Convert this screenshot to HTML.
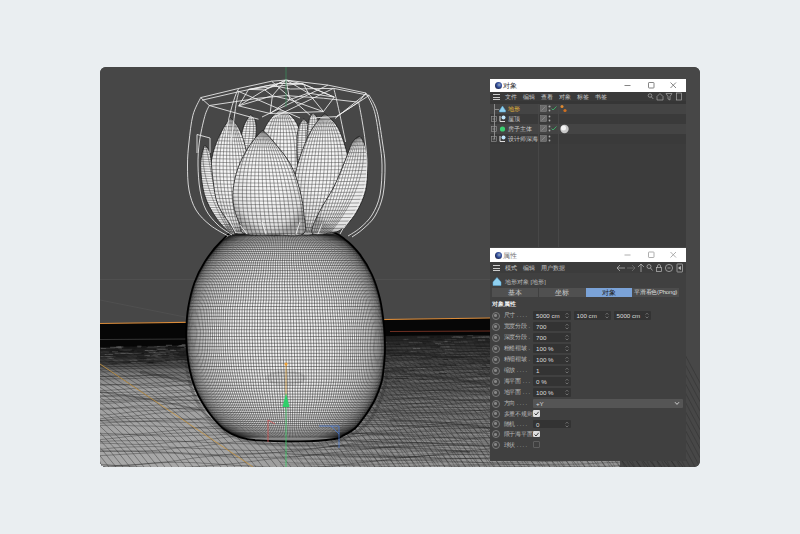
<!DOCTYPE html>
<html><head><meta charset="utf-8">
<style>
*{margin:0;padding:0;box-sizing:border-box}
html,body{width:800px;height:534px;overflow:hidden;background:#eaeef1;font-family:"Liberation Sans",sans-serif}
#frame{position:absolute;left:100px;top:67px;width:600px;height:400px;border-radius:6px;background:#474747;overflow:hidden}
#vp{position:absolute;left:0;top:0}
.abs{position:absolute}
.win{position:absolute;left:490px;width:196px;background:#3c3c3c;overflow:hidden}
.tb{position:absolute;left:0;top:0;width:196px;height:13px;background:#fff}
.tb .t{position:absolute;left:13px;top:2px;font-size:7px;color:#333;line-height:9px}
.c4d{position:absolute;left:5px;top:3px;width:7px;height:7px;border-radius:50%;background:radial-gradient(circle at 60% 40%,#9ab 0,#3350a0 40%,#112 90%)}
.txt{position:absolute;font-size:5.8px;line-height:8px;color:#c8c8c8;white-space:nowrap}
.mb{position:absolute;left:0;width:196px;background:#3a3a3a}
.ham{position:absolute;left:3px;width:7px;height:6px;border-top:1px solid #ccc;border-bottom:1px solid #ccc}
.ham:after{content:"";position:absolute;left:0;top:1.5px;width:7px;height:1px;background:#ccc}
.row{position:absolute;left:0;width:196px;height:10px}
.fld{position:absolute;height:8.6px;background:#333;border-radius:1px}
.fld .v{position:absolute;left:3px;top:0;font-size:6.2px;line-height:9px;color:#ddd}
.spin{position:absolute;right:2px;top:1px;width:4px;height:6px;font-size:4px;line-height:3px;color:#999;text-align:center}
.eye{position:absolute;left:3px;width:8px;height:8px;border-radius:50%;border:1px solid #7a7a7a;background:#444}
.eye:after{content:"";position:absolute;left:1.5px;top:1.7px;width:3px;height:2.6px;border-radius:50%;background:#888}
.lbl{position:absolute;left:15px;font-size:5.6px;line-height:9px;color:#b8b8b8;white-space:nowrap;letter-spacing:-0.1px}
.chk{position:absolute;width:7px;height:6.5px;background:#ddd;border-radius:1px;font-size:6px;line-height:7px;color:#222;text-align:center;font-weight:bold}
.tab{position:absolute;top:288px;height:9px;background:#505050;font-size:6.5px;line-height:9px;color:#ccc;text-align:center;white-space:nowrap;overflow:hidden}
</style></head><body>
<div id="frame">
<svg id="vp" width="600" height="400" viewBox="100 67 600 400">
<defs>
<pattern id="mesh" width="2.1" height="2.3" patternUnits="userSpaceOnUse">
<rect width="2.1" height="2.3" fill="#ebebeb"/>
<path d="M0 0 H2.1 M0 0 V2.3" stroke="#262626" stroke-width="0.66"/>
</pattern>
<pattern id="lmesh" width="3.2" height="3" patternUnits="userSpaceOnUse">
<rect width="3.2" height="3" fill="#f4f4f4"/>
<path d="M0 0 H3.2 M0 0 V3" stroke="#2a2a2a" stroke-width="0.45"/>
</pattern>
<radialGradient id="bshade" cx="0.49" cy="0.5" r="0.54">
<stop offset="0.45" stop-color="#000" stop-opacity="0"/>
<stop offset="0.8" stop-color="#000" stop-opacity="0.15"/>
<stop offset="0.93" stop-color="#000" stop-opacity="0.38"/>
<stop offset="1" stop-color="#000" stop-opacity="0.7"/>
</radialGradient>
<linearGradient id="terrL" gradientUnits="userSpaceOnUse" x1="0" y1="346" x2="0" y2="467">
<stop offset="0" stop-color="#141414"/>
<stop offset="0.12" stop-color="#383838"/>
<stop offset="0.22" stop-color="#787878"/>
<stop offset="0.35" stop-color="#9e9e9e"/>
<stop offset="1" stop-color="#a8a8a8"/>
</linearGradient>
<linearGradient id="terrR" gradientUnits="userSpaceOnUse" x1="0" y1="335" x2="0" y2="467">
<stop offset="0" stop-color="#1a1a1a"/>
<stop offset="0.12" stop-color="#404040"/>
<stop offset="0.4" stop-color="#6a6a6a"/>
<stop offset="0.7" stop-color="#858585"/>
<stop offset="1" stop-color="#959595"/>
</linearGradient>
<radialGradient id="lshade" cx="0.5" cy="0.4" r="0.6">
<stop offset="0.4" stop-color="#000" stop-opacity="0"/>
<stop offset="0.85" stop-color="#000" stop-opacity="0.08"/>
<stop offset="1" stop-color="#000" stop-opacity="0.3"/>
</radialGradient>
<linearGradient id="btop" x1="0" y1="0" x2="0" y2="1">
<stop offset="0" stop-color="#000" stop-opacity="0.22"/>
<stop offset="0.15" stop-color="#000" stop-opacity="0.08"/>
<stop offset="0.3" stop-color="#000" stop-opacity="0"/>
<stop offset="0.8" stop-color="#000" stop-opacity="0"/>
<stop offset="1" stop-color="#000" stop-opacity="0.15"/>
</linearGradient>
<linearGradient id="rgrad" gradientUnits="userSpaceOnUse" x1="200" y1="0" x2="390" y2="0">
<stop offset="0" stop-color="#000"/>
<stop offset="1" stop-color="#fff"/>
</linearGradient>
<mask id="rmask" maskUnits="userSpaceOnUse" x="100" y="300" width="600" height="200"><rect x="100" y="300" width="600" height="200" fill="url(#rgrad)"/></mask>
</defs>
<rect x="100" y="67" width="600" height="400" fill="#474747"/>
<!-- faint grid -->
<g stroke="#555" stroke-width="0.6" fill="none">
<path d="M100 279.5 L490 279.5"/>
<path d="M100 300 L190 318"/>
</g>
<!-- terrain -->
<polygon points="100,323.5 490,318 620,317 620,467 100,467" fill="#060606"/>
<polygon points="100,347 190,345 285,341 390,336 490,335 620,334 620,467 100,467" fill="url(#terrL)"/>
<polygon points="100,347 190,345 285,341 390,336 490,335 620,334 620,467 100,467" fill="url(#terrR)" mask="url(#rmask)"/>
<path d="M 367.4 343.5 h 12.0" stroke="#111" stroke-width="0.8" stroke-opacity="0.6"/>
<path d="M 234.9 360.7 h 8.3" stroke="#888" stroke-width="0.8" stroke-opacity="0.6"/>
<path d="M 144.8 350.5 h 12.5" stroke="#888" stroke-width="0.8" stroke-opacity="0.6"/>
<path d="M 327.5 341.6 h 8.8" stroke="#5a5a5a" stroke-width="0.8" stroke-opacity="0.6"/>
<path d="M 286.3 359.1 h 12.5" stroke="#111" stroke-width="0.8" stroke-opacity="0.6"/>
<path d="M 246.2 342.7 h 6.8" stroke="#888" stroke-width="0.8" stroke-opacity="0.6"/>
<path d="M 343.1 366.0 h 13.7" stroke="#0a0a0a" stroke-width="0.8" stroke-opacity="0.6"/>
<path d="M 218.1 358.5 h 12.7" stroke="#0a0a0a" stroke-width="0.8" stroke-opacity="0.6"/>
<path d="M 226.1 347.8 h 13.2" stroke="#5a5a5a" stroke-width="0.8" stroke-opacity="0.6"/>
<path d="M 460.3 348.3 h 9.1" stroke="#5a5a5a" stroke-width="0.8" stroke-opacity="0.6"/>
<path d="M 264.9 346.0 h 5.0" stroke="#5a5a5a" stroke-width="0.8" stroke-opacity="0.6"/>
<path d="M 372.1 357.6 h 7.2" stroke="#777" stroke-width="0.8" stroke-opacity="0.6"/>
<path d="M 226.4 344.3 h 13.1" stroke="#111" stroke-width="0.8" stroke-opacity="0.6"/>
<path d="M 167.3 349.4 h 5.2" stroke="#111" stroke-width="0.8" stroke-opacity="0.6"/>
<path d="M 315.6 350.3 h 11.0" stroke="#0a0a0a" stroke-width="0.8" stroke-opacity="0.6"/>
<path d="M 288.1 345.3 h 8.6" stroke="#888" stroke-width="0.8" stroke-opacity="0.6"/>
<path d="M 146.5 353.0 h 4.3" stroke="#111" stroke-width="0.8" stroke-opacity="0.6"/>
<path d="M 438.7 353.2 h 7.4" stroke="#777" stroke-width="0.8" stroke-opacity="0.6"/>
<path d="M 287.0 366.7 h 5.5" stroke="#5a5a5a" stroke-width="0.8" stroke-opacity="0.6"/>
<path d="M 145.7 362.2 h 8.2" stroke="#111" stroke-width="0.8" stroke-opacity="0.6"/>
<path d="M 157.5 349.3 h 10.5" stroke="#5a5a5a" stroke-width="0.8" stroke-opacity="0.6"/>
<path d="M 322.8 356.6 h 5.2" stroke="#888" stroke-width="0.8" stroke-opacity="0.6"/>
<path d="M 196.3 346.4 h 6.8" stroke="#5a5a5a" stroke-width="0.8" stroke-opacity="0.6"/>
<path d="M 452.1 337.6 h 10.7" stroke="#777" stroke-width="0.8" stroke-opacity="0.6"/>
<path d="M 187.9 349.9 h 13.7" stroke="#5a5a5a" stroke-width="0.8" stroke-opacity="0.6"/>
<path d="M 423.1 339.5 h 3.5" stroke="#111" stroke-width="0.8" stroke-opacity="0.6"/>
<path d="M 205.1 350.3 h 7.1" stroke="#111" stroke-width="0.8" stroke-opacity="0.6"/>
<path d="M 390.5 354.2 h 10.6" stroke="#111" stroke-width="0.8" stroke-opacity="0.6"/>
<path d="M 481.4 348.0 h 6.2" stroke="#5a5a5a" stroke-width="0.8" stroke-opacity="0.6"/>
<path d="M 328.4 350.9 h 3.5" stroke="#888" stroke-width="0.8" stroke-opacity="0.6"/>
<path d="M 268.2 341.8 h 11.7" stroke="#888" stroke-width="0.8" stroke-opacity="0.6"/>
<path d="M 296.9 382.8 h 12.3" stroke="#5a5a5a" stroke-width="0.8" stroke-opacity="0.6"/>
<path d="M 200.2 352.9 h 9.2" stroke="#5a5a5a" stroke-width="0.8" stroke-opacity="0.6"/>
<path d="M 179.0 345.7 h 13.8" stroke="#777" stroke-width="0.8" stroke-opacity="0.6"/>
<path d="M 289.0 369.7 h 4.6" stroke="#0a0a0a" stroke-width="0.8" stroke-opacity="0.6"/>
<path d="M 231.4 356.2 h 11.0" stroke="#5a5a5a" stroke-width="0.8" stroke-opacity="0.6"/>
<path d="M 153.3 354.2 h 12.7" stroke="#888" stroke-width="0.8" stroke-opacity="0.6"/>
<path d="M 137.2 356.3 h 9.9" stroke="#0a0a0a" stroke-width="0.8" stroke-opacity="0.6"/>
<path d="M 252.4 347.8 h 13.9" stroke="#0a0a0a" stroke-width="0.8" stroke-opacity="0.6"/>
<path d="M 272.7 343.0 h 12.1" stroke="#777" stroke-width="0.8" stroke-opacity="0.6"/>
<path d="M 209.8 354.1 h 4.9" stroke="#777" stroke-width="0.8" stroke-opacity="0.6"/>
<path d="M 231.3 354.1 h 12.2" stroke="#5a5a5a" stroke-width="0.8" stroke-opacity="0.6"/>
<path d="M 139.6 358.7 h 7.3" stroke="#0a0a0a" stroke-width="0.8" stroke-opacity="0.6"/>
<path d="M 273.6 351.5 h 6.6" stroke="#888" stroke-width="0.8" stroke-opacity="0.6"/>
<path d="M 272.0 343.8 h 3.1" stroke="#888" stroke-width="0.8" stroke-opacity="0.6"/>
<path d="M 189.7 349.1 h 4.1" stroke="#5a5a5a" stroke-width="0.8" stroke-opacity="0.6"/>
<path d="M 482.7 337.0 h 10.3" stroke="#888" stroke-width="0.8" stroke-opacity="0.6"/>
<path d="M 213.1 343.6 h 3.3" stroke="#5a5a5a" stroke-width="0.8" stroke-opacity="0.6"/>
<path d="M 187.1 349.8 h 8.6" stroke="#0a0a0a" stroke-width="0.8" stroke-opacity="0.6"/>
<path d="M 248.7 357.7 h 5.3" stroke="#0a0a0a" stroke-width="0.8" stroke-opacity="0.6"/>
<path d="M 266.4 345.0 h 3.7" stroke="#111" stroke-width="0.8" stroke-opacity="0.6"/>
<path d="M 295.0 342.4 h 13.2" stroke="#0a0a0a" stroke-width="0.8" stroke-opacity="0.6"/>
<path d="M 466.1 338.3 h 8.7" stroke="#5a5a5a" stroke-width="0.8" stroke-opacity="0.6"/>
<path d="M 489.8 338.1 h 7.0" stroke="#5a5a5a" stroke-width="0.8" stroke-opacity="0.6"/>
<path d="M 147.6 351.9 h 8.3" stroke="#888" stroke-width="0.8" stroke-opacity="0.6"/>
<path d="M 388.8 368.5 h 3.2" stroke="#777" stroke-width="0.8" stroke-opacity="0.6"/>
<path d="M 284.7 341.3 h 10.8" stroke="#111" stroke-width="0.8" stroke-opacity="0.6"/>
<path d="M 453.2 336.6 h 10.4" stroke="#5a5a5a" stroke-width="0.8" stroke-opacity="0.6"/>
<path d="M 418.5 352.7 h 11.6" stroke="#888" stroke-width="0.8" stroke-opacity="0.6"/>
<path d="M 220.5 350.9 h 7.5" stroke="#777" stroke-width="0.8" stroke-opacity="0.6"/>
<path d="M 144.3 355.7 h 5.6" stroke="#888" stroke-width="0.8" stroke-opacity="0.6"/>
<path d="M 390.5 355.5 h 11.5" stroke="#0a0a0a" stroke-width="0.8" stroke-opacity="0.6"/>
<path d="M 154.2 346.5 h 13.6" stroke="#5a5a5a" stroke-width="0.8" stroke-opacity="0.6"/>
<path d="M 299.9 383.3 h 3.1" stroke="#777" stroke-width="0.8" stroke-opacity="0.6"/>
<path d="M 241.3 349.0 h 3.9" stroke="#5a5a5a" stroke-width="0.8" stroke-opacity="0.6"/>
<path d="M 318.6 351.3 h 8.1" stroke="#0a0a0a" stroke-width="0.8" stroke-opacity="0.6"/>
<path d="M 465.8 344.0 h 8.3" stroke="#5a5a5a" stroke-width="0.8" stroke-opacity="0.6"/>
<path d="M 406.8 366.7 h 5.3" stroke="#777" stroke-width="0.8" stroke-opacity="0.6"/>
<path d="M 353.7 368.1 h 13.5" stroke="#111" stroke-width="0.8" stroke-opacity="0.6"/>
<path d="M 393.7 365.4 h 9.6" stroke="#888" stroke-width="0.8" stroke-opacity="0.6"/>
<path d="M 489.2 335.5 h 7.4" stroke="#111" stroke-width="0.8" stroke-opacity="0.6"/>
<path d="M 170.8 345.4 h 5.0" stroke="#0a0a0a" stroke-width="0.8" stroke-opacity="0.6"/>
<path d="M 276.4 346.7 h 7.6" stroke="#0a0a0a" stroke-width="0.8" stroke-opacity="0.6"/>
<path d="M 232.7 348.0 h 3.4" stroke="#111" stroke-width="0.8" stroke-opacity="0.6"/>
<path d="M 241.8 353.8 h 6.0" stroke="#888" stroke-width="0.8" stroke-opacity="0.6"/>
<path d="M 153.8 360.2 h 11.4" stroke="#777" stroke-width="0.8" stroke-opacity="0.6"/>
<path d="M 350.4 367.2 h 4.1" stroke="#111" stroke-width="0.8" stroke-opacity="0.6"/>
<path d="M 286.5 351.7 h 8.5" stroke="#111" stroke-width="0.8" stroke-opacity="0.6"/>
<path d="M 339.0 354.3 h 3.6" stroke="#0a0a0a" stroke-width="0.8" stroke-opacity="0.6"/>
<path d="M 378.9 377.8 h 5.1" stroke="#777" stroke-width="0.8" stroke-opacity="0.6"/>
<path d="M 482.0 337.5 h 11.5" stroke="#777" stroke-width="0.8" stroke-opacity="0.6"/>
<path d="M 147.6 353.8 h 13.4" stroke="#5a5a5a" stroke-width="0.8" stroke-opacity="0.6"/>
<path d="M 314.2 342.5 h 7.6" stroke="#888" stroke-width="0.8" stroke-opacity="0.6"/>
<path d="M 161.5 355.4 h 9.9" stroke="#111" stroke-width="0.8" stroke-opacity="0.6"/>
<path d="M 223.1 348.5 h 13.2" stroke="#5a5a5a" stroke-width="0.8" stroke-opacity="0.6"/>
<path d="M 314.5 360.8 h 6.8" stroke="#0a0a0a" stroke-width="0.8" stroke-opacity="0.6"/>
<path d="M 250.3 359.7 h 6.1" stroke="#777" stroke-width="0.8" stroke-opacity="0.6"/>
<path d="M 180.6 348.9 h 12.4" stroke="#5a5a5a" stroke-width="0.8" stroke-opacity="0.6"/>
<path d="M 189.4 359.6 h 6.7" stroke="#5a5a5a" stroke-width="0.8" stroke-opacity="0.6"/>
<path d="M 401.8 371.9 h 5.3" stroke="#111" stroke-width="0.8" stroke-opacity="0.6"/>
<path d="M 100.6 356.3 h 12.0" stroke="#888" stroke-width="0.8" stroke-opacity="0.6"/>
<path d="M 464.2 365.2 h 12.0" stroke="#777" stroke-width="0.8" stroke-opacity="0.6"/>
<path d="M 408.6 346.6 h 6.2" stroke="#5a5a5a" stroke-width="0.8" stroke-opacity="0.6"/>
<path d="M 477.7 374.1 h 13.1" stroke="#0a0a0a" stroke-width="0.8" stroke-opacity="0.6"/>
<path d="M 404.7 351.4 h 5.8" stroke="#0a0a0a" stroke-width="0.8" stroke-opacity="0.6"/>
<path d="M 452.8 342.3 h 6.2" stroke="#0a0a0a" stroke-width="0.8" stroke-opacity="0.6"/>
<path d="M 178.2 360.5 h 6.4" stroke="#777" stroke-width="0.8" stroke-opacity="0.6"/>
<path d="M 141.6 361.0 h 7.4" stroke="#5a5a5a" stroke-width="0.8" stroke-opacity="0.6"/>
<path d="M 410.0 368.4 h 5.6" stroke="#777" stroke-width="0.8" stroke-opacity="0.6"/>
<path d="M 337.1 341.6 h 4.9" stroke="#5a5a5a" stroke-width="0.8" stroke-opacity="0.6"/>
<path d="M 234.1 344.1 h 6.6" stroke="#777" stroke-width="0.8" stroke-opacity="0.6"/>
<path d="M 403.9 359.0 h 3.7" stroke="#5a5a5a" stroke-width="0.8" stroke-opacity="0.6"/>
<path d="M 316.8 340.5 h 7.9" stroke="#111" stroke-width="0.8" stroke-opacity="0.6"/>
<path d="M 489.3 338.1 h 3.0" stroke="#888" stroke-width="0.8" stroke-opacity="0.6"/>
<path d="M 244.1 356.8 h 6.1" stroke="#0a0a0a" stroke-width="0.8" stroke-opacity="0.6"/>
<path d="M 177.2 350.3 h 8.2" stroke="#5a5a5a" stroke-width="0.8" stroke-opacity="0.6"/>
<path d="M 385.4 378.8 h 6.6" stroke="#0a0a0a" stroke-width="0.8" stroke-opacity="0.6"/>
<path d="M 293.4 354.7 h 8.2" stroke="#5a5a5a" stroke-width="0.8" stroke-opacity="0.6"/>
<path d="M 172.6 362.3 h 4.3" stroke="#888" stroke-width="0.8" stroke-opacity="0.6"/>
<path d="M 168.3 357.7 h 5.9" stroke="#777" stroke-width="0.8" stroke-opacity="0.6"/>
<path d="M 241.5 342.7 h 5.4" stroke="#5a5a5a" stroke-width="0.8" stroke-opacity="0.6"/>
<path d="M 442.0 380.1 h 3.6" stroke="#111" stroke-width="0.8" stroke-opacity="0.6"/>
<path d="M 164.4 354.3 h 8.5" stroke="#5a5a5a" stroke-width="0.8" stroke-opacity="0.6"/>
<path d="M 390.2 370.0 h 14.0" stroke="#111" stroke-width="0.8" stroke-opacity="0.6"/>
<path d="M 441.3 354.8 h 3.9" stroke="#777" stroke-width="0.8" stroke-opacity="0.6"/>
<path d="M 359.6 343.1 h 4.1" stroke="#777" stroke-width="0.8" stroke-opacity="0.6"/>
<path d="M 358.3 339.3 h 5.3" stroke="#111" stroke-width="0.8" stroke-opacity="0.6"/>
<path d="M 114.7 353.1 h 13.3" stroke="#888" stroke-width="0.8" stroke-opacity="0.6"/>
<path d="M 227.2 348.4 h 13.8" stroke="#5a5a5a" stroke-width="0.8" stroke-opacity="0.6"/>
<path d="M 398.9 364.1 h 3.2" stroke="#888" stroke-width="0.8" stroke-opacity="0.6"/>
<path d="M 373.8 361.9 h 3.2" stroke="#0a0a0a" stroke-width="0.8" stroke-opacity="0.6"/>
<path d="M 269.7 352.4 h 6.8" stroke="#0a0a0a" stroke-width="0.8" stroke-opacity="0.6"/>
<path d="M 303.6 365.4 h 4.5" stroke="#5a5a5a" stroke-width="0.8" stroke-opacity="0.6"/>
<path d="M 435.2 343.4 h 5.6" stroke="#888" stroke-width="0.8" stroke-opacity="0.6"/>
<path d="M 312.5 349.1 h 11.9" stroke="#888" stroke-width="0.8" stroke-opacity="0.6"/>
<path d="M 303.0 367.0 h 6.5" stroke="#5a5a5a" stroke-width="0.8" stroke-opacity="0.6"/>
<path d="M 234.5 354.6 h 4.9" stroke="#5a5a5a" stroke-width="0.8" stroke-opacity="0.6"/>
<path d="M 128.7 362.2 h 11.0" stroke="#0a0a0a" stroke-width="0.8" stroke-opacity="0.6"/>
<path d="M 277.7 358.6 h 8.6" stroke="#888" stroke-width="0.8" stroke-opacity="0.6"/>
<path d="M 459.4 358.2 h 3.1" stroke="#5a5a5a" stroke-width="0.8" stroke-opacity="0.6"/>
<path d="M 271.9 341.9 h 10.0" stroke="#0a0a0a" stroke-width="0.8" stroke-opacity="0.6"/>
<path d="M 357.5 360.1 h 9.8" stroke="#111" stroke-width="0.8" stroke-opacity="0.6"/>
<path d="M 308.6 369.5 h 11.5" stroke="#888" stroke-width="0.8" stroke-opacity="0.6"/>
<path d="M 430.5 381.7 h 4.0" stroke="#777" stroke-width="0.8" stroke-opacity="0.6"/>
<path d="M 417.1 368.4 h 7.4" stroke="#888" stroke-width="0.8" stroke-opacity="0.6"/>
<path d="M 178.9 347.0 h 4.5" stroke="#0a0a0a" stroke-width="0.8" stroke-opacity="0.6"/>
<path d="M 453.8 342.1 h 13.9" stroke="#888" stroke-width="0.8" stroke-opacity="0.6"/>
<path d="M 343.8 344.7 h 10.4" stroke="#777" stroke-width="0.8" stroke-opacity="0.6"/>
<path d="M 213.0 353.2 h 11.9" stroke="#777" stroke-width="0.8" stroke-opacity="0.6"/>
<path d="M 100.6 352.2 h 8.4" stroke="#777" stroke-width="0.8" stroke-opacity="0.6"/>
<path d="M 455.8 358.9 h 11.6" stroke="#888" stroke-width="0.8" stroke-opacity="0.6"/>
<path d="M 343.8 359.6 h 8.5" stroke="#0a0a0a" stroke-width="0.8" stroke-opacity="0.6"/>
<path d="M 285.7 346.6 h 5.2" stroke="#777" stroke-width="0.8" stroke-opacity="0.6"/>
<path d="M 241.8 349.7 h 6.8" stroke="#777" stroke-width="0.8" stroke-opacity="0.6"/>
<path d="M 169.8 350.7 h 6.6" stroke="#888" stroke-width="0.8" stroke-opacity="0.6"/>
<path d="M 432.0 356.7 h 5.6" stroke="#0a0a0a" stroke-width="0.8" stroke-opacity="0.6"/>
<path d="M 347.4 340.1 h 11.3" stroke="#888" stroke-width="0.8" stroke-opacity="0.6"/>
<path d="M 364.8 347.0 h 9.3" stroke="#0a0a0a" stroke-width="0.8" stroke-opacity="0.6"/>
<path d="M 197.2 358.4 h 12.0" stroke="#0a0a0a" stroke-width="0.8" stroke-opacity="0.6"/>
<path d="M 246.9 348.0 h 10.4" stroke="#111" stroke-width="0.8" stroke-opacity="0.6"/>
<path d="M 122.6 362.2 h 12.3" stroke="#0a0a0a" stroke-width="0.8" stroke-opacity="0.6"/>
<path d="M 131.4 361.9 h 7.6" stroke="#5a5a5a" stroke-width="0.8" stroke-opacity="0.6"/>
<path d="M 148.0 346.9 h 11.8" stroke="#777" stroke-width="0.8" stroke-opacity="0.6"/>
<path d="M 258.8 342.3 h 10.6" stroke="#111" stroke-width="0.8" stroke-opacity="0.6"/>
<path d="M 396.3 363.5 h 12.3" stroke="#777" stroke-width="0.8" stroke-opacity="0.6"/>
<path d="M 469.7 376.8 h 5.0" stroke="#5a5a5a" stroke-width="0.8" stroke-opacity="0.6"/>
<path d="M 442.9 365.1 h 13.2" stroke="#0a0a0a" stroke-width="0.8" stroke-opacity="0.6"/>
<path d="M 239.0 349.2 h 11.2" stroke="#111" stroke-width="0.8" stroke-opacity="0.6"/>
<path d="M 244.3 346.4 h 9.8" stroke="#888" stroke-width="0.8" stroke-opacity="0.6"/>
<path d="M 241.7 354.0 h 5.7" stroke="#888" stroke-width="0.8" stroke-opacity="0.6"/>
<path d="M 289.4 345.0 h 9.3" stroke="#111" stroke-width="0.8" stroke-opacity="0.6"/>
<path d="M 482.1 365.0 h 8.8" stroke="#111" stroke-width="0.8" stroke-opacity="0.6"/>
<path d="M 444.6 339.4 h 12.1" stroke="#5a5a5a" stroke-width="0.8" stroke-opacity="0.6"/>
<path d="M 486.4 364.9 h 7.3" stroke="#888" stroke-width="0.8" stroke-opacity="0.6"/>
<path d="M 247.3 343.1 h 12.6" stroke="#0a0a0a" stroke-width="0.8" stroke-opacity="0.6"/>
<path d="M 241.2 355.4 h 5.9" stroke="#111" stroke-width="0.8" stroke-opacity="0.6"/>
<path d="M 351.7 369.9 h 4.7" stroke="#5a5a5a" stroke-width="0.8" stroke-opacity="0.6"/>
<path d="M 301.5 347.7 h 13.8" stroke="#0a0a0a" stroke-width="0.8" stroke-opacity="0.6"/>
<path d="M 395.9 344.5 h 5.1" stroke="#111" stroke-width="0.8" stroke-opacity="0.6"/>
<path d="M 354.6 343.6 h 10.9" stroke="#0a0a0a" stroke-width="0.8" stroke-opacity="0.6"/>
<path d="M 191.0 358.8 h 5.9" stroke="#888" stroke-width="0.8" stroke-opacity="0.6"/>
<path d="M 353.0 368.5 h 13.8" stroke="#777" stroke-width="0.8" stroke-opacity="0.6"/>
<path d="M 300.2 383.0 h 3.2" stroke="#0a0a0a" stroke-width="0.8" stroke-opacity="0.6"/>
<path d="M 261.1 356.1 h 13.5" stroke="#0a0a0a" stroke-width="0.8" stroke-opacity="0.6"/>
<path d="M 313.2 381.3 h 6.4" stroke="#5a5a5a" stroke-width="0.8" stroke-opacity="0.6"/>
<path d="M 148.9 352.4 h 5.8" stroke="#888" stroke-width="0.8" stroke-opacity="0.6"/>
<path d="M 413.8 352.0 h 11.3" stroke="#111" stroke-width="0.8" stroke-opacity="0.6"/>
<path d="M 201.8 346.0 h 10.4" stroke="#0a0a0a" stroke-width="0.8" stroke-opacity="0.6"/>
<path d="M 398.0 367.6 h 3.9" stroke="#5a5a5a" stroke-width="0.8" stroke-opacity="0.6"/>
<path d="M 104.7 354.5 h 8.4" stroke="#777" stroke-width="0.8" stroke-opacity="0.6"/>
<path d="M 317.8 353.1 h 4.3" stroke="#111" stroke-width="0.8" stroke-opacity="0.6"/>
<path d="M 222.6 356.5 h 6.9" stroke="#0a0a0a" stroke-width="0.8" stroke-opacity="0.6"/>
<path d="M 256.3 342.6 h 13.7" stroke="#777" stroke-width="0.8" stroke-opacity="0.6"/>
<path d="M 365.9 351.9 h 11.0" stroke="#5a5a5a" stroke-width="0.8" stroke-opacity="0.6"/>
<path d="M 312.2 376.3 h 9.5" stroke="#5a5a5a" stroke-width="0.8" stroke-opacity="0.6"/>
<path d="M 208.4 352.9 h 5.7" stroke="#5a5a5a" stroke-width="0.8" stroke-opacity="0.6"/>
<path d="M 437.2 337.1 h 3.8" stroke="#0a0a0a" stroke-width="0.8" stroke-opacity="0.6"/>
<path d="M 100.7 348.5 h 5.5" stroke="#777" stroke-width="0.8" stroke-opacity="0.6"/>
<path d="M 178.2 345.8 h 11.4" stroke="#888" stroke-width="0.8" stroke-opacity="0.6"/>
<path d="M 254.0 348.7 h 3.3" stroke="#777" stroke-width="0.8" stroke-opacity="0.6"/>
<path d="M 419.7 341.4 h 11.6" stroke="#111" stroke-width="0.8" stroke-opacity="0.6"/>
<path d="M 404.4 339.3 h 4.0" stroke="#777" stroke-width="0.8" stroke-opacity="0.6"/>
<path d="M 318.8 347.8 h 12.2" stroke="#888" stroke-width="0.8" stroke-opacity="0.6"/>
<path d="M 171.4 346.2 h 10.6" stroke="#777" stroke-width="0.8" stroke-opacity="0.6"/>
<path d="M 445.0 352.3 h 4.7" stroke="#888" stroke-width="0.8" stroke-opacity="0.6"/>
<path d="M 187.9 350.4 h 7.4" stroke="#777" stroke-width="0.8" stroke-opacity="0.6"/>
<path d="M 444.8 341.4 h 6.3" stroke="#5a5a5a" stroke-width="0.8" stroke-opacity="0.6"/>
<path d="M 443.2 359.5 h 4.8" stroke="#0a0a0a" stroke-width="0.8" stroke-opacity="0.6"/>
<path d="M 110.1 347.3 h 11.6" stroke="#777" stroke-width="0.8" stroke-opacity="0.6"/>
<path d="M 433.9 371.2 h 9.1" stroke="#5a5a5a" stroke-width="0.8" stroke-opacity="0.6"/>
<path d="M 372.1 357.4 h 7.7" stroke="#777" stroke-width="0.8" stroke-opacity="0.6"/>
<path d="M 214.9 348.7 h 8.5" stroke="#888" stroke-width="0.8" stroke-opacity="0.6"/>
<path d="M 147.2 362.8 h 9.3" stroke="#0a0a0a" stroke-width="0.8" stroke-opacity="0.6"/>
<path d="M 448.2 341.1 h 12.7" stroke="#0a0a0a" stroke-width="0.8" stroke-opacity="0.6"/>
<path d="M 204.3 344.6 h 11.8" stroke="#111" stroke-width="0.8" stroke-opacity="0.6"/>
<path d="M 110.4 351.0 h 12.2" stroke="#0a0a0a" stroke-width="0.8" stroke-opacity="0.6"/>
<path d="M 263.4 353.5 h 4.0" stroke="#111" stroke-width="0.8" stroke-opacity="0.6"/>
<path d="M 111.6 363.8 h 5.6" stroke="#0a0a0a" stroke-width="0.8" stroke-opacity="0.6"/>
<path d="M 419.0 379.1 h 8.2" stroke="#111" stroke-width="0.8" stroke-opacity="0.6"/>
<path d="M 213.9 357.2 h 4.2" stroke="#5a5a5a" stroke-width="0.8" stroke-opacity="0.6"/>
<path d="M 331.0 340.6 h 13.4" stroke="#5a5a5a" stroke-width="0.8" stroke-opacity="0.6"/>
<path d="M 113.7 347.9 h 4.3" stroke="#5a5a5a" stroke-width="0.8" stroke-opacity="0.6"/>
<path d="M 367.9 360.8 h 8.2" stroke="#777" stroke-width="0.8" stroke-opacity="0.6"/>
<path d="M 433.1 370.3 h 10.9" stroke="#111" stroke-width="0.8" stroke-opacity="0.6"/>
<path d="M 119.6 350.0 h 12.3" stroke="#5a5a5a" stroke-width="0.8" stroke-opacity="0.6"/>
<path d="M 179.6 356.0 h 6.5" stroke="#0a0a0a" stroke-width="0.8" stroke-opacity="0.6"/>
<path d="M 216.8 355.0 h 7.2" stroke="#111" stroke-width="0.8" stroke-opacity="0.6"/>
<path d="M 199.9 354.2 h 5.3" stroke="#0a0a0a" stroke-width="0.8" stroke-opacity="0.6"/>
<path d="M 476.4 346.3 h 13.6" stroke="#0a0a0a" stroke-width="0.8" stroke-opacity="0.6"/>
<path d="M 440.8 364.5 h 9.0" stroke="#5a5a5a" stroke-width="0.8" stroke-opacity="0.6"/>
<path d="M 366.2 342.7 h 8.7" stroke="#0a0a0a" stroke-width="0.8" stroke-opacity="0.6"/>
<path d="M 253.5 359.1 h 10.0" stroke="#5a5a5a" stroke-width="0.8" stroke-opacity="0.6"/>
<path d="M 410.0 370.4 h 4.6" stroke="#0a0a0a" stroke-width="0.8" stroke-opacity="0.6"/>
<path d="M 101.0 348.3 h 13.7" stroke="#5a5a5a" stroke-width="0.8" stroke-opacity="0.6"/>
<path d="M 387.8 350.1 h 11.9" stroke="#111" stroke-width="0.8" stroke-opacity="0.6"/>
<path d="M 300.2 348.3 h 7.5" stroke="#111" stroke-width="0.8" stroke-opacity="0.6"/>
<path d="M 408.2 345.0 h 10.8" stroke="#0a0a0a" stroke-width="0.8" stroke-opacity="0.6"/>
<path d="M 340.6 347.6 h 4.2" stroke="#111" stroke-width="0.8" stroke-opacity="0.6"/>
<path d="M 338.0 345.6 h 8.1" stroke="#777" stroke-width="0.8" stroke-opacity="0.6"/>
<path d="M 489.5 348.8 h 9.3" stroke="#0a0a0a" stroke-width="0.8" stroke-opacity="0.6"/>
<path d="M 437.9 339.5 h 4.2" stroke="#111" stroke-width="0.8" stroke-opacity="0.6"/>
<path d="M 379.1 342.8 h 7.8" stroke="#777" stroke-width="0.8" stroke-opacity="0.6"/>
<path d="M 387.5 358.2 h 6.2" stroke="#5a5a5a" stroke-width="0.8" stroke-opacity="0.6"/>
<path d="M 128.7 354.3 h 5.1" stroke="#777" stroke-width="0.8" stroke-opacity="0.6"/>
<path d="M 116.4 351.2 h 7.3" stroke="#111" stroke-width="0.8" stroke-opacity="0.6"/>
<path d="M 436.0 349.4 h 3.2" stroke="#777" stroke-width="0.8" stroke-opacity="0.6"/>
<path d="M 247.0 357.0 h 8.0" stroke="#888" stroke-width="0.8" stroke-opacity="0.6"/>
<path d="M 169.3 355.4 h 4.9" stroke="#5a5a5a" stroke-width="0.8" stroke-opacity="0.6"/>
<path d="M 144.0 353.4 h 13.0" stroke="#5a5a5a" stroke-width="0.8" stroke-opacity="0.6"/>
<path d="M 344.0 347.2 h 10.0" stroke="#0a0a0a" stroke-width="0.8" stroke-opacity="0.6"/>
<path d="M 208.9 347.1 h 3.0" stroke="#111" stroke-width="0.8" stroke-opacity="0.6"/>
<path d="M 378.2 382.0 h 3.4" stroke="#5a5a5a" stroke-width="0.8" stroke-opacity="0.6"/>
<path d="M 467.4 335.7 h 5.7" stroke="#5a5a5a" stroke-width="0.8" stroke-opacity="0.6"/>
<path d="M 326.6 340.9 h 9.9" stroke="#777" stroke-width="0.8" stroke-opacity="0.6"/>
<path d="M 246.9 342.5 h 8.0" stroke="#0a0a0a" stroke-width="0.8" stroke-opacity="0.6"/>
<path d="M 153.3 350.0 h 4.7" stroke="#0a0a0a" stroke-width="0.8" stroke-opacity="0.6"/>
<path d="M 137.2 346.2 h 4.3" stroke="#777" stroke-width="0.8" stroke-opacity="0.6"/>
<path d="M 196.4 347.3 h 7.9" stroke="#0a0a0a" stroke-width="0.8" stroke-opacity="0.6"/>
<path d="M 118.1 348.4 h 3.8" stroke="#777" stroke-width="0.8" stroke-opacity="0.6"/>
<path d="M 285.6 377.3 h 5.7" stroke="#888" stroke-width="0.8" stroke-opacity="0.6"/>
<path d="M 426.5 370.9 h 4.9" stroke="#5a5a5a" stroke-width="0.8" stroke-opacity="0.6"/>
<path d="M 245.4 346.0 h 4.1" stroke="#888" stroke-width="0.8" stroke-opacity="0.6"/>
<path d="M 272.6 345.3 h 4.9" stroke="#888" stroke-width="0.8" stroke-opacity="0.6"/>
<path d="M 136.5 362.8 h 8.2" stroke="#5a5a5a" stroke-width="0.8" stroke-opacity="0.6"/>
<path d="M 343.6 356.4 h 8.5" stroke="#111" stroke-width="0.8" stroke-opacity="0.6"/>
<path d="M 125.8 346.8 h 3.8" stroke="#0a0a0a" stroke-width="0.8" stroke-opacity="0.6"/>
<path d="M 194.0 347.3 h 10.1" stroke="#888" stroke-width="0.8" stroke-opacity="0.6"/>
<path d="M 166.7 353.9 h 12.1" stroke="#0a0a0a" stroke-width="0.8" stroke-opacity="0.6"/>
<path d="M 304.9 367.2 h 12.5" stroke="#888" stroke-width="0.8" stroke-opacity="0.6"/>
<path d="M 234.0 360.6 h 11.7" stroke="#888" stroke-width="0.8" stroke-opacity="0.6"/>
<path d="M 129.5 360.2 h 7.4" stroke="#777" stroke-width="0.8" stroke-opacity="0.6"/>
<path d="M 195.9 346.7 h 6.4" stroke="#5a5a5a" stroke-width="0.8" stroke-opacity="0.6"/>
<path d="M 277.1 357.0 h 6.7" stroke="#5a5a5a" stroke-width="0.8" stroke-opacity="0.6"/>
<path d="M 231.3 350.8 h 9.2" stroke="#777" stroke-width="0.8" stroke-opacity="0.6"/>
<path d="M 434.8 363.4 h 5.1" stroke="#5a5a5a" stroke-width="0.8" stroke-opacity="0.6"/>
<path d="M 325.6 355.2 h 9.2" stroke="#5a5a5a" stroke-width="0.8" stroke-opacity="0.6"/>
<path d="M 377.3 364.4 h 13.7" stroke="#777" stroke-width="0.8" stroke-opacity="0.6"/>
<path d="M 285.8 343.1 h 8.5" stroke="#888" stroke-width="0.8" stroke-opacity="0.6"/>
<path d="M 232.3 344.0 h 6.7" stroke="#0a0a0a" stroke-width="0.8" stroke-opacity="0.6"/>
<path d="M 206.8 359.4 h 6.3" stroke="#5a5a5a" stroke-width="0.8" stroke-opacity="0.6"/>
<path d="M 169.8 350.2 h 4.4" stroke="#888" stroke-width="0.8" stroke-opacity="0.6"/>
<path d="M 222.9 360.8 h 9.5" stroke="#0a0a0a" stroke-width="0.8" stroke-opacity="0.6"/>
<path d="M 184.4 347.5 h 6.5" stroke="#777" stroke-width="0.8" stroke-opacity="0.6"/>
<path d="M 408.4 342.6 h 13.8" stroke="#777" stroke-width="0.8" stroke-opacity="0.6"/>
<path d="M 199.7 361.9 h 4.2" stroke="#888" stroke-width="0.8" stroke-opacity="0.6"/>
<path d="M 300.9 356.2 h 5.8" stroke="#5a5a5a" stroke-width="0.8" stroke-opacity="0.6"/>
<path d="M 210.1 346.4 h 11.8" stroke="#777" stroke-width="0.8" stroke-opacity="0.6"/>
<path d="M 451.0 338.0 h 7.7" stroke="#0a0a0a" stroke-width="0.8" stroke-opacity="0.6"/>
<path d="M 469.6 363.2 h 4.8" stroke="#0a0a0a" stroke-width="0.8" stroke-opacity="0.6"/>
<path d="M 276.7 344.1 h 9.9" stroke="#777" stroke-width="0.8" stroke-opacity="0.6"/>
<path d="M 253.6 342.3 h 12.1" stroke="#0a0a0a" stroke-width="0.8" stroke-opacity="0.6"/>
<path d="M 206.7 353.3 h 5.8" stroke="#5a5a5a" stroke-width="0.8" stroke-opacity="0.6"/>
<path d="M 106.9 358.2 h 4.9" stroke="#888" stroke-width="0.8" stroke-opacity="0.6"/>
<path d="M 337.0 340.6 h 3.1" stroke="#111" stroke-width="0.8" stroke-opacity="0.6"/>
<path d="M 474.3 378.2 h 11.4" stroke="#888" stroke-width="0.8" stroke-opacity="0.6"/>
<path d="M 135.9 358.0 h 10.0" stroke="#0a0a0a" stroke-width="0.8" stroke-opacity="0.6"/>
<path d="M 235.4 344.6 h 5.7" stroke="#0a0a0a" stroke-width="0.8" stroke-opacity="0.6"/>
<path d="M 331.5 360.9 h 10.1" stroke="#777" stroke-width="0.8" stroke-opacity="0.6"/>
<path d="M 390.7 353.9 h 10.5" stroke="#888" stroke-width="0.8" stroke-opacity="0.6"/>
<path d="M 473.8 365.1 h 6.9" stroke="#777" stroke-width="0.8" stroke-opacity="0.6"/>
<path d="M 198.0 351.0 h 6.4" stroke="#0a0a0a" stroke-width="0.8" stroke-opacity="0.6"/>
<path d="M 138.1 353.7 h 5.8" stroke="#0a0a0a" stroke-width="0.8" stroke-opacity="0.6"/>
<path d="M 137.1 351.2 h 6.2" stroke="#111" stroke-width="0.8" stroke-opacity="0.6"/>
<path d="M 132.9 348.7 h 3.6" stroke="#111" stroke-width="0.8" stroke-opacity="0.6"/>
<path d="M 208.0 345.6 h 13.9" stroke="#5a5a5a" stroke-width="0.8" stroke-opacity="0.6"/>
<path d="M 160.2 347.3 h 5.2" stroke="#5a5a5a" stroke-width="0.8" stroke-opacity="0.6"/>
<path d="M 124.5 346.3 h 9.1" stroke="#0a0a0a" stroke-width="0.8" stroke-opacity="0.6"/>
<path d="M 266.0 351.6 h 12.1" stroke="#111" stroke-width="0.8" stroke-opacity="0.6"/>
<path d="M 372.4 349.0 h 7.1" stroke="#0a0a0a" stroke-width="0.8" stroke-opacity="0.6"/>
<path d="M 120.4 353.0 h 8.5" stroke="#888" stroke-width="0.8" stroke-opacity="0.6"/>
<path d="M 328.3 342.6 h 6.4" stroke="#777" stroke-width="0.8" stroke-opacity="0.6"/>
<path d="M 175.1 347.4 h 8.7" stroke="#111" stroke-width="0.8" stroke-opacity="0.6"/>
<path d="M 200.9 360.6 h 10.7" stroke="#777" stroke-width="0.8" stroke-opacity="0.6"/>
<path d="M 296.8 361.9 h 4.0" stroke="#0a0a0a" stroke-width="0.8" stroke-opacity="0.6"/>
<path d="M 353.3 373.2 h 7.8" stroke="#777" stroke-width="0.8" stroke-opacity="0.6"/>
<path d="M 151.2 355.9 h 6.8" stroke="#777" stroke-width="0.8" stroke-opacity="0.6"/>
<path d="M 168.5 345.7 h 9.8" stroke="#0a0a0a" stroke-width="0.8" stroke-opacity="0.6"/>
<path d="M 481.4 353.9 h 10.4" stroke="#111" stroke-width="0.8" stroke-opacity="0.6"/>
<path d="M 218.7 345.1 h 9.0" stroke="#0a0a0a" stroke-width="0.8" stroke-opacity="0.6"/>
<path d="M 219.4 352.5 h 11.6" stroke="#5a5a5a" stroke-width="0.8" stroke-opacity="0.6"/>
<path d="M 367.9 356.4 h 10.6" stroke="#888" stroke-width="0.8" stroke-opacity="0.6"/>
<path d="M 246.0 346.4 h 6.2" stroke="#5a5a5a" stroke-width="0.8" stroke-opacity="0.6"/>
<path d="M 385.9 350.4 h 7.0" stroke="#111" stroke-width="0.8" stroke-opacity="0.6"/>
<path d="M 138.2 360.6 h 7.7" stroke="#111" stroke-width="0.8" stroke-opacity="0.6"/>
<path d="M 276.3 355.7 h 8.8" stroke="#5a5a5a" stroke-width="0.8" stroke-opacity="0.6"/>
<path d="M 214.2 349.2 h 3.3" stroke="#5a5a5a" stroke-width="0.8" stroke-opacity="0.6"/>
<path d="M 162.0 360.7 h 3.5" stroke="#777" stroke-width="0.8" stroke-opacity="0.6"/>
<path d="M 430.8 347.1 h 8.8" stroke="#0a0a0a" stroke-width="0.8" stroke-opacity="0.6"/>
<path d="M 457.9 364.1 h 3.0" stroke="#777" stroke-width="0.8" stroke-opacity="0.6"/>
<path d="M 435.3 340.8 h 9.4" stroke="#111" stroke-width="0.8" stroke-opacity="0.6"/>
<path d="M 218.4 355.0 h 7.1" stroke="#0a0a0a" stroke-width="0.8" stroke-opacity="0.6"/>
<path d="M 413.1 348.7 h 6.9" stroke="#888" stroke-width="0.8" stroke-opacity="0.6"/>
<path d="M 349.0 355.0 h 10.5" stroke="#888" stroke-width="0.8" stroke-opacity="0.6"/>
<path d="M 296.1 372.5 h 5.3" stroke="#777" stroke-width="0.8" stroke-opacity="0.6"/>
<path d="M 462.7 341.9 h 11.6" stroke="#5a5a5a" stroke-width="0.8" stroke-opacity="0.6"/>
<path d="M 356.4 341.3 h 12.1" stroke="#777" stroke-width="0.8" stroke-opacity="0.6"/>
<path d="M 264.0 346.1 h 8.1" stroke="#888" stroke-width="0.8" stroke-opacity="0.6"/>
<path d="M 117.5 347.0 h 5.9" stroke="#888" stroke-width="0.8" stroke-opacity="0.6"/>
<path d="M 390.1 376.2 h 11.2" stroke="#888" stroke-width="0.8" stroke-opacity="0.6"/>
<path d="M 423.4 378.4 h 10.4" stroke="#777" stroke-width="0.8" stroke-opacity="0.6"/>
<path d="M 419.8 364.1 h 11.4" stroke="#111" stroke-width="0.8" stroke-opacity="0.6"/>
<path d="M 229.6 351.3 h 4.3" stroke="#0a0a0a" stroke-width="0.8" stroke-opacity="0.6"/>
<path d="M 206.3 351.9 h 6.0" stroke="#888" stroke-width="0.8" stroke-opacity="0.6"/>
<path d="M 365.4 357.7 h 12.5" stroke="#0a0a0a" stroke-width="0.8" stroke-opacity="0.6"/>
<path d="M 438.7 373.5 h 8.2" stroke="#0a0a0a" stroke-width="0.8" stroke-opacity="0.6"/>
<path d="M 130.0 362.2 h 10.0" stroke="#777" stroke-width="0.8" stroke-opacity="0.6"/>
<path d="M 417.3 337.2 h 12.9" stroke="#5a5a5a" stroke-width="0.8" stroke-opacity="0.6"/>
<path d="M 437.9 344.5 h 9.6" stroke="#888" stroke-width="0.8" stroke-opacity="0.6"/>
<path d="M 217.7 346.0 h 5.7" stroke="#0a0a0a" stroke-width="0.8" stroke-opacity="0.6"/>
<path d="M 277.8 342.6 h 6.9" stroke="#0a0a0a" stroke-width="0.8" stroke-opacity="0.6"/>
<path d="M 196.3 357.5 h 3.9" stroke="#0a0a0a" stroke-width="0.8" stroke-opacity="0.6"/>
<path d="M 349.7 371.6 h 6.3" stroke="#888" stroke-width="0.8" stroke-opacity="0.6"/>
<path d="M 306.6 340.8 h 3.9" stroke="#0a0a0a" stroke-width="0.8" stroke-opacity="0.6"/>
<path d="M 438.3 364.3 h 8.6" stroke="#0a0a0a" stroke-width="0.8" stroke-opacity="0.6"/>
<path d="M 337.1 381.8 h 3.6" stroke="#888" stroke-width="0.8" stroke-opacity="0.6"/>
<path d="M 316.8 355.9 h 7.6" stroke="#0a0a0a" stroke-width="0.8" stroke-opacity="0.6"/>
<path d="M 236.7 344.9 h 11.1" stroke="#0a0a0a" stroke-width="0.8" stroke-opacity="0.6"/>
<path d="M 256.3 353.8 h 11.9" stroke="#111" stroke-width="0.8" stroke-opacity="0.6"/>
<path d="M 177.0 346.5 h 8.2" stroke="#777" stroke-width="0.8" stroke-opacity="0.6"/>
<path d="M 245.0 346.6 h 12.2" stroke="#777" stroke-width="0.8" stroke-opacity="0.6"/>
<path d="M 233.3 343.5 h 8.8" stroke="#111" stroke-width="0.8" stroke-opacity="0.6"/>
<path d="M 174.1 352.8 h 9.1" stroke="#5a5a5a" stroke-width="0.8" stroke-opacity="0.6"/>
<path d="M 265.4 359.2 h 10.3" stroke="#0a0a0a" stroke-width="0.8" stroke-opacity="0.6"/>
<path d="M 257.7 343.6 h 13.5" stroke="#0a0a0a" stroke-width="0.8" stroke-opacity="0.6"/>
<path d="M 254.0 352.8 h 13.0" stroke="#777" stroke-width="0.8" stroke-opacity="0.6"/>
<path d="M 128.4 353.4 h 12.9" stroke="#777" stroke-width="0.8" stroke-opacity="0.6"/>
<path d="M 144.1 359.6 h 8.4" stroke="#5a5a5a" stroke-width="0.8" stroke-opacity="0.6"/>
<path d="M 400.1 344.2 h 5.3" stroke="#777" stroke-width="0.8" stroke-opacity="0.6"/>
<path d="M 482.0 367.8 h 9.4" stroke="#0a0a0a" stroke-width="0.8" stroke-opacity="0.6"/>
<path d="M 391.7 381.0 h 8.5" stroke="#0a0a0a" stroke-width="0.8" stroke-opacity="0.6"/>
<path d="M 212.5 357.1 h 13.5" stroke="#0a0a0a" stroke-width="0.8" stroke-opacity="0.6"/>
<path d="M 108.5 361.7 h 5.6" stroke="#111" stroke-width="0.8" stroke-opacity="0.6"/>
<path d="M 242.6 351.5 h 7.9" stroke="#0a0a0a" stroke-width="0.8" stroke-opacity="0.6"/>
<path d="M 159.1 352.0 h 10.8" stroke="#888" stroke-width="0.8" stroke-opacity="0.6"/>
<path d="M 451.7 342.3 h 8.5" stroke="#777" stroke-width="0.8" stroke-opacity="0.6"/>
<path d="M 425.6 358.3 h 7.3" stroke="#5a5a5a" stroke-width="0.8" stroke-opacity="0.6"/>
<path d="M 187.8 357.2 h 7.3" stroke="#777" stroke-width="0.8" stroke-opacity="0.6"/>
<path d="M 115.6 356.8 h 11.8" stroke="#0a0a0a" stroke-width="0.8" stroke-opacity="0.6"/>
<path d="M 418.9 358.8 h 12.5" stroke="#0a0a0a" stroke-width="0.8" stroke-opacity="0.6"/>
<path d="M 450.9 337.1 h 9.7" stroke="#5a5a5a" stroke-width="0.8" stroke-opacity="0.6"/>
<path d="M 183.0 361.5 h 12.7" stroke="#777" stroke-width="0.8" stroke-opacity="0.6"/>
<path d="M 408.4 352.0 h 8.6" stroke="#777" stroke-width="0.8" stroke-opacity="0.6"/>
<path d="M 428.6 337.2 h 5.4" stroke="#0a0a0a" stroke-width="0.8" stroke-opacity="0.6"/>
<path d="M 305.2 341.6 h 10.0" stroke="#777" stroke-width="0.8" stroke-opacity="0.6"/>
<path d="M 112.0 351.9 h 6.0" stroke="#888" stroke-width="0.8" stroke-opacity="0.6"/>
<path d="M 156.5 361.7 h 7.0" stroke="#111" stroke-width="0.8" stroke-opacity="0.6"/>
<path d="M 362.5 352.8 h 11.0" stroke="#0a0a0a" stroke-width="0.8" stroke-opacity="0.6"/>
<path d="M 436.8 346.7 h 7.5" stroke="#111" stroke-width="0.8" stroke-opacity="0.6"/>
<path d="M 120.0 351.9 h 13.5" stroke="#0a0a0a" stroke-width="0.8" stroke-opacity="0.6"/>
<path d="M 243.9 343.4 h 6.0" stroke="#888" stroke-width="0.8" stroke-opacity="0.6"/>
<path d="M 170.4 360.0 h 5.9" stroke="#888" stroke-width="0.8" stroke-opacity="0.6"/>
<path d="M 370.6 344.0 h 8.7" stroke="#0a0a0a" stroke-width="0.8" stroke-opacity="0.6"/>
<path d="M 205.0 350.8 h 9.9" stroke="#5a5a5a" stroke-width="0.8" stroke-opacity="0.6"/>
<path d="M 339.9 373.8 h 3.2" stroke="#5a5a5a" stroke-width="0.8" stroke-opacity="0.6"/>
<path d="M 290.0 380.4 h 5.2" stroke="#0a0a0a" stroke-width="0.8" stroke-opacity="0.6"/>
<path d="M 108.1 358.4 h 5.9" stroke="#777" stroke-width="0.8" stroke-opacity="0.6"/>
<path d="M 276.5 345.7 h 11.5" stroke="#111" stroke-width="0.8" stroke-opacity="0.6"/>
<path d="M 478.0 340.0 h 7.1" stroke="#888" stroke-width="0.8" stroke-opacity="0.6"/>
<path d="M 132.4 346.5 h 3.7" stroke="#0a0a0a" stroke-width="0.8" stroke-opacity="0.6"/>
<path d="M 335.3 379.7 h 5.4" stroke="#888" stroke-width="0.8" stroke-opacity="0.6"/>
<path d="M 487.3 360.8 h 13.0" stroke="#0a0a0a" stroke-width="0.8" stroke-opacity="0.6"/>
<path d="M 165.9 345.3 h 6.1" stroke="#888" stroke-width="0.8" stroke-opacity="0.6"/>
<path d="M 276.3 358.0 h 13.8" stroke="#888" stroke-width="0.8" stroke-opacity="0.6"/>
<path d="M 450.0 371.4 h 12.0" stroke="#5a5a5a" stroke-width="0.8" stroke-opacity="0.6"/>
<path d="M 321.3 349.0 h 12.4" stroke="#0a0a0a" stroke-width="0.8" stroke-opacity="0.6"/>
<path d="M 218.4 350.0 h 9.0" stroke="#777" stroke-width="0.8" stroke-opacity="0.6"/>
<path d="M 236.2 342.8 h 7.4" stroke="#777" stroke-width="0.8" stroke-opacity="0.6"/>
<path d="M 168.2 353.8 h 4.5" stroke="#5a5a5a" stroke-width="0.8" stroke-opacity="0.6"/>
<path d="M 131.3 362.4 h 4.9" stroke="#888" stroke-width="0.8" stroke-opacity="0.6"/>
<path d="M 328.8 350.8 h 11.3" stroke="#777" stroke-width="0.8" stroke-opacity="0.6"/>
<path d="M 208.9 355.6 h 11.3" stroke="#0a0a0a" stroke-width="0.8" stroke-opacity="0.6"/>
<path d="M 376.8 345.8 h 9.6" stroke="#777" stroke-width="0.8" stroke-opacity="0.6"/>
<path d="M 369.4 345.1 h 10.2" stroke="#111" stroke-width="0.8" stroke-opacity="0.6"/>
<path d="M 280.3 356.7 h 6.5" stroke="#0a0a0a" stroke-width="0.8" stroke-opacity="0.6"/>
<path d="M 169.5 346.4 h 7.4" stroke="#111" stroke-width="0.8" stroke-opacity="0.6"/>
<path d="M 360.6 340.8 h 8.9" stroke="#111" stroke-width="0.8" stroke-opacity="0.6"/>
<path d="M 219.4 344.5 h 11.3" stroke="#888" stroke-width="0.8" stroke-opacity="0.6"/>
<path d="M 189.6 359.9 h 8.2" stroke="#0a0a0a" stroke-width="0.8" stroke-opacity="0.6"/>
<path d="M 178.9 352.6 h 5.0" stroke="#111" stroke-width="0.8" stroke-opacity="0.6"/>
<path d="M 208.2 346.7 h 5.6" stroke="#5a5a5a" stroke-width="0.8" stroke-opacity="0.6"/>
<path d="M 177.2 355.0 h 12.0" stroke="#0a0a0a" stroke-width="0.8" stroke-opacity="0.6"/>
<path d="M 395.0 378.5 h 13.3" stroke="#111" stroke-width="0.8" stroke-opacity="0.6"/>
<path d="M 313.0 348.5 h 5.5" stroke="#111" stroke-width="0.8" stroke-opacity="0.6"/>
<path d="M 255.7 343.7 h 11.3" stroke="#888" stroke-width="0.8" stroke-opacity="0.6"/>
<path d="M 237.0 352.6 h 3.7" stroke="#111" stroke-width="0.8" stroke-opacity="0.6"/>
<path d="M 478.5 337.1 h 10.6" stroke="#888" stroke-width="0.8" stroke-opacity="0.6"/>
<path d="M 155.1 353.9 h 5.1" stroke="#888" stroke-width="0.8" stroke-opacity="0.6"/>
<path d="M 382.0 361.4 h 6.4" stroke="#0a0a0a" stroke-width="0.8" stroke-opacity="0.6"/>
<path d="M 181.7 344.5 h 7.3" stroke="#777" stroke-width="0.8" stroke-opacity="0.6"/>
<path d="M 430.4 375.0 h 10.1" stroke="#5a5a5a" stroke-width="0.8" stroke-opacity="0.6"/>
<path d="M 233.6 354.5 h 13.4" stroke="#0a0a0a" stroke-width="0.8" stroke-opacity="0.6"/>
<path d="M 201.6 353.8 h 10.0" stroke="#5a5a5a" stroke-width="0.8" stroke-opacity="0.6"/>
<path d="M 148.7 362.3 h 6.9" stroke="#0a0a0a" stroke-width="0.8" stroke-opacity="0.6"/>
<path d="M 359.5 362.1 h 12.9" stroke="#111" stroke-width="0.8" stroke-opacity="0.6"/>
<path d="M 272.5 353.3 h 10.3" stroke="#5a5a5a" stroke-width="0.8" stroke-opacity="0.6"/>
<path d="M 453.6 336.5 h 8.2" stroke="#5a5a5a" stroke-width="0.8" stroke-opacity="0.6"/>
<path d="M 250.9 352.5 h 4.9" stroke="#111" stroke-width="0.8" stroke-opacity="0.6"/>
<path d="M 387.1 364.7 h 9.0" stroke="#777" stroke-width="0.8" stroke-opacity="0.6"/>
<path d="M 166.9 362.0 h 13.8" stroke="#888" stroke-width="0.8" stroke-opacity="0.6"/>
<path d="M 155.4 357.2 h 6.4" stroke="#888" stroke-width="0.8" stroke-opacity="0.6"/>
<path d="M 395.1 380.7 h 11.9" stroke="#5a5a5a" stroke-width="0.8" stroke-opacity="0.6"/>
<path d="M 412.4 380.5 h 3.7" stroke="#888" stroke-width="0.8" stroke-opacity="0.6"/>
<path d="M 266.1 352.4 h 6.5" stroke="#0a0a0a" stroke-width="0.8" stroke-opacity="0.6"/>
<path d="M 422.7 343.7 h 3.4" stroke="#111" stroke-width="0.8" stroke-opacity="0.6"/>
<path d="M 418.1 357.6 h 6.3" stroke="#777" stroke-width="0.8" stroke-opacity="0.6"/>
<path d="M 441.1 378.7 h 11.2" stroke="#888" stroke-width="0.8" stroke-opacity="0.6"/>
<path d="M 333.9 362.6 h 13.3" stroke="#5a5a5a" stroke-width="0.8" stroke-opacity="0.6"/>
<path d="M 146.1 346.3 h 10.8" stroke="#0a0a0a" stroke-width="0.8" stroke-opacity="0.6"/>
<path d="M 231.9 352.3 h 7.6" stroke="#5a5a5a" stroke-width="0.8" stroke-opacity="0.6"/>
<path d="M 444.3 366.5 h 8.8" stroke="#777" stroke-width="0.8" stroke-opacity="0.6"/>
<path d="M 451.5 357.8 h 12.8" stroke="#0a0a0a" stroke-width="0.8" stroke-opacity="0.6"/>
<path d="M 142.3 353.0 h 11.7" stroke="#0a0a0a" stroke-width="0.8" stroke-opacity="0.6"/>
<path d="M 185.4 344.8 h 13.3" stroke="#0a0a0a" stroke-width="0.8" stroke-opacity="0.6"/>
<path d="M 112.6 360.3 h 10.6" stroke="#5a5a5a" stroke-width="0.8" stroke-opacity="0.6"/>
<path d="M 201.1 346.6 h 10.2" stroke="#777" stroke-width="0.8" stroke-opacity="0.6"/>
<path d="M 187.8 346.5 h 8.6" stroke="#777" stroke-width="0.8" stroke-opacity="0.6"/>
<path d="M 312.6 378.9 h 14.0" stroke="#5a5a5a" stroke-width="0.8" stroke-opacity="0.6"/>
<path d="M 326.1 360.6 h 4.0" stroke="#111" stroke-width="0.8" stroke-opacity="0.6"/>
<path d="M 369.2 340.0 h 10.0" stroke="#888" stroke-width="0.8" stroke-opacity="0.6"/>
<path d="M 191.1 362.2 h 10.4" stroke="#0a0a0a" stroke-width="0.8" stroke-opacity="0.6"/>
<path d="M 137.3 347.1 h 3.8" stroke="#5a5a5a" stroke-width="0.8" stroke-opacity="0.6"/>
<path d="M 271.2 343.1 h 5.7" stroke="#5a5a5a" stroke-width="0.8" stroke-opacity="0.6"/>
<path d="M 440.2 346.9 h 9.2" stroke="#888" stroke-width="0.8" stroke-opacity="0.6"/>
<path d="M 152.4 352.9 h 13.4" stroke="#777" stroke-width="0.8" stroke-opacity="0.6"/>
<path d="M 472.1 337.2 h 10.3" stroke="#888" stroke-width="0.8" stroke-opacity="0.6"/>
<path d="M 312.6 341.2 h 4.7" stroke="#888" stroke-width="0.8" stroke-opacity="0.6"/>
<path d="M 402.7 339.9 h 4.1" stroke="#5a5a5a" stroke-width="0.8" stroke-opacity="0.6"/>
<path d="M 269.3 341.9 h 3.3" stroke="#888" stroke-width="0.8" stroke-opacity="0.6"/>
<path d="M 245.7 352.6 h 11.9" stroke="#777" stroke-width="0.8" stroke-opacity="0.6"/>
<path d="M 340.7 341.4 h 13.7" stroke="#111" stroke-width="0.8" stroke-opacity="0.6"/>
<path d="M 444.8 349.5 h 9.7" stroke="#777" stroke-width="0.8" stroke-opacity="0.6"/>
<path d="M 432.8 342.2 h 10.5" stroke="#777" stroke-width="0.8" stroke-opacity="0.6"/>
<path d="M 407.2 363.4 h 10.1" stroke="#777" stroke-width="0.8" stroke-opacity="0.6"/>
<path d="M 283.9 355.8 h 5.1" stroke="#5a5a5a" stroke-width="0.8" stroke-opacity="0.6"/>
<path d="M 203.9 353.8 h 13.9" stroke="#111" stroke-width="0.8" stroke-opacity="0.6"/>
<path d="M 243.8 345.8 h 10.5" stroke="#111" stroke-width="0.8" stroke-opacity="0.6"/>
<path d="M 320.7 369.4 h 9.0" stroke="#777" stroke-width="0.8" stroke-opacity="0.6"/>
<path d="M 266.7 346.3 h 8.0" stroke="#0a0a0a" stroke-width="0.8" stroke-opacity="0.6"/>
<path d="M 468.2 354.9 h 8.4" stroke="#777" stroke-width="0.8" stroke-opacity="0.6"/>
<path d="M 363.5 349.0 h 4.5" stroke="#888" stroke-width="0.8" stroke-opacity="0.6"/>
<path d="M 165.4 350.8 h 10.8" stroke="#5a5a5a" stroke-width="0.8" stroke-opacity="0.6"/>
<path d="M 320.1 353.3 h 7.0" stroke="#111" stroke-width="0.8" stroke-opacity="0.6"/>
<path d="M 102.7 347.2 h 7.1" stroke="#0a0a0a" stroke-width="0.8" stroke-opacity="0.6"/>
<path d="M 248.9 342.5 h 5.7" stroke="#888" stroke-width="0.8" stroke-opacity="0.6"/>
<path d="M 349.6 341.2 h 11.7" stroke="#5a5a5a" stroke-width="0.8" stroke-opacity="0.6"/>
<path d="M 328.8 375.4 h 12.4" stroke="#0a0a0a" stroke-width="0.8" stroke-opacity="0.6"/>
<path d="M 443.4 341.9 h 4.2" stroke="#777" stroke-width="0.8" stroke-opacity="0.6"/>
<path d="M 444.9 352.5 h 9.6" stroke="#888" stroke-width="0.8" stroke-opacity="0.6"/>
<path d="M 167.7 353.0 h 10.2" stroke="#5a5a5a" stroke-width="0.8" stroke-opacity="0.6"/>
<path d="M 298.7 373.8 h 13.4" stroke="#777" stroke-width="0.8" stroke-opacity="0.6"/>
<path d="M 146.7 347.7 h 11.3" stroke="#5a5a5a" stroke-width="0.8" stroke-opacity="0.6"/>
<path d="M 153.3 363.0 h 10.9" stroke="#5a5a5a" stroke-width="0.8" stroke-opacity="0.6"/>
<path d="M 254.3 351.5 h 4.3" stroke="#888" stroke-width="0.8" stroke-opacity="0.6"/>
<path d="M 483.2 369.5 h 4.9" stroke="#888" stroke-width="0.8" stroke-opacity="0.6"/>
<path d="M 287.8 366.4 h 8.6" stroke="#777" stroke-width="0.8" stroke-opacity="0.6"/>
<path d="M 311.7 355.3 h 7.1" stroke="#111" stroke-width="0.8" stroke-opacity="0.6"/>
<path d="M 116.0 346.9 h 5.0" stroke="#777" stroke-width="0.8" stroke-opacity="0.6"/>
<path d="M 438.1 371.6 h 12.5" stroke="#888" stroke-width="0.8" stroke-opacity="0.6"/>
<path d="M 130.6 350.6 h 3.9" stroke="#0a0a0a" stroke-width="0.8" stroke-opacity="0.6"/>
<path d="M 323.2 344.5 h 12.1" stroke="#5a5a5a" stroke-width="0.8" stroke-opacity="0.6"/>
<path d="M 294.9 353.6 h 12.1" stroke="#777" stroke-width="0.8" stroke-opacity="0.6"/>
<path d="M 172.5 345.9 h 7.9" stroke="#111" stroke-width="0.8" stroke-opacity="0.6"/>
<path d="M 156.5 349.1 h 9.1" stroke="#777" stroke-width="0.8" stroke-opacity="0.6"/>
<path d="M 279.3 357.4 h 6.3" stroke="#5a5a5a" stroke-width="0.8" stroke-opacity="0.6"/>
<path d="M 404.4 344.2 h 11.6" stroke="#5a5a5a" stroke-width="0.8" stroke-opacity="0.6"/>
<path d="M 204.1 347.4 h 7.9" stroke="#888" stroke-width="0.8" stroke-opacity="0.6"/>
<path d="M 274.7 342.1 h 6.8" stroke="#0a0a0a" stroke-width="0.8" stroke-opacity="0.6"/>
<path d="M 199.3 356.5 h 11.2" stroke="#111" stroke-width="0.8" stroke-opacity="0.6"/>
<path d="M 446.9 344.4 h 8.0" stroke="#777" stroke-width="0.8" stroke-opacity="0.6"/>
<path d="M 349.7 358.6 h 5.4" stroke="#0a0a0a" stroke-width="0.8" stroke-opacity="0.6"/>
<g fill="none" stroke="#1e1e1e" stroke-width="0.5" stroke-opacity="0.55" mask="url(#rmask)"><path d="M 280.0 336.4 C 283.3 336.5 293.3 336.5 300.0 336.8 C 306.7 337.1 313.3 337.7 320.0 337.9 C 326.7 338.2 333.3 338.3 340.0 338.5 C 346.7 338.6 353.3 338.8 360.0 338.9 C 366.7 339.1 373.3 339.4 380.0 339.3 C 386.7 339.2 393.3 338.6 400.0 338.5 C 406.7 338.3 413.3 338.5 420.0 338.4 C 426.7 338.2 433.3 338.0 440.0 337.6 C 446.7 337.3 453.3 336.6 460.0 336.5 C 466.7 336.3 473.3 336.8 480.0 337.0 C 486.7 337.2 493.3 337.5 500.0 337.6 C 506.7 337.8 513.3 337.6 520.0 337.9 C 526.7 338.1 533.3 338.9 540.0 339.1 C 546.7 339.2 553.3 339.1 560.0 339.1 C 566.7 339.1 573.3 339.3 580.0 339.1 C 586.7 338.9 593.3 338.2 600.0 338.0 C 606.7 337.8 616.7 337.8 620.0 337.8 "/>
<path d="M 280.0 338.9 C 283.3 339.0 293.3 339.1 300.0 339.3 C 306.7 339.5 313.3 339.7 320.0 339.9 C 326.7 340.1 333.3 340.2 340.0 340.3 C 346.7 340.5 353.3 340.7 360.0 340.8 C 366.7 341.0 373.3 341.2 380.0 341.1 C 386.7 341.0 393.3 340.7 400.0 340.4 C 406.7 340.1 413.3 339.7 420.0 339.4 C 426.7 339.1 433.3 338.9 440.0 338.8 C 446.7 338.7 453.3 338.8 460.0 338.8 C 466.7 338.9 473.3 339.2 480.0 339.3 C 486.7 339.4 493.3 339.2 500.0 339.4 C 506.7 339.5 513.3 340.0 520.0 340.3 C 526.7 340.6 533.3 341.0 540.0 341.1 C 546.7 341.2 553.3 340.8 560.0 340.8 C 566.7 340.7 573.3 341.1 580.0 341.0 C 586.7 340.9 593.3 340.5 600.0 340.3 C 606.7 340.0 616.7 339.6 620.0 339.5 "/>
<path d="M 280.0 342.8 C 283.3 342.7 293.3 342.2 300.0 342.0 C 306.7 341.8 313.3 342.0 320.0 341.8 C 326.7 341.7 333.3 341.3 340.0 341.1 C 346.7 340.9 353.3 340.7 360.0 340.6 C 366.7 340.6 373.3 340.6 380.0 340.8 C 386.7 341.0 393.3 341.6 400.0 341.9 C 406.7 342.1 413.3 342.2 420.0 342.4 C 426.7 342.5 433.3 342.6 440.0 342.8 C 446.7 342.9 453.3 343.1 460.0 343.1 C 466.7 343.0 473.3 342.6 480.0 342.4 C 486.7 342.1 493.3 341.9 500.0 341.6 C 506.7 341.4 513.3 341.0 520.0 340.9 C 526.7 340.7 533.3 340.6 540.0 340.6 C 546.7 340.6 553.3 340.7 560.0 340.8 C 566.7 341.0 573.3 341.4 580.0 341.6 C 586.7 341.8 593.3 341.8 600.0 342.0 C 606.7 342.1 616.7 342.3 620.0 342.4 "/>
<path d="M 280.0 344.1 C 283.3 343.9 293.3 343.4 300.0 343.1 C 306.7 342.8 313.3 342.6 320.0 342.5 C 326.7 342.4 333.3 342.3 340.0 342.4 C 346.7 342.5 353.3 342.8 360.0 342.9 C 366.7 343.1 373.3 343.3 380.0 343.5 C 386.7 343.7 393.3 344.0 400.0 344.2 C 406.7 344.4 413.3 344.5 420.0 344.6 C 426.7 344.7 433.3 344.8 440.0 344.8 C 446.7 344.9 453.3 344.9 460.0 344.7 C 466.7 344.6 473.3 344.4 480.0 344.1 C 486.7 343.8 493.3 343.0 500.0 342.8 C 506.7 342.6 513.3 342.8 520.0 342.8 C 526.7 342.8 533.3 342.6 540.0 342.6 C 546.7 342.7 553.3 343.2 560.0 343.3 C 566.7 343.4 573.3 343.2 580.0 343.4 C 586.7 343.6 593.3 344.4 600.0 344.6 C 606.7 344.9 616.7 344.8 620.0 344.8 "/>
<path d="M 280.0 345.8 C 283.3 346.0 293.3 346.7 300.0 346.8 C 306.7 347.0 313.3 346.8 320.0 346.7 C 326.7 346.6 333.3 346.4 340.0 346.2 C 346.7 345.9 353.3 345.4 360.0 345.2 C 366.7 345.0 373.3 345.0 380.0 344.9 C 386.7 344.8 393.3 344.5 400.0 344.5 C 406.7 344.4 413.3 344.6 420.0 344.7 C 426.7 344.7 433.3 344.6 440.0 344.8 C 446.7 345.0 453.3 345.5 460.0 345.8 C 466.7 346.1 473.3 346.4 480.0 346.5 C 486.7 346.7 493.3 346.8 500.0 346.8 C 506.7 346.8 513.3 346.9 520.0 346.7 C 526.7 346.5 533.3 345.9 540.0 345.7 C 546.7 345.4 553.3 345.4 560.0 345.2 C 566.7 344.9 573.3 344.3 580.0 344.2 C 586.7 344.2 593.3 344.5 600.0 344.6 C 606.7 344.8 616.7 345.0 620.0 345.0 "/>
<path d="M 280.0 349.0 C 283.3 348.9 293.3 348.6 300.0 348.4 C 306.7 348.2 313.3 347.9 320.0 347.8 C 326.7 347.6 333.3 347.7 340.0 347.4 C 346.7 347.2 353.3 346.6 360.0 346.4 C 366.7 346.2 373.3 346.1 380.0 346.1 C 386.7 346.1 393.3 346.3 400.0 346.4 C 406.7 346.5 413.3 346.6 420.0 346.8 C 426.7 347.0 433.3 347.3 440.0 347.6 C 446.7 348.0 453.3 348.5 460.0 348.7 C 466.7 348.8 473.3 348.6 480.0 348.6 C 486.7 348.6 493.3 348.8 500.0 348.6 C 506.7 348.5 513.3 347.7 520.0 347.4 C 526.7 347.2 533.3 347.3 540.0 347.1 C 546.7 347.0 553.3 346.6 560.0 346.4 C 566.7 346.2 573.3 346.0 580.0 346.1 C 586.7 346.2 593.3 346.9 600.0 347.1 C 606.7 347.3 616.7 347.2 620.0 347.3 "/>
<path d="M 280.0 348.5 C 283.3 348.5 293.3 348.2 300.0 348.4 C 306.7 348.5 313.3 349.1 320.0 349.2 C 326.7 349.4 333.3 349.1 340.0 349.2 C 346.7 349.4 353.3 349.8 360.0 350.1 C 366.7 350.3 373.3 350.8 380.0 350.8 C 386.7 350.8 393.3 350.3 400.0 350.2 C 406.7 350.0 413.3 350.2 420.0 350.0 C 426.7 349.8 433.3 349.3 440.0 349.0 C 446.7 348.6 453.3 348.1 460.0 348.0 C 466.7 347.9 473.3 348.2 480.0 348.2 C 486.7 348.3 493.3 348.2 500.0 348.3 C 506.7 348.5 513.3 348.9 520.0 349.2 C 526.7 349.4 533.3 349.5 540.0 349.7 C 546.7 349.9 553.3 350.1 560.0 350.1 C 566.7 350.2 573.3 350.2 580.0 350.2 C 586.7 350.1 593.3 350.0 600.0 349.8 C 606.7 349.6 616.7 349.1 620.0 348.9 "/>
<path d="M 280.0 351.1 C 283.3 351.3 293.3 351.9 300.0 352.0 C 306.7 352.2 313.3 352.1 320.0 352.2 C 326.7 352.2 333.3 352.4 340.0 352.4 C 346.7 352.4 353.3 352.3 360.0 352.1 C 366.7 351.9 373.3 351.5 380.0 351.2 C 386.7 351.0 393.3 350.9 400.0 350.6 C 406.7 350.4 413.3 349.9 420.0 349.8 C 426.7 349.7 433.3 350.0 440.0 350.2 C 446.7 350.4 453.3 350.7 460.0 351.0 C 466.7 351.2 473.3 351.6 480.0 351.7 C 486.7 351.9 493.3 352.0 500.0 352.0 C 506.7 352.1 513.3 352.0 520.0 352.1 C 526.7 352.2 533.3 352.6 540.0 352.6 C 546.7 352.5 553.3 352.2 560.0 351.8 C 566.7 351.5 573.3 350.9 580.0 350.6 C 586.7 350.3 593.3 350.3 600.0 350.2 C 606.7 350.0 616.7 349.9 620.0 349.9 "/>
<path d="M 280.0 354.2 C 283.3 354.2 293.3 354.4 300.0 354.2 C 306.7 354.1 313.3 353.5 320.0 353.2 C 326.7 352.9 333.3 352.7 340.0 352.5 C 346.7 352.3 353.3 352.1 360.0 352.1 C 366.7 352.1 373.3 352.2 380.0 352.3 C 386.7 352.4 393.3 352.4 400.0 352.7 C 406.7 352.9 413.3 353.4 420.0 353.6 C 426.7 353.8 433.3 353.6 440.0 353.7 C 446.7 353.9 453.3 354.5 460.0 354.5 C 466.7 354.6 473.3 354.0 480.0 353.9 C 486.7 353.8 493.3 354.2 500.0 354.0 C 506.7 353.9 513.3 353.1 520.0 352.8 C 526.7 352.5 533.3 352.6 540.0 352.4 C 546.7 352.2 553.3 351.6 560.0 351.6 C 566.7 351.6 573.3 352.3 580.0 352.5 C 586.7 352.7 593.3 352.5 600.0 352.7 C 606.7 352.9 616.7 353.4 620.0 353.5 "/>
<path d="M 280.0 356.4 C 283.3 356.3 293.3 356.2 300.0 355.9 C 306.7 355.6 313.3 355.0 320.0 354.6 C 326.7 354.3 333.3 354.1 340.0 353.9 C 346.7 353.8 353.3 353.6 360.0 353.6 C 366.7 353.7 373.3 353.9 380.0 354.0 C 386.7 354.1 393.3 354.2 400.0 354.4 C 406.7 354.6 413.3 355.1 420.0 355.4 C 426.7 355.8 433.3 356.3 440.0 356.4 C 446.7 356.6 453.3 356.4 460.0 356.4 C 466.7 356.4 473.3 356.5 480.0 356.3 C 486.7 356.2 493.3 355.9 500.0 355.6 C 506.7 355.4 513.3 355.2 520.0 354.9 C 526.7 354.6 533.3 354.1 540.0 354.0 C 546.7 353.9 553.3 354.2 560.0 354.3 C 566.7 354.4 573.3 354.3 580.0 354.5 C 586.7 354.7 593.3 355.2 600.0 355.4 C 606.7 355.7 616.7 356.0 620.0 356.1 "/>
<path d="M 280.0 356.4 C 283.3 356.3 293.3 356.2 300.0 356.2 C 306.7 356.1 313.3 356.1 320.0 356.1 C 326.7 356.1 333.3 356.0 340.0 356.3 C 346.7 356.5 353.3 357.2 360.0 357.5 C 366.7 357.8 373.3 358.1 380.0 358.1 C 386.7 358.2 393.3 358.0 400.0 357.9 C 406.7 357.8 413.3 357.8 420.0 357.7 C 426.7 357.5 433.3 357.2 440.0 357.0 C 446.7 356.9 453.3 356.9 460.0 356.7 C 466.7 356.6 473.3 356.4 480.0 356.3 C 486.7 356.2 493.3 356.1 500.0 356.2 C 506.7 356.2 513.3 356.4 520.0 356.6 C 526.7 356.8 533.3 357.2 540.0 357.3 C 546.7 357.5 553.3 357.3 560.0 357.4 C 566.7 357.5 573.3 357.8 580.0 357.8 C 586.7 357.8 593.3 357.7 600.0 357.7 C 606.7 357.7 616.7 357.6 620.0 357.6 "/>
<path d="M 280.0 357.4 C 283.3 357.5 293.3 357.5 300.0 357.7 C 306.7 357.9 313.3 358.5 320.0 358.8 C 326.7 359.1 333.3 359.5 340.0 359.8 C 346.7 360.0 353.3 360.3 360.0 360.3 C 366.7 360.4 373.3 360.1 380.0 360.1 C 386.7 360.0 393.3 359.9 400.0 359.7 C 406.7 359.6 413.3 359.2 420.0 358.9 C 426.7 358.6 433.3 358.3 440.0 358.1 C 446.7 357.9 453.3 357.7 460.0 357.6 C 466.7 357.5 473.3 357.3 480.0 357.5 C 486.7 357.6 493.3 358.1 500.0 358.4 C 506.7 358.6 513.3 358.9 520.0 359.0 C 526.7 359.2 533.3 359.4 540.0 359.5 C 546.7 359.6 553.3 359.7 560.0 359.7 C 566.7 359.8 573.3 359.8 580.0 359.7 C 586.7 359.6 593.3 359.4 600.0 359.1 C 606.7 358.8 616.7 358.3 620.0 358.1 "/>
<path d="M 280.0 362.2 C 283.3 362.0 293.3 361.5 300.0 361.3 C 306.7 361.1 313.3 361.2 320.0 360.9 C 326.7 360.7 333.3 360.0 340.0 359.7 C 346.7 359.5 353.3 359.7 360.0 359.7 C 366.7 359.6 373.3 359.6 380.0 359.6 C 386.7 359.7 393.3 359.8 400.0 360.0 C 406.7 360.2 413.3 360.8 420.0 361.1 C 426.7 361.3 433.3 361.3 440.0 361.5 C 446.7 361.6 453.3 362.0 460.0 362.1 C 466.7 362.2 473.3 362.2 480.0 362.1 C 486.7 362.0 493.3 361.8 500.0 361.5 C 506.7 361.1 513.3 360.2 520.0 359.9 C 526.7 359.6 533.3 359.7 540.0 359.7 C 546.7 359.7 553.3 359.9 560.0 360.0 C 566.7 360.1 573.3 360.1 580.0 360.2 C 586.7 360.3 593.3 360.5 600.0 360.7 C 606.7 360.9 616.7 361.3 620.0 361.5 "/>
<path d="M 280.0 362.0 C 283.3 361.9 293.3 361.6 300.0 361.5 C 306.7 361.4 313.3 361.3 320.0 361.5 C 326.7 361.7 333.3 362.3 340.0 362.6 C 346.7 363.0 353.3 363.3 360.0 363.6 C 366.7 363.8 373.3 363.9 380.0 364.0 C 386.7 364.1 393.3 364.4 400.0 364.3 C 406.7 364.1 413.3 363.4 420.0 363.1 C 426.7 362.8 433.3 362.9 440.0 362.7 C 446.7 362.5 453.3 362.2 460.0 362.0 C 466.7 361.7 473.3 361.2 480.0 361.2 C 486.7 361.2 493.3 361.8 500.0 361.9 C 506.7 362.0 513.3 361.9 520.0 362.0 C 526.7 362.1 533.3 362.3 540.0 362.5 C 546.7 362.8 553.3 363.2 560.0 363.4 C 566.7 363.6 573.3 363.8 580.0 363.8 C 586.7 363.8 593.3 363.8 600.0 363.6 C 606.7 363.5 616.7 362.9 620.0 362.7 "/>
<path d="M 280.0 364.2 C 283.3 364.2 293.3 364.0 300.0 363.9 C 306.7 363.8 313.3 363.7 320.0 363.6 C 326.7 363.6 333.3 363.6 340.0 363.8 C 346.7 364.0 353.3 364.6 360.0 364.9 C 366.7 365.1 373.3 365.2 380.0 365.3 C 386.7 365.4 393.3 365.5 400.0 365.5 C 406.7 365.5 413.3 365.6 420.0 365.4 C 426.7 365.3 433.3 365.0 440.0 364.8 C 446.7 364.5 453.3 364.1 460.0 363.9 C 466.7 363.6 473.3 363.4 480.0 363.4 C 486.7 363.3 493.3 363.7 500.0 363.7 C 506.7 363.7 513.3 363.4 520.0 363.5 C 526.7 363.6 533.3 364.0 540.0 364.3 C 546.7 364.5 553.3 364.7 560.0 365.0 C 566.7 365.3 573.3 365.8 580.0 365.9 C 586.7 366.1 593.3 366.1 600.0 366.0 C 606.7 366.0 616.7 365.7 620.0 365.7 "/>
<path d="M 280.0 365.6 C 283.3 365.5 293.3 365.0 300.0 365.0 C 306.7 364.9 313.3 365.1 320.0 365.3 C 326.7 365.5 333.3 366.0 340.0 366.2 C 346.7 366.4 353.3 366.4 360.0 366.6 C 366.7 366.8 373.3 367.3 380.0 367.4 C 386.7 367.5 393.3 367.4 400.0 367.3 C 406.7 367.3 413.3 367.4 420.0 367.3 C 426.7 367.2 433.3 367.0 440.0 366.7 C 446.7 366.5 453.3 365.9 460.0 365.7 C 466.7 365.6 473.3 365.9 480.0 365.8 C 486.7 365.7 493.3 365.0 500.0 365.0 C 506.7 365.0 513.3 365.7 520.0 365.9 C 526.7 366.2 533.3 366.4 540.0 366.5 C 546.7 366.6 553.3 366.6 560.0 366.8 C 566.7 366.9 573.3 367.0 580.0 367.2 C 586.7 367.4 593.3 368.0 600.0 368.0 C 606.7 367.9 616.7 367.2 620.0 367.0 "/>
<path d="M 280.0 368.3 C 283.3 368.5 293.3 369.0 300.0 369.2 C 306.7 369.4 313.3 369.5 320.0 369.6 C 326.7 369.6 333.3 369.7 340.0 369.6 C 346.7 369.4 353.3 368.9 360.0 368.7 C 366.7 368.5 373.3 368.5 380.0 368.3 C 386.7 368.2 393.3 367.8 400.0 367.6 C 406.7 367.5 413.3 367.4 420.0 367.4 C 426.7 367.4 433.3 367.6 440.0 367.7 C 446.7 367.9 453.3 368.0 460.0 368.2 C 466.7 368.5 473.3 368.9 480.0 369.1 C 486.7 369.3 493.3 369.5 500.0 369.5 C 506.7 369.6 513.3 369.4 520.0 369.3 C 526.7 369.2 533.3 369.0 540.0 368.9 C 546.7 368.8 553.3 368.7 560.0 368.5 C 566.7 368.3 573.3 367.8 580.0 367.6 C 586.7 367.3 593.3 367.3 600.0 367.3 C 606.7 367.2 616.7 367.4 620.0 367.4 "/>
<path d="M 280.0 369.4 C 283.3 369.4 293.3 369.3 300.0 369.5 C 306.7 369.6 313.3 370.0 320.0 370.2 C 326.7 370.4 333.3 370.7 340.0 370.9 C 346.7 371.0 353.3 371.1 360.0 371.2 C 366.7 371.3 373.3 371.7 380.0 371.7 C 386.7 371.6 393.3 371.3 400.0 371.1 C 406.7 370.9 413.3 370.8 420.0 370.6 C 426.7 370.4 433.3 370.2 440.0 370.0 C 446.7 369.8 453.3 369.3 460.0 369.2 C 466.7 369.0 473.3 369.1 480.0 369.1 C 486.7 369.1 493.3 369.0 500.0 369.3 C 506.7 369.5 513.3 370.3 520.0 370.6 C 526.7 370.9 533.3 370.8 540.0 371.0 C 546.7 371.1 553.3 371.4 560.0 371.5 C 566.7 371.6 573.3 371.4 580.0 371.3 C 586.7 371.2 593.3 371.0 600.0 370.8 C 606.7 370.7 616.7 370.4 620.0 370.3 "/>
<path d="M 280.0 371.9 C 283.3 372.1 293.3 372.6 300.0 372.9 C 306.7 373.2 313.3 373.6 320.0 373.6 C 326.7 373.7 333.3 373.4 340.0 373.3 C 346.7 373.2 353.3 373.2 360.0 373.0 C 366.7 372.8 373.3 372.4 380.0 372.1 C 386.7 371.8 393.3 371.5 400.0 371.3 C 406.7 371.2 413.3 371.2 420.0 371.1 C 426.7 371.1 433.3 370.8 440.0 371.0 C 446.7 371.1 453.3 371.6 460.0 372.0 C 466.7 372.3 473.3 372.7 480.0 373.0 C 486.7 373.3 493.3 373.5 500.0 373.6 C 506.7 373.6 513.3 373.4 520.0 373.3 C 526.7 373.3 533.3 373.6 540.0 373.4 C 546.7 373.2 553.3 372.4 560.0 372.1 C 566.7 371.7 573.3 371.4 580.0 371.3 C 586.7 371.2 593.3 371.3 600.0 371.3 C 606.7 371.3 616.7 371.4 620.0 371.4 "/>
<path d="M 280.0 372.6 C 283.3 372.6 293.3 372.6 300.0 372.9 C 306.7 373.1 313.3 373.7 320.0 374.0 C 326.7 374.3 333.3 374.6 340.0 374.8 C 346.7 375.1 353.3 375.3 360.0 375.3 C 366.7 375.4 373.3 375.2 380.0 375.1 C 386.7 375.0 393.3 374.9 400.0 374.7 C 406.7 374.5 413.3 374.2 420.0 374.1 C 426.7 373.9 433.3 374.1 440.0 373.9 C 446.7 373.6 453.3 372.8 460.0 372.7 C 466.7 372.6 473.3 372.9 480.0 373.0 C 486.7 373.1 493.3 373.2 500.0 373.4 C 506.7 373.6 513.3 374.1 520.0 374.4 C 526.7 374.8 533.3 375.1 540.0 375.3 C 546.7 375.5 553.3 375.6 560.0 375.5 C 566.7 375.5 573.3 375.2 580.0 375.1 C 586.7 374.9 593.3 374.8 600.0 374.6 C 606.7 374.4 616.7 374.0 620.0 373.9 "/>
<path d="M 280.0 374.9 C 283.3 374.9 293.3 374.9 300.0 374.8 C 306.7 374.8 313.3 374.6 320.0 374.8 C 326.7 374.9 333.3 375.2 340.0 375.5 C 346.7 375.8 353.3 376.4 360.0 376.7 C 366.7 376.9 373.3 377.1 380.0 377.1 C 386.7 377.2 393.3 377.1 400.0 377.0 C 406.7 377.0 413.3 377.3 420.0 377.1 C 426.7 376.9 433.3 376.2 440.0 375.9 C 446.7 375.7 453.3 376.0 460.0 375.7 C 466.7 375.5 473.3 374.6 480.0 374.5 C 486.7 374.4 493.3 374.9 500.0 375.1 C 506.7 375.3 513.3 375.4 520.0 375.6 C 526.7 375.7 533.3 375.7 540.0 375.9 C 546.7 376.1 553.3 376.4 560.0 376.6 C 566.7 376.9 573.3 377.4 580.0 377.4 C 586.7 377.4 593.3 377.0 600.0 376.8 C 606.7 376.7 616.7 376.8 620.0 376.7 "/>
<path d="M 280.0 377.8 C 283.3 377.7 293.3 377.2 300.0 377.0 C 306.7 376.8 313.3 376.6 320.0 376.6 C 326.7 376.6 333.3 376.7 340.0 377.0 C 346.7 377.2 353.3 377.8 360.0 378.1 C 366.7 378.3 373.3 378.1 380.0 378.2 C 386.7 378.4 393.3 378.7 400.0 378.9 C 406.7 379.1 413.3 379.5 420.0 379.3 C 426.7 379.2 433.3 378.4 440.0 378.2 C 446.7 378.0 453.3 378.3 460.0 378.1 C 466.7 377.9 473.3 377.2 480.0 376.9 C 486.7 376.7 493.3 376.7 500.0 376.7 C 506.7 376.6 513.3 376.6 520.0 376.7 C 526.7 376.8 533.3 377.1 540.0 377.3 C 546.7 377.6 553.3 378.0 560.0 378.3 C 566.7 378.5 573.3 378.5 580.0 378.6 C 586.7 378.8 593.3 379.3 600.0 379.3 C 606.7 379.3 616.7 378.8 620.0 378.7 "/>
<path d="M 280.0 380.4 C 283.3 380.5 293.3 381.1 300.0 381.2 C 306.7 381.2 313.3 380.8 320.0 380.7 C 326.7 380.5 333.3 380.6 340.0 380.4 C 346.7 380.2 353.3 379.8 360.0 379.6 C 366.7 379.3 373.3 379.2 380.0 379.0 C 386.7 378.9 393.3 378.8 400.0 378.7 C 406.7 378.6 413.3 378.5 420.0 378.7 C 426.7 378.9 433.3 379.5 440.0 379.7 C 446.7 379.9 453.3 379.9 460.0 380.1 C 466.7 380.3 473.3 380.8 480.0 380.9 C 486.7 381.0 493.3 380.6 500.0 380.6 C 506.7 380.6 513.3 381.0 520.0 380.9 C 526.7 380.8 533.3 380.3 540.0 380.0 C 546.7 379.6 553.3 379.2 560.0 379.0 C 566.7 378.7 573.3 378.5 580.0 378.4 C 586.7 378.4 593.3 378.4 600.0 378.5 C 606.7 378.6 616.7 378.9 620.0 379.0 "/>
<path d="M 280.0 381.1 C 283.3 381.1 293.3 381.2 300.0 381.1 C 306.7 381.0 313.3 380.3 320.0 380.3 C 326.7 380.2 333.3 380.5 340.0 380.6 C 346.7 380.8 353.3 380.8 360.0 381.1 C 366.7 381.4 373.3 382.0 380.0 382.3 C 386.7 382.5 393.3 382.7 400.0 382.7 C 406.7 382.8 413.3 382.8 420.0 382.7 C 426.7 382.7 433.3 382.5 440.0 382.4 C 446.7 382.3 453.3 382.3 460.0 382.1 C 466.7 381.9 473.3 381.4 480.0 381.2 C 486.7 380.9 493.3 380.8 500.0 380.7 C 506.7 380.6 513.3 380.6 520.0 380.6 C 526.7 380.6 533.3 380.5 540.0 380.7 C 546.7 380.9 553.3 381.6 560.0 381.9 C 566.7 382.3 573.3 382.5 580.0 382.6 C 586.7 382.7 593.3 382.6 600.0 382.6 C 606.7 382.5 616.7 382.6 620.0 382.6 "/>
<path d="M 280.0 382.5 C 283.3 382.4 293.3 382.1 300.0 382.1 C 306.7 382.2 313.3 382.5 320.0 382.8 C 326.7 383.2 333.3 383.7 340.0 384.1 C 346.7 384.4 353.3 384.6 360.0 384.8 C 366.7 384.9 373.3 384.9 380.0 384.9 C 386.7 384.8 393.3 384.6 400.0 384.4 C 406.7 384.2 413.3 383.9 420.0 383.7 C 426.7 383.5 433.3 383.5 440.0 383.3 C 446.7 383.2 453.3 383.0 460.0 382.8 C 466.7 382.6 473.3 382.1 480.0 382.0 C 486.7 382.0 493.3 382.2 500.0 382.5 C 506.7 382.8 513.3 383.5 520.0 383.7 C 526.7 384.0 533.3 384.0 540.0 384.1 C 546.7 384.2 553.3 384.3 560.0 384.5 C 566.7 384.6 573.3 385.0 580.0 385.0 C 586.7 384.9 593.3 384.4 600.0 384.1 C 606.7 383.9 616.7 383.5 620.0 383.3 "/>
<path d="M 280.0 384.5 C 283.3 384.6 293.3 384.8 300.0 384.9 C 306.7 385.1 313.3 385.1 320.0 385.2 C 326.7 385.4 333.3 385.7 340.0 386.0 C 346.7 386.2 353.3 386.6 360.0 386.7 C 366.7 386.8 373.3 386.9 380.0 386.8 C 386.7 386.8 393.3 386.5 400.0 386.2 C 406.7 386.0 413.3 385.4 420.0 385.2 C 426.7 385.0 433.3 385.1 440.0 384.9 C 446.7 384.7 453.3 384.0 460.0 384.0 C 466.7 383.9 473.3 384.4 480.0 384.7 C 486.7 384.9 493.3 385.2 500.0 385.4 C 506.7 385.5 513.3 385.4 520.0 385.5 C 526.7 385.7 533.3 386.1 540.0 386.2 C 546.7 386.4 553.3 386.6 560.0 386.6 C 566.7 386.5 573.3 386.2 580.0 386.0 C 586.7 385.9 593.3 386.0 600.0 385.7 C 606.7 385.5 616.7 384.8 620.0 384.6 "/>
<path d="M 280.0 385.9 C 283.3 386.0 293.3 386.5 300.0 386.8 C 306.7 387.0 313.3 387.0 320.0 387.3 C 326.7 387.5 333.3 388.1 340.0 388.3 C 346.7 388.5 353.3 388.3 360.0 388.4 C 366.7 388.4 373.3 388.8 380.0 388.7 C 386.7 388.6 393.3 388.0 400.0 387.7 C 406.7 387.5 413.3 387.4 420.0 387.2 C 426.7 387.0 433.3 386.9 440.0 386.7 C 446.7 386.6 453.3 386.5 460.0 386.5 C 466.7 386.5 473.3 386.6 480.0 386.7 C 486.7 386.9 493.3 387.0 500.0 387.2 C 506.7 387.4 513.3 387.6 520.0 387.8 C 526.7 388.1 533.3 388.3 540.0 388.5 C 546.7 388.6 553.3 389.0 560.0 388.9 C 566.7 388.9 573.3 388.3 580.0 388.1 C 586.7 387.9 593.3 388.0 600.0 387.8 C 606.7 387.5 616.7 386.7 620.0 386.5 "/>
<path d="M 280.0 390.1 C 283.3 390.1 293.3 390.1 300.0 389.9 C 306.7 389.8 313.3 389.5 320.0 389.2 C 326.7 389.0 333.3 388.6 340.0 388.4 C 346.7 388.2 353.3 387.9 360.0 387.9 C 366.7 388.0 373.3 388.4 380.0 388.6 C 386.7 388.8 393.3 389.0 400.0 389.1 C 406.7 389.3 413.3 389.4 420.0 389.6 C 426.7 389.7 433.3 390.0 440.0 390.1 C 446.7 390.3 453.3 390.3 460.0 390.2 C 466.7 390.2 473.3 390.1 480.0 390.0 C 486.7 389.8 493.3 389.7 500.0 389.4 C 506.7 389.2 513.3 388.7 520.0 388.5 C 526.7 388.3 533.3 388.2 540.0 388.2 C 546.7 388.2 553.3 388.3 560.0 388.3 C 566.7 388.3 573.3 388.2 580.0 388.4 C 586.7 388.5 593.3 389.1 600.0 389.3 C 606.7 389.5 616.7 389.7 620.0 389.8 "/>
<path d="M 280.0 390.0 C 283.3 390.1 293.3 390.6 300.0 390.9 C 306.7 391.2 313.3 391.4 320.0 391.7 C 326.7 391.9 333.3 392.4 340.0 392.5 C 346.7 392.7 353.3 392.7 360.0 392.7 C 366.7 392.7 373.3 392.7 380.0 392.5 C 386.7 392.2 393.3 391.3 400.0 391.0 C 406.7 390.7 413.3 391.1 420.0 390.9 C 426.7 390.7 433.3 390.1 440.0 389.9 C 446.7 389.8 453.3 390.0 460.0 390.1 C 466.7 390.2 473.3 390.6 480.0 390.7 C 486.7 390.9 493.3 390.8 500.0 391.0 C 506.7 391.2 513.3 391.7 520.0 391.9 C 526.7 392.1 533.3 392.3 540.0 392.4 C 546.7 392.4 553.3 392.5 560.0 392.4 C 566.7 392.3 573.3 392.1 580.0 391.8 C 586.7 391.5 593.3 391.0 600.0 390.8 C 606.7 390.6 616.7 390.7 620.0 390.7 "/>
<path d="M 280.0 392.2 C 283.3 392.2 293.3 392.1 300.0 392.1 C 306.7 392.1 313.3 392.0 320.0 392.2 C 326.7 392.4 333.3 392.9 340.0 393.2 C 346.7 393.4 353.3 393.6 360.0 393.8 C 366.7 394.0 373.3 394.4 380.0 394.5 C 386.7 394.6 393.3 394.6 400.0 394.4 C 406.7 394.2 413.3 393.7 420.0 393.5 C 426.7 393.3 433.3 393.2 440.0 393.0 C 446.7 392.7 453.3 392.1 460.0 391.9 C 466.7 391.7 473.3 391.5 480.0 391.6 C 486.7 391.7 493.3 392.3 500.0 392.5 C 506.7 392.7 513.3 392.7 520.0 392.9 C 526.7 393.1 533.3 393.5 540.0 393.7 C 546.7 394.0 553.3 394.4 560.0 394.5 C 566.7 394.6 573.3 394.4 580.0 394.4 C 586.7 394.3 593.3 394.2 600.0 394.0 C 606.7 393.9 616.7 393.5 620.0 393.3 "/>
<path d="M 280.0 393.5 C 283.3 393.7 293.3 394.3 300.0 394.5 C 306.7 394.8 313.3 395.0 320.0 395.1 C 326.7 395.2 333.3 395.1 340.0 395.3 C 346.7 395.4 353.3 395.8 360.0 396.0 C 366.7 396.2 373.3 396.5 380.0 396.4 C 386.7 396.4 393.3 395.8 400.0 395.6 C 406.7 395.3 413.3 395.1 420.0 394.9 C 426.7 394.6 433.3 394.4 440.0 394.1 C 446.7 393.9 453.3 393.6 460.0 393.6 C 466.7 393.6 473.3 394.1 480.0 394.3 C 486.7 394.5 493.3 394.7 500.0 394.9 C 506.7 395.1 513.3 395.1 520.0 395.3 C 526.7 395.5 533.3 396.0 540.0 396.2 C 546.7 396.3 553.3 395.9 560.0 395.9 C 566.7 395.9 573.3 396.1 580.0 396.0 C 586.7 396.0 593.3 395.9 600.0 395.7 C 606.7 395.4 616.7 394.9 620.0 394.8 "/>
<path d="M 280.0 395.6 C 283.3 395.6 293.3 395.6 300.0 395.7 C 306.7 395.7 313.3 395.6 320.0 395.8 C 326.7 396.0 333.3 396.4 340.0 396.7 C 346.7 397.0 353.3 397.4 360.0 397.7 C 366.7 397.9 373.3 398.2 380.0 398.2 C 386.7 398.3 393.3 398.2 400.0 398.1 C 406.7 398.1 413.3 398.0 420.0 397.8 C 426.7 397.6 433.3 397.1 440.0 396.9 C 446.7 396.6 453.3 396.7 460.0 396.5 C 466.7 396.3 473.3 395.9 480.0 395.7 C 486.7 395.6 493.3 395.3 500.0 395.4 C 506.7 395.6 513.3 396.4 520.0 396.6 C 526.7 396.8 533.3 396.5 540.0 396.6 C 546.7 396.8 553.3 397.1 560.0 397.3 C 566.7 397.5 573.3 397.7 580.0 397.8 C 586.7 397.9 593.3 397.9 600.0 397.8 C 606.7 397.7 616.7 397.3 620.0 397.2 "/>
<path d="M 280.0 399.4 C 283.3 399.6 293.3 400.3 300.0 400.3 C 306.7 400.4 313.3 399.9 320.0 399.8 C 326.7 399.7 333.3 399.8 340.0 399.7 C 346.7 399.5 353.3 399.2 360.0 398.9 C 366.7 398.6 373.3 398.2 380.0 398.0 C 386.7 397.8 393.3 397.7 400.0 397.8 C 406.7 397.8 413.3 398.0 420.0 398.2 C 426.7 398.3 433.3 398.6 440.0 398.8 C 446.7 399.0 453.3 399.1 460.0 399.4 C 466.7 399.6 473.3 400.1 480.0 400.2 C 486.7 400.3 493.3 400.3 500.0 400.2 C 506.7 400.1 513.3 399.9 520.0 399.6 C 526.7 399.3 533.3 398.8 540.0 398.6 C 546.7 398.4 553.3 398.5 560.0 398.3 C 566.7 398.1 573.3 397.7 580.0 397.5 C 586.7 397.4 593.3 397.3 600.0 397.4 C 606.7 397.6 616.7 398.1 620.0 398.2 "/>
<path d="M 280.0 399.6 C 283.3 399.7 293.3 399.7 300.0 399.9 C 306.7 400.1 313.3 400.5 320.0 400.8 C 326.7 401.2 333.3 401.6 340.0 401.8 C 346.7 402.1 353.3 402.2 360.0 402.2 C 366.7 402.2 373.3 402.2 380.0 402.0 C 386.7 401.8 393.3 401.3 400.0 401.0 C 406.7 400.7 413.3 400.4 420.0 400.1 C 426.7 399.8 433.3 399.4 440.0 399.3 C 446.7 399.3 453.3 399.6 460.0 399.7 C 466.7 399.8 473.3 399.9 480.0 400.0 C 486.7 400.1 493.3 400.2 500.0 400.5 C 506.7 400.7 513.3 401.2 520.0 401.4 C 526.7 401.7 533.3 401.9 540.0 402.0 C 546.7 402.1 553.3 402.1 560.0 402.0 C 566.7 401.8 573.3 401.3 580.0 401.0 C 586.7 400.8 593.3 400.5 600.0 400.3 C 606.7 400.0 616.7 399.8 620.0 399.7 "/>
<path d="M 280.0 402.9 C 283.3 402.7 293.3 402.4 300.0 402.2 C 306.7 401.9 313.3 401.3 320.0 401.2 C 326.7 401.1 333.3 401.5 340.0 401.6 C 346.7 401.8 353.3 401.7 360.0 401.9 C 366.7 402.2 373.3 402.8 380.0 403.1 C 386.7 403.4 393.3 403.8 400.0 403.8 C 406.7 403.9 413.3 403.7 420.0 403.6 C 426.7 403.5 433.3 403.4 440.0 403.2 C 446.7 403.1 453.3 402.9 460.0 402.7 C 466.7 402.5 473.3 402.2 480.0 402.1 C 486.7 401.9 493.3 402.0 500.0 401.8 C 506.7 401.7 513.3 401.2 520.0 401.2 C 526.7 401.3 533.3 401.8 540.0 402.1 C 546.7 402.3 553.3 402.6 560.0 402.7 C 566.7 402.9 573.3 402.8 580.0 403.0 C 586.7 403.2 593.3 403.6 600.0 403.7 C 606.7 403.9 616.7 403.8 620.0 403.8 "/>
<path d="M 280.0 405.0 C 283.3 405.1 293.3 405.7 300.0 405.7 C 306.7 405.8 313.3 405.5 320.0 405.3 C 326.7 405.2 333.3 405.1 340.0 405.0 C 346.7 404.9 353.3 405.0 360.0 404.8 C 366.7 404.6 373.3 403.9 380.0 403.7 C 386.7 403.4 393.3 403.5 400.0 403.5 C 406.7 403.5 413.3 403.6 420.0 403.6 C 426.7 403.7 433.3 403.5 440.0 403.7 C 446.7 403.9 453.3 404.6 460.0 404.9 C 466.7 405.2 473.3 405.6 480.0 405.7 C 486.7 405.7 493.3 405.4 500.0 405.3 C 506.7 405.3 513.3 405.4 520.0 405.3 C 526.7 405.2 533.3 404.8 540.0 404.6 C 546.7 404.4 553.3 404.1 560.0 404.0 C 566.7 403.8 573.3 403.8 580.0 403.7 C 586.7 403.5 593.3 403.2 600.0 403.1 C 606.7 403.1 616.7 403.4 620.0 403.4 "/>
<path d="M 280.0 407.3 C 283.3 407.4 293.3 407.5 300.0 407.4 C 306.7 407.3 313.3 407.0 320.0 406.7 C 326.7 406.5 333.3 406.1 340.0 405.8 C 346.7 405.5 353.3 404.9 360.0 404.9 C 366.7 404.8 373.3 405.2 380.0 405.4 C 386.7 405.6 393.3 405.9 400.0 406.1 C 406.7 406.3 413.3 406.3 420.0 406.6 C 426.7 406.8 433.3 407.3 440.0 407.4 C 446.7 407.6 453.3 407.6 460.0 407.5 C 466.7 407.4 473.3 407.1 480.0 407.1 C 486.7 407.1 493.3 407.4 500.0 407.2 C 506.7 407.0 513.3 406.2 520.0 405.8 C 526.7 405.5 533.3 405.2 540.0 405.1 C 546.7 404.9 553.3 404.8 560.0 404.8 C 566.7 404.9 573.3 405.1 580.0 405.3 C 586.7 405.6 593.3 406.1 600.0 406.4 C 606.7 406.6 616.7 406.7 620.0 406.7 "/>
<path d="M 280.0 407.2 C 283.3 407.4 293.3 408.3 300.0 408.6 C 306.7 409.0 313.3 409.1 320.0 409.3 C 326.7 409.4 333.3 409.7 340.0 409.7 C 346.7 409.7 353.3 409.4 360.0 409.2 C 366.7 409.1 373.3 409.1 380.0 408.8 C 386.7 408.6 393.3 407.9 400.0 407.7 C 406.7 407.5 413.3 407.8 420.0 407.7 C 426.7 407.5 433.3 407.0 440.0 407.0 C 446.7 407.0 453.3 407.4 460.0 407.5 C 466.7 407.6 473.3 407.5 480.0 407.6 C 486.7 407.8 493.3 408.2 500.0 408.6 C 506.7 408.9 513.3 409.5 520.0 409.6 C 526.7 409.7 533.3 409.3 540.0 409.2 C 546.7 409.1 553.3 409.2 560.0 409.1 C 566.7 408.9 573.3 408.6 580.0 408.3 C 586.7 408.1 593.3 407.8 600.0 407.6 C 606.7 407.4 616.7 407.4 620.0 407.4 "/>
<path d="M 280.0 410.9 C 283.3 410.7 293.3 410.1 300.0 409.9 C 306.7 409.7 313.3 409.7 320.0 409.6 C 326.7 409.5 333.3 409.5 340.0 409.4 C 346.7 409.3 353.3 409.0 360.0 409.0 C 366.7 409.1 373.3 409.7 380.0 409.9 C 386.7 410.2 393.3 410.6 400.0 410.8 C 406.7 410.9 413.3 410.8 420.0 410.9 C 426.7 410.9 433.3 411.0 440.0 411.0 C 446.7 411.0 453.3 410.9 460.0 410.8 C 466.7 410.7 473.3 410.5 480.0 410.3 C 486.7 410.1 493.3 409.9 500.0 409.7 C 506.7 409.6 513.3 409.4 520.0 409.3 C 526.7 409.2 533.3 408.9 540.0 408.9 C 546.7 408.9 553.3 409.0 560.0 409.2 C 566.7 409.4 573.3 409.6 580.0 409.9 C 586.7 410.2 593.3 410.7 600.0 411.0 C 606.7 411.2 616.7 411.5 620.0 411.6 "/>
<path d="M 280.0 413.1 C 283.3 413.1 293.3 413.0 300.0 412.8 C 306.7 412.5 313.3 411.8 320.0 411.6 C 326.7 411.3 333.3 411.6 340.0 411.5 C 346.7 411.4 353.3 411.0 360.0 410.9 C 366.7 410.8 373.3 410.8 380.0 411.0 C 386.7 411.2 393.3 411.7 400.0 412.0 C 406.7 412.3 413.3 412.6 420.0 412.8 C 426.7 413.0 433.3 413.3 440.0 413.4 C 446.7 413.5 453.3 413.3 460.0 413.2 C 466.7 413.1 473.3 412.9 480.0 412.7 C 486.7 412.5 493.3 412.3 500.0 412.1 C 506.7 412.0 513.3 411.9 520.0 411.7 C 526.7 411.6 533.3 411.4 540.0 411.3 C 546.7 411.2 553.3 410.9 560.0 410.9 C 566.7 411.0 573.3 411.5 580.0 411.7 C 586.7 411.9 593.3 411.9 600.0 412.1 C 606.7 412.2 616.7 412.6 620.0 412.7 "/>
<path d="M 280.0 413.7 C 283.3 413.6 293.3 412.9 300.0 412.7 C 306.7 412.6 313.3 412.7 320.0 412.7 C 326.7 412.7 333.3 412.8 340.0 412.9 C 346.7 413.0 353.3 413.0 360.0 413.3 C 366.7 413.6 373.3 414.2 380.0 414.5 C 386.7 414.7 393.3 414.7 400.0 414.8 C 406.7 414.9 413.3 415.2 420.0 415.2 C 426.7 415.1 433.3 414.8 440.0 414.7 C 446.7 414.5 453.3 414.7 460.0 414.4 C 466.7 414.1 473.3 413.3 480.0 413.1 C 486.7 412.8 493.3 413.2 500.0 413.1 C 506.7 413.1 513.3 412.7 520.0 412.8 C 526.7 412.8 533.3 413.2 540.0 413.4 C 546.7 413.7 553.3 414.0 560.0 414.2 C 566.7 414.4 573.3 414.8 580.0 414.9 C 586.7 415.0 593.3 415.0 600.0 415.0 C 606.7 415.1 616.7 415.1 620.0 415.1 "/>
<path d="M 280.0 414.8 C 283.3 415.0 293.3 415.6 300.0 415.8 C 306.7 416.0 313.3 415.7 320.0 415.9 C 326.7 416.1 333.3 416.8 340.0 417.0 C 346.7 417.1 353.3 416.8 360.0 416.8 C 366.7 416.7 373.3 416.8 380.0 416.7 C 386.7 416.5 393.3 415.9 400.0 415.6 C 406.7 415.4 413.3 415.3 420.0 415.2 C 426.7 415.1 433.3 415.1 440.0 415.0 C 446.7 415.0 453.3 414.9 460.0 415.0 C 466.7 415.1 473.3 415.4 480.0 415.6 C 486.7 415.8 493.3 415.8 500.0 416.0 C 506.7 416.3 513.3 416.8 520.0 417.0 C 526.7 417.2 533.3 417.3 540.0 417.3 C 546.7 417.2 553.3 416.8 560.0 416.6 C 566.7 416.5 573.3 416.6 580.0 416.4 C 586.7 416.2 593.3 415.8 600.0 415.6 C 606.7 415.3 616.7 414.9 620.0 414.8 "/>
<path d="M 280.0 416.3 C 283.3 416.4 293.3 416.8 300.0 417.0 C 306.7 417.2 313.3 417.4 320.0 417.6 C 326.7 417.7 333.3 417.6 340.0 417.9 C 346.7 418.2 353.3 419.0 360.0 419.1 C 366.7 419.3 373.3 418.7 380.0 418.6 C 386.7 418.5 393.3 418.7 400.0 418.6 C 406.7 418.5 413.3 418.3 420.0 418.1 C 426.7 417.8 433.3 417.3 440.0 417.1 C 446.7 416.9 453.3 416.9 460.0 416.9 C 466.7 416.9 473.3 417.0 480.0 417.0 C 486.7 417.1 493.3 417.1 500.0 417.3 C 506.7 417.4 513.3 417.8 520.0 418.0 C 526.7 418.1 533.3 418.2 540.0 418.3 C 546.7 418.5 553.3 419.0 560.0 419.1 C 566.7 419.1 573.3 418.6 580.0 418.5 C 586.7 418.4 593.3 418.9 600.0 418.6 C 606.7 418.4 616.7 417.4 620.0 417.2 "/>
<path d="M 280.0 418.7 C 283.3 418.6 293.3 418.2 300.0 418.2 C 306.7 418.2 313.3 418.6 320.0 418.7 C 326.7 418.9 333.3 418.9 340.0 419.2 C 346.7 419.4 353.3 420.0 360.0 420.2 C 366.7 420.5 373.3 420.4 380.0 420.5 C 386.7 420.6 393.3 420.6 400.0 420.6 C 406.7 420.6 413.3 420.7 420.0 420.5 C 426.7 420.4 433.3 420.0 440.0 419.8 C 446.7 419.6 453.3 419.6 460.0 419.5 C 466.7 419.3 473.3 419.0 480.0 418.9 C 486.7 418.8 493.3 418.8 500.0 418.9 C 506.7 419.0 513.3 419.1 520.0 419.3 C 526.7 419.5 533.3 419.8 540.0 420.0 C 546.7 420.2 553.3 420.3 560.0 420.4 C 566.7 420.4 573.3 420.5 580.0 420.6 C 586.7 420.7 593.3 420.9 600.0 420.7 C 606.7 420.6 616.7 420.1 620.0 419.9 "/>
<path d="M 280.0 422.1 C 283.3 422.0 293.3 421.6 300.0 421.4 C 306.7 421.2 313.3 421.0 320.0 420.9 C 326.7 420.8 333.3 420.9 340.0 420.8 C 346.7 420.7 353.3 420.5 360.0 420.5 C 366.7 420.5 373.3 420.5 380.0 420.7 C 386.7 420.9 393.3 421.6 400.0 421.8 C 406.7 422.1 413.3 422.2 420.0 422.3 C 426.7 422.5 433.3 422.8 440.0 422.8 C 446.7 422.9 453.3 422.7 460.0 422.5 C 466.7 422.4 473.3 422.3 480.0 422.0 C 486.7 421.7 493.3 421.2 500.0 421.0 C 506.7 420.7 513.3 420.8 520.0 420.7 C 526.7 420.6 533.3 420.1 540.0 420.1 C 546.7 420.2 553.3 420.8 560.0 421.1 C 566.7 421.3 573.3 421.3 580.0 421.5 C 586.7 421.7 593.3 421.9 600.0 422.1 C 606.7 422.2 616.7 422.4 620.0 422.5 "/>
<path d="M 280.0 424.5 C 283.3 424.3 293.3 423.8 300.0 423.6 C 306.7 423.4 313.3 423.4 320.0 423.1 C 326.7 422.9 333.3 422.3 340.0 422.2 C 346.7 422.0 353.3 422.3 360.0 422.4 C 366.7 422.4 373.3 422.3 380.0 422.5 C 386.7 422.6 393.3 423.1 400.0 423.4 C 406.7 423.6 413.3 423.7 420.0 423.9 C 426.7 424.2 433.3 424.8 440.0 425.0 C 446.7 425.1 453.3 424.8 460.0 424.7 C 466.7 424.5 473.3 424.4 480.0 424.1 C 486.7 423.9 493.3 423.6 500.0 423.3 C 506.7 423.0 513.3 422.6 520.0 422.4 C 526.7 422.3 533.3 422.6 540.0 422.7 C 546.7 422.7 553.3 422.9 560.0 422.9 C 566.7 423.0 573.3 422.7 580.0 422.9 C 586.7 423.2 593.3 424.1 600.0 424.4 C 606.7 424.7 616.7 424.7 620.0 424.7 "/>
<path d="M 280.0 426.5 C 283.3 426.4 293.3 425.7 300.0 425.4 C 306.7 425.1 313.3 424.8 320.0 424.6 C 326.7 424.4 333.3 424.3 340.0 424.2 C 346.7 424.1 353.3 423.9 360.0 424.0 C 366.7 424.1 373.3 424.5 380.0 424.8 C 386.7 425.1 393.3 425.3 400.0 425.5 C 406.7 425.7 413.3 425.7 420.0 425.9 C 426.7 426.1 433.3 426.5 440.0 426.5 C 446.7 426.6 453.3 426.3 460.0 426.2 C 466.7 426.1 473.3 426.1 480.0 425.9 C 486.7 425.6 493.3 425.2 500.0 424.9 C 506.7 424.7 513.3 424.4 520.0 424.3 C 526.7 424.2 533.3 424.1 540.0 424.2 C 546.7 424.3 553.3 424.7 560.0 424.9 C 566.7 425.1 573.3 425.2 580.0 425.3 C 586.7 425.5 593.3 425.6 600.0 425.8 C 606.7 426.1 616.7 426.5 620.0 426.6 "/>
<path d="M 280.0 428.8 C 283.3 428.7 293.3 428.6 300.0 428.3 C 306.7 428.1 313.3 427.3 320.0 427.0 C 326.7 426.6 333.3 426.4 340.0 426.2 C 346.7 426.1 353.3 426.1 360.0 426.1 C 366.7 426.1 373.3 426.1 380.0 426.2 C 386.7 426.3 393.3 426.5 400.0 426.7 C 406.7 426.9 413.3 427.1 420.0 427.4 C 426.7 427.7 433.3 428.2 440.0 428.4 C 446.7 428.6 453.3 428.9 460.0 428.8 C 466.7 428.7 473.3 428.1 480.0 428.0 C 486.7 427.8 493.3 428.1 500.0 428.0 C 506.7 427.8 513.3 427.0 520.0 426.8 C 526.7 426.6 533.3 426.6 540.0 426.5 C 546.7 426.3 553.3 426.0 560.0 426.0 C 566.7 426.0 573.3 426.1 580.0 426.4 C 586.7 426.6 593.3 427.1 600.0 427.4 C 606.7 427.7 616.7 427.9 620.0 428.0 "/>
<path d="M 280.0 428.5 C 283.3 428.4 293.3 427.9 300.0 428.0 C 306.7 428.0 313.3 428.5 320.0 428.7 C 326.7 428.8 333.3 428.6 340.0 428.8 C 346.7 429.0 353.3 429.6 360.0 429.9 C 366.7 430.2 373.3 430.3 380.0 430.3 C 386.7 430.3 393.3 430.0 400.0 430.0 C 406.7 430.0 413.3 430.4 420.0 430.2 C 426.7 430.0 433.3 429.2 440.0 428.9 C 446.7 428.6 453.3 428.7 460.0 428.5 C 466.7 428.3 473.3 427.9 480.0 427.8 C 486.7 427.8 493.3 428.0 500.0 428.2 C 506.7 428.3 513.3 428.5 520.0 428.6 C 526.7 428.8 533.3 429.0 540.0 429.2 C 546.7 429.4 553.3 429.8 560.0 430.0 C 566.7 430.1 573.3 430.1 580.0 430.2 C 586.7 430.2 593.3 430.5 600.0 430.4 C 606.7 430.3 616.7 429.6 620.0 429.4 "/>
<path d="M 280.0 429.8 C 283.3 429.9 293.3 430.4 300.0 430.5 C 306.7 430.6 313.3 430.3 320.0 430.4 C 326.7 430.6 333.3 431.0 340.0 431.3 C 346.7 431.6 353.3 431.8 360.0 432.1 C 366.7 432.3 373.3 432.6 380.0 432.6 C 386.7 432.7 393.3 432.4 400.0 432.2 C 406.7 432.0 413.3 431.7 420.0 431.4 C 426.7 431.0 433.3 430.3 440.0 430.1 C 446.7 429.9 453.3 430.2 460.0 430.2 C 466.7 430.3 473.3 430.1 480.0 430.2 C 486.7 430.3 493.3 430.5 500.0 430.7 C 506.7 430.8 513.3 430.8 520.0 431.0 C 526.7 431.2 533.3 431.7 540.0 431.8 C 546.7 432.0 553.3 431.9 560.0 431.9 C 566.7 432.0 573.3 432.2 580.0 432.1 C 586.7 432.0 593.3 431.7 600.0 431.4 C 606.7 431.1 616.7 430.6 620.0 430.4 "/>
<path d="M 280.0 432.3 C 283.3 432.3 293.3 432.1 300.0 432.0 C 306.7 432.0 313.3 431.9 320.0 431.9 C 326.7 432.0 333.3 432.1 340.0 432.4 C 346.7 432.6 353.3 433.2 360.0 433.5 C 366.7 433.8 373.3 434.0 380.0 434.1 C 386.7 434.2 393.3 434.2 400.0 434.2 C 406.7 434.2 413.3 434.2 420.0 434.1 C 426.7 434.0 433.3 433.9 440.0 433.7 C 446.7 433.4 453.3 432.9 460.0 432.6 C 466.7 432.3 473.3 431.9 480.0 431.8 C 486.7 431.6 493.3 431.6 500.0 431.6 C 506.7 431.7 513.3 431.7 520.0 431.9 C 526.7 432.1 533.3 432.7 540.0 433.0 C 546.7 433.2 553.3 433.1 560.0 433.4 C 566.7 433.6 573.3 434.3 580.0 434.4 C 586.7 434.6 593.3 434.6 600.0 434.4 C 606.7 434.3 616.7 433.7 620.0 433.5 "/>
<path d="M 280.0 436.3 C 283.3 436.2 293.3 435.9 300.0 435.6 C 306.7 435.4 313.3 435.1 320.0 434.8 C 326.7 434.6 333.3 434.6 340.0 434.4 C 346.7 434.2 353.3 433.8 360.0 433.7 C 366.7 433.7 373.3 433.9 380.0 433.9 C 386.7 434.0 393.3 434.1 400.0 434.3 C 406.7 434.5 413.3 435.0 420.0 435.3 C 426.7 435.6 433.3 435.9 440.0 436.1 C 446.7 436.2 453.3 436.2 460.0 436.1 C 466.7 436.1 473.3 436.1 480.0 435.9 C 486.7 435.8 493.3 435.5 500.0 435.3 C 506.7 435.1 513.3 434.8 520.0 434.5 C 526.7 434.2 533.3 433.8 540.0 433.6 C 546.7 433.5 553.3 433.5 560.0 433.5 C 566.7 433.6 573.3 433.8 580.0 434.0 C 586.7 434.2 593.3 434.5 600.0 434.7 C 606.7 435.0 616.7 435.4 620.0 435.5 "/>
<path d="M 280.0 437.7 C 283.3 437.7 293.3 438.2 300.0 438.1 C 306.7 438.1 313.3 437.7 320.0 437.4 C 326.7 437.2 333.3 436.9 340.0 436.6 C 346.7 436.4 353.3 436.2 360.0 436.0 C 366.7 435.8 373.3 435.5 380.0 435.5 C 386.7 435.5 393.3 435.9 400.0 436.1 C 406.7 436.2 413.3 436.4 420.0 436.6 C 426.7 436.8 433.3 437.0 440.0 437.2 C 446.7 437.5 453.3 438.0 460.0 438.2 C 466.7 438.4 473.3 438.4 480.0 438.3 C 486.7 438.2 493.3 438.0 500.0 437.7 C 506.7 437.5 513.3 437.1 520.0 436.9 C 526.7 436.6 533.3 436.5 540.0 436.3 C 546.7 436.2 553.3 436.0 560.0 435.9 C 566.7 435.9 573.3 436.0 580.0 436.1 C 586.7 436.2 593.3 436.3 600.0 436.5 C 606.7 436.7 616.7 437.1 620.0 437.3 "/>
<path d="M 280.0 437.9 C 283.3 438.0 293.3 438.4 300.0 438.6 C 306.7 438.8 313.3 439.1 320.0 439.2 C 326.7 439.4 333.3 439.3 340.0 439.4 C 346.7 439.6 353.3 440.2 360.0 440.2 C 366.7 440.1 373.3 439.6 380.0 439.3 C 386.7 439.1 393.3 438.9 400.0 438.7 C 406.7 438.4 413.3 438.0 420.0 437.8 C 426.7 437.7 433.3 437.7 440.0 437.6 C 446.7 437.5 453.3 437.3 460.0 437.3 C 466.7 437.3 473.3 437.3 480.0 437.6 C 486.7 437.8 493.3 438.6 500.0 438.8 C 506.7 439.1 513.3 439.0 520.0 439.2 C 526.7 439.3 533.3 439.8 540.0 439.9 C 546.7 440.1 553.3 440.1 560.0 439.9 C 566.7 439.8 573.3 439.4 580.0 439.1 C 586.7 438.9 593.3 438.8 600.0 438.6 C 606.7 438.3 616.7 438.0 620.0 437.9 "/>
<path d="M 280.0 441.8 C 283.3 441.8 293.3 441.7 300.0 441.7 C 306.7 441.6 313.3 441.5 320.0 441.4 C 326.7 441.2 333.3 440.8 340.0 440.6 C 346.7 440.5 353.3 440.6 360.0 440.4 C 366.7 440.1 373.3 439.5 380.0 439.4 C 386.7 439.3 393.3 439.7 400.0 439.8 C 406.7 439.9 413.3 439.7 420.0 439.9 C 426.7 440.0 433.3 440.5 440.0 440.7 C 446.7 440.9 453.3 440.8 460.0 441.0 C 466.7 441.2 473.3 441.7 480.0 441.8 C 486.7 441.9 493.3 441.9 500.0 441.8 C 506.7 441.7 513.3 441.6 520.0 441.4 C 526.7 441.2 533.3 441.0 540.0 440.6 C 546.7 440.3 553.3 439.7 560.0 439.4 C 566.7 439.1 573.3 439.1 580.0 439.1 C 586.7 439.1 593.3 439.2 600.0 439.5 C 606.7 439.7 616.7 440.4 620.0 440.6 "/>
<path d="M 280.0 443.4 C 283.3 443.5 293.3 443.9 300.0 443.8 C 306.7 443.7 313.3 443.3 320.0 442.9 C 326.7 442.6 333.3 442.0 340.0 441.7 C 346.7 441.5 353.3 441.6 360.0 441.5 C 366.7 441.5 373.3 441.5 380.0 441.6 C 386.7 441.6 393.3 441.6 400.0 441.8 C 406.7 442.0 413.3 442.4 420.0 442.7 C 426.7 442.9 433.3 443.2 440.0 443.4 C 446.7 443.5 453.3 443.6 460.0 443.6 C 466.7 443.5 473.3 443.4 480.0 443.3 C 486.7 443.2 493.3 443.3 500.0 443.2 C 506.7 443.0 513.3 442.8 520.0 442.6 C 526.7 442.4 533.3 442.2 540.0 442.0 C 546.7 441.8 553.3 441.7 560.0 441.5 C 566.7 441.4 573.3 440.9 580.0 441.0 C 586.7 441.2 593.3 442.0 600.0 442.3 C 606.7 442.7 616.7 443.0 620.0 443.1 "/>
<path d="M 280.0 444.9 C 283.3 445.1 293.3 445.6 300.0 445.7 C 306.7 445.8 313.3 445.6 320.0 445.6 C 326.7 445.5 333.3 445.5 340.0 445.4 C 346.7 445.3 353.3 445.0 360.0 444.8 C 366.7 444.6 373.3 444.6 380.0 444.3 C 386.7 444.1 393.3 443.5 400.0 443.3 C 406.7 443.0 413.3 442.8 420.0 442.9 C 426.7 443.0 433.3 443.6 440.0 443.8 C 446.7 444.0 453.3 443.7 460.0 443.9 C 466.7 444.2 473.3 445.0 480.0 445.2 C 486.7 445.5 493.3 445.3 500.0 445.3 C 506.7 445.3 513.3 445.2 520.0 445.2 C 526.7 445.2 533.3 445.6 540.0 445.3 C 546.7 445.1 553.3 444.3 560.0 444.0 C 566.7 443.7 573.3 443.6 580.0 443.5 C 586.7 443.4 593.3 443.4 600.0 443.4 C 606.7 443.3 616.7 443.3 620.0 443.2 "/>
<path d="M 280.0 445.1 C 283.3 445.2 293.3 445.4 300.0 445.6 C 306.7 445.9 313.3 446.2 320.0 446.4 C 326.7 446.6 333.3 446.6 340.0 446.8 C 346.7 447.0 353.3 447.3 360.0 447.5 C 366.7 447.6 373.3 447.9 380.0 447.8 C 386.7 447.7 393.3 447.0 400.0 446.8 C 406.7 446.6 413.3 446.6 420.0 446.3 C 426.7 446.1 433.3 445.6 440.0 445.4 C 446.7 445.2 453.3 445.2 460.0 445.2 C 466.7 445.1 473.3 444.9 480.0 445.0 C 486.7 445.1 493.3 445.3 500.0 445.6 C 506.7 445.9 513.3 446.6 520.0 446.8 C 526.7 447.1 533.3 446.9 540.0 447.0 C 546.7 447.2 553.3 447.7 560.0 447.8 C 566.7 447.9 573.3 447.8 580.0 447.5 C 586.7 447.3 593.3 446.7 600.0 446.4 C 606.7 446.1 616.7 446.0 620.0 445.9 "/>
<path d="M 280.0 448.0 C 283.3 448.3 293.3 449.1 300.0 449.4 C 306.7 449.6 313.3 449.7 320.0 449.6 C 326.7 449.6 333.3 449.3 340.0 449.2 C 346.7 449.0 353.3 448.8 360.0 448.6 C 366.7 448.4 373.3 448.2 380.0 448.0 C 386.7 447.7 393.3 447.4 400.0 447.2 C 406.7 446.9 413.3 446.6 420.0 446.6 C 426.7 446.6 433.3 447.0 440.0 447.3 C 446.7 447.6 453.3 448.0 460.0 448.3 C 466.7 448.6 473.3 448.9 480.0 449.1 C 486.7 449.3 493.3 449.5 500.0 449.6 C 506.7 449.7 513.3 449.5 520.0 449.5 C 526.7 449.4 533.3 449.5 540.0 449.2 C 546.7 449.0 553.3 448.2 560.0 447.9 C 566.7 447.5 573.3 447.2 580.0 447.1 C 586.7 446.9 593.3 446.8 600.0 446.8 C 606.7 446.7 616.7 446.8 620.0 446.8 "/>
<path d="M 280.0 451.0 C 283.3 451.0 293.3 451.2 300.0 451.1 C 306.7 450.9 313.3 450.4 320.0 450.1 C 326.7 449.7 333.3 449.2 340.0 449.0 C 346.7 448.8 353.3 449.0 360.0 448.9 C 366.7 448.9 373.3 448.8 380.0 448.9 C 386.7 449.0 393.3 449.4 400.0 449.7 C 406.7 450.0 413.3 450.3 420.0 450.6 C 426.7 450.8 433.3 451.2 440.0 451.2 C 446.7 451.3 453.3 451.0 460.0 451.0 C 466.7 451.0 473.3 451.6 480.0 451.4 C 486.7 451.3 493.3 450.4 500.0 450.1 C 506.7 449.7 513.3 449.5 520.0 449.3 C 526.7 449.1 533.3 449.2 540.0 449.1 C 546.7 449.0 553.3 448.6 560.0 448.7 C 566.7 448.7 573.3 449.0 580.0 449.2 C 586.7 449.5 593.3 449.7 600.0 449.9 C 606.7 450.2 616.7 450.7 620.0 450.8 "/>
<path d="M 280.0 451.1 C 283.3 451.2 293.3 451.3 300.0 451.5 C 306.7 451.8 313.3 452.2 320.0 452.5 C 326.7 452.8 333.3 453.3 340.0 453.4 C 346.7 453.4 353.3 453.0 360.0 452.9 C 366.7 452.9 373.3 453.2 380.0 453.1 C 386.7 453.0 393.3 452.6 400.0 452.3 C 406.7 451.9 413.3 451.4 420.0 451.2 C 426.7 451.0 433.3 451.2 440.0 451.1 C 446.7 451.0 453.3 450.5 460.0 450.6 C 466.7 450.6 473.3 451.1 480.0 451.4 C 486.7 451.6 493.3 451.9 500.0 452.1 C 506.7 452.3 513.3 452.4 520.0 452.6 C 526.7 452.8 533.3 453.3 540.0 453.3 C 546.7 453.4 553.3 453.1 560.0 452.9 C 566.7 452.7 573.3 452.5 580.0 452.3 C 586.7 452.1 593.3 451.9 600.0 451.7 C 606.7 451.6 616.7 451.5 620.0 451.4 "/>
<path d="M 280.0 452.6 C 283.3 452.7 293.3 452.7 300.0 452.8 C 306.7 453.0 313.3 453.1 320.0 453.4 C 326.7 453.6 333.3 453.9 340.0 454.1 C 346.7 454.3 353.3 454.5 360.0 454.6 C 366.7 454.7 373.3 454.7 380.0 454.8 C 386.7 454.9 393.3 455.3 400.0 455.3 C 406.7 455.2 413.3 454.6 420.0 454.3 C 426.7 453.9 433.3 453.4 440.0 453.2 C 446.7 453.0 453.3 453.1 460.0 453.0 C 466.7 453.0 473.3 452.8 480.0 452.8 C 486.7 452.9 493.3 453.0 500.0 453.2 C 506.7 453.4 513.3 453.8 520.0 454.0 C 526.7 454.2 533.3 454.0 540.0 454.2 C 546.7 454.4 553.3 454.9 560.0 455.0 C 566.7 455.1 573.3 454.7 580.0 454.7 C 586.7 454.7 593.3 454.9 600.0 454.7 C 606.7 454.6 616.7 454.0 620.0 453.9 "/>
<path d="M 280.0 454.6 C 283.3 454.5 293.3 454.4 300.0 454.5 C 306.7 454.6 313.3 455.0 320.0 455.2 C 326.7 455.3 333.3 455.4 340.0 455.6 C 346.7 455.7 353.3 456.1 360.0 456.3 C 366.7 456.6 373.3 456.7 380.0 456.8 C 386.7 456.9 393.3 457.2 400.0 457.0 C 406.7 456.9 413.3 456.4 420.0 456.1 C 426.7 455.9 433.3 455.6 440.0 455.3 C 446.7 455.1 453.3 454.7 460.0 454.6 C 466.7 454.5 473.3 454.9 480.0 454.9 C 486.7 455.0 493.3 454.7 500.0 454.8 C 506.7 454.9 513.3 455.4 520.0 455.7 C 526.7 455.9 533.3 456.2 540.0 456.3 C 546.7 456.4 553.3 456.3 560.0 456.4 C 566.7 456.5 573.3 457.0 580.0 457.0 C 586.7 457.0 593.3 456.6 600.0 456.5 C 606.7 456.4 616.7 456.3 620.0 456.3 "/>
<path d="M 280.0 459.1 C 283.3 459.1 293.3 459.1 300.0 459.1 C 306.7 459.1 313.3 459.1 320.0 458.9 C 326.7 458.6 333.3 458.0 340.0 457.7 C 346.7 457.4 353.3 457.2 360.0 457.0 C 366.7 456.8 373.3 456.5 380.0 456.4 C 386.7 456.3 393.3 456.4 400.0 456.4 C 406.7 456.5 413.3 456.6 420.0 456.9 C 426.7 457.1 433.3 457.8 440.0 458.0 C 446.7 458.3 453.3 458.2 460.0 458.3 C 466.7 458.4 473.3 458.4 480.0 458.5 C 486.7 458.6 493.3 459.0 500.0 458.9 C 506.7 458.9 513.3 458.3 520.0 458.1 C 526.7 457.9 533.3 457.9 540.0 457.7 C 546.7 457.5 553.3 456.9 560.0 456.6 C 566.7 456.4 573.3 456.3 580.0 456.3 C 586.7 456.4 593.3 456.9 600.0 457.1 C 606.7 457.2 616.7 457.3 620.0 457.4 "/>
<path d="M 280.0 458.7 C 283.3 458.7 293.3 458.3 300.0 458.4 C 306.7 458.5 313.3 459.2 320.0 459.4 C 326.7 459.6 333.3 459.4 340.0 459.6 C 346.7 459.8 353.3 460.4 360.0 460.6 C 366.7 460.8 373.3 460.8 380.0 460.8 C 386.7 460.8 393.3 460.8 400.0 460.6 C 406.7 460.5 413.3 460.2 420.0 460.0 C 426.7 459.8 433.3 459.5 440.0 459.3 C 446.7 459.0 453.3 458.5 460.0 458.5 C 466.7 458.4 473.3 458.7 480.0 458.8 C 486.7 458.8 493.3 458.7 500.0 458.8 C 506.7 458.9 513.3 459.2 520.0 459.5 C 526.7 459.8 533.3 460.5 540.0 460.7 C 546.7 460.9 553.3 460.9 560.0 460.9 C 566.7 460.9 573.3 460.7 580.0 460.6 C 586.7 460.6 593.3 460.6 600.0 460.5 C 606.7 460.3 616.7 459.9 620.0 459.7 "/>
<path d="M 280.0 461.9 C 283.3 462.1 293.3 462.7 300.0 462.8 C 306.7 462.9 313.3 462.4 320.0 462.3 C 326.7 462.2 333.3 462.4 340.0 462.3 C 346.7 462.2 353.3 462.0 360.0 461.8 C 366.7 461.5 373.3 460.9 380.0 460.6 C 386.7 460.3 393.3 460.1 400.0 460.0 C 406.7 459.9 413.3 460.0 420.0 460.2 C 426.7 460.3 433.3 460.6 440.0 460.8 C 446.7 461.0 453.3 461.2 460.0 461.5 C 466.7 461.8 473.3 462.3 480.0 462.5 C 486.7 462.7 493.3 462.7 500.0 462.7 C 506.7 462.6 513.3 462.4 520.0 462.2 C 526.7 462.0 533.3 461.8 540.0 461.6 C 546.7 461.4 553.3 461.2 560.0 461.0 C 566.7 460.7 573.3 460.2 580.0 460.1 C 586.7 460.0 593.3 460.1 600.0 460.2 C 606.7 460.3 616.7 460.5 620.0 460.6 "/>
<path d="M 280.0 462.3 C 283.3 462.4 293.3 463.0 300.0 463.3 C 306.7 463.5 313.3 463.7 320.0 463.9 C 326.7 464.2 333.3 464.7 340.0 464.7 C 346.7 464.8 353.3 464.5 360.0 464.4 C 366.7 464.3 373.3 464.3 380.0 464.2 C 386.7 464.0 393.3 463.7 400.0 463.5 C 406.7 463.3 413.3 463.0 420.0 462.8 C 426.7 462.5 433.3 462.0 440.0 461.9 C 446.7 461.9 453.3 462.2 460.0 462.3 C 466.7 462.4 473.3 462.2 480.0 462.5 C 486.7 462.7 493.3 463.4 500.0 463.7 C 506.7 464.0 513.3 464.1 520.0 464.3 C 526.7 464.4 533.3 464.5 540.0 464.5 C 546.7 464.5 553.3 464.4 560.0 464.3 C 566.7 464.2 573.3 464.3 580.0 464.1 C 586.7 463.9 593.3 463.4 600.0 463.0 C 606.7 462.7 616.7 462.3 620.0 462.2 "/>
<path d="M 280.0 464.4 C 283.3 464.4 293.3 464.2 300.0 464.2 C 306.7 464.2 313.3 464.3 320.0 464.5 C 326.7 464.6 333.3 465.0 340.0 465.2 C 346.7 465.4 353.3 465.4 360.0 465.6 C 366.7 465.8 373.3 466.2 380.0 466.4 C 386.7 466.6 393.3 466.9 400.0 466.9 C 406.7 466.8 413.3 466.2 420.0 466.0 C 426.7 465.7 433.3 465.7 440.0 465.5 C 446.7 465.3 453.3 465.1 460.0 464.9 C 466.7 464.8 473.3 464.5 480.0 464.4 C 486.7 464.3 493.3 464.6 500.0 464.6 C 506.7 464.5 513.3 464.2 520.0 464.3 C 526.7 464.5 533.3 465.2 540.0 465.5 C 546.7 465.8 553.3 466.0 560.0 466.2 C 566.7 466.4 573.3 466.8 580.0 466.8 C 586.7 466.9 593.3 466.9 600.0 466.6 C 606.7 466.4 616.7 465.7 620.0 465.5 "/>
<path d="M 280.0 466.4 C 283.3 466.3 293.3 466.0 300.0 466.0 C 306.7 466.0 313.3 466.2 320.0 466.4 C 326.7 466.6 333.3 467.1 340.0 467.4 C 346.7 467.7 353.3 467.8 360.0 468.0 C 366.7 468.1 373.3 468.2 380.0 468.3 C 386.7 468.4 393.3 468.4 400.0 468.3 C 406.7 468.2 413.3 467.9 420.0 467.7 C 426.7 467.6 433.3 467.6 440.0 467.4 C 446.7 467.1 453.3 466.6 460.0 466.3 C 466.7 466.1 473.3 465.7 480.0 465.7 C 486.7 465.7 493.3 466.3 500.0 466.4 C 506.7 466.5 513.3 466.2 520.0 466.4 C 526.7 466.6 533.3 467.6 540.0 467.9 C 546.7 468.1 553.3 467.7 560.0 467.8 C 566.7 468.0 573.3 468.8 580.0 468.8 C 586.7 468.8 593.3 468.0 600.0 467.8 C 606.7 467.6 616.7 467.7 620.0 467.7 "/>
<path d="M 280.0 470.0 C 283.3 470.0 293.3 470.0 300.0 469.9 C 306.7 469.8 313.3 469.5 320.0 469.4 C 326.7 469.2 333.3 469.3 340.0 469.1 C 346.7 468.8 353.3 468.1 360.0 467.9 C 366.7 467.8 373.3 468.0 380.0 468.1 C 386.7 468.1 393.3 468.0 400.0 468.1 C 406.7 468.2 413.3 468.2 420.0 468.5 C 426.7 468.8 433.3 469.5 440.0 469.8 C 446.7 470.0 453.3 470.0 460.0 470.1 C 466.7 470.1 473.3 470.2 480.0 470.1 C 486.7 470.0 493.3 469.8 500.0 469.6 C 506.7 469.5 513.3 469.3 520.0 469.1 C 526.7 469.0 533.3 468.9 540.0 468.7 C 546.7 468.4 553.3 467.7 560.0 467.7 C 566.7 467.6 573.3 468.1 580.0 468.2 C 586.7 468.3 593.3 468.2 600.0 468.3 C 606.7 468.5 616.7 468.9 620.0 469.1 "/>
<path d="M 230.0 336 L 300.0 467"/>
<path d="M 235.0 336 L 305.0 467"/>
<path d="M 240.0 336 L 310.0 467"/>
<path d="M 245.0 336 L 315.0 467"/>
<path d="M 250.0 336 L 320.0 467"/>
<path d="M 255.0 336 L 325.0 467"/>
<path d="M 260.0 336 L 330.0 467"/>
<path d="M 265.0 336 L 335.0 467"/>
<path d="M 270.0 336 L 340.0 467"/>
<path d="M 275.0 336 L 345.0 467"/>
<path d="M 280.0 336 L 350.0 467"/>
<path d="M 285.0 336 L 355.0 467"/>
<path d="M 290.0 336 L 360.0 467"/>
<path d="M 295.0 336 L 365.0 467"/>
<path d="M 300.0 336 L 370.0 467"/>
<path d="M 305.0 336 L 375.0 467"/>
<path d="M 310.0 336 L 380.0 467"/>
<path d="M 315.0 336 L 385.0 467"/>
<path d="M 320.0 336 L 390.0 467"/>
<path d="M 325.0 336 L 395.0 467"/>
<path d="M 330.0 336 L 400.0 467"/>
<path d="M 335.0 336 L 405.0 467"/>
<path d="M 340.0 336 L 410.0 467"/>
<path d="M 345.0 336 L 415.0 467"/>
<path d="M 350.0 336 L 420.0 467"/>
<path d="M 355.0 336 L 425.0 467"/>
<path d="M 360.0 336 L 430.0 467"/>
<path d="M 365.0 336 L 435.0 467"/>
<path d="M 370.0 336 L 440.0 467"/>
<path d="M 375.0 336 L 445.0 467"/>
<path d="M 380.0 336 L 450.0 467"/>
<path d="M 385.0 336 L 455.0 467"/>
<path d="M 390.0 336 L 460.0 467"/>
<path d="M 395.0 336 L 465.0 467"/>
<path d="M 400.0 336 L 470.0 467"/>
<path d="M 405.0 336 L 475.0 467"/>
<path d="M 410.0 336 L 480.0 467"/>
<path d="M 415.0 336 L 485.0 467"/>
<path d="M 420.0 336 L 490.0 467"/>
<path d="M 425.0 336 L 495.0 467"/>
<path d="M 430.0 336 L 500.0 467"/>
<path d="M 435.0 336 L 505.0 467"/>
<path d="M 440.0 336 L 510.0 467"/>
<path d="M 445.0 336 L 515.0 467"/>
<path d="M 450.0 336 L 520.0 467"/>
<path d="M 455.0 336 L 525.0 467"/>
<path d="M 460.0 336 L 530.0 467"/>
<path d="M 465.0 336 L 535.0 467"/>
<path d="M 470.0 336 L 540.0 467"/>
<path d="M 475.0 336 L 545.0 467"/>
<path d="M 480.0 336 L 550.0 467"/>
<path d="M 485.0 336 L 555.0 467"/>
<path d="M 490.0 336 L 560.0 467"/>
<path d="M 495.0 336 L 565.0 467"/>
<path d="M 500.0 336 L 570.0 467"/>
<path d="M 505.0 336 L 575.0 467"/>
<path d="M 510.0 336 L 580.0 467"/>
<path d="M 515.0 336 L 585.0 467"/>
<path d="M 520.0 336 L 590.0 467"/>
<path d="M 525.0 336 L 595.0 467"/>
<path d="M 530.0 336 L 600.0 467"/>
<path d="M 535.0 336 L 605.0 467"/>
<path d="M 540.0 336 L 610.0 467"/>
<path d="M 545.0 336 L 615.0 467"/>
<path d="M 550.0 336 L 620.0 467"/>
<path d="M 555.0 336 L 625.0 467"/>
<path d="M 560.0 336 L 630.0 467"/>
<path d="M 565.0 336 L 635.0 467"/>
<path d="M 570.0 336 L 640.0 467"/>
<path d="M 575.0 336 L 645.0 467"/>
<path d="M 580.0 336 L 650.0 467"/>
<path d="M 585.0 336 L 655.0 467"/>
<path d="M 590.0 336 L 660.0 467"/>
<path d="M 595.0 336 L 665.0 467"/>
<path d="M 600.0 336 L 670.0 467"/>
<path d="M 605.0 336 L 675.0 467"/>
<path d="M 610.0 336 L 680.0 467"/>
<path d="M 615.0 336 L 685.0 467"/>
<path d="M 620.0 336 L 690.0 467"/>
<path d="M 625.0 336 L 695.0 467"/>
<path d="M 630.0 336 L 700.0 467"/>
<path d="M 635.0 336 L 705.0 467"/>
<path d="M 640.0 336 L 710.0 467"/>
<path d="M 645.0 336 L 715.0 467"/>
<path d="M 650.0 336 L 720.0 467"/>
<path d="M 655.0 336 L 725.0 467"/>
<path d="M 660.0 336 L 730.0 467"/>
<path d="M 665.0 336 L 735.0 467"/>
<path d="M 670.0 336 L 740.0 467"/>
<path d="M 675.0 336 L 745.0 467"/></g>
<g fill="none" stroke="#1a1a1a" stroke-width="0.55">
<path d="M 95.0 349.9 C 98.3 349.7 108.3 349.1 115.0 348.8 C 121.7 348.6 128.3 348.5 135.0 348.3 C 141.7 348.1 148.3 348.0 155.0 347.7 C 161.7 347.4 168.3 346.9 175.0 346.7 C 181.7 346.4 188.3 346.2 195.0 346.3 C 201.7 346.3 208.3 346.9 215.0 346.8 C 221.7 346.8 228.3 346.2 235.0 346.0 C 241.7 345.8 248.3 345.7 255.0 345.7 C 261.7 345.7 268.3 346.1 275.0 346.0 C 281.7 345.9 288.3 345.2 295.0 344.9 C 301.7 344.7 308.3 344.8 315.0 344.6 C 321.7 344.3 328.3 343.7 335.0 343.3 C 341.7 343.0 348.3 342.9 355.0 342.6 C 361.7 342.2 368.3 341.4 375.0 341.1 C 381.7 340.8 388.3 340.9 395.0 340.7 C 401.7 340.6 408.3 340.4 415.0 340.2 C 421.7 339.9 428.3 339.4 435.0 339.2 C 441.7 339.0 448.3 339.0 455.0 338.9 C 461.7 338.8 468.3 338.7 475.0 338.5 C 481.7 338.3 488.3 337.7 495.0 337.6 C 501.7 337.5 508.3 338.1 515.0 338.0 C 521.7 338.0 528.3 337.8 535.0 337.6 C 541.7 337.4 548.3 337.1 555.0 336.9 C 561.7 336.6 568.3 336.2 575.0 336.1 C 581.7 336.0 588.3 336.4 595.0 336.2 C 601.7 336.0 611.7 335.2 615.0 335.0 " stroke-opacity="0.85"/>
<path d="M 95.0 352.9 C 98.3 352.8 108.3 352.5 115.0 352.4 C 121.7 352.4 128.3 352.5 135.0 352.3 C 141.7 352.1 148.3 351.5 155.0 351.3 C 161.7 351.1 168.3 351.3 175.0 351.1 C 181.7 350.8 188.3 350.2 195.0 349.9 C 201.7 349.6 208.3 349.7 215.0 349.5 C 221.7 349.2 228.3 348.9 235.0 348.4 C 241.7 348.0 248.3 347.1 255.0 346.7 C 261.7 346.3 268.3 346.1 275.0 345.9 C 281.7 345.6 288.3 345.3 295.0 345.2 C 301.7 345.1 308.3 345.5 315.0 345.4 C 321.7 345.3 328.3 344.6 335.0 344.5 C 341.7 344.3 348.3 344.5 355.0 344.4 C 361.7 344.3 368.3 343.9 375.0 343.8 C 381.7 343.7 388.3 343.9 395.0 343.8 C 401.7 343.7 408.3 343.5 415.0 343.3 C 421.7 343.2 428.3 343.0 435.0 342.9 C 441.7 342.7 448.3 342.7 455.0 342.5 C 461.7 342.3 468.3 341.9 475.0 341.7 C 481.7 341.4 488.3 341.4 495.0 341.1 C 501.7 340.8 508.3 340.2 515.0 339.9 C 521.7 339.6 528.3 339.4 535.0 339.2 C 541.7 338.9 548.3 338.5 555.0 338.2 C 561.7 337.9 568.3 337.8 575.0 337.6 C 581.7 337.3 588.3 337.0 595.0 336.7 C 601.7 336.4 611.7 335.9 615.0 335.8 " stroke-opacity="0.85"/>
<path d="M 95.0 355.8 C 98.3 355.7 108.3 355.6 115.0 355.3 C 121.7 355.1 128.3 354.6 135.0 354.3 C 141.7 354.1 148.3 354.0 155.0 353.7 C 161.7 353.3 168.3 352.5 175.0 352.2 C 181.7 351.9 188.3 352.1 195.0 351.8 C 201.7 351.6 208.3 351.0 215.0 350.6 C 221.7 350.2 228.3 349.8 235.0 349.4 C 241.7 349.0 248.3 348.5 255.0 348.4 C 261.7 348.3 268.3 348.6 275.0 348.6 C 281.7 348.6 288.3 348.6 295.0 348.4 C 301.7 348.1 308.3 347.3 315.0 347.2 C 321.7 347.1 328.3 347.7 335.0 347.7 C 341.7 347.7 348.3 347.3 355.0 347.1 C 361.7 346.9 368.3 346.7 375.0 346.6 C 381.7 346.4 388.3 346.4 395.0 346.3 C 401.7 346.2 408.3 346.3 415.0 346.1 C 421.7 346.0 428.3 345.9 435.0 345.5 C 441.7 345.1 448.3 344.1 455.0 343.7 C 461.7 343.3 468.3 343.6 475.0 343.3 C 481.7 342.9 488.3 342.0 495.0 341.7 C 501.7 341.4 508.3 341.7 515.0 341.5 C 521.7 341.2 528.3 340.5 535.0 340.3 C 541.7 340.1 548.3 340.3 555.0 340.2 C 561.7 340.2 568.3 340.1 575.0 339.9 C 581.7 339.7 588.3 339.2 595.0 339.2 C 601.7 339.1 611.7 339.4 615.0 339.5 " stroke-opacity="0.85"/>
<path d="M 95.0 355.7 C 98.3 355.6 108.3 355.6 115.0 355.4 C 121.7 355.1 128.3 354.4 135.0 354.2 C 141.7 353.9 148.3 354.0 155.0 353.9 C 161.7 353.8 168.3 353.8 175.0 353.8 C 181.7 353.8 188.3 353.9 195.0 353.8 C 201.7 353.7 208.3 353.4 215.0 353.2 C 221.7 353.1 228.3 352.9 235.0 352.9 C 241.7 352.9 248.3 353.5 255.0 353.3 C 261.7 353.2 268.3 352.4 275.0 352.2 C 281.7 352.0 288.3 352.3 295.0 352.1 C 301.7 352.0 308.3 351.6 315.0 351.2 C 321.7 350.7 328.3 350.0 335.0 349.6 C 341.7 349.2 348.3 349.0 355.0 348.7 C 361.7 348.4 368.3 348.0 375.0 347.8 C 381.7 347.5 388.3 347.3 395.0 347.0 C 401.7 346.8 408.3 346.5 415.0 346.3 C 421.7 346.1 428.3 345.9 435.0 345.8 C 441.7 345.7 448.3 345.6 455.0 345.6 C 461.7 345.6 468.3 345.8 475.0 345.7 C 481.7 345.6 488.3 345.3 495.0 345.1 C 501.7 345.0 508.3 344.9 515.0 344.8 C 521.7 344.8 528.3 345.0 535.0 344.8 C 541.7 344.6 548.3 344.0 555.0 343.8 C 561.7 343.5 568.3 343.3 575.0 343.1 C 581.7 343.0 588.3 343.2 595.0 342.9 C 601.7 342.6 611.7 341.7 615.0 341.4 " stroke-opacity="0.85"/>
<path d="M 95.0 357.8 C 98.3 357.8 108.3 357.9 115.0 358.0 C 121.7 358.0 128.3 358.1 135.0 358.0 C 141.7 357.9 148.3 357.4 155.0 357.3 C 161.7 357.2 168.3 357.7 175.0 357.7 C 181.7 357.7 188.3 357.5 195.0 357.3 C 201.7 357.0 208.3 356.3 215.0 356.1 C 221.7 355.9 228.3 356.1 235.0 355.9 C 241.7 355.7 248.3 355.1 255.0 354.8 C 261.7 354.4 268.3 354.3 275.0 353.9 C 281.7 353.5 288.3 352.9 295.0 352.5 C 301.7 352.2 308.3 352.1 315.0 351.9 C 321.7 351.7 328.3 351.5 335.0 351.1 C 341.7 350.8 348.3 350.1 355.0 349.8 C 361.7 349.5 368.3 349.4 375.0 349.4 C 381.7 349.4 388.3 349.7 395.0 349.8 C 401.7 349.9 408.3 350.0 415.0 349.9 C 421.7 349.8 428.3 349.2 435.0 349.1 C 441.7 348.9 448.3 349.1 455.0 349.1 C 461.7 349.0 468.3 349.0 475.0 348.8 C 481.7 348.6 488.3 348.2 495.0 348.0 C 501.7 347.7 508.3 347.5 515.0 347.3 C 521.7 347.0 528.3 346.6 535.0 346.3 C 541.7 345.9 548.3 345.6 555.0 345.3 C 561.7 345.0 568.3 344.8 575.0 344.4 C 581.7 344.1 588.3 343.5 595.0 343.1 C 601.7 342.8 611.7 342.5 615.0 342.4 " stroke-opacity="0.85"/>
<path d="M 95.0 361.5 C 98.3 361.5 108.3 361.8 115.0 361.8 C 121.7 361.8 128.3 361.8 135.0 361.6 C 141.7 361.4 148.3 360.9 155.0 360.5 C 161.7 360.2 168.3 359.9 175.0 359.6 C 181.7 359.4 188.3 359.6 195.0 359.2 C 201.7 358.9 208.3 358.0 215.0 357.6 C 221.7 357.1 228.3 356.7 235.0 356.4 C 241.7 356.1 248.3 355.9 255.0 355.7 C 261.7 355.5 268.3 355.4 275.0 355.1 C 281.7 354.8 288.3 354.1 295.0 353.9 C 301.7 353.7 308.3 353.8 315.0 353.7 C 321.7 353.7 328.3 353.5 335.0 353.5 C 341.7 353.5 348.3 353.9 355.0 353.9 C 361.7 353.9 368.3 353.4 375.0 353.4 C 381.7 353.4 388.3 353.8 395.0 353.6 C 401.7 353.5 408.3 352.8 415.0 352.6 C 421.7 352.3 428.3 352.3 435.0 352.2 C 441.7 352.0 448.3 351.9 455.0 351.7 C 461.7 351.5 468.3 351.3 475.0 351.0 C 481.7 350.6 488.3 349.9 495.0 349.5 C 501.7 349.0 508.3 348.5 515.0 348.1 C 521.7 347.7 528.3 347.3 535.0 347.0 C 541.7 346.7 548.3 346.8 555.0 346.6 C 561.7 346.3 568.3 345.7 575.0 345.6 C 581.7 345.4 588.3 345.8 595.0 345.8 C 601.7 345.8 611.7 345.6 615.0 345.6 " stroke-opacity="0.85"/>
<path d="M 95.0 363.4 C 98.3 363.3 108.3 363.2 115.0 362.9 C 121.7 362.6 128.3 362.0 135.0 361.7 C 141.7 361.4 148.3 361.3 155.0 361.1 C 161.7 360.8 168.3 360.3 175.0 360.0 C 181.7 359.8 188.3 359.6 195.0 359.5 C 201.7 359.4 208.3 359.4 215.0 359.5 C 221.7 359.5 228.3 359.9 235.0 359.9 C 241.7 359.9 248.3 359.4 255.0 359.3 C 261.7 359.2 268.3 359.2 275.0 359.2 C 281.7 359.1 288.3 359.0 295.0 358.9 C 301.7 358.7 308.3 358.5 315.0 358.2 C 321.7 358.0 328.3 357.6 335.0 357.4 C 341.7 357.2 348.3 357.3 355.0 356.9 C 361.7 356.5 368.3 355.5 375.0 355.0 C 381.7 354.5 388.3 354.0 395.0 353.7 C 401.7 353.5 408.3 353.8 415.0 353.7 C 421.7 353.5 428.3 353.0 435.0 352.8 C 441.7 352.5 448.3 352.5 455.0 352.3 C 461.7 352.0 468.3 351.4 475.0 351.3 C 481.7 351.2 488.3 351.6 495.0 351.7 C 501.7 351.7 508.3 351.7 515.0 351.6 C 521.7 351.4 528.3 350.8 535.0 350.8 C 541.7 350.7 548.3 351.1 555.0 351.1 C 561.7 351.1 568.3 351.0 575.0 350.9 C 581.7 350.7 588.3 350.4 595.0 350.1 C 601.7 349.8 611.7 349.3 615.0 349.1 " stroke-opacity="0.85"/>
<path d="M 95.0 365.1 C 98.3 365.0 108.3 364.4 115.0 364.1 C 121.7 363.8 128.3 363.3 135.0 363.2 C 141.7 363.1 148.3 363.3 155.0 363.3 C 161.7 363.2 168.3 362.7 175.0 362.7 C 181.7 362.7 188.3 363.2 195.0 363.2 C 201.7 363.1 208.3 362.4 215.0 362.4 C 221.7 362.3 228.3 363.1 235.0 363.1 C 241.7 363.2 248.3 362.8 255.0 362.7 C 261.7 362.5 268.3 362.6 275.0 362.4 C 281.7 362.3 288.3 362.0 295.0 361.7 C 301.7 361.4 308.3 361.1 315.0 360.7 C 321.7 360.3 328.3 359.8 335.0 359.3 C 341.7 358.8 348.3 357.9 355.0 357.6 C 361.7 357.2 368.3 357.5 375.0 357.2 C 381.7 356.9 388.3 356.0 395.0 355.7 C 401.7 355.3 408.3 355.2 415.0 355.0 C 421.7 354.9 428.3 355.0 435.0 354.9 C 441.7 354.8 448.3 354.6 455.0 354.5 C 461.7 354.4 468.3 354.2 475.0 354.3 C 481.7 354.3 488.3 354.8 495.0 354.8 C 501.7 354.8 508.3 354.5 515.0 354.4 C 521.7 354.2 528.3 354.0 535.0 353.9 C 541.7 353.7 548.3 353.4 555.0 353.3 C 561.7 353.2 568.3 353.5 575.0 353.3 C 581.7 353.0 588.3 352.3 595.0 352.0 C 601.7 351.6 611.7 351.3 615.0 351.2 " stroke-opacity="0.85"/>
<path d="M 95.0 367.0 C 98.3 366.9 108.3 366.7 115.0 366.6 C 121.7 366.5 128.3 366.6 135.0 366.4 C 141.7 366.2 148.3 365.5 155.0 365.5 C 161.7 365.4 168.3 365.9 175.0 366.0 C 181.7 366.1 188.3 366.2 195.0 366.1 C 201.7 366.1 208.3 366.0 215.0 366.0 C 221.7 365.9 228.3 366.0 235.0 365.8 C 241.7 365.6 248.3 364.8 255.0 364.6 C 261.7 364.3 268.3 364.6 275.0 364.5 C 281.7 364.4 288.3 364.2 295.0 363.8 C 301.7 363.4 308.3 362.4 315.0 361.9 C 321.7 361.4 328.3 361.3 335.0 360.9 C 341.7 360.5 348.3 360.1 355.0 359.7 C 361.7 359.4 368.3 359.3 375.0 359.0 C 381.7 358.7 388.3 358.3 395.0 358.1 C 401.7 357.9 408.3 357.7 415.0 357.6 C 421.7 357.5 428.3 357.8 435.0 357.6 C 441.7 357.5 448.3 356.9 455.0 356.8 C 461.7 356.6 468.3 356.8 475.0 356.8 C 481.7 356.8 488.3 356.9 495.0 356.8 C 501.7 356.8 508.3 356.8 515.0 356.7 C 521.7 356.6 528.3 356.2 535.0 356.2 C 541.7 356.2 548.3 356.6 555.0 356.5 C 561.7 356.3 568.3 355.9 575.0 355.4 C 581.7 355.0 588.3 354.0 595.0 353.6 C 601.7 353.1 611.7 352.9 615.0 352.8 " stroke-opacity="0.85"/>
<path d="M 95.0 369.7 C 98.3 369.5 108.3 369.0 115.0 368.8 C 121.7 368.6 128.3 368.6 135.0 368.5 C 141.7 368.4 148.3 368.2 155.0 368.1 C 161.7 367.9 168.3 367.8 175.0 367.7 C 181.7 367.6 188.3 367.5 195.0 367.5 C 201.7 367.5 208.3 367.7 215.0 367.7 C 221.7 367.7 228.3 367.4 235.0 367.4 C 241.7 367.4 248.3 367.6 255.0 367.5 C 261.7 367.5 268.3 367.4 275.0 367.2 C 281.7 366.9 288.3 366.4 295.0 366.0 C 301.7 365.6 308.3 365.0 315.0 364.6 C 321.7 364.2 328.3 363.9 335.0 363.5 C 341.7 363.2 348.3 362.8 355.0 362.5 C 361.7 362.2 368.3 361.9 375.0 361.6 C 381.7 361.3 388.3 361.2 395.0 360.9 C 401.7 360.6 408.3 360.0 415.0 359.8 C 421.7 359.6 428.3 359.9 435.0 359.8 C 441.7 359.8 448.3 359.6 455.0 359.5 C 461.7 359.4 468.3 359.3 475.0 359.3 C 481.7 359.3 488.3 359.3 495.0 359.3 C 501.7 359.3 508.3 359.3 515.0 359.3 C 521.7 359.3 528.3 359.4 535.0 359.3 C 541.7 359.1 548.3 358.7 555.0 358.5 C 561.7 358.2 568.3 358.2 575.0 357.9 C 581.7 357.6 588.3 357.1 595.0 356.7 C 601.7 356.2 611.7 355.5 615.0 355.3 " stroke-opacity="0.60"/>
<path d="M 95.0 372.3 C 98.3 372.2 108.3 371.7 115.0 371.6 C 121.7 371.6 128.3 371.9 135.0 372.0 C 141.7 372.1 148.3 372.0 155.0 372.1 C 161.7 372.1 168.3 372.4 175.0 372.5 C 181.7 372.5 188.3 372.5 195.0 372.2 C 201.7 372.0 208.3 371.4 215.0 371.1 C 221.7 370.9 228.3 371.1 235.0 370.8 C 241.7 370.6 248.3 370.1 255.0 369.6 C 261.7 369.2 268.3 368.4 275.0 367.9 C 281.7 367.4 288.3 367.3 295.0 366.8 C 301.7 366.4 308.3 365.6 315.0 365.3 C 321.7 365.0 328.3 365.3 335.0 365.1 C 341.7 364.9 348.3 364.4 355.0 364.3 C 361.7 364.1 368.3 364.2 375.0 364.1 C 381.7 364.0 388.3 363.9 395.0 363.9 C 401.7 363.8 408.3 363.7 415.0 363.8 C 421.7 363.8 428.3 363.9 435.0 363.9 C 441.7 363.9 448.3 363.8 455.0 363.7 C 461.7 363.5 468.3 363.1 475.0 363.0 C 481.7 362.9 488.3 363.2 495.0 363.0 C 501.7 362.7 508.3 362.0 515.0 361.6 C 521.7 361.2 528.3 360.9 535.0 360.7 C 541.7 360.4 548.3 360.5 555.0 360.1 C 561.7 359.7 568.3 358.6 575.0 358.1 C 581.7 357.6 588.3 357.3 595.0 357.0 C 601.7 356.6 611.7 356.2 615.0 356.0 " stroke-opacity="0.60"/>
<path d="M 95.0 376.9 C 98.3 376.8 108.3 376.4 115.0 376.4 C 121.7 376.3 128.3 376.7 135.0 376.4 C 141.7 376.1 148.3 375.1 155.0 374.7 C 161.7 374.3 168.3 374.5 175.0 374.2 C 181.7 373.9 188.3 373.2 195.0 372.7 C 201.7 372.3 208.3 372.0 215.0 371.7 C 221.7 371.3 228.3 371.1 235.0 370.7 C 241.7 370.4 248.3 369.8 255.0 369.6 C 261.7 369.3 268.3 369.5 275.0 369.3 C 281.7 369.1 288.3 368.4 295.0 368.3 C 301.7 368.3 308.3 369.0 315.0 369.1 C 321.7 369.2 328.3 368.9 335.0 368.9 C 341.7 368.9 348.3 369.2 355.0 369.2 C 361.7 369.1 368.3 368.5 375.0 368.4 C 381.7 368.3 388.3 368.7 395.0 368.7 C 401.7 368.6 408.3 368.6 415.0 368.2 C 421.7 367.8 428.3 366.8 435.0 366.3 C 441.7 365.8 448.3 365.7 455.0 365.4 C 461.7 365.0 468.3 364.7 475.0 364.3 C 481.7 364.0 488.3 363.8 495.0 363.3 C 501.7 362.9 508.3 362.1 515.0 361.7 C 521.7 361.2 528.3 361.0 535.0 360.8 C 541.7 360.6 548.3 360.4 555.0 360.3 C 561.7 360.3 568.3 360.4 575.0 360.5 C 581.7 360.5 588.3 360.6 595.0 360.6 C 601.7 360.6 611.7 360.4 615.0 360.3 " stroke-opacity="0.60"/>
<path d="M 95.0 376.7 C 98.3 376.6 108.3 376.2 115.0 376.0 C 121.7 375.8 128.3 375.8 135.0 375.6 C 141.7 375.5 148.3 375.2 155.0 375.2 C 161.7 375.2 168.3 375.5 175.0 375.7 C 181.7 375.8 188.3 376.2 195.0 376.3 C 201.7 376.3 208.3 375.8 215.0 375.7 C 221.7 375.7 228.3 376.1 235.0 375.9 C 241.7 375.8 248.3 375.1 255.0 374.9 C 261.7 374.7 268.3 374.8 275.0 374.6 C 281.7 374.4 288.3 374.0 295.0 373.6 C 301.7 373.2 308.3 372.8 315.0 372.3 C 321.7 371.8 328.3 371.3 335.0 370.8 C 341.7 370.4 348.3 369.9 355.0 369.5 C 361.7 369.2 368.3 368.9 375.0 368.6 C 381.7 368.4 388.3 368.4 395.0 368.1 C 401.7 367.8 408.3 367.2 415.0 366.9 C 421.7 366.7 428.3 366.6 435.0 366.7 C 441.7 366.8 448.3 367.2 455.0 367.4 C 461.7 367.6 468.3 367.7 475.0 367.7 C 481.7 367.7 488.3 367.5 495.0 367.4 C 501.7 367.3 508.3 367.2 515.0 367.2 C 521.7 367.1 528.3 367.3 535.0 367.0 C 541.7 366.8 548.3 366.1 555.0 365.8 C 561.7 365.4 568.3 365.2 575.0 364.8 C 581.7 364.4 588.3 363.9 595.0 363.5 C 601.7 363.1 611.7 362.7 615.0 362.6 " stroke-opacity="0.60"/>
<path d="M 95.0 379.3 C 98.3 379.2 108.3 379.0 115.0 378.8 C 121.7 378.7 128.3 378.7 135.0 378.5 C 141.7 378.2 148.3 377.6 155.0 377.5 C 161.7 377.4 168.3 377.8 175.0 377.9 C 181.7 377.9 188.3 377.6 195.0 377.7 C 201.7 377.8 208.3 378.2 215.0 378.3 C 221.7 378.4 228.3 378.2 235.0 378.1 C 241.7 377.9 248.3 377.7 255.0 377.5 C 261.7 377.3 268.3 377.2 275.0 376.9 C 281.7 376.6 288.3 376.2 295.0 375.9 C 301.7 375.6 308.3 375.5 315.0 375.2 C 321.7 374.8 328.3 374.2 335.0 373.7 C 341.7 373.2 348.3 372.6 355.0 372.2 C 361.7 371.7 368.3 371.5 375.0 371.1 C 381.7 370.8 388.3 370.3 395.0 370.1 C 401.7 369.9 408.3 370.1 415.0 369.9 C 421.7 369.7 428.3 368.9 435.0 368.9 C 441.7 368.9 448.3 369.6 455.0 369.7 C 461.7 369.7 468.3 369.3 475.0 369.3 C 481.7 369.3 488.3 369.5 495.0 369.5 C 501.7 369.6 508.3 369.4 515.0 369.5 C 521.7 369.5 528.3 369.7 535.0 369.6 C 541.7 369.6 548.3 369.4 555.0 369.1 C 561.7 368.9 568.3 368.4 575.0 368.0 C 581.7 367.7 588.3 367.2 595.0 366.9 C 601.7 366.5 611.7 366.0 615.0 365.8 " stroke-opacity="0.60"/>
<path d="M 95.0 384.9 C 98.3 384.9 108.3 384.9 115.0 384.9 C 121.7 384.8 128.3 384.8 135.0 384.5 C 141.7 384.1 148.3 383.5 155.0 383.0 C 161.7 382.5 168.3 382.0 175.0 381.5 C 181.7 381.0 188.3 380.5 195.0 380.1 C 201.7 379.7 208.3 379.6 215.0 379.2 C 221.7 378.9 228.3 378.3 235.0 378.0 C 241.7 377.7 248.3 377.6 255.0 377.4 C 261.7 377.1 268.3 376.9 275.0 376.7 C 281.7 376.4 288.3 376.0 295.0 375.8 C 301.7 375.7 308.3 375.8 315.0 375.8 C 321.7 375.9 328.3 376.0 335.0 376.1 C 341.7 376.1 348.3 376.1 355.0 376.2 C 361.7 376.3 368.3 376.6 375.0 376.7 C 381.7 376.8 388.3 376.7 395.0 376.6 C 401.7 376.5 408.3 376.4 415.0 376.0 C 421.7 375.7 428.3 374.8 435.0 374.4 C 441.7 374.1 448.3 374.3 455.0 373.8 C 461.7 373.4 468.3 372.4 475.0 371.9 C 481.7 371.4 488.3 371.0 495.0 370.6 C 501.7 370.3 508.3 370.1 515.0 369.7 C 521.7 369.3 528.3 368.5 535.0 368.1 C 541.7 367.7 548.3 367.5 555.0 367.5 C 561.7 367.5 568.3 368.0 575.0 368.0 C 581.7 367.9 588.3 367.5 595.0 367.4 C 601.7 367.4 611.7 367.6 615.0 367.7 " stroke-opacity="0.60"/>
<path d="M 95.0 385.1 C 98.3 385.0 108.3 384.5 115.0 384.5 C 121.7 384.5 128.3 384.9 135.0 385.1 C 141.7 385.2 148.3 385.3 155.0 385.3 C 161.7 385.4 168.3 385.4 175.0 385.3 C 181.7 385.2 188.3 384.8 195.0 384.7 C 201.7 384.5 208.3 384.5 215.0 384.3 C 221.7 384.1 228.3 384.0 235.0 383.6 C 241.7 383.1 248.3 382.2 255.0 381.7 C 261.7 381.1 268.3 380.9 275.0 380.4 C 281.7 379.9 288.3 379.1 295.0 378.6 C 301.7 378.1 308.3 377.9 315.0 377.6 C 321.7 377.4 328.3 377.4 335.0 377.2 C 341.7 376.9 348.3 376.2 355.0 376.1 C 361.7 376.1 368.3 376.6 375.0 376.8 C 381.7 376.9 388.3 377.0 395.0 376.9 C 401.7 376.8 408.3 376.3 415.0 376.3 C 421.7 376.4 428.3 377.3 435.0 377.3 C 441.7 377.4 448.3 376.8 455.0 376.8 C 461.7 376.7 468.3 376.9 475.0 376.8 C 481.7 376.7 488.3 376.5 495.0 376.1 C 501.7 375.7 508.3 375.0 515.0 374.6 C 521.7 374.2 528.3 374.1 535.0 373.7 C 541.7 373.3 548.3 372.7 555.0 372.2 C 561.7 371.8 568.3 371.5 575.0 371.0 C 581.7 370.5 588.3 369.6 595.0 369.3 C 601.7 368.9 611.7 368.9 615.0 368.9 " stroke-opacity="0.60"/>
<path d="M 95.0 390.8 C 98.3 390.7 108.3 390.3 115.0 389.9 C 121.7 389.5 128.3 388.7 135.0 388.3 C 141.7 387.9 148.3 387.7 155.0 387.3 C 161.7 386.9 168.3 386.1 175.0 385.7 C 181.7 385.3 188.3 385.1 195.0 384.7 C 201.7 384.3 208.3 383.9 215.0 383.5 C 221.7 383.2 228.3 382.9 235.0 382.6 C 241.7 382.3 248.3 381.9 255.0 381.8 C 261.7 381.7 268.3 382.1 275.0 382.2 C 281.7 382.3 288.3 382.4 295.0 382.4 C 301.7 382.4 308.3 382.1 315.0 382.2 C 321.7 382.3 328.3 383.0 335.0 383.1 C 341.7 383.2 348.3 383.0 355.0 382.8 C 361.7 382.6 368.3 382.0 375.0 381.9 C 381.7 381.7 388.3 382.2 395.0 381.9 C 401.7 381.6 408.3 380.5 415.0 380.0 C 421.7 379.5 428.3 379.2 435.0 378.9 C 441.7 378.5 448.3 378.2 455.0 377.8 C 461.7 377.4 468.3 376.7 475.0 376.3 C 481.7 375.8 488.3 375.4 495.0 375.1 C 501.7 374.7 508.3 374.5 515.0 374.3 C 521.7 374.1 528.3 373.8 535.0 373.6 C 541.7 373.5 548.3 373.4 555.0 373.4 C 561.7 373.3 568.3 373.4 575.0 373.4 C 581.7 373.4 588.3 373.4 595.0 373.5 C 601.7 373.7 611.7 374.3 615.0 374.4 " stroke-opacity="0.60"/>
<path d="M 95.0 392.1 C 98.3 392.2 108.3 392.5 115.0 392.5 C 121.7 392.4 128.3 392.1 135.0 392.0 C 141.7 391.8 148.3 391.6 155.0 391.4 C 161.7 391.1 168.3 390.8 175.0 390.6 C 181.7 390.3 188.3 390.3 195.0 389.8 C 201.7 389.3 208.3 388.1 215.0 387.6 C 221.7 387.0 228.3 387.0 235.0 386.5 C 241.7 386.1 248.3 385.3 255.0 384.9 C 261.7 384.5 268.3 384.6 275.0 384.3 C 281.7 384.0 288.3 383.4 295.0 383.2 C 301.7 382.9 308.3 382.9 315.0 382.8 C 321.7 382.8 328.3 382.9 335.0 382.9 C 341.7 383.0 348.3 383.2 355.0 383.3 C 361.7 383.5 368.3 383.8 375.0 383.8 C 381.7 383.9 388.3 383.6 395.0 383.6 C 401.7 383.6 408.3 384.1 415.0 384.0 C 421.7 383.9 428.3 383.1 435.0 382.8 C 441.7 382.5 448.3 382.5 455.0 382.1 C 461.7 381.8 468.3 381.2 475.0 380.8 C 481.7 380.3 488.3 379.7 495.0 379.3 C 501.7 379.0 508.3 378.9 515.0 378.5 C 521.7 378.1 528.3 377.6 535.0 377.1 C 541.7 376.5 548.3 375.8 555.0 375.4 C 561.7 375.0 568.3 374.8 575.0 374.6 C 581.7 374.5 588.3 374.4 595.0 374.5 C 601.7 374.5 611.7 374.7 615.0 374.8 " stroke-opacity="0.60"/>
<path d="M 95.0 395.7 C 98.3 395.7 108.3 395.7 115.0 395.5 C 121.7 395.3 128.3 394.9 135.0 394.6 C 141.7 394.4 148.3 394.4 155.0 394.0 C 161.7 393.7 168.3 393.0 175.0 392.6 C 181.7 392.2 188.3 391.9 195.0 391.5 C 201.7 391.1 208.3 390.6 215.0 390.0 C 221.7 389.5 228.3 388.7 235.0 388.2 C 241.7 387.7 248.3 387.3 255.0 387.1 C 261.7 386.9 268.3 387.1 275.0 386.8 C 281.7 386.6 288.3 385.8 295.0 385.7 C 301.7 385.6 308.3 386.3 315.0 386.4 C 321.7 386.6 328.3 386.7 335.0 386.8 C 341.7 386.9 348.3 387.2 355.0 387.2 C 361.7 387.2 368.3 386.9 375.0 386.8 C 381.7 386.8 388.3 387.0 395.0 387.0 C 401.7 387.0 408.3 386.8 415.0 386.7 C 421.7 386.5 428.3 386.2 435.0 385.9 C 441.7 385.7 448.3 385.5 455.0 385.1 C 461.7 384.7 468.3 384.0 475.0 383.4 C 481.7 382.8 488.3 381.9 495.0 381.5 C 501.7 381.0 508.3 381.0 515.0 380.6 C 521.7 380.2 528.3 379.4 535.0 379.0 C 541.7 378.6 548.3 378.4 555.0 378.2 C 561.7 378.1 568.3 378.1 575.0 377.9 C 581.7 377.7 588.3 377.1 595.0 377.1 C 601.7 377.2 611.7 378.0 615.0 378.1 " stroke-opacity="0.60"/>
<path d="M 95.0 396.3 C 98.3 396.4 108.3 396.6 115.0 396.7 C 121.7 396.8 128.3 397.0 135.0 396.9 C 141.7 396.9 148.3 396.7 155.0 396.7 C 161.7 396.6 168.3 396.8 175.0 396.6 C 181.7 396.4 188.3 395.6 195.0 395.3 C 201.7 395.0 208.3 394.9 215.0 394.6 C 221.7 394.2 228.3 393.8 235.0 393.2 C 241.7 392.7 248.3 392.0 255.0 391.5 C 261.7 390.9 268.3 390.5 275.0 390.1 C 281.7 389.7 288.3 389.6 295.0 389.3 C 301.7 389.0 308.3 388.7 315.0 388.4 C 321.7 388.0 328.3 387.3 335.0 387.2 C 341.7 387.1 348.3 387.7 355.0 387.9 C 361.7 388.0 368.3 388.0 375.0 387.9 C 381.7 387.9 388.3 387.7 395.0 387.7 C 401.7 387.8 408.3 388.3 415.0 388.3 C 421.7 388.4 428.3 388.3 435.0 388.3 C 441.7 388.2 448.3 387.9 455.0 387.8 C 461.7 387.6 468.3 387.6 475.0 387.5 C 481.7 387.3 488.3 387.2 495.0 386.7 C 501.7 386.2 508.3 385.2 515.0 384.6 C 521.7 384.1 528.3 384.1 535.0 383.6 C 541.7 383.2 548.3 382.5 555.0 381.9 C 561.7 381.4 568.3 380.5 575.0 380.1 C 581.7 379.8 588.3 380.1 595.0 380.0 C 601.7 379.8 611.7 379.4 615.0 379.2 " stroke-opacity="0.60"/>
<path d="M 95.0 402.0 C 98.3 401.9 108.3 401.7 115.0 401.4 C 121.7 401.0 128.3 400.3 135.0 399.9 C 141.7 399.5 148.3 399.4 155.0 399.0 C 161.7 398.6 168.3 398.0 175.0 397.5 C 181.7 397.0 188.3 396.4 195.0 395.9 C 201.7 395.3 208.3 394.5 215.0 394.1 C 221.7 393.7 228.3 393.6 235.0 393.4 C 241.7 393.1 248.3 392.7 255.0 392.5 C 261.7 392.3 268.3 392.0 275.0 392.0 C 281.7 391.9 288.3 392.0 295.0 392.1 C 301.7 392.2 308.3 392.4 315.0 392.5 C 321.7 392.7 328.3 392.9 335.0 393.0 C 341.7 393.1 348.3 393.1 355.0 393.2 C 361.7 393.2 368.3 393.4 375.0 393.4 C 381.7 393.3 388.3 393.2 395.0 393.0 C 401.7 392.7 408.3 392.2 415.0 391.8 C 421.7 391.4 428.3 390.8 435.0 390.3 C 441.7 389.8 448.3 389.5 455.0 389.0 C 461.7 388.4 468.3 387.6 475.0 387.0 C 481.7 386.5 488.3 386.1 495.0 385.8 C 501.7 385.5 508.3 385.3 515.0 385.0 C 521.7 384.7 528.3 384.2 535.0 384.0 C 541.7 383.8 548.3 383.5 555.0 383.6 C 561.7 383.6 568.3 384.3 575.0 384.4 C 581.7 384.6 588.3 384.6 595.0 384.6 C 601.7 384.7 611.7 384.7 615.0 384.7 " stroke-opacity="0.60"/>
<path d="M 95.0 400.2 C 98.3 400.1 108.3 399.7 115.0 399.5 C 121.7 399.2 128.3 398.9 135.0 398.8 C 141.7 398.7 148.3 398.6 155.0 398.7 C 161.7 398.8 168.3 399.0 175.0 399.3 C 181.7 399.5 188.3 400.2 195.0 400.3 C 201.7 400.4 208.3 399.9 215.0 399.9 C 221.7 399.9 228.3 400.3 235.0 400.3 C 241.7 400.2 248.3 399.9 255.0 399.6 C 261.7 399.3 268.3 399.1 275.0 398.7 C 281.7 398.4 288.3 397.9 295.0 397.4 C 301.7 397.0 308.3 396.6 315.0 396.1 C 321.7 395.6 328.3 394.8 335.0 394.2 C 341.7 393.6 348.3 393.0 355.0 392.6 C 361.7 392.1 368.3 391.7 375.0 391.4 C 381.7 391.1 388.3 390.8 395.0 390.6 C 401.7 390.5 408.3 390.7 415.0 390.6 C 421.7 390.5 428.3 390.2 435.0 390.2 C 441.7 390.2 448.3 390.3 455.0 390.5 C 461.7 390.7 468.3 391.2 475.0 391.4 C 481.7 391.6 488.3 391.6 495.0 391.7 C 501.7 391.8 508.3 392.2 515.0 392.1 C 521.7 391.9 528.3 391.3 535.0 391.1 C 541.7 390.8 548.3 390.9 555.0 390.6 C 561.7 390.3 568.3 389.9 575.0 389.4 C 581.7 388.8 588.3 387.9 595.0 387.5 C 601.7 387.0 611.7 386.9 615.0 386.8 " stroke-opacity="0.60"/>
<path d="M 95.0 404.1 C 98.3 403.9 108.3 403.4 115.0 402.9 C 121.7 402.5 128.3 401.7 135.0 401.4 C 141.7 401.1 148.3 401.2 155.0 401.0 C 161.7 400.9 168.3 400.6 175.0 400.4 C 181.7 400.3 188.3 400.3 195.0 400.3 C 201.7 400.4 208.3 400.4 215.0 400.6 C 221.7 400.9 228.3 401.6 235.0 401.8 C 241.7 402.0 248.3 401.6 255.0 401.7 C 261.7 401.8 268.3 402.3 275.0 402.3 C 281.7 402.3 288.3 401.8 295.0 401.6 C 301.7 401.4 308.3 401.6 315.0 401.2 C 321.7 400.8 328.3 399.9 335.0 399.3 C 341.7 398.7 348.3 398.2 355.0 397.7 C 361.7 397.1 368.3 396.4 375.0 396.0 C 381.7 395.5 388.3 395.4 395.0 395.0 C 401.7 394.5 408.3 393.9 415.0 393.5 C 421.7 393.1 428.3 392.7 435.0 392.4 C 441.7 392.1 448.3 391.7 455.0 391.7 C 461.7 391.7 468.3 392.2 475.0 392.4 C 481.7 392.6 488.3 392.9 495.0 393.0 C 501.7 393.1 508.3 393.1 515.0 393.1 C 521.7 393.1 528.3 392.9 535.0 392.9 C 541.7 392.9 548.3 393.1 555.0 393.1 C 561.7 393.0 568.3 393.0 575.0 392.8 C 581.7 392.6 588.3 392.4 595.0 392.1 C 601.7 391.7 611.7 391.0 615.0 390.7 " stroke-opacity="0.60"/>
<path d="M 95.0 409.8 C 98.3 409.6 108.3 409.1 115.0 408.5 C 121.7 407.9 128.3 406.6 135.0 406.1 C 141.7 405.5 148.3 405.7 155.0 405.2 C 161.7 404.8 168.3 403.8 175.0 403.4 C 181.7 403.0 188.3 402.9 195.0 402.8 C 201.7 402.7 208.3 402.5 215.0 402.5 C 221.7 402.5 228.3 402.6 235.0 402.6 C 241.7 402.5 248.3 402.0 255.0 402.0 C 261.7 402.1 268.3 402.6 275.0 402.8 C 281.7 403.1 288.3 403.3 295.0 403.6 C 301.7 403.8 308.3 404.2 315.0 404.1 C 321.7 404.0 328.3 403.2 335.0 402.9 C 341.7 402.7 348.3 402.6 355.0 402.4 C 361.7 402.2 368.3 402.2 375.0 401.7 C 381.7 401.2 388.3 400.1 395.0 399.4 C 401.7 398.8 408.3 398.5 415.0 398.0 C 421.7 397.5 428.3 396.8 435.0 396.3 C 441.7 395.8 448.3 395.6 455.0 395.3 C 461.7 395.0 468.3 394.9 475.0 394.5 C 481.7 394.2 488.3 393.4 495.0 393.3 C 501.7 393.2 508.3 393.7 515.0 393.8 C 521.7 394.0 528.3 394.0 535.0 394.2 C 541.7 394.3 548.3 394.7 555.0 394.8 C 561.7 394.9 568.3 394.8 575.0 395.0 C 581.7 395.1 588.3 395.6 595.0 395.6 C 601.7 395.5 611.7 394.9 615.0 394.8 " stroke-opacity="0.60"/>
<path d="M 95.0 408.0 C 98.3 408.1 108.3 408.2 115.0 408.1 C 121.7 408.1 128.3 407.9 135.0 407.8 C 141.7 407.8 148.3 407.9 155.0 408.0 C 161.7 408.1 168.3 408.2 175.0 408.4 C 181.7 408.7 188.3 409.3 195.0 409.5 C 201.7 409.7 208.3 409.6 215.0 409.6 C 221.7 409.6 228.3 409.7 235.0 409.5 C 241.7 409.3 248.3 408.9 255.0 408.5 C 261.7 408.2 268.3 407.9 275.0 407.4 C 281.7 406.9 288.3 406.1 295.0 405.5 C 301.7 405.0 308.3 405.0 315.0 404.4 C 321.7 403.8 328.3 402.5 335.0 402.0 C 341.7 401.4 348.3 401.2 355.0 400.9 C 361.7 400.7 368.3 400.4 375.0 400.2 C 381.7 400.0 388.3 399.8 395.0 399.6 C 401.7 399.4 408.3 399.0 415.0 398.9 C 421.7 398.9 428.3 399.1 435.0 399.4 C 441.7 399.7 448.3 400.3 455.0 400.6 C 461.7 400.8 468.3 400.7 475.0 400.9 C 481.7 401.0 488.3 401.3 495.0 401.4 C 501.7 401.5 508.3 401.5 515.0 401.3 C 521.7 401.1 528.3 400.5 535.0 400.2 C 541.7 399.9 548.3 399.9 555.0 399.5 C 561.7 399.2 568.3 398.5 575.0 397.9 C 581.7 397.2 588.3 396.4 595.0 395.7 C 601.7 395.1 611.7 394.3 615.0 394.1 " stroke-opacity="0.60"/>
<path d="M 95.0 415.3 C 98.3 415.1 108.3 414.8 115.0 414.1 C 121.7 413.5 128.3 412.1 135.0 411.5 C 141.7 410.8 148.3 410.8 155.0 410.3 C 161.7 409.8 168.3 409.0 175.0 408.6 C 181.7 408.1 188.3 407.8 195.0 407.7 C 201.7 407.6 208.3 408.0 215.0 408.0 C 221.7 408.0 228.3 407.8 235.0 407.8 C 241.7 407.8 248.3 407.9 255.0 408.1 C 261.7 408.3 268.3 408.5 275.0 408.8 C 281.7 409.1 288.3 409.6 295.0 409.8 C 301.7 409.9 308.3 410.0 315.0 409.8 C 321.7 409.7 328.3 409.1 335.0 408.9 C 341.7 408.6 348.3 408.4 355.0 408.2 C 361.7 408.0 368.3 408.1 375.0 407.6 C 381.7 407.1 388.3 405.8 395.0 405.1 C 401.7 404.5 408.3 404.2 415.0 403.7 C 421.7 403.1 428.3 402.3 435.0 401.9 C 441.7 401.4 448.3 401.2 455.0 400.9 C 461.7 400.6 468.3 400.0 475.0 399.8 C 481.7 399.6 488.3 399.7 495.0 399.7 C 501.7 399.6 508.3 399.6 515.0 399.6 C 521.7 399.6 528.3 399.6 535.0 399.7 C 541.7 399.8 548.3 400.1 555.0 400.3 C 561.7 400.4 568.3 400.4 575.0 400.7 C 581.7 400.9 588.3 401.6 595.0 401.6 C 601.7 401.6 611.7 400.7 615.0 400.6 " stroke-opacity="0.60"/>
<path d="M 95.0 419.4 C 98.3 419.1 108.3 417.7 115.0 417.1 C 121.7 416.5 128.3 416.6 135.0 416.0 C 141.7 415.4 148.3 414.0 155.0 413.4 C 161.7 412.8 168.3 412.6 175.0 412.2 C 181.7 411.8 188.3 411.0 195.0 410.8 C 201.7 410.6 208.3 410.9 215.0 410.8 C 221.7 410.8 228.3 410.5 235.0 410.5 C 241.7 410.5 248.3 410.7 255.0 410.9 C 261.7 411.1 268.3 411.4 275.0 411.6 C 281.7 411.8 288.3 412.2 295.0 412.3 C 301.7 412.4 308.3 412.2 315.0 412.2 C 321.7 412.2 328.3 412.5 335.0 412.4 C 341.7 412.3 348.3 412.1 355.0 411.7 C 361.7 411.4 368.3 410.7 375.0 410.3 C 381.7 409.9 388.3 410.0 395.0 409.5 C 401.7 409.0 408.3 408.1 415.0 407.5 C 421.7 406.9 428.3 406.5 435.0 405.9 C 441.7 405.2 448.3 404.2 455.0 403.7 C 461.7 403.1 468.3 403.0 475.0 402.8 C 481.7 402.5 488.3 402.1 495.0 402.0 C 501.7 401.9 508.3 402.2 515.0 402.1 C 521.7 402.1 528.3 401.7 535.0 401.8 C 541.7 401.8 548.3 402.3 555.0 402.6 C 561.7 402.9 568.3 403.2 575.0 403.4 C 581.7 403.5 588.3 403.3 595.0 403.4 C 601.7 403.5 611.7 403.8 615.0 403.9 " stroke-opacity="0.60"/>
<path d="M 95.0 420.4 C 98.3 420.6 108.3 421.0 115.0 421.2 C 121.7 421.3 128.3 421.4 135.0 421.3 C 141.7 421.2 148.3 420.9 155.0 420.6 C 161.7 420.4 168.3 420.1 175.0 419.9 C 181.7 419.6 188.3 419.7 195.0 419.1 C 201.7 418.6 208.3 417.4 215.0 416.7 C 221.7 416.0 228.3 415.6 235.0 414.9 C 241.7 414.3 248.3 413.4 255.0 412.8 C 261.7 412.3 268.3 411.9 275.0 411.6 C 281.7 411.2 288.3 410.7 295.0 410.6 C 301.7 410.5 308.3 410.9 315.0 411.0 C 321.7 411.1 328.3 410.9 335.0 411.0 C 341.7 411.1 348.3 411.4 355.0 411.6 C 361.7 411.9 368.3 412.3 375.0 412.4 C 381.7 412.6 388.3 412.5 395.0 412.6 C 401.7 412.7 408.3 413.2 415.0 413.2 C 421.7 413.2 428.3 412.8 435.0 412.5 C 441.7 412.3 448.3 411.9 455.0 411.6 C 461.7 411.3 468.3 411.2 475.0 410.8 C 481.7 410.4 488.3 409.7 495.0 409.1 C 501.7 408.5 508.3 407.9 515.0 407.2 C 521.7 406.6 528.3 405.6 535.0 405.0 C 541.7 404.4 548.3 404.2 555.0 403.8 C 561.7 403.4 568.3 402.6 575.0 402.4 C 581.7 402.2 588.3 402.6 595.0 402.6 C 601.7 402.6 611.7 402.6 615.0 402.6 " stroke-opacity="0.60"/>
<path d="M 95.0 421.3 C 98.3 421.0 108.3 419.7 115.0 419.2 C 121.7 418.7 128.3 418.4 135.0 418.3 C 141.7 418.2 148.3 418.6 155.0 418.6 C 161.7 418.7 168.3 418.4 175.0 418.5 C 181.7 418.6 188.3 419.0 195.0 419.3 C 201.7 419.6 208.3 420.0 215.0 420.1 C 221.7 420.3 228.3 419.9 235.0 420.1 C 241.7 420.2 248.3 421.0 255.0 421.0 C 261.7 421.0 268.3 420.5 275.0 420.2 C 281.7 420.0 288.3 419.8 295.0 419.5 C 301.7 419.1 308.3 418.4 315.0 418.0 C 321.7 417.5 328.3 417.1 335.0 416.6 C 341.7 416.0 348.3 415.3 355.0 414.7 C 361.7 414.0 368.3 413.1 375.0 412.4 C 381.7 411.8 388.3 411.2 395.0 410.8 C 401.7 410.4 408.3 410.2 415.0 410.1 C 421.7 409.9 428.3 409.9 435.0 409.8 C 441.7 409.8 448.3 409.6 455.0 409.7 C 461.7 409.8 468.3 410.0 475.0 410.3 C 481.7 410.7 488.3 411.4 495.0 411.7 C 501.7 412.0 508.3 412.0 515.0 412.2 C 521.7 412.4 528.3 412.7 535.0 412.7 C 541.7 412.8 548.3 412.7 555.0 412.5 C 561.7 412.3 568.3 412.0 575.0 411.6 C 581.7 411.1 588.3 410.4 595.0 409.7 C 601.7 409.1 611.7 408.1 615.0 407.8 " stroke-opacity="0.60"/>
<path d="M 95.0 423.6 C 98.3 423.4 108.3 422.7 115.0 422.4 C 121.7 422.1 128.3 421.9 135.0 421.7 C 141.7 421.6 148.3 421.3 155.0 421.5 C 161.7 421.6 168.3 422.2 175.0 422.3 C 181.7 422.5 188.3 422.3 195.0 422.5 C 201.7 422.6 208.3 423.1 215.0 423.4 C 221.7 423.7 228.3 424.2 235.0 424.3 C 241.7 424.5 248.3 424.5 255.0 424.4 C 261.7 424.2 268.3 423.7 275.0 423.4 C 281.7 423.0 288.3 422.6 295.0 422.2 C 301.7 421.9 308.3 421.9 315.0 421.2 C 321.7 420.6 328.3 419.3 335.0 418.6 C 341.7 417.8 348.3 417.3 355.0 416.7 C 361.7 416.2 368.3 415.8 375.0 415.4 C 381.7 414.9 388.3 414.5 395.0 414.1 C 401.7 413.7 408.3 413.2 415.0 412.9 C 421.7 412.7 428.3 412.6 435.0 412.6 C 441.7 412.7 448.3 412.8 455.0 413.1 C 461.7 413.4 468.3 414.1 475.0 414.4 C 481.7 414.6 488.3 414.6 495.0 414.8 C 501.7 415.1 508.3 415.7 515.0 415.9 C 521.7 416.1 528.3 415.9 535.0 415.9 C 541.7 415.8 548.3 416.0 555.0 415.7 C 561.7 415.3 568.3 414.3 575.0 413.7 C 581.7 413.2 588.3 412.9 595.0 412.4 C 601.7 411.8 611.7 410.7 615.0 410.4 " stroke-opacity="0.60"/>
<path d="M 95.0 425.7 C 98.3 425.6 108.3 425.1 115.0 425.1 C 121.7 425.1 128.3 425.7 135.0 425.9 C 141.7 426.0 148.3 425.9 155.0 426.1 C 161.7 426.3 168.3 426.8 175.0 427.1 C 181.7 427.3 188.3 427.4 195.0 427.7 C 201.7 427.9 208.3 428.5 215.0 428.5 C 221.7 428.6 228.3 428.2 235.0 427.9 C 241.7 427.6 248.3 427.3 255.0 426.9 C 261.7 426.5 268.3 425.8 275.0 425.3 C 281.7 424.7 288.3 424.4 295.0 423.8 C 301.7 423.3 308.3 422.6 315.0 422.0 C 321.7 421.4 328.3 420.7 335.0 420.2 C 341.7 419.7 348.3 419.3 355.0 418.9 C 361.7 418.5 368.3 418.1 375.0 417.8 C 381.7 417.4 388.3 417.0 395.0 416.8 C 401.7 416.7 408.3 416.7 415.0 416.9 C 421.7 417.1 428.3 417.8 435.0 418.1 C 441.7 418.5 448.3 418.8 455.0 419.0 C 461.7 419.2 468.3 419.2 475.0 419.4 C 481.7 419.6 488.3 420.0 495.0 420.1 C 501.7 420.1 508.3 419.9 515.0 419.6 C 521.7 419.4 528.3 419.0 535.0 418.6 C 541.7 418.2 548.3 417.7 555.0 417.1 C 561.7 416.6 568.3 415.7 575.0 415.2 C 581.7 414.6 588.3 414.3 595.0 413.8 C 601.7 413.3 611.7 412.4 615.0 412.2 " stroke-opacity="0.60"/>
<path d="M 95.0 435.3 C 98.3 435.2 108.3 435.2 115.0 435.0 C 121.7 434.8 128.3 434.6 135.0 434.1 C 141.7 433.7 148.3 433.0 155.0 432.4 C 161.7 431.7 168.3 430.9 175.0 430.2 C 181.7 429.5 188.3 428.6 195.0 428.0 C 201.7 427.3 208.3 426.8 215.0 426.3 C 221.7 425.7 228.3 425.0 235.0 424.6 C 241.7 424.2 248.3 423.9 255.0 423.8 C 261.7 423.8 268.3 424.0 275.0 424.2 C 281.7 424.4 288.3 424.7 295.0 424.9 C 301.7 425.1 308.3 425.0 315.0 425.2 C 321.7 425.4 328.3 425.7 335.0 425.9 C 341.7 426.1 348.3 426.3 355.0 426.5 C 361.7 426.6 368.3 426.7 375.0 426.8 C 381.7 426.8 388.3 427.0 395.0 426.7 C 401.7 426.5 408.3 425.8 415.0 425.4 C 421.7 424.9 428.3 424.9 435.0 424.3 C 441.7 423.7 448.3 422.3 455.0 421.6 C 461.7 420.8 468.3 420.3 475.0 419.7 C 481.7 419.1 488.3 418.6 495.0 418.0 C 501.7 417.5 508.3 416.8 515.0 416.5 C 521.7 416.2 528.3 416.2 535.0 416.1 C 541.7 416.0 548.3 415.8 555.0 415.8 C 561.7 415.9 568.3 416.1 575.0 416.3 C 581.7 416.4 588.3 416.6 595.0 416.7 C 601.7 416.8 611.7 416.9 615.0 416.9 " stroke-opacity="0.60"/>
<path d="M 95.0 433.2 C 98.3 433.3 108.3 433.6 115.0 433.8 C 121.7 434.0 128.3 434.2 135.0 434.5 C 141.7 434.8 148.3 435.4 155.0 435.7 C 161.7 436.0 168.3 436.4 175.0 436.3 C 181.7 436.2 188.3 435.5 195.0 435.3 C 201.7 435.1 208.3 435.4 215.0 435.1 C 221.7 434.7 228.3 433.9 235.0 433.3 C 241.7 432.8 248.3 432.2 255.0 431.6 C 261.7 431.0 268.3 430.5 275.0 429.9 C 281.7 429.3 288.3 428.6 295.0 428.0 C 301.7 427.3 308.3 426.6 315.0 426.0 C 321.7 425.5 328.3 424.7 335.0 424.5 C 341.7 424.3 348.3 424.9 355.0 424.8 C 361.7 424.8 368.3 424.2 375.0 424.3 C 381.7 424.3 388.3 424.8 395.0 425.1 C 401.7 425.5 408.3 426.2 415.0 426.4 C 421.7 426.7 428.3 426.6 435.0 426.7 C 441.7 426.8 448.3 427.0 455.0 427.1 C 461.7 427.3 468.3 427.8 475.0 427.7 C 481.7 427.7 488.3 427.5 495.0 427.0 C 501.7 426.6 508.3 425.6 515.0 425.0 C 521.7 424.4 528.3 423.9 535.0 423.3 C 541.7 422.6 548.3 421.8 555.0 421.1 C 561.7 420.4 568.3 419.6 575.0 418.9 C 581.7 418.3 588.3 417.7 595.0 417.4 C 601.7 417.0 611.7 417.0 615.0 416.9 " stroke-opacity="0.60"/>
<path d="M 95.0 440.1 C 98.3 439.8 108.3 438.8 115.0 438.1 C 121.7 437.3 128.3 436.4 135.0 435.8 C 141.7 435.2 148.3 434.8 155.0 434.4 C 161.7 433.9 168.3 433.5 175.0 433.2 C 181.7 432.9 188.3 432.7 195.0 432.5 C 201.7 432.3 208.3 432.1 215.0 432.2 C 221.7 432.2 228.3 432.7 235.0 432.8 C 241.7 432.9 248.3 432.6 255.0 432.8 C 261.7 433.0 268.3 433.6 275.0 434.0 C 281.7 434.4 288.3 435.3 295.0 435.4 C 301.7 435.5 308.3 434.9 315.0 434.8 C 321.7 434.6 328.3 434.8 335.0 434.6 C 341.7 434.4 348.3 434.2 355.0 433.8 C 361.7 433.3 368.3 432.5 375.0 431.9 C 381.7 431.4 388.3 430.9 395.0 430.2 C 401.7 429.5 408.3 428.3 415.0 427.6 C 421.7 426.9 428.3 426.3 435.0 425.9 C 441.7 425.4 448.3 425.5 455.0 425.1 C 461.7 424.7 468.3 423.6 475.0 423.4 C 481.7 423.2 488.3 423.9 495.0 423.9 C 501.7 424.0 508.3 423.4 515.0 423.6 C 521.7 423.8 528.3 424.8 535.0 425.2 C 541.7 425.6 548.3 425.6 555.0 425.8 C 561.7 426.0 568.3 426.4 575.0 426.5 C 581.7 426.6 588.3 426.4 595.0 426.4 C 601.7 426.3 611.7 426.1 615.0 426.0 " stroke-opacity="0.60"/>
<path d="M 95.0 442.9 C 98.3 443.0 108.3 443.3 115.0 443.6 C 121.7 443.8 128.3 444.3 135.0 444.4 C 141.7 444.4 148.3 444.3 155.0 443.9 C 161.7 443.5 168.3 442.4 175.0 441.9 C 181.7 441.5 188.3 441.7 195.0 441.1 C 201.7 440.6 208.3 439.4 215.0 438.6 C 221.7 437.8 228.3 437.0 235.0 436.3 C 241.7 435.5 248.3 434.7 255.0 434.1 C 261.7 433.6 268.3 433.2 275.0 433.0 C 281.7 432.8 288.3 433.0 295.0 432.8 C 301.7 432.6 308.3 432.1 315.0 432.0 C 321.7 431.9 328.3 432.2 335.0 432.4 C 341.7 432.6 348.3 433.0 355.0 433.3 C 361.7 433.6 368.3 433.9 375.0 434.2 C 381.7 434.5 388.3 434.9 395.0 435.2 C 401.7 435.5 408.3 436.1 415.0 436.0 C 421.7 435.9 428.3 435.1 435.0 434.8 C 441.7 434.4 448.3 434.1 455.0 433.8 C 461.7 433.5 468.3 433.4 475.0 432.9 C 481.7 432.4 488.3 431.6 495.0 430.9 C 501.7 430.2 508.3 429.5 515.0 428.7 C 521.7 427.9 528.3 426.7 535.0 426.0 C 541.7 425.3 548.3 424.9 555.0 424.6 C 561.7 424.3 568.3 424.5 575.0 424.4 C 581.7 424.2 588.3 423.7 595.0 423.7 C 601.7 423.7 611.7 424.3 615.0 424.4 " stroke-opacity="0.60"/>
<path d="M 95.0 441.9 C 98.3 441.8 108.3 441.1 115.0 440.9 C 121.7 440.7 128.3 440.6 135.0 440.6 C 141.7 440.6 148.3 440.6 155.0 440.6 C 161.7 440.7 168.3 440.8 175.0 441.0 C 181.7 441.2 188.3 441.5 195.0 441.9 C 201.7 442.2 208.3 442.6 215.0 442.9 C 221.7 443.2 228.3 443.4 235.0 443.6 C 241.7 443.7 248.3 443.8 255.0 443.9 C 261.7 443.9 268.3 444.0 275.0 443.7 C 281.7 443.4 288.3 442.4 295.0 441.9 C 301.7 441.4 308.3 441.1 315.0 440.5 C 321.7 440.0 328.3 439.4 335.0 438.7 C 341.7 438.1 348.3 437.3 355.0 436.5 C 361.7 435.6 368.3 434.4 375.0 433.8 C 381.7 433.3 388.3 433.4 395.0 433.2 C 401.7 432.9 408.3 432.5 415.0 432.3 C 421.7 432.0 428.3 431.5 435.0 431.5 C 441.7 431.5 448.3 431.9 455.0 432.1 C 461.7 432.4 468.3 432.7 475.0 433.0 C 481.7 433.3 488.3 433.4 495.0 433.8 C 501.7 434.3 508.3 435.3 515.0 435.5 C 521.7 435.8 528.3 435.3 535.0 435.3 C 541.7 435.2 548.3 435.6 555.0 435.4 C 561.7 435.1 568.3 434.1 575.0 433.5 C 581.7 432.9 588.3 432.2 595.0 431.7 C 601.7 431.2 611.7 430.7 615.0 430.5 " stroke-opacity="0.60"/>
<path d="M 95.0 451.1 C 98.3 451.1 108.3 451.3 115.0 451.3 C 121.7 451.3 128.3 451.2 135.0 451.0 C 141.7 450.9 148.3 450.9 155.0 450.5 C 161.7 450.0 168.3 448.9 175.0 448.3 C 181.7 447.7 188.3 447.4 195.0 446.7 C 201.7 446.1 208.3 445.2 215.0 444.4 C 221.7 443.6 228.3 442.6 235.0 441.9 C 241.7 441.3 248.3 441.1 255.0 440.6 C 261.7 440.2 268.3 439.5 275.0 439.2 C 281.7 438.9 288.3 439.0 295.0 438.9 C 301.7 438.9 308.3 438.9 315.0 439.1 C 321.7 439.2 328.3 439.5 335.0 439.8 C 341.7 440.1 348.3 440.5 355.0 440.9 C 361.7 441.3 368.3 441.7 375.0 442.1 C 381.7 442.5 388.3 442.9 395.0 443.1 C 401.7 443.2 408.3 443.2 415.0 443.0 C 421.7 442.9 428.3 442.6 435.0 442.2 C 441.7 441.9 448.3 441.5 455.0 440.8 C 461.7 440.1 468.3 439.0 475.0 438.3 C 481.7 437.6 488.3 437.5 495.0 436.8 C 501.7 436.0 508.3 434.7 515.0 433.9 C 521.7 433.0 528.3 432.3 535.0 431.9 C 541.7 431.4 548.3 431.2 555.0 431.0 C 561.7 430.8 568.3 430.8 575.0 430.7 C 581.7 430.6 588.3 430.3 595.0 430.5 C 601.7 430.6 611.7 431.3 615.0 431.5 " stroke-opacity="0.60"/>
<path d="M 95.0 450.0 C 98.3 449.6 108.3 448.3 115.0 447.8 C 121.7 447.2 128.3 447.0 135.0 446.8 C 141.7 446.6 148.3 446.5 155.0 446.6 C 161.7 446.7 168.3 447.1 175.0 447.4 C 181.7 447.7 188.3 448.1 195.0 448.4 C 201.7 448.7 208.3 448.8 215.0 449.0 C 221.7 449.3 228.3 449.6 235.0 449.9 C 241.7 450.1 248.3 450.6 255.0 450.6 C 261.7 450.6 268.3 450.1 275.0 449.9 C 281.7 449.7 288.3 449.6 295.0 449.3 C 301.7 449.1 308.3 448.7 315.0 448.2 C 321.7 447.6 328.3 446.9 335.0 446.0 C 341.7 445.2 348.3 443.8 355.0 443.0 C 361.7 442.3 368.3 442.2 375.0 441.6 C 381.7 441.0 388.3 439.9 395.0 439.4 C 401.7 439.0 408.3 439.2 415.0 438.9 C 421.7 438.7 428.3 438.1 435.0 437.9 C 441.7 437.8 448.3 437.9 455.0 438.1 C 461.7 438.4 468.3 438.9 475.0 439.3 C 481.7 439.8 488.3 440.4 495.0 440.7 C 501.7 441.1 508.3 441.0 515.0 441.3 C 521.7 441.5 528.3 442.2 535.0 442.3 C 541.7 442.4 548.3 442.3 555.0 442.1 C 561.7 441.9 568.3 441.4 575.0 441.0 C 581.7 440.5 588.3 440.0 595.0 439.4 C 601.7 438.8 611.7 437.9 615.0 437.6 " stroke-opacity="0.60"/>
<path d="M 95.0 451.3 C 98.3 451.2 108.3 451.0 115.0 451.0 C 121.7 451.0 128.3 451.2 135.0 451.4 C 141.7 451.5 148.3 451.7 155.0 451.9 C 161.7 452.1 168.3 452.2 175.0 452.5 C 181.7 452.8 188.3 453.4 195.0 453.7 C 201.7 454.1 208.3 454.4 215.0 454.6 C 221.7 454.9 228.3 455.1 235.0 455.0 C 241.7 454.9 248.3 454.4 255.0 454.0 C 261.7 453.6 268.3 453.1 275.0 452.6 C 281.7 452.1 288.3 451.6 295.0 450.9 C 301.7 450.2 308.3 449.4 315.0 448.6 C 321.7 447.8 328.3 446.7 335.0 446.0 C 341.7 445.4 348.3 445.0 355.0 444.5 C 361.7 444.1 368.3 443.8 375.0 443.5 C 381.7 443.1 388.3 442.6 395.0 442.4 C 401.7 442.3 408.3 442.5 415.0 442.7 C 421.7 442.9 428.3 443.2 435.0 443.5 C 441.7 443.8 448.3 444.2 455.0 444.6 C 461.7 445.0 468.3 445.5 475.0 445.8 C 481.7 446.0 488.3 446.0 495.0 446.1 C 501.7 446.3 508.3 446.7 515.0 446.6 C 521.7 446.6 528.3 445.9 535.0 445.6 C 541.7 445.4 548.3 445.6 555.0 445.2 C 561.7 444.7 568.3 443.5 575.0 442.8 C 581.7 442.0 588.3 441.3 595.0 440.6 C 601.7 439.9 611.7 439.0 615.0 438.7 " stroke-opacity="0.60"/>
<path d="M 95.0 455.9 C 98.3 455.7 108.3 455.2 115.0 454.8 C 121.7 454.4 128.3 453.9 135.0 453.6 C 141.7 453.3 148.3 452.9 155.0 452.9 C 161.7 452.8 168.3 453.0 175.0 453.3 C 181.7 453.6 188.3 454.3 195.0 454.7 C 201.7 455.0 208.3 455.1 215.0 455.5 C 221.7 456.0 228.3 457.1 235.0 457.4 C 241.7 457.7 248.3 457.3 255.0 457.3 C 261.7 457.2 268.3 457.3 275.0 457.2 C 281.7 457.0 288.3 456.7 295.0 456.3 C 301.7 455.9 308.3 455.4 315.0 454.8 C 321.7 454.2 328.3 453.3 335.0 452.5 C 341.7 451.8 348.3 451.1 355.0 450.3 C 361.7 449.6 368.3 448.8 375.0 448.1 C 381.7 447.4 388.3 446.7 395.0 446.1 C 401.7 445.5 408.3 444.8 415.0 444.7 C 421.7 444.6 428.3 445.2 435.0 445.3 C 441.7 445.4 448.3 445.3 455.0 445.4 C 461.7 445.5 468.3 445.5 475.0 445.8 C 481.7 446.1 488.3 446.8 495.0 447.3 C 501.7 447.8 508.3 448.3 515.0 448.7 C 521.7 449.1 528.3 449.6 535.0 449.5 C 541.7 449.5 548.3 448.9 555.0 448.6 C 561.7 448.2 568.3 448.0 575.0 447.7 C 581.7 447.3 588.3 447.1 595.0 446.5 C 601.7 446.0 611.7 444.7 615.0 444.3 " stroke-opacity="0.60"/>
<path d="M 95.0 466.4 C 98.3 466.3 108.3 465.9 115.0 465.6 C 121.7 465.3 128.3 465.0 135.0 464.6 C 141.7 464.1 148.3 463.5 155.0 462.9 C 161.7 462.3 168.3 461.8 175.0 460.9 C 181.7 460.1 188.3 458.7 195.0 457.8 C 201.7 457.0 208.3 456.5 215.0 455.8 C 221.7 455.1 228.3 454.2 235.0 453.8 C 241.7 453.4 248.3 453.6 255.0 453.4 C 261.7 453.2 268.3 452.6 275.0 452.7 C 281.7 452.8 288.3 453.8 295.0 454.2 C 301.7 454.5 308.3 454.5 315.0 454.8 C 321.7 455.2 328.3 455.8 335.0 456.1 C 341.7 456.4 348.3 456.5 355.0 456.7 C 361.7 456.9 368.3 457.2 375.0 457.4 C 381.7 457.5 388.3 457.5 395.0 457.4 C 401.7 457.3 408.3 457.2 415.0 456.8 C 421.7 456.3 428.3 455.5 435.0 454.7 C 441.7 453.9 448.3 452.9 455.0 452.2 C 461.7 451.5 468.3 451.2 475.0 450.4 C 481.7 449.7 488.3 448.6 495.0 447.9 C 501.7 447.1 508.3 446.5 515.0 446.0 C 521.7 445.4 528.3 444.8 535.0 444.6 C 541.7 444.3 548.3 444.3 555.0 444.5 C 561.7 444.6 568.3 445.3 575.0 445.6 C 581.7 445.8 588.3 445.5 595.0 445.8 C 601.7 446.1 611.7 447.2 615.0 447.4 " stroke-opacity="0.60"/>
<path d="M 95.0 463.8 C 98.3 464.1 108.3 464.9 115.0 465.4 C 121.7 465.9 128.3 466.4 135.0 466.8 C 141.7 467.2 148.3 467.5 155.0 467.6 C 161.7 467.8 168.3 467.9 175.0 467.8 C 181.7 467.6 188.3 467.1 195.0 466.7 C 201.7 466.3 208.3 465.7 215.0 465.2 C 221.7 464.6 228.3 464.2 235.0 463.5 C 241.7 462.8 248.3 461.8 255.0 461.0 C 261.7 460.1 268.3 459.1 275.0 458.4 C 281.7 457.7 288.3 457.6 295.0 457.0 C 301.7 456.4 308.3 455.2 315.0 454.8 C 321.7 454.4 328.3 454.7 335.0 454.7 C 341.7 454.7 348.3 454.9 355.0 454.9 C 361.7 455.0 368.3 454.6 375.0 454.9 C 381.7 455.2 388.3 456.5 395.0 456.9 C 401.7 457.4 408.3 457.4 415.0 457.7 C 421.7 457.9 428.3 458.2 435.0 458.4 C 441.7 458.6 448.3 458.8 455.0 458.8 C 461.7 458.7 468.3 458.4 475.0 458.2 C 481.7 457.9 488.3 457.8 495.0 457.4 C 501.7 456.9 508.3 456.0 515.0 455.3 C 521.7 454.6 528.3 454.1 535.0 453.4 C 541.7 452.6 548.3 451.8 555.0 450.9 C 561.7 450.0 568.3 448.6 575.0 447.9 C 581.7 447.2 588.3 447.0 595.0 446.7 C 601.7 446.3 611.7 446.0 615.0 445.8 " stroke-opacity="0.60"/>
<path d="M 95.0 469.0 C 98.3 468.6 108.3 467.2 115.0 466.5 C 121.7 465.8 128.3 465.5 135.0 464.9 C 141.7 464.3 148.3 463.6 155.0 463.1 C 161.7 462.7 168.3 462.4 175.0 462.3 C 181.7 462.3 188.3 462.5 195.0 462.7 C 201.7 463.0 208.3 463.4 215.0 463.9 C 221.7 464.3 228.3 464.9 235.0 465.3 C 241.7 465.7 248.3 465.8 255.0 466.2 C 261.7 466.6 268.3 467.4 275.0 467.6 C 281.7 467.8 288.3 467.4 295.0 467.4 C 301.7 467.3 308.3 467.5 315.0 467.2 C 321.7 467.0 328.3 466.4 335.0 465.8 C 341.7 465.1 348.3 464.0 355.0 463.2 C 361.7 462.5 368.3 462.1 375.0 461.3 C 381.7 460.6 388.3 459.3 395.0 458.5 C 401.7 457.7 408.3 457.1 415.0 456.5 C 421.7 455.9 428.3 455.4 435.0 455.1 C 441.7 454.7 448.3 454.5 455.0 454.4 C 461.7 454.3 468.3 454.3 475.0 454.4 C 481.7 454.5 488.3 454.4 495.0 454.8 C 501.7 455.2 508.3 456.3 515.0 456.8 C 521.7 457.4 528.3 457.9 535.0 458.2 C 541.7 458.5 548.3 458.6 555.0 458.8 C 561.7 459.0 568.3 459.3 575.0 459.3 C 581.7 459.2 588.3 458.7 595.0 458.5 C 601.7 458.2 611.7 457.9 615.0 457.8 " stroke-opacity="0.60"/>
<path d="M 140.0 372.0 Q 190.0 380.5 240.0 395.0" stroke-width="2.5" stroke-opacity="0.35"/>
<path d="M 100.0 392.0 Q 150.0 398.0 200.0 410.0" stroke-width="1.5" stroke-opacity="0.35"/>
<path d="M 380.0 352.0 Q 435.0 354.0 490.0 362.0" stroke-width="3.0" stroke-opacity="0.35"/>
<path d="M 385.0 372.0 Q 437.5 375.5 490.0 385.0" stroke-width="2.5" stroke-opacity="0.35"/>
<path d="M 390.0 420.0 Q 440.0 421.0 490.0 428.0" stroke-width="2.5" stroke-opacity="0.35"/>
<path d="M 330.0 446.0 Q 400.0 446.0 470.0 452.0" stroke-width="2.0" stroke-opacity="0.35"/>
</g>
<g fill="none" stroke="#202020" stroke-width="0.55" stroke-opacity="0.7">
<path d="M -440.0 350 Q -340.0 400 -290.0 467"/>
<path d="M -433.0 350 Q -333.0 400 -283.0 467"/>
<path d="M -426.0 350 Q -326.0 400 -276.0 467"/>
<path d="M -419.0 350 Q -319.0 400 -269.0 467"/>
<path d="M -412.0 350 Q -312.0 400 -262.0 467"/>
<path d="M -405.0 350 Q -305.0 400 -255.0 467"/>
<path d="M -398.0 350 Q -298.0 400 -248.0 467"/>
<path d="M -391.0 350 Q -291.0 400 -241.0 467"/>
<path d="M -384.0 350 Q -284.0 400 -234.0 467"/>
<path d="M -377.0 350 Q -277.0 400 -227.0 467"/>
<path d="M -370.0 350 Q -270.0 400 -220.0 467"/>
<path d="M -363.0 350 Q -263.0 400 -213.0 467"/>
<path d="M -356.0 350 Q -256.0 400 -206.0 467"/>
<path d="M -349.0 350 Q -249.0 400 -199.0 467"/>
<path d="M -342.0 350 Q -242.0 400 -192.0 467"/>
<path d="M -335.0 350 Q -235.0 400 -185.0 467"/>
<path d="M -328.0 350 Q -228.0 400 -178.0 467"/>
<path d="M -321.0 350 Q -221.0 400 -171.0 467"/>
<path d="M -314.0 350 Q -214.0 400 -164.0 467"/>
<path d="M -307.0 350 Q -207.0 400 -157.0 467"/>
<path d="M -300.0 350 Q -200.0 400 -150.0 467"/>
<path d="M -293.0 350 Q -193.0 400 -143.0 467"/>
<path d="M -286.0 350 Q -186.0 400 -136.0 467"/>
<path d="M -279.0 350 Q -179.0 400 -129.0 467"/>
<path d="M -272.0 350 Q -172.0 400 -122.0 467"/>
<path d="M -265.0 350 Q -165.0 400 -115.0 467"/>
<path d="M -258.0 350 Q -158.0 400 -108.0 467"/>
<path d="M -251.0 350 Q -151.0 400 -101.0 467"/>
<path d="M -244.0 350 Q -144.0 400 -94.0 467"/>
<path d="M -237.0 350 Q -137.0 400 -87.0 467"/>
<path d="M -230.0 350 Q -130.0 400 -80.0 467"/>
<path d="M -223.0 350 Q -123.0 400 -73.0 467"/>
<path d="M -216.0 350 Q -116.0 400 -66.0 467"/>
<path d="M -209.0 350 Q -109.0 400 -59.0 467"/>
<path d="M -202.0 350 Q -102.0 400 -52.0 467"/>
<path d="M -195.0 350 Q -95.0 400 -45.0 467"/>
<path d="M -188.0 350 Q -88.0 400 -38.0 467"/>
<path d="M -181.0 350 Q -81.0 400 -31.0 467"/>
<path d="M -174.0 350 Q -74.0 400 -24.0 467"/>
<path d="M -167.0 350 Q -67.0 400 -17.0 467"/>
<path d="M -160.0 350 Q -60.0 400 -10.0 467"/>
<path d="M -153.0 350 Q -53.0 400 -3.0 467"/>
<path d="M -146.0 350 Q -46.0 400 4.0 467"/>
<path d="M -139.0 350 Q -39.0 400 11.0 467"/>
<path d="M -132.0 350 Q -32.0 400 18.0 467"/>
<path d="M -125.0 350 Q -25.0 400 25.0 467"/>
<path d="M -118.0 350 Q -18.0 400 32.0 467"/>
<path d="M -111.0 350 Q -11.0 400 39.0 467"/>
<path d="M -104.0 350 Q -4.0 400 46.0 467"/>
<path d="M -97.0 350 Q 3.0 400 53.0 467"/>
<path d="M -90.0 350 Q 10.0 400 60.0 467"/>
<path d="M -83.0 350 Q 17.0 400 67.0 467"/>
<path d="M -76.0 350 Q 24.0 400 74.0 467"/>
<path d="M -69.0 350 Q 31.0 400 81.0 467"/>
<path d="M -62.0 350 Q 38.0 400 88.0 467"/>
<path d="M -55.0 350 Q 45.0 400 95.0 467"/>
<path d="M -48.0 350 Q 52.0 400 102.0 467"/>
<path d="M -41.0 350 Q 59.0 400 109.0 467"/>
<path d="M -34.0 350 Q 66.0 400 116.0 467"/>
<path d="M -27.0 350 Q 73.0 400 123.0 467"/>
<path d="M -20.0 350 Q 80.0 400 130.0 467"/>
<path d="M -13.0 350 Q 87.0 400 137.0 467"/>
<path d="M -6.0 350 Q 94.0 400 144.0 467"/>
<path d="M 1.0 350 Q 101.0 400 151.0 467"/>
<path d="M 8.0 350 Q 108.0 400 158.0 467"/>
<path d="M 15.0 350 Q 115.0 400 165.0 467"/>
<path d="M 22.0 350 Q 122.0 400 172.0 467"/>
<path d="M 29.0 350 Q 129.0 400 179.0 467"/>
<path d="M 36.0 350 Q 136.0 400 186.0 467"/>
<path d="M 43.0 350 Q 143.0 400 193.0 467"/>
<path d="M 50.0 350 Q 150.0 400 200.0 467"/>
<path d="M 57.0 350 Q 157.0 400 207.0 467"/>
<path d="M 64.0 350 Q 164.0 400 214.0 467"/>
<path d="M 71.0 350 Q 171.0 400 221.0 467"/>
<path d="M 78.0 350 Q 178.0 400 228.0 467"/>
<path d="M 85.0 350 Q 185.0 400 235.0 467"/>
<path d="M 92.0 350 Q 192.0 400 242.0 467"/>
<path d="M 99.0 350 Q 199.0 400 249.0 467"/>
<path d="M 106.0 350 Q 206.0 400 256.0 467"/>
<path d="M 113.0 350 Q 213.0 400 263.0 467"/>
<path d="M 120.0 350 Q 220.0 400 270.0 467"/>
<path d="M 127.0 350 Q 227.0 400 277.0 467"/>
<path d="M 134.0 350 Q 234.0 400 284.0 467"/>
<path d="M 141.0 350 Q 241.0 400 291.0 467"/>
<path d="M 148.0 350 Q 248.0 400 298.0 467"/>
<path d="M 155.0 350 Q 255.0 400 305.0 467"/>
<path d="M 162.0 350 Q 262.0 400 312.0 467"/>
<path d="M 169.0 350 Q 269.0 400 319.0 467"/>
<path d="M 176.0 350 Q 276.0 400 326.0 467"/>
<path d="M 183.0 350 Q 283.0 400 333.0 467"/>
<path d="M 190.0 350 Q 290.0 400 340.0 467"/>
<path d="M 197.0 350 Q 297.0 400 347.0 467"/>
<path d="M 204.0 350 Q 304.0 400 354.0 467"/>
<path d="M 211.0 350 Q 311.0 400 361.0 467"/>
<path d="M 218.0 350 Q 318.0 400 368.0 467"/>
<path d="M 225.0 350 Q 325.0 400 375.0 467"/>
<path d="M 232.0 350 Q 332.0 400 382.0 467"/>
<path d="M 239.0 350 Q 339.0 400 389.0 467"/>
<path d="M 246.0 350 Q 346.0 400 396.0 467"/>
<path d="M 253.0 350 Q 353.0 400 403.0 467"/>
<path d="M 260.0 350 Q 360.0 400 410.0 467"/>
<path d="M 267.0 350 Q 367.0 400 417.0 467"/>
<path d="M 274.0 350 Q 374.0 400 424.0 467"/>
<path d="M 281.0 350 Q 381.0 400 431.0 467"/>
<path d="M 288.0 350 Q 388.0 400 438.0 467"/>
<path d="M 295.0 350 Q 395.0 400 445.0 467"/>
<path d="M 302.0 350 Q 402.0 400 452.0 467"/>
<path d="M 309.0 350 Q 409.0 400 459.0 467"/>
<path d="M 316.0 350 Q 416.0 400 466.0 467"/>
<path d="M 323.0 350 Q 423.0 400 473.0 467"/>
<path d="M 330.0 350 Q 430.0 400 480.0 467"/>
<path d="M 337.0 350 Q 437.0 400 487.0 467"/>
<path d="M 344.0 350 Q 444.0 400 494.0 467"/>
<path d="M 351.0 350 Q 451.0 400 501.0 467"/>
<path d="M 358.0 350 Q 458.0 400 508.0 467"/>
<path d="M 365.0 350 Q 465.0 400 515.0 467"/>
<path d="M 372.0 350 Q 472.0 400 522.0 467"/>
<path d="M 379.0 350 Q 479.0 400 529.0 467"/>
<path d="M 386.0 350 Q 486.0 400 536.0 467"/>
<path d="M 393.0 350 Q 493.0 400 543.0 467"/>
<path d="M 400.0 350 Q 500.0 400 550.0 467"/>
<path d="M 407.0 350 Q 507.0 400 557.0 467"/>
<path d="M 414.0 350 Q 514.0 400 564.0 467"/>
<path d="M 421.0 350 Q 521.0 400 571.0 467"/>
<path d="M 428.0 350 Q 528.0 400 578.0 467"/>
<path d="M 435.0 350 Q 535.0 400 585.0 467"/>
<path d="M 442.0 350 Q 542.0 400 592.0 467"/>
<path d="M 449.0 350 Q 549.0 400 599.0 467"/>
<path d="M 456.0 350 Q 556.0 400 606.0 467"/>
<path d="M 463.0 350 Q 563.0 400 613.0 467"/>
<path d="M 470.0 350 Q 570.0 400 620.0 467"/>
<path d="M 477.0 350 Q 577.0 400 627.0 467"/>
<path d="M 484.0 350 Q 584.0 400 634.0 467"/>
<path d="M 491.0 350 Q 591.0 400 641.0 467"/>
<path d="M 498.0 350 Q 598.0 400 648.0 467"/>
<path d="M 505.0 350 Q 605.0 400 655.0 467"/>
<path d="M 512.0 350 Q 612.0 400 662.0 467"/>
<path d="M 519.0 350 Q 619.0 400 669.0 467"/>
<path d="M 526.0 350 Q 626.0 400 676.0 467"/>
<path d="M 533.0 350 Q 633.0 400 683.0 467"/>
</g>
<path d="M100 323.5 L490 318" stroke="#d98b3a" stroke-width="1.2"/>
<path d="M390 331.5 L490 331" stroke="#8a3a2a" stroke-width="0.8"/>
<path d="M100 339.5 L190 339" stroke="#555" stroke-width="0.6"/>
<path d="M100 364 L253 467" stroke="#c9953f" stroke-width="0.8"/>
<!-- body -->
<path d="M 186 360 C 188 395 205 420 225 433 C 245 444 280 446 300 445 C 330 446 355 438 370 420 C 380 405 386 390 387 370" fill="none" stroke="#1a1a1a" stroke-width="3" stroke-opacity="0.25"/>
<clipPath id="bclip"><path d="M 285.0 230.0 C 299.8 229.9 316.5 228.9 326.5 230.5 C 336.5 232.1 339.5 235.5 345.0 239.4 C 350.5 243.3 355.0 248.1 359.5 253.9 C 364.0 259.8 368.5 267.0 371.9 274.5 C 375.3 282.0 377.9 290.1 380.0 299.0 C 382.1 307.9 383.4 319.5 384.2 328.0 C 385.0 336.5 385.1 343.0 385.0 350.0 C 384.9 357.0 384.1 364.7 383.5 370.0 C 382.9 375.3 383.0 377.1 381.6 382.0 C 380.2 386.9 377.6 394.1 375.0 399.5 C 372.4 404.9 369.3 409.6 366.0 414.4 C 362.7 419.1 359.2 424.5 355.4 428.0 C 351.6 431.5 346.9 433.6 343.4 435.4 C 339.9 437.2 341.6 438.0 334.4 439.0 C 327.2 440.0 312.8 441.2 300.0 441.4 C 287.2 441.6 267.8 441.1 257.8 440.4 C 247.8 439.7 245.5 439.1 240.0 437.4 C 234.5 435.7 229.5 433.2 225.0 430.0 C 220.5 426.8 216.8 422.5 213.0 418.0 C 209.2 413.5 205.5 408.0 202.5 403.0 C 199.5 398.0 197.1 393.5 195.0 388.0 C 192.9 382.5 191.0 376.0 189.7 370.0 C 188.4 364.0 187.6 358.3 187.0 352.0 C 186.4 345.7 186.0 339.4 186.2 332.0 C 186.4 324.6 186.8 315.7 188.2 307.5 C 189.6 299.3 191.7 290.3 194.4 282.7 C 197.2 275.1 200.3 268.9 204.7 262.0 C 209.1 255.1 215.5 246.7 221.0 241.5 C 226.5 236.3 227.0 232.9 237.7 231.0 C 248.4 229.1 270.2 230.1 285.0 230.0 Z"/></clipPath>
<path d="M 285.0 230.0 C 299.8 229.9 316.5 228.9 326.5 230.5 C 336.5 232.1 339.5 235.5 345.0 239.4 C 350.5 243.3 355.0 248.1 359.5 253.9 C 364.0 259.8 368.5 267.0 371.9 274.5 C 375.3 282.0 377.9 290.1 380.0 299.0 C 382.1 307.9 383.4 319.5 384.2 328.0 C 385.0 336.5 385.1 343.0 385.0 350.0 C 384.9 357.0 384.1 364.7 383.5 370.0 C 382.9 375.3 383.0 377.1 381.6 382.0 C 380.2 386.9 377.6 394.1 375.0 399.5 C 372.4 404.9 369.3 409.6 366.0 414.4 C 362.7 419.1 359.2 424.5 355.4 428.0 C 351.6 431.5 346.9 433.6 343.4 435.4 C 339.9 437.2 341.6 438.0 334.4 439.0 C 327.2 440.0 312.8 441.2 300.0 441.4 C 287.2 441.6 267.8 441.1 257.8 440.4 C 247.8 439.7 245.5 439.1 240.0 437.4 C 234.5 435.7 229.5 433.2 225.0 430.0 C 220.5 426.8 216.8 422.5 213.0 418.0 C 209.2 413.5 205.5 408.0 202.5 403.0 C 199.5 398.0 197.1 393.5 195.0 388.0 C 192.9 382.5 191.0 376.0 189.7 370.0 C 188.4 364.0 187.6 358.3 187.0 352.0 C 186.4 345.7 186.0 339.4 186.2 332.0 C 186.4 324.6 186.8 315.7 188.2 307.5 C 189.6 299.3 191.7 290.3 194.4 282.7 C 197.2 275.1 200.3 268.9 204.7 262.0 C 209.1 255.1 215.5 246.7 221.0 241.5 C 226.5 236.3 227.0 232.9 237.7 231.0 C 248.4 229.1 270.2 230.1 285.0 230.0 Z" fill="#f2f2f2"/>
<g clip-path="url(#bclip)"><path d="M 267.7 230.32 L 313.9 230.32 M 240.2 230.90 L 329.3 230.90 M 234.8 231.59 L 330.8 231.59 M 233.5 232.38 L 332.4 232.38 M 232.1 233.27 L 334.3 233.27 M 230.5 234.26 L 336.3 234.26 M 228.8 235.36 L 338.6 235.36 M 226.9 236.55 L 341.1 236.55 M 224.8 237.84 L 343.8 237.84 M 222.6 239.23 L 346.6 239.23 M 220.2 240.72 L 348.3 240.72 M 218.4 242.30 L 349.9 242.30 M 217.0 243.97 L 351.6 243.97 M 215.6 245.73 L 353.3 245.73 M 214.2 247.59 L 355.2 247.59 M 212.6 249.53 L 357.1 249.53 M 211.0 251.56 L 359.2 251.56 M 209.3 253.67 L 361.3 253.67 M 207.6 255.86 L 362.7 255.86 M 205.8 258.14 L 364.0 258.14 M 203.9 260.49 L 365.5 260.49 M 202.2 262.91 L 366.9 262.91 M 201.0 265.41 L 368.4 265.41 M 199.7 267.98 L 370.0 267.98 M 198.4 270.61 L 371.6 270.61 M 197.1 273.31 L 373.2 273.31 M 195.7 276.08 L 374.4 276.08 M 194.3 278.90 L 375.4 278.90 M 192.9 281.78 L 376.3 281.78 M 191.9 284.71 L 377.3 284.71 M 191.2 287.70 L 378.3 287.70 M 190.4 290.73 L 379.3 290.73 M 189.6 293.81 L 380.3 293.81 M 188.8 296.93 L 381.3 296.93 M 188.1 300.09 L 382.2 300.09 M 187.3 303.28 L 382.6 303.28 M 186.4 306.51 L 383.1 306.51 M 186.0 309.77 L 383.6 309.77 M 185.7 313.05 L 384.0 313.05 M 185.5 316.36 L 384.5 316.36 M 185.2 319.68 L 385.0 319.68 M 184.9 323.03 L 385.5 323.03 M 184.7 326.38 L 386.0 326.38 M 184.4 329.75 L 386.3 329.75 M 184.2 333.12 L 386.4 333.12 M 184.4 336.50 L 386.5 336.50 M 184.5 339.88 L 386.6 339.88 M 184.6 343.25 L 386.8 343.25 M 184.8 346.62 L 386.9 346.62 M 184.9 349.97 L 387.0 349.97 M 185.2 353.32 L 386.8 353.32 M 185.7 356.64 L 386.5 356.64 M 186.2 359.95 L 386.3 359.95 M 186.7 363.23 L 386.0 363.23 M 187.2 366.49 L 385.8 366.49 M 187.7 369.72 L 385.5 369.72 M 188.6 372.91 L 385.0 372.91 M 189.5 376.07 L 384.5 376.07 M 190.4 379.19 L 384.0 379.19 M 191.3 382.27 L 383.5 382.27 M 192.2 385.30 L 382.4 385.30 M 193.1 388.29 L 381.2 388.29 M 194.6 391.22 L 380.1 391.22 M 196.1 394.10 L 379.0 394.10 M 197.5 396.92 L 378.0 396.92 M 198.8 399.69 L 376.9 399.69 M 200.2 402.39 L 375.3 402.39 M 201.9 405.02 L 373.7 405.02 M 203.7 407.59 L 372.1 407.59 M 205.5 410.09 L 370.6 410.09 M 207.2 412.51 L 369.1 412.51 M 208.8 414.86 L 367.6 414.86 M 210.4 417.14 L 365.9 417.14 M 212.3 419.33 L 364.2 419.33 M 214.4 421.44 L 362.5 421.44 M 216.5 423.47 L 360.9 423.47 M 218.4 425.41 L 359.4 425.41 M 220.3 427.27 L 358.0 427.27 M 222.0 429.03 L 355.7 429.03 M 224.4 430.70 L 353.0 430.70 M 227.6 432.28 L 350.5 432.28 M 230.6 433.77 L 348.0 433.77 M 233.5 435.16 L 345.8 435.16 M 236.1 436.45 L 342.8 436.45 M 239.5 437.64 L 339.8 437.64 M 245.9 438.74 L 337.1 438.74 M 251.8 439.73 L 325.9 439.73 M 265.2 440.62 L 313.1 440.62 M 285.0 230.0 L 230.8 235.3 L 222.4 240.7 L 217.5 246.0 L 213.2 251.3 L 209.0 256.6 L 204.8 261.9 L 202.1 267.3 L 199.5 272.6 L 196.8 277.9 L 194.3 283.2 L 193.0 288.6 L 191.6 293.9 L 190.3 299.2 L 189.0 304.6 L 188.0 309.9 L 187.6 315.2 L 187.2 320.5 L 186.7 325.9 L 186.3 331.2 L 186.4 336.5 L 186.6 341.8 L 186.8 347.1 L 187.1 352.5 L 187.9 357.8 L 188.7 363.1 L 189.5 368.4 L 190.9 373.8 L 192.4 379.1 L 194.0 384.4 L 195.9 389.8 L 198.6 395.1 L 201.2 400.4 L 204.4 405.7 L 208.2 411.1 L 211.9 416.4 L 216.7 421.7 L 222.1 427.0 L 229.8 432.4 L 241.7 437.7 M 285.0 230.0 L 230.9 235.3 L 222.5 240.7 L 217.6 246.0 L 213.3 251.3 L 209.1 256.6 L 204.9 261.9 L 202.2 267.3 L 199.6 272.6 L 196.9 277.9 L 194.4 283.2 L 193.1 288.6 L 191.8 293.9 L 190.4 299.2 L 189.1 304.6 L 188.2 309.9 L 187.7 315.2 L 187.3 320.5 L 186.9 325.9 L 186.4 331.2 L 186.5 336.5 L 186.8 341.8 L 187.0 347.1 L 187.2 352.5 L 188.0 357.8 L 188.8 363.1 L 189.6 368.4 L 191.0 373.8 L 192.5 379.1 L 194.1 384.4 L 196.0 389.8 L 198.7 395.1 L 201.3 400.4 L 204.5 405.7 L 208.3 411.1 L 212.0 416.4 L 216.8 421.7 L 222.1 427.0 L 229.9 432.4 L 241.7 437.7 M 285.0 230.0 L 231.0 235.3 L 222.6 240.7 L 217.7 246.0 L 213.5 251.3 L 209.3 256.6 L 205.0 261.9 L 202.4 267.3 L 199.7 272.6 L 197.1 277.9 L 194.6 283.2 L 193.3 288.6 L 191.9 293.9 L 190.6 299.2 L 189.3 304.6 L 188.4 309.9 L 187.9 315.2 L 187.5 320.5 L 187.1 325.9 L 186.6 331.2 L 186.7 336.5 L 187.0 341.8 L 187.2 347.1 L 187.4 352.5 L 188.2 357.8 L 189.0 363.1 L 189.8 368.4 L 191.2 373.8 L 192.7 379.1 L 194.3 384.4 L 196.2 389.8 L 198.9 395.1 L 201.5 400.4 L 204.7 405.7 L 208.4 411.1 L 212.1 416.4 L 217.0 421.7 L 222.3 427.0 L 230.0 432.4 L 241.8 437.7 M 285.0 230.0 L 231.2 235.3 L 222.8 240.7 L 217.9 246.0 L 213.7 251.3 L 209.5 256.6 L 205.3 261.9 L 202.6 267.3 L 200.0 272.6 L 197.4 277.9 L 194.9 283.2 L 193.5 288.6 L 192.2 293.9 L 190.9 299.2 L 189.6 304.6 L 188.6 309.9 L 188.2 315.2 L 187.8 320.5 L 187.3 325.9 L 186.9 331.2 L 187.0 336.5 L 187.2 341.8 L 187.5 347.1 L 187.7 352.5 L 188.5 357.8 L 189.3 363.1 L 190.1 368.4 L 191.4 373.8 L 193.0 379.1 L 194.6 384.4 L 196.5 389.8 L 199.1 395.1 L 201.8 400.4 L 205.0 405.7 L 208.7 411.1 L 212.4 416.4 L 217.2 421.7 L 222.5 427.0 L 230.1 432.4 L 241.9 437.7 M 285.0 230.0 L 231.4 235.3 L 223.0 240.7 L 218.1 246.0 L 213.9 251.3 L 209.7 256.6 L 205.6 261.9 L 202.9 267.3 L 200.3 272.6 L 197.7 277.9 L 195.2 283.2 L 193.9 288.6 L 192.6 293.9 L 191.2 299.2 L 189.9 304.6 L 189.0 309.9 L 188.6 315.2 L 188.1 320.5 L 187.7 325.9 L 187.3 331.2 L 187.4 336.5 L 187.6 341.8 L 187.8 347.1 L 188.1 352.5 L 188.9 357.8 L 189.7 363.1 L 190.5 368.4 L 191.8 373.8 L 193.3 379.1 L 194.9 384.4 L 196.8 389.8 L 199.4 395.1 L 202.1 400.4 L 205.3 405.7 L 208.9 411.1 L 212.6 416.4 L 217.4 421.7 L 222.7 427.0 L 230.4 432.4 L 242.1 437.7 M 285.0 230.0 L 231.6 235.3 L 223.3 240.7 L 218.4 246.0 L 214.3 251.3 L 210.1 256.6 L 205.9 261.9 L 203.3 267.3 L 200.7 272.6 L 198.1 277.9 L 195.6 283.2 L 194.3 288.6 L 193.0 293.9 L 191.7 299.2 L 190.3 304.6 L 189.4 309.9 L 189.0 315.2 L 188.6 320.5 L 188.1 325.9 L 187.7 331.2 L 187.8 336.5 L 188.0 341.8 L 188.3 347.1 L 188.5 352.5 L 189.3 357.8 L 190.1 363.1 L 190.9 368.4 L 192.2 373.8 L 193.8 379.1 L 195.3 384.4 L 197.2 389.8 L 199.8 395.1 L 202.5 400.4 L 205.6 405.7 L 209.3 411.1 L 213.0 416.4 L 217.8 421.7 L 223.0 427.0 L 230.6 432.4 L 242.3 437.7 M 285.0 230.0 L 231.9 235.3 L 223.6 240.7 L 218.8 246.0 L 214.6 251.3 L 210.5 256.6 L 206.3 261.9 L 203.7 267.3 L 201.1 272.6 L 198.5 277.9 L 196.1 283.2 L 194.8 288.6 L 193.5 293.9 L 192.2 299.2 L 190.8 304.6 L 189.9 309.9 L 189.5 315.2 L 189.1 320.5 L 188.7 325.9 L 188.2 331.2 L 188.4 336.5 L 188.6 341.8 L 188.8 347.1 L 189.0 352.5 L 189.8 357.8 L 190.6 363.1 L 191.4 368.4 L 192.7 373.8 L 194.3 379.1 L 195.8 384.4 L 197.7 389.8 L 200.3 395.1 L 202.9 400.4 L 206.1 405.7 L 209.7 411.1 L 213.4 416.4 L 218.1 421.7 L 223.4 427.0 L 230.9 432.4 L 242.6 437.7 M 285.0 230.0 L 232.2 235.3 L 224.0 240.7 L 219.2 246.0 L 215.1 251.3 L 211.0 256.6 L 206.8 261.9 L 204.2 267.3 L 201.7 272.6 L 199.1 277.9 L 196.6 283.2 L 195.3 288.6 L 194.0 293.9 L 192.7 299.2 L 191.4 304.6 L 190.5 309.9 L 190.1 315.2 L 189.7 320.5 L 189.3 325.9 L 188.8 331.2 L 189.0 336.5 L 189.2 341.8 L 189.4 347.1 L 189.6 352.5 L 190.4 357.8 L 191.2 363.1 L 192.0 368.4 L 193.3 373.8 L 194.8 379.1 L 196.4 384.4 L 198.3 389.8 L 200.9 395.1 L 203.5 400.4 L 206.6 405.7 L 210.2 411.1 L 213.8 416.4 L 218.6 421.7 L 223.8 427.0 L 231.3 432.4 L 242.9 437.7 M 285.0 230.0 L 232.6 235.3 L 224.4 240.7 L 219.6 246.0 L 215.6 251.3 L 211.5 256.6 L 207.4 261.9 L 204.8 267.3 L 202.2 272.6 L 199.7 277.9 L 197.2 283.2 L 195.9 288.6 L 194.7 293.9 L 193.4 299.2 L 192.1 304.6 L 191.2 309.9 L 190.8 315.2 L 190.4 320.5 L 189.9 325.9 L 189.5 331.2 L 189.6 336.5 L 189.8 341.8 L 190.1 347.1 L 190.3 352.5 L 191.1 357.8 L 191.9 363.1 L 192.7 368.4 L 194.0 373.8 L 195.5 379.1 L 197.0 384.4 L 198.9 389.8 L 201.5 395.1 L 204.0 400.4 L 207.1 405.7 L 210.8 411.1 L 214.4 416.4 L 219.1 421.7 L 224.2 427.0 L 231.7 432.4 L 243.2 437.7 M 285.0 230.0 L 233.0 235.3 L 224.9 240.7 L 220.2 246.0 L 216.1 251.3 L 212.1 256.6 L 208.0 261.9 L 205.4 267.3 L 202.9 272.6 L 200.3 277.9 L 197.9 283.2 L 196.7 288.6 L 195.4 293.9 L 194.1 299.2 L 192.8 304.6 L 191.9 309.9 L 191.5 315.2 L 191.1 320.5 L 190.7 325.9 L 190.3 331.2 L 190.4 336.5 L 190.6 341.8 L 190.8 347.1 L 191.1 352.5 L 191.9 357.8 L 192.6 363.1 L 193.4 368.4 L 194.7 373.8 L 196.2 379.1 L 197.7 384.4 L 199.6 389.8 L 202.1 395.1 L 204.7 400.4 L 207.8 405.7 L 211.4 411.1 L 215.0 416.4 L 219.6 421.7 L 224.7 427.0 L 232.2 432.4 L 243.6 437.7 M 285.0 230.0 L 233.4 235.3 L 225.4 240.7 L 220.7 246.0 L 216.7 251.3 L 212.7 256.6 L 208.6 261.9 L 206.1 267.3 L 203.6 272.6 L 201.1 277.9 L 198.7 283.2 L 197.4 288.6 L 196.2 293.9 L 194.9 299.2 L 193.6 304.6 L 192.7 309.9 L 192.3 315.2 L 191.9 320.5 L 191.5 325.9 L 191.1 331.2 L 191.2 336.5 L 191.4 341.8 L 191.7 347.1 L 191.9 352.5 L 192.7 357.8 L 193.4 363.1 L 194.2 368.4 L 195.5 373.8 L 197.0 379.1 L 198.5 384.4 L 200.3 389.8 L 202.9 395.1 L 205.4 400.4 L 208.5 405.7 L 212.0 411.1 L 215.6 416.4 L 220.2 421.7 L 225.3 427.0 L 232.7 432.4 L 244.0 437.7 M 285.0 230.0 L 233.9 235.3 L 226.0 240.7 L 221.3 246.0 L 217.4 251.3 L 213.4 256.6 L 209.4 261.9 L 206.9 267.3 L 204.4 272.6 L 201.9 277.9 L 199.5 283.2 L 198.3 288.6 L 197.0 293.9 L 195.8 299.2 L 194.5 304.6 L 193.6 309.9 L 193.2 315.2 L 192.8 320.5 L 192.4 325.9 L 192.0 331.2 L 192.1 336.5 L 192.4 341.8 L 192.6 347.1 L 192.8 352.5 L 193.6 357.8 L 194.3 363.1 L 195.1 368.4 L 196.4 373.8 L 197.9 379.1 L 199.4 384.4 L 201.2 389.8 L 203.7 395.1 L 206.2 400.4 L 209.3 405.7 L 212.8 411.1 L 216.3 416.4 L 220.9 421.7 L 225.9 427.0 L 233.2 432.4 L 244.4 437.7 M 285.0 230.0 L 234.4 235.3 L 226.6 240.7 L 222.0 246.0 L 218.1 251.3 L 214.2 256.6 L 210.2 261.9 L 207.7 267.3 L 205.3 272.6 L 202.8 277.9 L 200.4 283.2 L 199.2 288.6 L 198.0 293.9 L 196.7 299.2 L 195.5 304.6 L 194.6 309.9 L 194.2 315.2 L 193.8 320.5 L 193.4 325.9 L 193.0 331.2 L 193.1 336.5 L 193.3 341.8 L 193.6 347.1 L 193.8 352.5 L 194.6 357.8 L 195.3 363.1 L 196.1 368.4 L 197.4 373.8 L 198.8 379.1 L 200.3 384.4 L 202.1 389.8 L 204.6 395.1 L 207.1 400.4 L 210.1 405.7 L 213.6 411.1 L 217.1 416.4 L 221.6 421.7 L 226.6 427.0 L 233.8 432.4 L 244.9 437.7 M 285.0 230.0 L 235.0 235.3 L 227.2 240.7 L 222.7 246.0 L 218.9 251.3 L 215.0 256.6 L 211.0 261.9 L 208.6 267.3 L 206.2 272.6 L 203.7 277.9 L 201.4 283.2 L 200.2 288.6 L 199.0 293.9 L 197.8 299.2 L 196.5 304.6 L 195.6 309.9 L 195.3 315.2 L 194.9 320.5 L 194.5 325.9 L 194.1 331.2 L 194.2 336.5 L 194.4 341.8 L 194.6 347.1 L 194.9 352.5 L 195.6 357.8 L 196.4 363.1 L 197.1 368.4 L 198.4 373.8 L 199.9 379.1 L 201.3 384.4 L 203.1 389.8 L 205.6 395.1 L 208.0 400.4 L 211.0 405.7 L 214.4 411.1 L 217.9 416.4 L 222.4 421.7 L 227.3 427.0 L 234.4 432.4 L 245.4 437.7 M 285.0 230.0 L 235.6 235.3 L 228.0 240.7 L 223.5 246.0 L 219.7 251.3 L 215.8 256.6 L 212.0 261.9 L 209.6 267.3 L 207.2 272.6 L 204.7 277.9 L 202.4 283.2 L 201.2 288.6 L 200.0 293.9 L 198.8 299.2 L 197.6 304.6 L 196.8 309.9 L 196.4 315.2 L 196.0 320.5 L 195.6 325.9 L 195.2 331.2 L 195.3 336.5 L 195.5 341.8 L 195.8 347.1 L 196.0 352.5 L 196.8 357.8 L 197.5 363.1 L 198.2 368.4 L 199.5 373.8 L 200.9 379.1 L 202.4 384.4 L 204.1 389.8 L 206.6 395.1 L 209.0 400.4 L 211.9 405.7 L 215.4 411.1 L 218.8 416.4 L 223.2 421.7 L 228.1 427.0 L 235.1 432.4 L 246.0 437.7 M 285.0 230.0 L 236.2 235.3 L 228.7 240.7 L 224.3 246.0 L 220.6 251.3 L 216.8 256.6 L 212.9 261.9 L 210.6 267.3 L 208.2 272.6 L 205.8 277.9 L 203.5 283.2 L 202.4 288.6 L 201.2 293.9 L 200.0 299.2 L 198.8 304.6 L 197.9 309.9 L 197.6 315.2 L 197.2 320.5 L 196.8 325.9 L 196.4 331.2 L 196.5 336.5 L 196.8 341.8 L 197.0 347.1 L 197.2 352.5 L 198.0 357.8 L 198.7 363.1 L 199.4 368.4 L 200.7 373.8 L 202.1 379.1 L 203.5 384.4 L 205.3 389.8 L 207.7 395.1 L 210.1 400.4 L 213.0 405.7 L 216.3 411.1 L 219.7 416.4 L 224.1 421.7 L 228.9 427.0 L 235.8 432.4 L 246.6 437.7 M 285.0 230.0 L 236.9 235.3 L 229.5 240.7 L 225.2 246.0 L 221.5 251.3 L 217.8 256.6 L 214.0 261.9 L 211.6 267.3 L 209.3 272.6 L 207.0 277.9 L 204.7 283.2 L 203.5 288.6 L 202.4 293.9 L 201.2 299.2 L 200.0 304.6 L 199.2 309.9 L 198.8 315.2 L 198.5 320.5 L 198.1 325.9 L 197.7 331.2 L 197.8 336.5 L 198.0 341.8 L 198.3 347.1 L 198.5 352.5 L 199.2 357.8 L 200.0 363.1 L 200.7 368.4 L 201.9 373.8 L 203.3 379.1 L 204.7 384.4 L 206.4 389.8 L 208.8 395.1 L 211.2 400.4 L 214.0 405.7 L 217.4 411.1 L 220.7 416.4 L 225.0 421.7 L 229.8 427.0 L 236.6 432.4 L 247.2 437.7 M 285.0 230.0 L 237.7 235.3 L 230.4 240.7 L 226.1 246.0 L 222.5 251.3 L 218.8 256.6 L 215.1 261.9 L 212.8 267.3 L 210.5 272.6 L 208.2 277.9 L 205.9 283.2 L 204.8 288.6 L 203.7 293.9 L 202.5 299.2 L 201.3 304.6 L 200.5 309.9 L 200.2 315.2 L 199.8 320.5 L 199.4 325.9 L 199.1 331.2 L 199.2 336.5 L 199.4 341.8 L 199.6 347.1 L 199.9 352.5 L 200.6 357.8 L 201.3 363.1 L 202.0 368.4 L 203.2 373.8 L 204.6 379.1 L 206.0 384.4 L 207.7 389.8 L 210.0 395.1 L 212.4 400.4 L 215.2 405.7 L 218.5 411.1 L 221.7 416.4 L 226.0 421.7 L 230.7 427.0 L 237.4 432.4 L 247.8 437.7 M 285.0 230.0 L 238.4 235.3 L 231.3 240.7 L 227.1 246.0 L 223.5 251.3 L 219.9 256.6 L 216.2 261.9 L 214.0 267.3 L 211.7 272.6 L 209.4 277.9 L 207.2 283.2 L 206.1 288.6 L 205.0 293.9 L 203.9 299.2 L 202.7 304.6 L 201.9 309.9 L 201.6 315.2 L 201.2 320.5 L 200.9 325.9 L 200.5 331.2 L 200.6 336.5 L 200.8 341.8 L 201.0 347.1 L 201.3 352.5 L 202.0 357.8 L 202.7 363.1 L 203.4 368.4 L 204.6 373.8 L 206.0 379.1 L 207.4 384.4 L 209.0 389.8 L 211.3 395.1 L 213.6 400.4 L 216.4 405.7 L 219.6 411.1 L 222.8 416.4 L 227.0 421.7 L 231.7 427.0 L 238.3 432.4 L 248.5 437.7 M 285.0 230.0 L 239.2 235.3 L 232.2 240.7 L 228.1 246.0 L 224.6 251.3 L 221.1 256.6 L 217.4 261.9 L 215.2 267.3 L 213.0 272.6 L 210.8 277.9 L 208.6 283.2 L 207.5 288.6 L 206.4 293.9 L 205.3 299.2 L 204.2 304.6 L 203.4 309.9 L 203.0 315.2 L 202.7 320.5 L 202.4 325.9 L 202.0 331.2 L 202.1 336.5 L 202.3 341.8 L 202.5 347.1 L 202.8 352.5 L 203.5 357.8 L 204.2 363.1 L 204.9 368.4 L 206.1 373.8 L 207.4 379.1 L 208.8 384.4 L 210.4 389.8 L 212.7 395.1 L 215.0 400.4 L 217.6 405.7 L 220.8 411.1 L 224.0 416.4 L 228.1 421.7 L 232.7 427.0 L 239.2 432.4 L 249.3 437.7 M 285.0 230.0 L 240.0 235.3 L 233.2 240.7 L 229.1 246.0 L 225.7 251.3 L 222.3 256.6 L 218.7 261.9 L 216.5 267.3 L 214.4 272.6 L 212.2 277.9 L 210.0 283.2 L 209.0 288.6 L 207.9 293.9 L 206.8 299.2 L 205.7 304.6 L 204.9 309.9 L 204.6 315.2 L 204.2 320.5 L 203.9 325.9 L 203.5 331.2 L 203.7 336.5 L 203.9 341.8 L 204.1 347.1 L 204.3 352.5 L 205.0 357.8 L 205.7 363.1 L 206.4 368.4 L 207.6 373.8 L 208.9 379.1 L 210.2 384.4 L 211.8 389.8 L 214.1 395.1 L 216.3 400.4 L 219.0 405.7 L 222.1 411.1 L 225.2 416.4 L 229.2 421.7 L 233.7 427.0 L 240.1 432.4 L 250.0 437.7 M 285.0 230.0 L 240.9 235.3 L 234.2 240.7 L 230.3 246.0 L 226.9 251.3 L 223.5 256.6 L 220.0 261.9 L 217.9 267.3 L 215.8 272.6 L 213.6 277.9 L 211.5 283.2 L 210.5 288.6 L 209.4 293.9 L 208.4 299.2 L 207.3 304.6 L 206.5 309.9 L 206.2 315.2 L 205.9 320.5 L 205.5 325.9 L 205.2 331.2 L 205.3 336.5 L 205.5 341.8 L 205.7 347.1 L 206.0 352.5 L 206.6 357.8 L 207.3 363.1 L 208.0 368.4 L 209.2 373.8 L 210.5 379.1 L 211.8 384.4 L 213.3 389.8 L 215.5 395.1 L 217.7 400.4 L 220.3 405.7 L 223.4 411.1 L 226.4 416.4 L 230.4 421.7 L 234.8 427.0 L 241.1 432.4 L 250.8 437.7 M 285.0 230.0 L 241.8 235.3 L 235.2 240.7 L 231.4 246.0 L 228.2 251.3 L 224.8 256.6 L 221.3 261.9 L 219.3 267.3 L 217.3 272.6 L 215.1 277.9 L 213.0 283.2 L 212.0 288.6 L 211.0 293.9 L 210.0 299.2 L 208.9 304.6 L 208.1 309.9 L 207.8 315.2 L 207.5 320.5 L 207.2 325.9 L 206.9 331.2 L 207.0 336.5 L 207.2 341.8 L 207.4 347.1 L 207.6 352.5 L 208.3 357.8 L 209.0 363.1 L 209.7 368.4 L 210.8 373.8 L 212.1 379.1 L 213.4 384.4 L 214.9 389.8 L 217.1 395.1 L 219.2 400.4 L 221.8 405.7 L 224.8 411.1 L 227.7 416.4 L 231.6 421.7 L 236.0 427.0 L 242.1 432.4 L 251.6 437.7 M 285.0 230.0 L 242.8 235.3 L 236.3 240.7 L 232.6 246.0 L 229.4 251.3 L 226.2 256.6 L 222.8 261.9 L 220.8 267.3 L 218.8 272.6 L 216.7 277.9 L 214.6 283.2 L 213.7 288.6 L 212.7 293.9 L 211.7 299.2 L 210.6 304.6 L 209.9 309.9 L 209.6 315.2 L 209.3 320.5 L 209.0 325.9 L 208.6 331.2 L 208.8 336.5 L 209.0 341.8 L 209.2 347.1 L 209.4 352.5 L 210.1 357.8 L 210.7 363.1 L 211.4 368.4 L 212.5 373.8 L 213.8 379.1 L 215.0 384.4 L 216.5 389.8 L 218.7 395.1 L 220.8 400.4 L 223.2 405.7 L 226.2 411.1 L 229.1 416.4 L 232.9 421.7 L 237.2 427.0 L 243.2 432.4 L 252.5 437.7 M 285.0 230.0 L 243.7 235.3 L 237.5 240.7 L 233.8 246.0 L 230.8 251.3 L 227.6 256.6 L 224.2 261.9 L 222.3 267.3 L 220.3 272.6 L 218.3 277.9 L 216.3 283.2 L 215.4 288.6 L 214.4 293.9 L 213.4 299.2 L 212.4 304.6 L 211.6 309.9 L 211.4 315.2 L 211.1 320.5 L 210.8 325.9 L 210.5 331.2 L 210.6 336.5 L 210.8 341.8 L 211.0 347.1 L 211.2 352.5 L 211.9 357.8 L 212.5 363.1 L 213.2 368.4 L 214.3 373.8 L 215.5 379.1 L 216.8 384.4 L 218.2 389.8 L 220.3 395.1 L 222.4 400.4 L 224.8 405.7 L 227.7 411.1 L 230.5 416.4 L 234.2 421.7 L 238.4 427.0 L 244.2 432.4 L 253.4 437.7 M 285.0 230.0 L 244.7 235.3 L 238.7 240.7 L 235.1 246.0 L 232.1 251.3 L 229.0 256.6 L 225.7 261.9 L 223.9 267.3 L 222.0 272.6 L 220.0 277.9 L 218.0 283.2 L 217.1 288.6 L 216.2 293.9 L 215.2 299.2 L 214.2 304.6 L 213.5 309.9 L 213.2 315.2 L 212.9 320.5 L 212.7 325.9 L 212.3 331.2 L 212.5 336.5 L 212.7 341.8 L 212.9 347.1 L 213.1 352.5 L 213.7 357.8 L 214.4 363.1 L 215.0 368.4 L 216.1 373.8 L 217.3 379.1 L 218.5 384.4 L 219.9 389.8 L 222.0 395.1 L 224.0 400.4 L 226.4 405.7 L 229.2 411.1 L 231.9 416.4 L 235.6 421.7 L 239.7 427.0 L 245.4 432.4 L 254.3 437.7 M 285.0 230.0 L 245.8 235.3 L 239.9 240.7 L 236.4 246.0 L 233.5 251.3 L 230.5 256.6 L 227.3 261.9 L 225.5 267.3 L 223.7 272.6 L 221.7 277.9 L 219.8 283.2 L 218.9 288.6 L 218.0 293.9 L 217.1 299.2 L 216.1 304.6 L 215.4 309.9 L 215.1 315.2 L 214.9 320.5 L 214.6 325.9 L 214.3 331.2 L 214.4 336.5 L 214.6 341.8 L 214.8 347.1 L 215.0 352.5 L 215.7 357.8 L 216.3 363.1 L 216.9 368.4 L 218.0 373.8 L 219.2 379.1 L 220.4 384.4 L 221.7 389.8 L 223.7 395.1 L 225.7 400.4 L 228.0 405.7 L 230.7 411.1 L 233.4 416.4 L 237.0 421.7 L 241.0 427.0 L 246.5 432.4 L 255.2 437.7 M 285.0 230.0 L 246.8 235.3 L 241.1 240.7 L 237.8 246.0 L 235.0 251.3 L 232.0 256.6 L 228.9 261.9 L 227.1 267.3 L 225.4 272.6 L 223.5 277.9 L 221.6 283.2 L 220.8 288.6 L 219.9 293.9 L 219.0 299.2 L 218.0 304.6 L 217.3 309.9 L 217.1 315.2 L 216.8 320.5 L 216.6 325.9 L 216.3 331.2 L 216.4 336.5 L 216.6 341.8 L 216.8 347.1 L 217.0 352.5 L 217.7 357.8 L 218.3 363.1 L 218.9 368.4 L 219.9 373.8 L 221.1 379.1 L 222.2 384.4 L 223.6 389.8 L 225.5 395.1 L 227.5 400.4 L 229.7 405.7 L 232.4 411.1 L 235.0 416.4 L 238.5 421.7 L 242.4 427.0 L 247.7 432.4 L 256.2 437.7 M 285.0 230.0 L 247.9 235.3 L 242.4 240.7 L 239.2 246.0 L 236.5 251.3 L 233.6 256.6 L 230.6 261.9 L 228.9 267.3 L 227.2 272.6 L 225.3 277.9 L 223.5 283.2 L 222.7 288.6 L 221.8 293.9 L 221.0 299.2 L 220.0 304.6 L 219.3 309.9 L 219.1 315.2 L 218.9 320.5 L 218.6 325.9 L 218.3 331.2 L 218.5 336.5 L 218.7 341.8 L 218.9 347.1 L 219.1 352.5 L 219.7 357.8 L 220.3 363.1 L 220.9 368.4 L 221.9 373.8 L 223.1 379.1 L 224.2 384.4 L 225.5 389.8 L 227.4 395.1 L 229.3 400.4 L 231.4 405.7 L 234.0 411.1 L 236.6 416.4 L 240.0 421.7 L 243.7 427.0 L 249.0 432.4 L 257.2 437.7 M 285.0 230.0 L 249.1 235.3 L 243.7 240.7 L 240.6 246.0 L 238.0 251.3 L 235.2 256.6 L 232.3 261.9 L 230.6 267.3 L 229.0 272.6 L 227.2 277.9 L 225.4 283.2 L 224.6 288.6 L 223.8 293.9 L 223.0 299.2 L 222.0 304.6 L 221.4 309.9 L 221.2 315.2 L 221.0 320.5 L 220.7 325.9 L 220.4 331.2 L 220.6 336.5 L 220.8 341.8 L 221.0 347.1 L 221.2 352.5 L 221.8 357.8 L 222.4 363.1 L 223.0 368.4 L 224.0 373.8 L 225.1 379.1 L 226.2 384.4 L 227.4 389.8 L 229.3 395.1 L 231.1 400.4 L 233.2 405.7 L 235.7 411.1 L 238.2 416.4 L 241.5 421.7 L 245.2 427.0 L 250.2 432.4 L 258.2 437.7 M 285.0 230.0 L 250.2 235.3 L 245.1 240.7 L 242.1 246.0 L 239.6 251.3 L 236.9 256.6 L 234.0 261.9 L 232.4 267.3 L 230.9 272.6 L 229.1 277.9 L 227.4 283.2 L 226.6 288.6 L 225.9 293.9 L 225.1 299.2 L 224.1 304.6 L 223.5 309.9 L 223.3 315.2 L 223.1 320.5 L 222.9 325.9 L 222.6 331.2 L 222.7 336.5 L 222.9 341.8 L 223.2 347.1 L 223.4 352.5 L 223.9 357.8 L 224.5 363.1 L 225.1 368.4 L 226.1 373.8 L 227.2 379.1 L 228.2 384.4 L 229.4 389.8 L 231.2 395.1 L 233.0 400.4 L 235.0 405.7 L 237.5 411.1 L 239.9 416.4 L 243.1 421.7 L 246.6 427.0 L 251.5 432.4 L 259.3 437.7 M 285.0 230.0 L 251.4 235.3 L 246.5 240.7 L 243.6 246.0 L 241.2 251.3 L 238.6 256.6 L 235.8 261.9 L 234.3 267.3 L 232.8 272.6 L 231.1 277.9 L 229.4 283.2 L 228.7 288.6 L 227.9 293.9 L 227.2 299.2 L 226.3 304.6 L 225.7 309.9 L 225.5 315.2 L 225.3 320.5 L 225.1 325.9 L 224.8 331.2 L 225.0 336.5 L 225.2 341.8 L 225.4 347.1 L 225.6 352.5 L 226.1 357.8 L 226.7 363.1 L 227.3 368.4 L 228.2 373.8 L 229.3 379.1 L 230.3 384.4 L 231.5 389.8 L 233.2 395.1 L 234.9 400.4 L 236.9 405.7 L 239.3 411.1 L 241.6 416.4 L 244.7 421.7 L 248.1 427.0 L 252.8 432.4 L 260.3 437.7 M 285.0 230.0 L 252.6 235.3 L 247.9 240.7 L 245.1 246.0 L 242.8 251.3 L 240.3 256.6 L 237.6 261.9 L 236.2 267.3 L 234.7 272.6 L 233.1 277.9 L 231.5 283.2 L 230.8 288.6 L 230.1 293.9 L 229.4 299.2 L 228.5 304.6 L 227.9 309.9 L 227.7 315.2 L 227.5 320.5 L 227.3 325.9 L 227.1 331.2 L 227.2 336.5 L 227.4 341.8 L 227.6 347.1 L 227.8 352.5 L 228.4 357.8 L 228.9 363.1 L 229.5 368.4 L 230.4 373.8 L 231.5 379.1 L 232.4 384.4 L 233.6 389.8 L 235.3 395.1 L 236.9 400.4 L 238.8 405.7 L 241.1 411.1 L 243.3 416.4 L 246.3 421.7 L 249.7 427.0 L 254.2 432.4 L 261.4 437.7 M 285.0 230.0 L 253.8 235.3 L 249.3 240.7 L 246.7 246.0 L 244.5 251.3 L 242.1 256.6 L 239.5 261.9 L 238.1 267.3 L 236.7 272.6 L 235.2 277.9 L 233.6 283.2 L 232.9 288.6 L 232.3 293.9 L 231.6 299.2 L 230.7 304.6 L 230.2 309.9 L 230.0 315.2 L 229.8 320.5 L 229.6 325.9 L 229.4 331.2 L 229.5 336.5 L 229.7 341.8 L 229.9 347.1 L 230.1 352.5 L 230.7 357.8 L 231.2 363.1 L 231.7 368.4 L 232.6 373.8 L 233.7 379.1 L 234.6 384.4 L 235.7 389.8 L 237.3 395.1 L 238.9 400.4 L 240.7 405.7 L 243.0 411.1 L 245.1 416.4 L 248.0 421.7 L 251.2 427.0 L 255.6 432.4 L 262.6 437.7 M 285.0 230.0 L 255.1 235.3 L 250.8 240.7 L 248.2 246.0 L 246.2 251.3 L 243.9 256.6 L 241.4 261.9 L 240.1 267.3 L 238.8 272.6 L 237.3 277.9 L 235.7 283.2 L 235.1 288.6 L 234.5 293.9 L 233.9 299.2 L 233.0 304.6 L 232.5 309.9 L 232.3 315.2 L 232.1 320.5 L 232.0 325.9 L 231.8 331.2 L 231.9 336.5 L 232.1 341.8 L 232.3 347.1 L 232.5 352.5 L 233.0 357.8 L 233.5 363.1 L 234.1 368.4 L 234.9 373.8 L 235.9 379.1 L 236.8 384.4 L 237.9 389.8 L 239.5 395.1 L 241.0 400.4 L 242.7 405.7 L 244.9 411.1 L 246.9 416.4 L 249.7 421.7 L 252.8 427.0 L 257.0 432.4 L 263.7 437.7 M 285.0 230.0 L 256.4 235.3 L 252.3 240.7 L 249.9 246.0 L 248.0 251.3 L 245.8 256.6 L 243.3 261.9 L 242.1 267.3 L 240.9 272.6 L 239.4 277.9 L 237.9 283.2 L 237.3 288.6 L 236.7 293.9 L 236.2 299.2 L 235.3 304.6 L 234.8 309.9 L 234.7 315.2 L 234.5 320.5 L 234.4 325.9 L 234.2 331.2 L 234.3 336.5 L 234.5 341.8 L 234.7 347.1 L 234.9 352.5 L 235.4 357.8 L 235.9 363.1 L 236.4 368.4 L 237.3 373.8 L 238.2 379.1 L 239.1 384.4 L 240.1 389.8 L 241.6 395.1 L 243.1 400.4 L 244.7 405.7 L 246.8 411.1 L 248.8 416.4 L 251.4 421.7 L 254.5 427.0 L 258.4 432.4 L 264.9 437.7 M 285.0 230.0 L 257.7 235.3 L 253.8 240.7 L 251.5 246.0 L 249.7 251.3 L 247.6 256.6 L 245.3 261.9 L 244.1 267.3 L 243.0 272.6 L 241.6 277.9 L 240.1 283.2 L 239.6 288.6 L 239.1 293.9 L 238.5 299.2 L 237.7 304.6 L 237.2 309.9 L 237.1 315.2 L 236.9 320.5 L 236.8 325.9 L 236.6 331.2 L 236.7 336.5 L 236.9 341.8 L 237.1 347.1 L 237.3 352.5 L 237.8 357.8 L 238.3 363.1 L 238.8 368.4 L 239.6 373.8 L 240.6 379.1 L 241.4 384.4 L 242.3 389.8 L 243.8 395.1 L 245.2 400.4 L 246.8 405.7 L 248.8 411.1 L 250.6 416.4 L 253.2 421.7 L 256.1 427.0 L 259.9 432.4 L 266.0 437.7 M 285.0 230.0 L 259.0 235.3 L 255.4 240.7 L 253.2 246.0 L 251.5 251.3 L 249.6 256.6 L 247.3 261.9 L 246.2 267.3 L 245.1 272.6 L 243.8 277.9 L 242.4 283.2 L 241.9 288.6 L 241.4 293.9 L 240.9 299.2 L 240.1 304.6 L 239.6 309.9 L 239.5 315.2 L 239.4 320.5 L 239.3 325.9 L 239.1 331.2 L 239.2 336.5 L 239.4 341.8 L 239.6 347.1 L 239.8 352.5 L 240.3 357.8 L 240.8 363.1 L 241.2 368.4 L 242.0 373.8 L 243.0 379.1 L 243.7 384.4 L 244.6 389.8 L 246.0 395.1 L 247.4 400.4 L 248.9 405.7 L 250.8 411.1 L 252.6 416.4 L 255.0 421.7 L 257.8 427.0 L 261.4 432.4 L 267.3 437.7 M 285.0 230.0 L 260.4 235.3 L 257.0 240.7 L 254.9 246.0 L 253.4 251.3 L 251.5 256.6 L 249.3 261.9 L 248.3 267.3 L 247.3 272.6 L 246.0 277.9 L 244.7 283.2 L 244.2 288.6 L 243.8 293.9 L 243.3 299.2 L 242.5 304.6 L 242.1 309.9 L 242.0 315.2 L 241.9 320.5 L 241.8 325.9 L 241.6 331.2 L 241.7 336.5 L 241.9 341.8 L 242.2 347.1 L 242.3 352.5 L 242.8 357.8 L 243.2 363.1 L 243.7 368.4 L 244.5 373.8 L 245.4 379.1 L 246.1 384.4 L 246.9 389.8 L 248.3 395.1 L 249.6 400.4 L 251.0 405.7 L 252.8 411.1 L 254.5 416.4 L 256.8 421.7 L 259.5 427.0 L 262.9 432.4 L 268.5 437.7 M 285.0 230.0 L 261.7 235.3 L 258.6 240.7 L 256.6 246.0 L 255.2 251.3 L 253.5 256.6 L 251.4 261.9 L 250.4 267.3 L 249.5 272.6 L 248.3 277.9 L 247.0 283.2 L 246.6 288.6 L 246.2 293.9 L 245.7 299.2 L 245.0 304.6 L 244.6 309.9 L 244.5 315.2 L 244.4 320.5 L 244.3 325.9 L 244.2 331.2 L 244.3 336.5 L 244.5 341.8 L 244.7 347.1 L 244.9 352.5 L 245.3 357.8 L 245.8 363.1 L 246.2 368.4 L 247.0 373.8 L 247.8 379.1 L 248.5 384.4 L 249.3 389.8 L 250.6 395.1 L 251.8 400.4 L 253.2 405.7 L 254.9 411.1 L 256.5 416.4 L 258.7 421.7 L 261.2 427.0 L 264.4 432.4 L 269.7 437.7 M 285.0 230.0 L 263.1 235.3 L 260.2 240.7 L 258.4 246.0 L 257.1 251.3 L 255.4 256.6 L 253.5 261.9 L 252.6 267.3 L 251.7 272.6 L 250.6 277.9 L 249.4 283.2 L 249.0 288.6 L 248.6 293.9 L 248.2 299.2 L 247.5 304.6 L 247.1 309.9 L 247.0 315.2 L 247.0 320.5 L 246.9 325.9 L 246.7 331.2 L 246.9 336.5 L 247.1 341.8 L 247.3 347.1 L 247.5 352.5 L 247.9 357.8 L 248.3 363.1 L 248.8 368.4 L 249.5 373.8 L 250.3 379.1 L 251.0 384.4 L 251.7 389.8 L 252.9 395.1 L 254.1 400.4 L 255.4 405.7 L 257.0 411.1 L 258.5 416.4 L 260.6 421.7 L 263.0 427.0 L 266.0 432.4 L 271.0 437.7 M 285.0 230.0 L 264.5 235.3 L 261.8 240.7 L 260.2 246.0 L 259.0 251.3 L 257.5 256.6 L 255.6 261.9 L 254.8 267.3 L 254.0 272.6 L 252.9 277.9 L 251.8 283.2 L 251.4 288.6 L 251.1 293.9 L 250.7 299.2 L 250.1 304.6 L 249.7 309.9 L 249.6 315.2 L 249.6 320.5 L 249.5 325.9 L 249.4 331.2 L 249.5 336.5 L 249.7 341.8 L 249.9 347.1 L 250.1 352.5 L 250.5 357.8 L 250.9 363.1 L 251.3 368.4 L 252.0 373.8 L 252.8 379.1 L 253.4 384.4 L 254.1 389.8 L 255.3 395.1 L 256.4 400.4 L 257.6 405.7 L 259.1 411.1 L 260.5 416.4 L 262.5 421.7 L 264.8 427.0 L 267.5 432.4 L 272.2 437.7 M 285.0 230.0 L 265.9 235.3 L 263.5 240.7 L 262.0 246.0 L 260.9 251.3 L 259.5 256.6 L 257.7 261.9 L 257.0 267.3 L 256.3 272.6 L 255.3 277.9 L 254.2 283.2 L 253.9 288.6 L 253.6 293.9 L 253.3 299.2 L 252.6 304.6 L 252.3 309.9 L 252.2 315.2 L 252.2 320.5 L 252.2 325.9 L 252.0 331.2 L 252.2 336.5 L 252.4 341.8 L 252.6 347.1 L 252.7 352.5 L 253.1 357.8 L 253.5 363.1 L 253.9 368.4 L 254.6 373.8 L 255.3 379.1 L 255.9 384.4 L 256.6 389.8 L 257.7 395.1 L 258.7 400.4 L 259.8 405.7 L 261.2 411.1 L 262.5 416.4 L 264.4 421.7 L 266.6 427.0 L 269.1 432.4 L 273.5 437.7 M 285.0 230.0 L 267.3 235.3 L 265.2 240.7 L 263.8 246.0 L 262.9 251.3 L 261.5 256.6 L 259.9 261.9 L 259.2 267.3 L 258.6 272.6 L 257.7 277.9 L 256.6 283.2 L 256.4 288.6 L 256.1 293.9 L 255.8 299.2 L 255.2 304.6 L 254.9 309.9 L 254.9 315.2 L 254.8 320.5 L 254.8 325.9 L 254.7 331.2 L 254.8 336.5 L 255.0 341.8 L 255.2 347.1 L 255.4 352.5 L 255.8 357.8 L 256.2 363.1 L 256.5 368.4 L 257.2 373.8 L 257.9 379.1 L 258.5 384.4 L 259.0 389.8 L 260.1 395.1 L 261.1 400.4 L 262.0 405.7 L 263.4 411.1 L 264.6 416.4 L 266.3 421.7 L 268.4 427.0 L 270.7 432.4 L 274.8 437.7 M 285.0 230.0 L 268.8 235.3 L 266.8 240.7 L 265.6 246.0 L 264.8 251.3 L 263.6 256.6 L 262.1 261.9 L 261.5 267.3 L 261.0 272.6 L 260.1 277.9 L 259.1 283.2 L 258.9 288.6 L 258.7 293.9 L 258.4 299.2 L 257.8 304.6 L 257.5 309.9 L 257.5 315.2 L 257.5 320.5 L 257.5 325.9 L 257.4 331.2 L 257.5 336.5 L 257.7 341.8 L 257.9 347.1 L 258.1 352.5 L 258.5 357.8 L 258.8 363.1 L 259.2 368.4 L 259.8 373.8 L 260.5 379.1 L 261.0 384.4 L 261.5 389.8 L 262.5 395.1 L 263.4 400.4 L 264.3 405.7 L 265.6 411.1 L 266.7 416.4 L 268.3 421.7 L 270.2 427.0 L 272.4 432.4 L 276.1 437.7 M 285.0 230.0 L 270.2 235.3 L 268.6 240.7 L 267.5 246.0 L 266.8 251.3 L 265.7 256.6 L 264.3 261.9 L 263.8 267.3 L 263.3 272.6 L 262.5 277.9 L 261.6 283.2 L 261.4 288.6 L 261.2 293.9 L 261.0 299.2 L 260.5 304.6 L 260.2 309.9 L 260.2 315.2 L 260.2 320.5 L 260.2 325.9 L 260.1 331.2 L 260.3 336.5 L 260.5 341.8 L 260.7 347.1 L 260.8 352.5 L 261.2 357.8 L 261.5 363.1 L 261.9 368.4 L 262.4 373.8 L 263.1 379.1 L 263.6 384.4 L 264.0 389.8 L 265.0 395.1 L 265.8 400.4 L 266.6 405.7 L 267.8 411.1 L 268.8 416.4 L 270.3 421.7 L 272.0 427.0 L 274.0 432.4 L 277.5 437.7 M 285.0 230.0 L 271.7 235.3 L 270.3 240.7 L 269.3 246.0 L 268.8 251.3 L 267.8 256.6 L 266.5 261.9 L 266.1 267.3 L 265.7 272.6 L 264.9 277.9 L 264.1 283.2 L 263.9 288.6 L 263.8 293.9 L 263.7 299.2 L 263.1 304.6 L 262.9 309.9 L 262.9 315.2 L 262.9 320.5 L 263.0 325.9 L 262.9 331.2 L 263.0 336.5 L 263.2 341.8 L 263.4 347.1 L 263.5 352.5 L 263.9 357.8 L 264.2 363.1 L 264.6 368.4 L 265.1 373.8 L 265.7 379.1 L 266.2 384.4 L 266.6 389.8 L 267.4 395.1 L 268.2 400.4 L 268.9 405.7 L 270.0 411.1 L 270.9 416.4 L 272.2 421.7 L 273.9 427.0 L 275.6 432.4 L 278.8 437.7 M 285.0 230.0 L 273.2 235.3 L 272.0 240.7 L 271.2 246.0 L 270.8 251.3 L 269.9 256.6 L 268.7 261.9 L 268.4 267.3 L 268.1 272.6 L 267.4 277.9 L 266.6 283.2 L 266.5 288.6 L 266.4 293.9 L 266.3 299.2 L 265.8 304.6 L 265.6 309.9 L 265.6 315.2 L 265.7 320.5 L 265.7 325.9 L 265.6 331.2 L 265.8 336.5 L 266.0 341.8 L 266.2 347.1 L 266.3 352.5 L 266.6 357.8 L 266.9 363.1 L 267.3 368.4 L 267.8 373.8 L 268.4 379.1 L 268.8 384.4 L 269.1 389.8 L 269.9 395.1 L 270.6 400.4 L 271.3 405.7 L 272.2 411.1 L 273.0 416.4 L 274.2 421.7 L 275.8 427.0 L 277.3 432.4 L 280.1 437.7 M 285.0 230.0 L 274.7 235.3 L 273.7 240.7 L 273.1 246.0 L 272.8 251.3 L 272.1 256.6 L 270.9 261.9 L 270.7 267.3 L 270.5 272.6 L 269.9 277.9 L 269.1 283.2 L 269.1 288.6 L 269.0 293.9 L 269.0 299.2 L 268.5 304.6 L 268.3 309.9 L 268.4 315.2 L 268.4 320.5 L 268.5 325.9 L 268.4 331.2 L 268.6 336.5 L 268.8 341.8 L 269.0 347.1 L 269.1 352.5 L 269.4 357.8 L 269.7 363.1 L 270.0 368.4 L 270.5 373.8 L 271.0 379.1 L 271.4 384.4 L 271.7 389.8 L 272.4 395.1 L 273.1 400.4 L 273.6 405.7 L 274.4 411.1 L 275.2 416.4 L 276.3 421.7 L 277.7 427.0 L 278.9 432.4 L 281.5 437.7 M 285.0 230.0 L 276.2 235.3 L 275.5 240.7 L 275.0 246.0 L 274.8 251.3 L 274.2 256.6 L 273.2 261.9 L 273.0 267.3 L 272.9 272.6 L 272.4 277.9 L 271.7 283.2 L 271.7 288.6 L 271.7 293.9 L 271.6 299.2 L 271.2 304.6 L 271.0 309.9 L 271.1 315.2 L 271.2 320.5 L 271.3 325.9 L 271.2 331.2 L 271.3 336.5 L 271.6 341.8 L 271.8 347.1 L 271.9 352.5 L 272.2 357.8 L 272.4 363.1 L 272.7 368.4 L 273.2 373.8 L 273.7 379.1 L 274.0 384.4 L 274.3 389.8 L 274.9 395.1 L 275.5 400.4 L 276.0 405.7 L 276.7 411.1 L 277.3 416.4 L 278.3 421.7 L 279.5 427.0 L 280.6 432.4 L 282.8 437.7 M 285.0 230.0 L 277.7 235.3 L 277.2 240.7 L 276.9 246.0 L 276.9 251.3 L 276.4 256.6 L 275.4 261.9 L 275.4 267.3 L 275.3 272.6 L 274.9 277.9 L 274.2 283.2 L 274.3 288.6 L 274.3 293.9 L 274.3 299.2 L 273.9 304.6 L 273.8 309.9 L 273.9 315.2 L 274.0 320.5 L 274.1 325.9 L 274.0 331.2 L 274.2 336.5 L 274.4 341.8 L 274.6 347.1 L 274.7 352.5 L 274.9 357.8 L 275.2 363.1 L 275.5 368.4 L 275.9 373.8 L 276.4 379.1 L 276.7 384.4 L 276.9 389.8 L 277.5 395.1 L 278.0 400.4 L 278.3 405.7 L 279.0 411.1 L 279.5 416.4 L 280.3 421.7 L 281.4 427.0 L 282.3 432.4 L 284.2 437.7 M 285.0 230.0 L 279.2 235.3 L 279.0 240.7 L 278.8 246.0 L 278.9 251.3 L 278.5 256.6 L 277.7 261.9 L 277.7 267.3 L 277.8 272.6 L 277.4 277.9 L 276.8 283.2 L 276.9 288.6 L 277.0 293.9 L 277.0 299.2 L 276.7 304.6 L 276.5 309.9 L 276.6 315.2 L 276.7 320.5 L 276.9 325.9 L 276.8 331.2 L 277.0 336.5 L 277.2 341.8 L 277.4 347.1 L 277.5 352.5 L 277.7 357.8 L 278.0 363.1 L 278.2 368.4 L 278.6 373.8 L 279.1 379.1 L 279.3 384.4 L 279.5 389.8 L 280.0 395.1 L 280.4 400.4 L 280.7 405.7 L 281.2 411.1 L 281.6 416.4 L 282.4 421.7 L 283.4 427.0 L 284.0 432.4 L 285.6 437.7 M 285.0 230.0 L 280.7 235.3 L 280.8 240.7 L 280.7 246.0 L 281.0 251.3 L 280.7 256.6 L 280.0 261.9 L 280.1 267.3 L 280.2 272.6 L 279.9 277.9 L 279.4 283.2 L 279.5 288.6 L 279.6 293.9 L 279.7 299.2 L 279.4 304.6 L 279.3 309.9 L 279.4 315.2 L 279.5 320.5 L 279.7 325.9 L 279.6 331.2 L 279.8 336.5 L 280.0 341.8 L 280.2 347.1 L 280.3 352.5 L 280.5 357.8 L 280.8 363.1 L 281.0 368.4 L 281.4 373.8 L 281.8 379.1 L 282.0 384.4 L 282.1 389.8 L 282.5 395.1 L 282.9 400.4 L 283.1 405.7 L 283.5 411.1 L 283.8 416.4 L 284.4 421.7 L 285.3 427.0 L 285.7 432.4 L 286.9 437.7 M 285.0 230.0 L 282.2 235.3 L 282.5 240.7 L 282.6 246.0 L 283.0 251.3 L 282.9 256.6 L 282.3 261.9 L 282.5 267.3 L 282.6 272.6 L 282.4 277.9 L 282.0 283.2 L 282.1 288.6 L 282.3 293.9 L 282.4 299.2 L 282.1 304.6 L 282.0 309.9 L 282.2 315.2 L 282.3 320.5 L 282.5 325.9 L 282.5 331.2 L 282.6 336.5 L 282.8 341.8 L 283.0 347.1 L 283.1 352.5 L 283.3 357.8 L 283.6 363.1 L 283.8 368.4 L 284.1 373.8 L 284.5 379.1 L 284.7 384.4 L 284.7 389.8 L 285.1 395.1 L 285.4 400.4 L 285.4 405.7 L 285.8 411.1 L 286.0 416.4 L 286.5 421.7 L 287.2 427.0 L 287.4 432.4 L 288.3 437.7 M 285.0 230.0 L 283.7 235.3 L 284.3 240.7 L 284.5 246.0 L 285.1 251.3 L 285.1 256.6 L 284.5 261.9 L 284.8 267.3 L 285.1 272.6 L 284.9 277.9 L 284.5 283.2 L 284.7 288.6 L 285.0 293.9 L 285.2 299.2 L 284.9 304.6 L 284.8 309.9 L 285.0 315.2 L 285.1 320.5 L 285.3 325.9 L 285.3 331.2 L 285.4 336.5 L 285.6 341.8 L 285.9 347.1 L 285.9 352.5 L 286.1 357.8 L 286.3 363.1 L 286.5 368.4 L 286.9 373.8 L 287.2 379.1 L 287.3 384.4 L 287.3 389.8 L 287.6 395.1 L 287.8 400.4 L 287.8 405.7 L 288.1 411.1 L 288.2 416.4 L 288.5 421.7 L 289.1 427.0 L 289.1 432.4 L 289.7 437.7 M 285.0 230.0 L 285.2 235.3 L 286.1 240.7 L 286.4 246.0 L 287.1 251.3 L 287.2 256.6 L 286.8 261.9 L 287.2 267.3 L 287.5 272.6 L 287.4 277.9 L 287.1 283.2 L 287.4 288.6 L 287.6 293.9 L 287.9 299.2 L 287.6 304.6 L 287.6 309.9 L 287.7 315.2 L 287.9 320.5 L 288.1 325.9 L 288.1 331.2 L 288.3 336.5 L 288.5 341.8 L 288.7 347.1 L 288.8 352.5 L 288.9 357.8 L 289.1 363.1 L 289.3 368.4 L 289.6 373.8 L 289.9 379.1 L 290.0 384.4 L 289.9 389.8 L 290.1 395.1 L 290.3 400.4 L 290.2 405.7 L 290.4 411.1 L 290.3 416.4 L 290.6 421.7 L 291.0 427.0 L 290.7 432.4 L 291.0 437.7 M 285.0 230.0 L 286.7 235.3 L 287.8 240.7 L 288.3 246.0 L 289.2 251.3 L 289.4 256.6 L 289.1 261.9 L 289.5 267.3 L 290.0 272.6 L 289.9 277.9 L 289.7 283.2 L 290.0 288.6 L 290.3 293.9 L 290.6 299.2 L 290.3 304.6 L 290.3 309.9 L 290.5 315.2 L 290.7 320.5 L 290.9 325.9 L 290.9 331.2 L 291.1 336.5 L 291.3 341.8 L 291.5 347.1 L 291.6 352.5 L 291.8 357.8 L 291.9 363.1 L 292.1 368.4 L 292.3 373.8 L 292.6 379.1 L 292.6 384.4 L 292.5 389.8 L 292.7 395.1 L 292.8 400.4 L 292.6 405.7 L 292.6 411.1 L 292.5 416.4 L 292.6 421.7 L 292.9 427.0 L 292.4 432.4 L 292.4 437.7 M 285.0 230.0 L 288.2 235.3 L 289.6 240.7 L 290.2 246.0 L 291.2 251.3 L 291.6 256.6 L 291.4 261.9 L 291.9 267.3 L 292.4 272.6 L 292.4 277.9 L 292.3 283.2 L 292.6 288.6 L 292.9 293.9 L 293.3 299.2 L 293.1 304.6 L 293.1 309.9 L 293.3 315.2 L 293.5 320.5 L 293.7 325.9 L 293.8 331.2 L 293.9 336.5 L 294.1 341.8 L 294.3 347.1 L 294.4 352.5 L 294.6 357.8 L 294.7 363.1 L 294.8 368.4 L 295.1 373.8 L 295.3 379.1 L 295.3 384.4 L 295.1 389.8 L 295.2 395.1 L 295.2 400.4 L 295.0 405.7 L 294.9 411.1 L 294.7 416.4 L 294.6 421.7 L 294.8 427.0 L 294.1 432.4 L 293.8 437.7 M 285.0 230.0 L 289.7 235.3 L 291.4 240.7 L 292.2 246.0 L 293.2 251.3 L 293.7 256.6 L 293.6 261.9 L 294.2 267.3 L 294.9 272.6 L 295.0 277.9 L 294.8 283.2 L 295.2 288.6 L 295.6 293.9 L 296.0 299.2 L 295.8 304.6 L 295.8 309.9 L 296.1 315.2 L 296.3 320.5 L 296.5 325.9 L 296.6 331.2 L 296.7 336.5 L 296.9 341.8 L 297.1 347.1 L 297.2 352.5 L 297.3 357.8 L 297.5 363.1 L 297.6 368.4 L 297.8 373.8 L 298.0 379.1 L 298.0 384.4 L 297.7 389.8 L 297.8 395.1 L 297.7 400.4 L 297.3 405.7 L 297.2 411.1 L 296.9 416.4 L 296.7 421.7 L 296.7 427.0 L 295.8 432.4 L 295.1 437.7 M 285.0 230.0 L 291.2 235.3 L 293.1 240.7 L 294.1 246.0 L 295.3 251.3 L 295.9 256.6 L 295.9 261.9 L 296.6 267.3 L 297.3 272.6 L 297.4 277.9 L 297.4 283.2 L 297.8 288.6 L 298.2 293.9 L 298.7 299.2 L 298.5 304.6 L 298.6 309.9 L 298.8 315.2 L 299.1 320.5 L 299.3 325.9 L 299.4 331.2 L 299.5 336.5 L 299.7 341.8 L 299.9 347.1 L 300.0 352.5 L 300.1 357.8 L 300.2 363.1 L 300.4 368.4 L 300.5 373.8 L 300.7 379.1 L 300.6 384.4 L 300.3 389.8 L 300.3 395.1 L 300.2 400.4 L 299.7 405.7 L 299.5 411.1 L 299.0 416.4 L 298.7 421.7 L 298.6 427.0 L 297.5 432.4 L 296.5 437.7 M 285.0 230.0 L 292.7 235.3 L 294.9 240.7 L 295.9 246.0 L 297.3 251.3 L 298.0 256.6 L 298.2 261.9 L 298.9 267.3 L 299.7 272.6 L 299.9 277.9 L 299.9 283.2 L 300.4 288.6 L 300.9 293.9 L 301.3 299.2 L 301.2 304.6 L 301.3 309.9 L 301.6 315.2 L 301.8 320.5 L 302.1 325.9 L 302.2 331.2 L 302.3 336.5 L 302.5 341.8 L 302.7 347.1 L 302.8 352.5 L 302.9 357.8 L 303.0 363.1 L 303.1 368.4 L 303.2 373.8 L 303.4 379.1 L 303.2 384.4 L 302.9 389.8 L 302.8 395.1 L 302.6 400.4 L 302.0 405.7 L 301.7 411.1 L 301.2 416.4 L 300.7 421.7 L 300.5 427.0 L 299.2 432.4 L 297.9 437.7 M 285.0 230.0 L 294.2 235.3 L 296.6 240.7 L 297.8 246.0 L 299.3 251.3 L 300.2 256.6 L 300.4 261.9 L 301.2 267.3 L 302.1 272.6 L 302.4 277.9 L 302.5 283.2 L 303.0 288.6 L 303.5 293.9 L 304.0 299.2 L 303.9 304.6 L 304.0 309.9 L 304.3 315.2 L 304.6 320.5 L 304.9 325.9 L 305.0 331.2 L 305.1 336.5 L 305.3 341.8 L 305.5 347.1 L 305.6 352.5 L 305.7 357.8 L 305.7 363.1 L 305.8 368.4 L 305.9 373.8 L 306.1 379.1 L 305.9 384.4 L 305.4 389.8 L 305.3 395.1 L 305.0 400.4 L 304.4 405.7 L 304.0 411.1 L 303.3 416.4 L 302.8 421.7 L 302.4 427.0 L 300.8 432.4 L 299.2 437.7 M 285.0 230.0 L 295.6 235.3 L 298.3 240.7 L 299.7 246.0 L 301.3 251.3 L 302.3 256.6 L 302.6 261.9 L 303.6 267.3 L 304.5 272.6 L 304.9 277.9 L 305.0 283.2 L 305.5 288.6 L 306.1 293.9 L 306.6 299.2 L 306.6 304.6 L 306.7 309.9 L 307.0 315.2 L 307.3 320.5 L 307.6 325.9 L 307.7 331.2 L 307.9 336.5 L 308.1 341.8 L 308.3 347.1 L 308.3 352.5 L 308.4 357.8 L 308.5 363.1 L 308.5 368.4 L 308.6 373.8 L 308.7 379.1 L 308.5 384.4 L 308.0 389.8 L 307.8 395.1 L 307.4 400.4 L 306.7 405.7 L 306.2 411.1 L 305.4 416.4 L 304.8 421.7 L 304.3 427.0 L 302.5 432.4 L 300.6 437.7 M 285.0 230.0 L 297.1 235.3 L 300.0 240.7 L 301.6 246.0 L 303.3 251.3 L 304.4 256.6 L 304.8 261.9 L 305.8 267.3 L 306.9 272.6 L 307.3 277.9 L 307.5 283.2 L 308.1 288.6 L 308.7 293.9 L 309.3 299.2 L 309.3 304.6 L 309.4 309.9 L 309.7 315.2 L 310.0 320.5 L 310.4 325.9 L 310.5 331.2 L 310.6 336.5 L 310.8 341.8 L 311.0 347.1 L 311.1 352.5 L 311.1 357.8 L 311.2 363.1 L 311.2 368.4 L 311.3 373.8 L 311.3 379.1 L 311.1 384.4 L 310.5 389.8 L 310.2 395.1 L 309.9 400.4 L 309.0 405.7 L 308.4 411.1 L 307.6 416.4 L 306.8 421.7 L 306.1 427.0 L 304.1 432.4 L 301.9 437.7 M 285.0 230.0 L 298.6 235.3 L 301.8 240.7 L 303.4 246.0 L 305.3 251.3 L 306.5 256.6 L 307.0 261.9 L 308.1 267.3 L 309.2 272.6 L 309.7 277.9 L 310.0 283.2 L 310.6 288.6 L 311.3 293.9 L 311.9 299.2 L 311.9 304.6 L 312.1 309.9 L 312.4 315.2 L 312.7 320.5 L 313.1 325.9 L 313.2 331.2 L 313.4 336.5 L 313.6 341.8 L 313.8 347.1 L 313.8 352.5 L 313.8 357.8 L 313.9 363.1 L 313.9 368.4 L 313.9 373.8 L 313.9 379.1 L 313.6 384.4 L 313.0 389.8 L 312.7 395.1 L 312.2 400.4 L 311.3 405.7 L 310.6 411.1 L 309.7 416.4 L 308.7 421.7 L 308.0 427.0 L 305.8 432.4 L 303.2 437.7 M 285.0 230.0 L 300.0 235.3 L 303.4 240.7 L 305.2 246.0 L 307.3 251.3 L 308.6 256.6 L 309.2 261.9 L 310.4 267.3 L 311.6 272.6 L 312.1 277.9 L 312.4 283.2 L 313.1 288.6 L 313.8 293.9 L 314.5 299.2 L 314.5 304.6 L 314.7 309.9 L 315.1 315.2 L 315.4 320.5 L 315.8 325.9 L 315.9 331.2 L 316.1 336.5 L 316.3 341.8 L 316.5 347.1 L 316.5 352.5 L 316.5 357.8 L 316.5 363.1 L 316.5 368.4 L 316.5 373.8 L 316.5 379.1 L 316.2 384.4 L 315.5 389.8 L 315.1 395.1 L 314.6 400.4 L 313.6 405.7 L 312.8 411.1 L 311.7 416.4 L 310.7 421.7 L 309.8 427.0 L 307.4 432.4 L 304.5 437.7 M 285.0 230.0 L 301.4 235.3 L 305.1 240.7 L 307.0 246.0 L 309.2 251.3 L 310.6 256.6 L 311.4 261.9 L 312.6 267.3 L 313.9 272.6 L 314.5 277.9 L 314.9 283.2 L 315.6 288.6 L 316.3 293.9 L 317.0 299.2 L 317.1 304.6 L 317.3 309.9 L 317.7 315.2 L 318.1 320.5 L 318.4 325.9 L 318.6 331.2 L 318.7 336.5 L 318.9 341.8 L 319.1 347.1 L 319.2 352.5 L 319.2 357.8 L 319.2 363.1 L 319.2 368.4 L 319.1 373.8 L 319.1 379.1 L 318.7 384.4 L 318.0 389.8 L 317.5 395.1 L 316.9 400.4 L 315.9 405.7 L 314.9 411.1 L 313.8 416.4 L 312.6 421.7 L 311.6 427.0 L 309.0 432.4 L 305.8 437.7 M 285.0 230.0 L 302.9 235.3 L 306.8 240.7 L 308.8 246.0 L 311.1 251.3 L 312.7 256.6 L 313.5 261.9 L 314.8 267.3 L 316.2 272.6 L 316.9 277.9 L 317.3 283.2 L 318.1 288.6 L 318.8 293.9 L 319.6 299.2 L 319.7 304.6 L 319.9 309.9 L 320.3 315.2 L 320.7 320.5 L 321.1 325.9 L 321.2 331.2 L 321.4 336.5 L 321.6 341.8 L 321.8 347.1 L 321.8 352.5 L 321.8 357.8 L 321.8 363.1 L 321.8 368.4 L 321.7 373.8 L 321.6 379.1 L 321.2 384.4 L 320.4 389.8 L 319.9 395.1 L 319.3 400.4 L 318.1 405.7 L 317.1 411.1 L 315.8 416.4 L 314.6 421.7 L 313.4 427.0 L 310.6 432.4 L 307.1 437.7 M 285.0 230.0 L 304.2 235.3 L 308.4 240.7 L 310.6 246.0 L 313.0 251.3 L 314.7 256.6 L 315.6 261.9 L 317.0 267.3 L 318.4 272.6 L 319.2 277.9 L 319.7 283.2 L 320.5 288.6 L 321.3 293.9 L 322.1 299.2 L 322.2 304.6 L 322.5 309.9 L 322.9 315.2 L 323.3 320.5 L 323.7 325.9 L 323.8 331.2 L 324.0 336.5 L 324.2 341.8 L 324.4 347.1 L 324.4 352.5 L 324.4 357.8 L 324.4 363.1 L 324.3 368.4 L 324.2 373.8 L 324.1 379.1 L 323.7 384.4 L 322.9 389.8 L 322.3 395.1 L 321.5 400.4 L 320.3 405.7 L 319.2 411.1 L 317.9 416.4 L 316.5 421.7 L 315.2 427.0 L 312.1 432.4 L 308.4 437.7 M 285.0 230.0 L 305.6 235.3 L 310.0 240.7 L 312.4 246.0 L 314.9 251.3 L 316.7 256.6 L 317.7 261.9 L 319.2 267.3 L 320.7 272.6 L 321.5 277.9 L 322.0 283.2 L 322.9 288.6 L 323.7 293.9 L 324.6 299.2 L 324.7 304.6 L 325.0 309.9 L 325.4 315.2 L 325.8 320.5 L 326.3 325.9 L 326.4 331.2 L 326.6 336.5 L 326.8 341.8 L 327.0 347.1 L 327.0 352.5 L 327.0 357.8 L 326.9 363.1 L 326.9 368.4 L 326.8 373.8 L 326.6 379.1 L 326.1 384.4 L 325.2 389.8 L 324.6 395.1 L 323.8 400.4 L 322.5 405.7 L 321.3 411.1 L 319.9 416.4 L 318.3 421.7 L 317.0 427.0 L 313.7 432.4 L 309.6 437.7 M 285.0 230.0 L 307.0 235.3 L 311.6 240.7 L 314.1 246.0 L 316.8 251.3 L 318.6 256.6 L 319.8 261.9 L 321.3 267.3 L 322.9 272.6 L 323.8 277.9 L 324.4 283.2 L 325.3 288.6 L 326.1 293.9 L 327.0 299.2 L 327.2 304.6 L 327.5 309.9 L 327.9 315.2 L 328.4 320.5 L 328.8 325.9 L 329.0 331.2 L 329.2 336.5 L 329.4 341.8 L 329.6 347.1 L 329.6 352.5 L 329.5 357.8 L 329.4 363.1 L 329.4 368.4 L 329.2 373.8 L 329.1 379.1 L 328.5 384.4 L 327.6 389.8 L 326.9 395.1 L 326.1 400.4 L 324.6 405.7 L 323.4 411.1 L 321.8 416.4 L 320.2 421.7 L 318.7 427.0 L 315.2 432.4 L 310.9 437.7 M 285.0 230.0 L 308.3 235.3 L 313.2 240.7 L 315.8 246.0 L 318.6 251.3 L 320.6 256.6 L 321.8 261.9 L 323.4 267.3 L 325.1 272.6 L 326.0 277.9 L 326.7 283.2 L 327.6 288.6 L 328.5 293.9 L 329.4 299.2 L 329.6 304.6 L 330.0 309.9 L 330.4 315.2 L 330.9 320.5 L 331.3 325.9 L 331.5 331.2 L 331.7 336.5 L 331.9 341.8 L 332.1 347.1 L 332.1 352.5 L 332.0 357.8 L 331.9 363.1 L 331.8 368.4 L 331.7 373.8 L 331.5 379.1 L 330.9 384.4 L 329.9 389.8 L 329.2 395.1 L 328.3 400.4 L 326.8 405.7 L 325.4 411.1 L 323.8 416.4 L 322.0 421.7 L 320.4 427.0 L 316.7 432.4 L 312.1 437.7 M 285.0 230.0 L 309.7 235.3 L 314.8 240.7 L 317.5 246.0 L 320.4 251.3 L 322.5 256.6 L 323.8 261.9 L 325.5 267.3 L 327.2 272.6 L 328.2 277.9 L 328.9 283.2 L 329.9 288.6 L 330.9 293.9 L 331.8 299.2 L 332.0 304.6 L 332.4 309.9 L 332.8 315.2 L 333.3 320.5 L 333.8 325.9 L 334.0 331.2 L 334.2 336.5 L 334.4 341.8 L 334.6 347.1 L 334.6 352.5 L 334.5 357.8 L 334.4 363.1 L 334.3 368.4 L 334.1 373.8 L 333.9 379.1 L 333.2 384.4 L 332.2 389.8 L 331.4 395.1 L 330.4 400.4 L 328.8 405.7 L 327.4 411.1 L 325.7 416.4 L 323.8 421.7 L 322.1 427.0 L 318.2 432.4 L 313.3 437.7 M 285.0 230.0 L 311.0 235.3 L 316.3 240.7 L 319.1 246.0 L 322.2 251.3 L 324.3 256.6 L 325.8 261.9 L 327.5 267.3 L 329.3 272.6 L 330.4 277.9 L 331.1 283.2 L 332.2 288.6 L 333.2 293.9 L 334.1 299.2 L 334.4 304.6 L 334.8 309.9 L 335.2 315.2 L 335.7 320.5 L 336.2 325.9 L 336.4 331.2 L 336.6 336.5 L 336.8 341.8 L 337.0 347.1 L 337.0 352.5 L 336.9 357.8 L 336.8 363.1 L 336.7 368.4 L 336.5 373.8 L 336.2 379.1 L 335.5 384.4 L 334.5 389.8 L 333.6 395.1 L 332.6 400.4 L 330.9 405.7 L 329.4 411.1 L 327.6 416.4 L 325.6 421.7 L 323.7 427.0 L 319.7 432.4 L 314.5 437.7 M 285.0 230.0 L 312.3 235.3 L 317.8 240.7 L 320.8 246.0 L 323.9 251.3 L 326.2 256.6 L 327.7 261.9 L 329.5 267.3 L 331.4 272.6 L 332.5 277.9 L 333.3 283.2 L 334.4 288.6 L 335.4 293.9 L 336.4 299.2 L 336.7 304.6 L 337.1 309.9 L 337.6 315.2 L 338.1 320.5 L 338.6 325.9 L 338.8 331.2 L 339.0 336.5 L 339.2 341.8 L 339.4 347.1 L 339.4 352.5 L 339.3 357.8 L 339.1 363.1 L 339.0 368.4 L 338.8 373.8 L 338.5 379.1 L 337.8 384.4 L 336.7 389.8 L 335.8 395.1 L 334.7 400.4 L 332.9 405.7 L 331.3 411.1 L 329.4 416.4 L 327.3 421.7 L 325.4 427.0 L 321.1 432.4 L 315.6 437.7 M 285.0 230.0 L 313.5 235.3 L 319.3 240.7 L 322.4 246.0 L 325.6 251.3 L 328.0 256.6 L 329.6 261.9 L 331.5 267.3 L 333.4 272.6 L 334.6 277.9 L 335.5 283.2 L 336.6 288.6 L 337.7 293.9 L 338.7 299.2 L 339.0 304.6 L 339.4 309.9 L 339.9 315.2 L 340.4 320.5 L 340.9 325.9 L 341.2 331.2 L 341.4 336.5 L 341.6 341.8 L 341.8 347.1 L 341.8 352.5 L 341.6 357.8 L 341.5 363.1 L 341.3 368.4 L 341.1 373.8 L 340.8 379.1 L 340.0 384.4 L 338.9 389.8 L 337.9 395.1 L 336.7 400.4 L 334.9 405.7 L 333.2 411.1 L 331.2 416.4 L 329.0 421.7 L 326.9 427.0 L 322.5 432.4 L 316.8 437.7 M 285.0 230.0 L 314.7 235.3 L 320.7 240.7 L 323.9 246.0 L 327.3 251.3 L 329.8 256.6 L 331.4 261.9 L 333.4 267.3 L 335.4 272.6 L 336.7 277.9 L 337.6 283.2 L 338.7 288.6 L 339.8 293.9 L 340.9 299.2 L 341.3 304.6 L 341.7 309.9 L 342.2 315.2 L 342.7 320.5 L 343.2 325.9 L 343.5 331.2 L 343.7 336.5 L 343.9 341.8 L 344.1 347.1 L 344.1 352.5 L 343.9 357.8 L 343.8 363.1 L 343.6 368.4 L 343.3 373.8 L 343.0 379.1 L 342.2 384.4 L 341.0 389.8 L 340.0 395.1 L 338.7 400.4 L 336.9 405.7 L 335.1 411.1 L 333.0 416.4 L 330.7 421.7 L 328.5 427.0 L 323.9 432.4 L 317.9 437.7 M 285.0 230.0 L 316.0 235.3 L 322.1 240.7 L 325.5 246.0 L 328.9 251.3 L 331.5 256.6 L 333.3 261.9 L 335.3 267.3 L 337.4 272.6 L 338.7 277.9 L 339.6 283.2 L 340.8 288.6 L 342.0 293.9 L 343.1 299.2 L 343.5 304.6 L 343.9 309.9 L 344.4 315.2 L 345.0 320.5 L 345.5 325.9 L 345.8 331.2 L 345.9 336.5 L 346.1 341.8 L 346.3 347.1 L 346.3 352.5 L 346.2 357.8 L 346.0 363.1 L 345.8 368.4 L 345.5 373.8 L 345.1 379.1 L 344.3 384.4 L 343.1 389.8 L 342.0 395.1 L 340.7 400.4 L 338.8 405.7 L 336.9 411.1 L 334.8 416.4 L 332.4 421.7 L 330.0 427.0 L 325.3 432.4 L 319.0 437.7 M 285.0 230.0 L 317.1 235.3 L 323.5 240.7 L 327.0 246.0 L 330.5 251.3 L 333.2 256.6 L 335.1 261.9 L 337.2 267.3 L 339.3 272.6 L 340.7 277.9 L 341.7 283.2 L 342.9 288.6 L 344.1 293.9 L 345.2 299.2 L 345.6 304.6 L 346.1 309.9 L 346.6 315.2 L 347.2 320.5 L 347.7 325.9 L 348.0 331.2 L 348.2 336.5 L 348.4 341.8 L 348.5 347.1 L 348.5 352.5 L 348.4 357.8 L 348.2 363.1 L 348.0 368.4 L 347.7 373.8 L 347.3 379.1 L 346.4 384.4 L 345.1 389.8 L 344.0 395.1 L 342.7 400.4 L 340.6 405.7 L 338.7 411.1 L 336.5 416.4 L 334.0 421.7 L 331.5 427.0 L 326.6 432.4 L 320.1 437.7 M 285.0 230.0 L 318.3 235.3 L 324.9 240.7 L 328.4 246.0 L 332.1 251.3 L 334.9 256.6 L 336.8 261.9 L 339.0 267.3 L 341.2 272.6 L 342.6 277.9 L 343.6 283.2 L 344.9 288.6 L 346.1 293.9 L 347.3 299.2 L 347.7 304.6 L 348.2 309.9 L 348.7 315.2 L 349.3 320.5 L 349.9 325.9 L 350.1 331.2 L 350.3 336.5 L 350.5 341.8 L 350.7 347.1 L 350.7 352.5 L 350.5 357.8 L 350.3 363.1 L 350.1 368.4 L 349.8 373.8 L 349.3 379.1 L 348.5 384.4 L 347.1 389.8 L 345.9 395.1 L 344.6 400.4 L 342.4 405.7 L 340.4 411.1 L 338.1 416.4 L 335.5 421.7 L 333.0 427.0 L 327.9 432.4 L 321.1 437.7 M 285.0 230.0 L 319.4 235.3 L 326.2 240.7 L 329.9 246.0 L 333.6 251.3 L 336.5 256.6 L 338.5 261.9 L 340.8 267.3 L 343.0 272.6 L 344.5 277.9 L 345.6 283.2 L 346.8 288.6 L 348.1 293.9 L 349.3 299.2 L 349.7 304.6 L 350.2 309.9 L 350.8 315.2 L 351.4 320.5 L 352.0 325.9 L 352.2 331.2 L 352.4 336.5 L 352.6 341.8 L 352.8 347.1 L 352.8 352.5 L 352.6 357.8 L 352.4 363.1 L 352.2 368.4 L 351.8 373.8 L 351.3 379.1 L 350.5 384.4 L 349.1 389.8 L 347.8 395.1 L 346.4 400.4 L 344.2 405.7 L 342.1 411.1 L 339.8 416.4 L 337.1 421.7 L 334.4 427.0 L 329.1 432.4 L 322.2 437.7 M 285.0 230.0 L 320.5 235.3 L 327.5 240.7 L 331.2 246.0 L 335.1 251.3 L 338.1 256.6 L 340.2 261.9 L 342.5 267.3 L 344.8 272.6 L 346.3 277.9 L 347.4 283.2 L 348.7 288.6 L 350.0 293.9 L 351.3 299.2 L 351.7 304.6 L 352.2 309.9 L 352.8 315.2 L 353.4 320.5 L 354.0 325.9 L 354.3 331.2 L 354.5 336.5 L 354.7 341.8 L 354.9 347.1 L 354.9 352.5 L 354.6 357.8 L 354.4 363.1 L 354.2 368.4 L 353.8 373.8 L 353.3 379.1 L 352.4 384.4 L 351.0 389.8 L 349.7 395.1 L 348.2 400.4 L 346.0 405.7 L 343.8 411.1 L 341.3 416.4 L 338.5 421.7 L 335.8 427.0 L 330.4 432.4 L 323.2 437.7 M 285.0 230.0 L 321.6 235.3 L 328.7 240.7 L 332.6 246.0 L 336.6 251.3 L 339.6 256.6 L 341.8 261.9 L 344.1 267.3 L 346.5 272.6 L 348.1 277.9 L 349.3 283.2 L 350.6 288.6 L 351.9 293.9 L 353.2 299.2 L 353.7 304.6 L 354.2 309.9 L 354.8 315.2 L 355.4 320.5 L 356.0 325.9 L 356.3 331.2 L 356.5 336.5 L 356.7 341.8 L 356.9 347.1 L 356.8 352.5 L 356.6 357.8 L 356.4 363.1 L 356.2 368.4 L 355.7 373.8 L 355.2 379.1 L 354.3 384.4 L 352.8 389.8 L 351.5 395.1 L 350.0 400.4 L 347.6 405.7 L 345.4 411.1 L 342.9 416.4 L 340.0 421.7 L 337.2 427.0 L 331.6 432.4 L 324.1 437.7 M 285.0 230.0 L 322.6 235.3 L 329.9 240.7 L 333.9 246.0 L 338.0 251.3 L 341.1 256.6 L 343.3 261.9 L 345.8 267.3 L 348.2 272.6 L 349.8 277.9 L 351.0 283.2 L 352.4 288.6 L 353.7 293.9 L 355.1 299.2 L 355.5 304.6 L 356.1 309.9 L 356.7 315.2 L 357.3 320.5 L 357.9 325.9 L 358.2 331.2 L 358.4 336.5 L 358.6 341.8 L 358.8 347.1 L 358.8 352.5 L 358.5 357.8 L 358.3 363.1 L 358.1 368.4 L 357.6 373.8 L 357.1 379.1 L 356.1 384.4 L 354.6 389.8 L 353.2 395.1 L 351.7 400.4 L 349.3 405.7 L 347.0 411.1 L 344.4 416.4 L 341.4 421.7 L 338.5 427.0 L 332.7 432.4 L 325.1 437.7 M 285.0 230.0 L 323.6 235.3 L 331.1 240.7 L 335.2 246.0 L 339.4 251.3 L 342.6 256.6 L 344.9 261.9 L 347.3 267.3 L 349.8 272.6 L 351.5 277.9 L 352.7 283.2 L 354.1 288.6 L 355.5 293.9 L 356.9 299.2 L 357.4 304.6 L 357.9 309.9 L 358.6 315.2 L 359.2 320.5 L 359.8 325.9 L 360.1 331.2 L 360.3 336.5 L 360.5 341.8 L 360.7 347.1 L 360.7 352.5 L 360.4 357.8 L 360.2 363.1 L 359.9 368.4 L 359.4 373.8 L 358.9 379.1 L 357.9 384.4 L 356.4 389.8 L 354.9 395.1 L 353.3 400.4 L 350.9 405.7 L 348.5 411.1 L 345.8 416.4 L 342.8 421.7 L 339.8 427.0 L 333.9 432.4 L 326.0 437.7 M 285.0 230.0 L 324.6 235.3 L 332.3 240.7 L 336.4 246.0 L 340.7 251.3 L 344.0 256.6 L 346.3 261.9 L 348.9 267.3 L 351.4 272.6 L 353.1 277.9 L 354.4 283.2 L 355.8 288.6 L 357.2 293.9 L 358.6 299.2 L 359.1 304.6 L 359.7 309.9 L 360.4 315.2 L 361.0 320.5 L 361.6 325.9 L 362.0 331.2 L 362.1 336.5 L 362.3 341.8 L 362.5 347.1 L 362.5 352.5 L 362.2 357.8 L 362.0 363.1 L 361.7 368.4 L 361.2 373.8 L 360.6 379.1 L 359.6 384.4 L 358.0 389.8 L 356.6 395.1 L 354.9 400.4 L 352.4 405.7 L 350.0 411.1 L 347.2 416.4 L 344.1 421.7 L 341.0 427.0 L 335.0 432.4 L 326.9 437.7 M 285.0 230.0 L 325.5 235.3 L 333.4 240.7 L 337.6 246.0 L 341.9 251.3 L 345.3 256.6 L 347.7 261.9 L 350.3 267.3 L 352.9 272.6 L 354.7 277.9 L 356.0 283.2 L 357.4 288.6 L 358.9 293.9 L 360.3 299.2 L 360.8 304.6 L 361.4 309.9 L 362.1 315.2 L 362.7 320.5 L 363.4 325.9 L 363.7 331.2 L 363.9 336.5 L 364.1 341.8 L 364.3 347.1 L 364.2 352.5 L 364.0 357.8 L 363.7 363.1 L 363.4 368.4 L 362.9 373.8 L 362.3 379.1 L 361.3 384.4 L 359.7 389.8 L 358.1 395.1 L 356.4 400.4 L 353.9 405.7 L 351.4 411.1 L 348.6 416.4 L 345.4 421.7 L 342.2 427.0 L 336.0 432.4 L 327.7 437.7 M 285.0 230.0 L 326.4 235.3 L 334.4 240.7 L 338.8 246.0 L 343.2 251.3 L 346.6 256.6 L 349.1 261.9 L 351.7 267.3 L 354.4 272.6 L 356.2 277.9 L 357.6 283.2 L 359.0 288.6 L 360.5 293.9 L 361.9 299.2 L 362.5 304.6 L 363.1 309.9 L 363.7 315.2 L 364.4 320.5 L 365.1 325.9 L 365.4 331.2 L 365.6 336.5 L 365.8 341.8 L 366.0 347.1 L 365.9 352.5 L 365.6 357.8 L 365.4 363.1 L 365.1 368.4 L 364.6 373.8 L 363.9 379.1 L 362.9 384.4 L 361.2 389.8 L 359.7 395.1 L 357.9 400.4 L 355.3 405.7 L 352.8 411.1 L 349.9 416.4 L 346.6 421.7 L 343.4 427.0 L 337.0 432.4 L 328.5 437.7 M 285.0 230.0 L 327.3 235.3 L 335.4 240.7 L 339.9 246.0 L 344.4 251.3 L 347.9 256.6 L 350.4 261.9 L 353.1 267.3 L 355.8 272.6 L 357.7 277.9 L 359.0 283.2 L 360.5 288.6 L 362.0 293.9 L 363.5 299.2 L 364.1 304.6 L 364.7 309.9 L 365.3 315.2 L 366.0 320.5 L 366.7 325.9 L 367.0 331.2 L 367.2 336.5 L 367.4 341.8 L 367.6 347.1 L 367.6 352.5 L 367.3 357.8 L 367.0 363.1 L 366.7 368.4 L 366.1 373.8 L 365.5 379.1 L 364.4 384.4 L 362.7 389.8 L 361.1 395.1 L 359.3 400.4 L 356.7 405.7 L 354.1 411.1 L 351.1 416.4 L 347.8 421.7 L 344.5 427.0 L 338.0 432.4 L 329.3 437.7 M 285.0 230.0 L 328.1 235.3 L 336.4 240.7 L 340.9 246.0 L 345.5 251.3 L 349.1 256.6 L 351.7 261.9 L 354.4 267.3 L 357.2 272.6 L 359.0 277.9 L 360.5 283.2 L 362.0 288.6 L 363.5 293.9 L 365.0 299.2 L 365.6 304.6 L 366.2 309.9 L 366.9 315.2 L 367.6 320.5 L 368.2 325.9 L 368.6 331.2 L 368.8 336.5 L 369.0 341.8 L 369.2 347.1 L 369.1 352.5 L 368.8 357.8 L 368.5 363.1 L 368.2 368.4 L 367.7 373.8 L 367.0 379.1 L 365.9 384.4 L 364.2 389.8 L 362.5 395.1 L 360.7 400.4 L 358.0 405.7 L 355.3 411.1 L 352.3 416.4 L 348.9 421.7 L 345.5 427.0 L 338.9 432.4 L 330.1 437.7 M 285.0 230.0 L 328.9 235.3 L 337.4 240.7 L 341.9 246.0 L 346.6 251.3 L 350.2 256.6 L 352.9 261.9 L 355.7 267.3 L 358.5 272.6 L 360.4 277.9 L 361.8 283.2 L 363.4 288.6 L 364.9 293.9 L 366.4 299.2 L 367.0 304.6 L 367.7 309.9 L 368.4 315.2 L 369.0 320.5 L 369.7 325.9 L 370.1 331.2 L 370.3 336.5 L 370.5 341.8 L 370.7 347.1 L 370.6 352.5 L 370.3 357.8 L 370.0 363.1 L 369.7 368.4 L 369.1 373.8 L 368.4 379.1 L 367.3 384.4 L 365.5 389.8 L 363.9 395.1 L 362.0 400.4 L 359.3 405.7 L 356.5 411.1 L 353.5 416.4 L 350.0 421.7 L 346.5 427.0 L 339.8 432.4 L 330.8 437.7 M 285.0 230.0 L 329.7 235.3 L 338.2 240.7 L 342.9 246.0 L 347.6 251.3 L 351.3 256.6 L 354.0 261.9 L 356.9 267.3 L 359.7 272.6 L 361.6 277.9 L 363.1 283.2 L 364.7 288.6 L 366.2 293.9 L 367.8 299.2 L 368.4 304.6 L 369.1 309.9 L 369.8 315.2 L 370.5 320.5 L 371.1 325.9 L 371.5 331.2 L 371.7 336.5 L 371.9 341.8 L 372.1 347.1 L 372.0 352.5 L 371.7 357.8 L 371.4 363.1 L 371.1 368.4 L 370.5 373.8 L 369.8 379.1 L 368.6 384.4 L 366.9 389.8 L 365.2 395.1 L 363.3 400.4 L 360.5 405.7 L 357.7 411.1 L 354.6 416.4 L 351.0 421.7 L 347.5 427.0 L 340.7 432.4 L 331.5 437.7 M 285.0 230.0 L 330.4 235.3 L 339.1 240.7 L 343.8 246.0 L 348.6 251.3 L 352.3 256.6 L 355.1 261.9 L 358.0 267.3 L 360.9 272.6 L 362.8 277.9 L 364.4 283.2 L 365.9 288.6 L 367.5 293.9 L 369.1 299.2 L 369.7 304.6 L 370.4 309.9 L 371.1 315.2 L 371.8 320.5 L 372.5 325.9 L 372.9 331.2 L 373.1 336.5 L 373.3 341.8 L 373.5 347.1 L 373.4 352.5 L 373.1 357.8 L 372.7 363.1 L 372.4 368.4 L 371.8 373.8 L 371.1 379.1 L 369.9 384.4 L 368.1 389.8 L 366.4 395.1 L 364.4 400.4 L 361.6 405.7 L 358.8 411.1 L 355.6 416.4 L 352.0 421.7 L 348.4 427.0 L 341.5 432.4 L 332.2 437.7 M 285.0 230.0 L 331.1 235.3 L 339.9 240.7 L 344.7 246.0 L 349.5 251.3 L 353.3 256.6 L 356.2 261.9 L 359.1 267.3 L 362.0 272.6 L 364.0 277.9 L 365.5 283.2 L 367.1 288.6 L 368.7 293.9 L 370.3 299.2 L 371.0 304.6 L 371.6 309.9 L 372.4 315.2 L 373.1 320.5 L 373.8 325.9 L 374.2 331.2 L 374.3 336.5 L 374.5 341.8 L 374.7 347.1 L 374.7 352.5 L 374.3 357.8 L 374.0 363.1 L 373.7 368.4 L 373.0 373.8 L 372.3 379.1 L 371.1 384.4 L 369.3 389.8 L 367.5 395.1 L 365.6 400.4 L 362.7 405.7 L 359.8 411.1 L 356.6 416.4 L 352.9 421.7 L 349.3 427.0 L 342.3 432.4 L 332.8 437.7 M 285.0 230.0 L 331.8 235.3 L 340.7 240.7 L 345.5 246.0 L 350.4 251.3 L 354.3 256.6 L 357.1 261.9 L 360.1 267.3 L 363.0 272.6 L 365.1 277.9 L 366.6 283.2 L 368.3 288.6 L 369.9 293.9 L 371.5 299.2 L 372.1 304.6 L 372.8 309.9 L 373.5 315.2 L 374.3 320.5 L 375.0 325.9 L 375.4 331.2 L 375.6 336.5 L 375.8 341.8 L 375.9 347.1 L 375.9 352.5 L 375.5 357.8 L 375.2 363.1 L 374.8 368.4 L 374.2 373.8 L 373.5 379.1 L 372.2 384.4 L 370.4 389.8 L 368.6 395.1 L 366.6 400.4 L 363.7 405.7 L 360.8 411.1 L 357.6 416.4 L 353.8 421.7 L 350.1 427.0 L 343.0 432.4 L 333.4 437.7 M 285.0 230.0 L 332.4 235.3 L 341.4 240.7 L 346.3 246.0 L 351.2 251.3 L 355.1 256.6 L 358.1 261.9 L 361.0 267.3 L 364.0 272.6 L 366.1 277.9 L 367.7 283.2 L 369.3 288.6 L 371.0 293.9 L 372.5 299.2 L 373.2 304.6 L 373.9 309.9 L 374.7 315.2 L 375.4 320.5 L 376.1 325.9 L 376.5 331.2 L 376.7 336.5 L 376.9 341.8 L 377.1 347.1 L 377.0 352.5 L 376.7 357.8 L 376.3 363.1 L 376.0 368.4 L 375.3 373.8 L 374.6 379.1 L 373.3 384.4 L 371.5 389.8 L 369.6 395.1 L 367.6 400.4 L 364.7 405.7 L 361.7 411.1 L 358.4 416.4 L 354.6 421.7 L 350.9 427.0 L 343.7 432.4 L 333.9 437.7 M 285.0 230.0 L 332.9 235.3 L 342.0 240.7 L 347.0 246.0 L 352.0 251.3 L 356.0 256.6 L 358.9 261.9 L 361.9 267.3 L 364.9 272.6 L 367.0 277.9 L 368.6 283.2 L 370.3 288.6 L 372.0 293.9 L 373.6 299.2 L 374.3 304.6 L 375.0 309.9 L 375.7 315.2 L 376.4 320.5 L 377.2 325.9 L 377.6 331.2 L 377.8 336.5 L 378.0 341.8 L 378.1 347.1 L 378.1 352.5 L 377.7 357.8 L 377.4 363.1 L 377.0 368.4 L 376.4 373.8 L 375.6 379.1 L 374.3 384.4 L 372.4 389.8 L 370.6 395.1 L 368.6 400.4 L 365.6 405.7 L 362.6 411.1 L 359.3 416.4 L 355.4 421.7 L 351.6 427.0 L 344.3 432.4 L 334.4 437.7 M 285.0 230.0 L 333.5 235.3 L 342.6 240.7 L 347.7 246.0 L 352.7 251.3 L 356.7 256.6 L 359.7 261.9 L 362.7 267.3 L 365.8 272.6 L 367.9 277.9 L 369.5 283.2 L 371.2 288.6 L 372.9 293.9 L 374.5 299.2 L 375.2 304.6 L 375.9 309.9 L 376.7 315.2 L 377.4 320.5 L 378.2 325.9 L 378.6 331.2 L 378.7 336.5 L 378.9 341.8 L 379.1 347.1 L 379.1 352.5 L 378.7 357.8 L 378.3 363.1 L 378.0 368.4 L 377.3 373.8 L 376.5 379.1 L 375.3 384.4 L 373.4 389.8 L 371.5 395.1 L 369.4 400.4 L 366.4 405.7 L 363.4 411.1 L 360.0 416.4 L 356.1 421.7 L 352.3 427.0 L 344.9 432.4 L 334.9 437.7 M 285.0 230.0 L 333.9 235.3 L 343.2 240.7 L 348.3 246.0 L 353.4 251.3 L 357.4 256.6 L 360.4 261.9 L 363.5 267.3 L 366.6 272.6 L 368.7 277.9 L 370.4 283.2 L 372.1 288.6 L 373.7 293.9 L 375.4 299.2 L 376.1 304.6 L 376.8 309.9 L 377.6 315.2 L 378.3 320.5 L 379.1 325.9 L 379.5 331.2 L 379.7 336.5 L 379.9 341.8 L 380.0 347.1 L 380.0 352.5 L 379.6 357.8 L 379.2 363.1 L 378.9 368.4 L 378.2 373.8 L 377.4 379.1 L 376.1 384.4 L 374.2 389.8 L 372.3 395.1 L 370.2 400.4 L 367.2 405.7 L 364.1 411.1 L 360.7 416.4 L 356.8 421.7 L 352.9 427.0 L 345.4 432.4 L 335.4 437.7 M 285.0 230.0 L 334.4 235.3 L 343.7 240.7 L 348.9 246.0 L 354.0 251.3 L 358.1 256.6 L 361.1 261.9 L 364.2 267.3 L 367.3 272.6 L 369.5 277.9 L 371.1 283.2 L 372.8 288.6 L 374.5 293.9 L 376.2 299.2 L 376.9 304.6 L 377.7 309.9 L 378.4 315.2 L 379.1 320.5 L 379.9 325.9 L 380.3 331.2 L 380.5 336.5 L 380.7 341.8 L 380.9 347.1 L 380.8 352.5 L 380.4 357.8 L 380.1 363.1 L 379.7 368.4 L 379.0 373.8 L 378.2 379.1 L 376.9 384.4 L 375.0 389.8 L 373.1 395.1 L 370.9 400.4 L 367.9 405.7 L 364.8 411.1 L 361.4 416.4 L 357.4 421.7 L 353.4 427.0 L 345.9 432.4 L 335.8 437.7 M 285.0 230.0 L 334.8 235.3 L 344.2 240.7 L 349.4 246.0 L 354.5 251.3 L 358.6 256.6 L 361.7 261.9 L 364.8 267.3 L 367.9 272.6 L 370.1 277.9 L 371.8 283.2 L 373.5 288.6 L 375.2 293.9 L 376.9 299.2 L 377.7 304.6 L 378.4 309.9 L 379.1 315.2 L 379.9 320.5 L 380.6 325.9 L 381.1 331.2 L 381.3 336.5 L 381.4 341.8 L 381.6 347.1 L 381.6 352.5 L 381.2 357.8 L 380.8 363.1 L 380.4 368.4 L 379.7 373.8 L 378.9 379.1 L 377.6 384.4 L 375.7 389.8 L 373.7 395.1 L 371.6 400.4 L 368.5 405.7 L 365.4 411.1 L 362.0 416.4 L 358.0 421.7 L 354.0 427.0 L 346.4 432.4 L 336.1 437.7 M 285.0 230.0 L 335.2 235.3 L 344.6 240.7 L 349.8 246.0 L 355.0 251.3 L 359.2 256.6 L 362.3 261.9 L 365.4 267.3 L 368.5 272.6 L 370.7 277.9 L 372.4 283.2 L 374.2 288.6 L 375.9 293.9 L 377.6 299.2 L 378.3 304.6 L 379.1 309.9 L 379.8 315.2 L 380.6 320.5 L 381.3 325.9 L 381.7 331.2 L 381.9 336.5 L 382.1 341.8 L 382.3 347.1 L 382.2 352.5 L 381.9 357.8 L 381.5 363.1 L 381.1 368.4 L 380.4 373.8 L 379.6 379.1 L 378.3 384.4 L 376.3 389.8 L 374.4 395.1 L 372.2 400.4 L 369.1 405.7 L 365.9 411.1 L 362.5 416.4 L 358.4 421.7 L 354.4 427.0 L 346.8 432.4 L 336.5 437.7 M 285.0 230.0 L 335.5 235.3 L 345.0 240.7 L 350.2 246.0 L 355.5 251.3 L 359.6 256.6 L 362.8 261.9 L 365.9 267.3 L 369.1 272.6 L 371.3 277.9 L 373.0 283.2 L 374.7 288.6 L 376.5 293.9 L 378.1 299.2 L 378.9 304.6 L 379.6 309.9 L 380.4 315.2 L 381.2 320.5 L 381.9 325.9 L 382.3 331.2 L 382.5 336.5 L 382.7 341.8 L 382.9 347.1 L 382.8 352.5 L 382.5 357.8 L 382.1 363.1 L 381.7 368.4 L 381.0 373.8 L 380.2 379.1 L 378.8 384.4 L 376.9 389.8 L 374.9 395.1 L 372.7 400.4 L 369.6 405.7 L 366.4 411.1 L 362.9 416.4 L 358.9 421.7 L 354.8 427.0 L 347.2 432.4 L 336.8 437.7 M 285.0 230.0 L 335.8 235.3 L 345.3 240.7 L 350.6 246.0 L 355.8 251.3 L 360.0 256.6 L 363.2 261.9 L 366.3 267.3 L 369.5 272.6 L 371.7 277.9 L 373.5 283.2 L 375.2 288.6 L 376.9 293.9 L 378.6 299.2 L 379.4 304.6 L 380.2 309.9 L 380.9 315.2 L 381.7 320.5 L 382.4 325.9 L 382.9 331.2 L 383.1 336.5 L 383.3 341.8 L 383.4 347.1 L 383.4 352.5 L 383.0 357.8 L 382.6 363.1 L 382.2 368.4 L 381.5 373.8 L 380.7 379.1 L 379.3 384.4 L 377.3 389.8 L 375.4 395.1 L 373.2 400.4 L 370.0 405.7 L 366.9 411.1 L 363.3 416.4 L 359.3 421.7 L 355.2 427.0 L 347.5 432.4 L 337.0 437.7 M 285.0 230.0 L 336.0 235.3 L 345.6 240.7 L 350.9 246.0 L 356.2 251.3 L 360.4 256.6 L 363.5 261.9 L 366.7 267.3 L 369.9 272.6 L 372.1 277.9 L 373.9 283.2 L 375.6 288.6 L 377.4 293.9 L 379.1 299.2 L 379.8 304.6 L 380.6 309.9 L 381.4 315.2 L 382.1 320.5 L 382.9 325.9 L 383.3 331.2 L 383.5 336.5 L 383.7 341.8 L 383.9 347.1 L 383.8 352.5 L 383.4 357.8 L 383.0 363.1 L 382.6 368.4 L 381.9 373.8 L 381.1 379.1 L 379.7 384.4 L 377.7 389.8 L 375.8 395.1 L 373.6 400.4 L 370.4 405.7 L 367.2 411.1 L 363.7 416.4 L 359.6 421.7 L 355.5 427.0 L 347.7 432.4 L 337.2 437.7 M 285.0 230.0 L 336.2 235.3 L 345.8 240.7 L 351.1 246.0 L 356.4 251.3 L 360.6 256.6 L 363.8 261.9 L 367.0 267.3 L 370.2 272.6 L 372.5 277.9 L 374.2 283.2 L 376.0 288.6 L 377.7 293.9 L 379.4 299.2 L 380.2 304.6 L 380.9 309.9 L 381.7 315.2 L 382.5 320.5 L 383.2 325.9 L 383.7 331.2 L 383.9 336.5 L 384.1 341.8 L 384.3 347.1 L 384.2 352.5 L 383.8 357.8 L 383.4 363.1 L 383.0 368.4 L 382.3 373.8 L 381.4 379.1 L 380.1 384.4 L 378.1 389.8 L 376.1 395.1 L 373.9 400.4 L 370.7 405.7 L 367.5 411.1 L 364.0 416.4 L 359.8 421.7 L 355.7 427.0 L 348.0 432.4 L 337.4 437.7 M 285.0 230.0 L 336.3 235.3 L 346.0 240.7 L 351.3 246.0 L 356.6 251.3 L 360.9 256.6 L 364.1 261.9 L 367.2 267.3 L 370.4 272.6 L 372.7 277.9 L 374.5 283.2 L 376.2 288.6 L 378.0 293.9 L 379.7 299.2 L 380.5 304.6 L 381.2 309.9 L 382.0 315.2 L 382.8 320.5 L 383.5 325.9 L 384.0 331.2 L 384.1 336.5 L 384.3 341.8 L 384.5 347.1 L 384.5 352.5 L 384.1 357.8 L 383.7 363.1 L 383.3 368.4 L 382.5 373.8 L 381.7 379.1 L 380.3 384.4 L 378.3 389.8 L 376.3 395.1 L 374.1 400.4 L 370.9 405.7 L 367.7 411.1 L 364.2 416.4 L 360.0 421.7 L 355.9 427.0 L 348.1 432.4 L 337.5 437.7 M 285.0 230.0 L 336.4 235.3 L 346.1 240.7 L 351.5 246.0 L 356.8 251.3 L 361.0 256.6 L 364.2 261.9 L 367.4 267.3 L 370.6 272.6 L 372.9 277.9 L 374.6 283.2 L 376.4 288.6 L 378.2 293.9 L 379.9 299.2 L 380.6 304.6 L 381.4 309.9 L 382.2 315.2 L 383.0 320.5 L 383.7 325.9 L 384.2 331.2 L 384.3 336.5 L 384.5 341.8 L 384.7 347.1 L 384.7 352.5 L 384.3 357.8 L 383.9 363.1 L 383.5 368.4 L 382.7 373.8 L 381.9 379.1 L 380.5 384.4 L 378.5 389.8 L 376.5 395.1 L 374.3 400.4 L 371.1 405.7 L 367.9 411.1 L 364.3 416.4 L 360.2 421.7 L 356.1 427.0 L 348.2 432.4 L 337.6 437.7 M 285.0 230.0 L 336.5 235.3 L 346.2 240.7 L 351.5 246.0 L 356.9 251.3 L 361.1 256.6 L 364.3 261.9 L 367.5 267.3 L 370.7 272.6 L 373.0 277.9 L 374.8 283.2 L 376.5 288.6 L 378.3 293.9 L 380.0 299.2 L 380.8 304.6 L 381.5 309.9 L 382.3 315.2 L 383.1 320.5 L 383.8 325.9 L 384.3 331.2 L 384.5 336.5 L 384.7 341.8 L 384.9 347.1 L 384.8 352.5 L 384.4 357.8 L 384.0 363.1 L 383.6 368.4 L 382.9 373.8 L 382.0 379.1 L 380.6 384.4 L 378.6 389.8 L 376.6 395.1 L 374.4 400.4 L 371.2 405.7 L 368.0 411.1 L 364.4 416.4 L 360.3 421.7 L 356.1 427.0 L 348.3 432.4 L 337.7 437.7" fill="none" stroke="#2a2a2a" stroke-width="0.5"/></g>
<ellipse cx="286" cy="378" rx="19" ry="6.5" fill="#000" fill-opacity="0.06" stroke="#000" stroke-width="2.5" stroke-opacity="0.07"/>
<path d="M 285.0 230.0 C 299.8 229.9 316.5 228.9 326.5 230.5 C 336.5 232.1 339.5 235.5 345.0 239.4 C 350.5 243.3 355.0 248.1 359.5 253.9 C 364.0 259.8 368.5 267.0 371.9 274.5 C 375.3 282.0 377.9 290.1 380.0 299.0 C 382.1 307.9 383.4 319.5 384.2 328.0 C 385.0 336.5 385.1 343.0 385.0 350.0 C 384.9 357.0 384.1 364.7 383.5 370.0 C 382.9 375.3 383.0 377.1 381.6 382.0 C 380.2 386.9 377.6 394.1 375.0 399.5 C 372.4 404.9 369.3 409.6 366.0 414.4 C 362.7 419.1 359.2 424.5 355.4 428.0 C 351.6 431.5 346.9 433.6 343.4 435.4 C 339.9 437.2 341.6 438.0 334.4 439.0 C 327.2 440.0 312.8 441.2 300.0 441.4 C 287.2 441.6 267.8 441.1 257.8 440.4 C 247.8 439.7 245.5 439.1 240.0 437.4 C 234.5 435.7 229.5 433.2 225.0 430.0 C 220.5 426.8 216.8 422.5 213.0 418.0 C 209.2 413.5 205.5 408.0 202.5 403.0 C 199.5 398.0 197.1 393.5 195.0 388.0 C 192.9 382.5 191.0 376.0 189.7 370.0 C 188.4 364.0 187.6 358.3 187.0 352.0 C 186.4 345.7 186.0 339.4 186.2 332.0 C 186.4 324.6 186.8 315.7 188.2 307.5 C 189.6 299.3 191.7 290.3 194.4 282.7 C 197.2 275.1 200.3 268.9 204.7 262.0 C 209.1 255.1 215.5 246.7 221.0 241.5 C 226.5 236.3 227.0 232.9 237.7 231.0 C 248.4 229.1 270.2 230.1 285.0 230.0 Z" fill="none" stroke="#000" stroke-width="1.8"/>
<path d="M 285.0 230.0 C 299.8 229.9 316.5 228.9 326.5 230.5 C 336.5 232.1 339.5 235.5 345.0 239.4 C 350.5 243.3 355.0 248.1 359.5 253.9 C 364.0 259.8 368.5 267.0 371.9 274.5 C 375.3 282.0 377.9 290.1 380.0 299.0 C 382.1 307.9 383.4 319.5 384.2 328.0 C 385.0 336.5 385.1 343.0 385.0 350.0 C 384.9 357.0 384.1 364.7 383.5 370.0 C 382.9 375.3 383.0 377.1 381.6 382.0 C 380.2 386.9 377.6 394.1 375.0 399.5 C 372.4 404.9 369.3 409.6 366.0 414.4 C 362.7 419.1 359.2 424.5 355.4 428.0 C 351.6 431.5 346.9 433.6 343.4 435.4 C 339.9 437.2 341.6 438.0 334.4 439.0 C 327.2 440.0 312.8 441.2 300.0 441.4 C 287.2 441.6 267.8 441.1 257.8 440.4 C 247.8 439.7 245.5 439.1 240.0 437.4 C 234.5 435.7 229.5 433.2 225.0 430.0 C 220.5 426.8 216.8 422.5 213.0 418.0 C 209.2 413.5 205.5 408.0 202.5 403.0 C 199.5 398.0 197.1 393.5 195.0 388.0 C 192.9 382.5 191.0 376.0 189.7 370.0 C 188.4 364.0 187.6 358.3 187.0 352.0 C 186.4 345.7 186.0 339.4 186.2 332.0 C 186.4 324.6 186.8 315.7 188.2 307.5 C 189.6 299.3 191.7 290.3 194.4 282.7 C 197.2 275.1 200.3 268.9 204.7 262.0 C 209.1 255.1 215.5 246.7 221.0 241.5 C 226.5 236.3 227.0 232.9 237.7 231.0 C 248.4 229.1 270.2 230.1 285.0 230.0 Z" fill="url(#bshade)" opacity="0.35"/>
<!-- leaves -->
<clipPath id="lc0"><path d="M 281.0 109.0 C 282.4 109.0 290.9 114.7 294.4 119.5 C 297.9 124.3 300.1 131.1 302.0 138.0 C 303.9 144.9 305.1 152.1 305.6 160.8 C 306.1 169.5 305.9 179.3 305.0 190.0 C 304.1 200.7 303.3 217.8 300.0 225.0 C 296.7 232.2 290.3 231.7 285.0 233.0 C 279.7 234.3 271.8 238.5 268.0 233.0 C 264.2 227.5 263.8 212.2 262.5 200.0 C 261.2 187.8 260.0 170.9 260.0 160.0 C 260.0 149.1 260.8 141.2 262.5 134.5 C 264.2 127.8 266.9 123.8 270.0 119.5 C 273.1 115.2 279.6 109.0 281.0 109.0 Z"/></clipPath>
<path d="M 281.0 109.0 C 282.4 109.0 290.9 114.7 294.4 119.5 C 297.9 124.3 300.1 131.1 302.0 138.0 C 303.9 144.9 305.1 152.1 305.6 160.8 C 306.1 169.5 305.9 179.3 305.0 190.0 C 304.1 200.7 303.3 217.8 300.0 225.0 C 296.7 232.2 290.3 231.7 285.0 233.0 C 279.7 234.3 271.8 238.5 268.0 233.0 C 264.2 227.5 263.8 212.2 262.5 200.0 C 261.2 187.8 260.0 170.9 260.0 160.0 C 260.0 149.1 260.8 141.2 262.5 134.5 C 264.2 127.8 266.9 123.8 270.0 119.5 C 273.1 115.2 279.6 109.0 281.0 109.0 Z" fill="#f6f6f6"/>
<g clip-path="url(#lc0)"><path d="M 281.0 107.0 C 262.1 124.3 260.0 181.9 268.0 233.0 M 281.0 107.0 C 266.7 124.3 265.1 182.0 269.9 233.0 M 281.0 107.0 C 271.2 124.4 270.1 182.0 271.8 233.0 M 281.0 107.0 C 275.8 124.4 275.2 182.1 273.7 233.0 M 281.0 107.0 C 280.3 124.4 280.3 182.1 275.6 233.0 M 281.0 107.0 C 284.9 124.4 285.3 182.2 277.4 233.0 M 281.0 107.0 C 289.5 124.5 290.4 182.3 279.3 233.0 M 281.0 107.0 C 294.0 124.5 295.5 182.3 281.2 233.0 M 281.0 107.0 C 298.6 124.5 300.5 182.4 283.1 233.0 M 281.0 107.0 C 303.1 124.5 305.6 182.5 285.0 233.0 M 180 109.0 Q 281.0 113.0 400 109.0 M 180 112.6 Q 281.0 116.6 400 112.6 M 180 116.2 Q 281.0 120.2 400 116.2 M 180 119.8 Q 281.0 123.8 400 119.8 M 180 123.4 Q 281.0 127.4 400 123.4 M 180 127.0 Q 281.0 131.0 400 127.0 M 180 130.6 Q 281.0 134.6 400 130.6 M 180 134.2 Q 281.0 138.2 400 134.2 M 180 137.8 Q 281.0 141.8 400 137.8 M 180 141.4 Q 281.0 145.4 400 141.4 M 180 145.0 Q 281.0 149.0 400 145.0 M 180 148.6 Q 281.0 152.6 400 148.6 M 180 152.2 Q 281.0 156.2 400 152.2 M 180 155.8 Q 281.0 159.8 400 155.8 M 180 159.4 Q 281.0 163.4 400 159.4 M 180 163.0 Q 281.0 167.0 400 163.0 M 180 166.6 Q 281.0 170.6 400 166.6 M 180 170.2 Q 281.0 174.2 400 170.2 M 180 173.8 Q 281.0 177.8 400 173.8 M 180 177.4 Q 281.0 181.4 400 177.4 M 180 181.0 Q 281.0 185.0 400 181.0 M 180 184.6 Q 281.0 188.6 400 184.6 M 180 188.2 Q 281.0 192.2 400 188.2 M 180 191.8 Q 281.0 195.8 400 191.8 M 180 195.4 Q 281.0 199.4 400 195.4 M 180 199.0 Q 281.0 203.0 400 199.0 M 180 202.6 Q 281.0 206.6 400 202.6 M 180 206.2 Q 281.0 210.2 400 206.2 M 180 209.8 Q 281.0 213.8 400 209.8 M 180 213.4 Q 281.0 217.4 400 213.4 M 180 217.0 Q 281.0 221.0 400 217.0 M 180 220.6 Q 281.0 224.6 400 220.6 M 180 224.2 Q 281.0 228.2 400 224.2 M 180 227.8 Q 281.0 231.8 400 227.8 M 180 231.4 Q 281.0 235.4 400 231.4" fill="none" stroke="#3a3a3a" stroke-width="0.45"/><path d="M 281.0 109.0 C 282.4 109.0 290.9 114.7 294.4 119.5 C 297.9 124.3 300.1 131.1 302.0 138.0 C 303.9 144.9 305.1 152.1 305.6 160.8 C 306.1 169.5 305.9 179.3 305.0 190.0 C 304.1 200.7 303.3 217.8 300.0 225.0 C 296.7 232.2 290.3 231.7 285.0 233.0 C 279.7 234.3 271.8 238.5 268.0 233.0 C 264.2 227.5 263.8 212.2 262.5 200.0 C 261.2 187.8 260.0 170.9 260.0 160.0 C 260.0 149.1 260.8 141.2 262.5 134.5 C 264.2 127.8 266.9 123.8 270.0 119.5 C 273.1 115.2 279.6 109.0 281.0 109.0 Z" fill="url(#lshade)"/></g>
<path d="M 281.0 109.0 C 282.4 109.0 290.9 114.7 294.4 119.5 C 297.9 124.3 300.1 131.1 302.0 138.0 C 303.9 144.9 305.1 152.1 305.6 160.8 C 306.1 169.5 305.9 179.3 305.0 190.0 C 304.1 200.7 303.3 217.8 300.0 225.0 C 296.7 232.2 290.3 231.7 285.0 233.0 C 279.7 234.3 271.8 238.5 268.0 233.0 C 264.2 227.5 263.8 212.2 262.5 200.0 C 261.2 187.8 260.0 170.9 260.0 160.0 C 260.0 149.1 260.8 141.2 262.5 134.5 C 264.2 127.8 266.9 123.8 270.0 119.5 C 273.1 115.2 279.6 109.0 281.0 109.0 Z" fill="none" stroke="#151515" stroke-width="0.8"/>
<clipPath id="lc1"><path d="M 303.8 119.0 C 304.3 119.0 307.8 121.7 309.0 126.0 C 310.2 130.3 311.5 138.5 311.0 145.0 C 310.5 151.5 308.2 161.7 306.0 165.0 C 303.8 168.3 299.5 169.2 298.0 165.0 C 296.5 160.8 296.8 146.5 297.0 140.0 C 297.2 133.5 297.9 129.5 299.0 126.0 C 300.1 122.5 303.2 119.0 303.8 119.0 Z"/></clipPath>
<path d="M 303.8 119.0 C 304.3 119.0 307.8 121.7 309.0 126.0 C 310.2 130.3 311.5 138.5 311.0 145.0 C 310.5 151.5 308.2 161.7 306.0 165.0 C 303.8 168.3 299.5 169.2 298.0 165.0 C 296.5 160.8 296.8 146.5 297.0 140.0 C 297.2 133.5 297.9 129.5 299.0 126.0 C 300.1 122.5 303.2 119.0 303.8 119.0 Z" fill="#f6f6f6"/>
<g clip-path="url(#lc1)"><path d="M 303.8 117.0 C 297.7 125.3 297.0 147.5 298.0 165.0 M 303.8 117.0 C 301.9 125.8 301.7 148.7 300.7 165.0 M 303.8 117.0 C 306.1 126.3 306.3 149.8 303.3 165.0 M 303.8 117.0 C 310.3 126.8 311.0 151.0 306.0 165.0 M 180 119.0 Q 303.8 123.0 400 119.0 M 180 121.4 Q 303.8 125.4 400 121.4 M 180 123.8 Q 303.8 127.8 400 123.8 M 180 126.2 Q 303.8 130.2 400 126.2 M 180 128.6 Q 303.8 132.6 400 128.6 M 180 131.0 Q 303.8 135.0 400 131.0 M 180 133.4 Q 303.8 137.4 400 133.4 M 180 135.8 Q 303.8 139.8 400 135.8 M 180 138.2 Q 303.8 142.2 400 138.2 M 180 140.6 Q 303.8 144.6 400 140.6 M 180 143.0 Q 303.8 147.0 400 143.0 M 180 145.4 Q 303.8 149.4 400 145.4 M 180 147.8 Q 303.8 151.8 400 147.8 M 180 150.2 Q 303.8 154.2 400 150.2 M 180 152.6 Q 303.8 156.6 400 152.6 M 180 155.0 Q 303.8 159.0 400 155.0 M 180 157.4 Q 303.8 161.4 400 157.4 M 180 159.8 Q 303.8 163.8 400 159.8 M 180 162.2 Q 303.8 166.2 400 162.2 M 180 164.6 Q 303.8 168.6 400 164.6" fill="none" stroke="#3a3a3a" stroke-width="0.45"/><path d="M 303.8 119.0 C 304.3 119.0 307.8 121.7 309.0 126.0 C 310.2 130.3 311.5 138.5 311.0 145.0 C 310.5 151.5 308.2 161.7 306.0 165.0 C 303.8 168.3 299.5 169.2 298.0 165.0 C 296.5 160.8 296.8 146.5 297.0 140.0 C 297.2 133.5 297.9 129.5 299.0 126.0 C 300.1 122.5 303.2 119.0 303.8 119.0 Z" fill="url(#lshade)"/></g>
<path d="M 303.8 119.0 C 304.3 119.0 307.8 121.7 309.0 126.0 C 310.2 130.3 311.5 138.5 311.0 145.0 C 310.5 151.5 308.2 161.7 306.0 165.0 C 303.8 168.3 299.5 169.2 298.0 165.0 C 296.5 160.8 296.8 146.5 297.0 140.0 C 297.2 133.5 297.9 129.5 299.0 126.0 C 300.1 122.5 303.2 119.0 303.8 119.0 Z" fill="none" stroke="#151515" stroke-width="0.8"/>
<clipPath id="lc2"><path d="M 313.0 113.0 C 313.5 113.0 316.7 115.5 318.0 120.0 C 319.3 124.5 321.3 133.3 321.0 140.0 C 320.7 146.7 318.2 156.7 316.0 160.0 C 313.8 163.3 309.5 164.2 308.0 160.0 C 306.5 155.8 306.8 141.7 307.0 135.0 C 307.2 128.3 308.0 123.7 309.0 120.0 C 310.0 116.3 312.5 113.0 313.0 113.0 Z"/></clipPath>
<path d="M 313.0 113.0 C 313.5 113.0 316.7 115.5 318.0 120.0 C 319.3 124.5 321.3 133.3 321.0 140.0 C 320.7 146.7 318.2 156.7 316.0 160.0 C 313.8 163.3 309.5 164.2 308.0 160.0 C 306.5 155.8 306.8 141.7 307.0 135.0 C 307.2 128.3 308.0 123.7 309.0 120.0 C 310.0 116.3 312.5 113.0 313.0 113.0 Z" fill="#f6f6f6"/>
<g clip-path="url(#lc2)"><path d="M 313.0 111.0 C 307.6 119.6 307.0 142.5 308.0 160.0 M 313.0 111.0 C 311.8 120.1 311.7 143.7 310.7 160.0 M 313.0 111.0 C 316.0 120.6 316.3 144.8 313.3 160.0 M 313.0 111.0 C 320.2 121.1 321.0 146.0 316.0 160.0 M 180 113.0 Q 313.0 117.0 400 113.0 M 180 115.4 Q 313.0 119.4 400 115.4 M 180 117.8 Q 313.0 121.8 400 117.8 M 180 120.2 Q 313.0 124.2 400 120.2 M 180 122.6 Q 313.0 126.6 400 122.6 M 180 125.0 Q 313.0 129.0 400 125.0 M 180 127.4 Q 313.0 131.4 400 127.4 M 180 129.8 Q 313.0 133.8 400 129.8 M 180 132.2 Q 313.0 136.2 400 132.2 M 180 134.6 Q 313.0 138.6 400 134.6 M 180 137.0 Q 313.0 141.0 400 137.0 M 180 139.4 Q 313.0 143.4 400 139.4 M 180 141.8 Q 313.0 145.8 400 141.8 M 180 144.2 Q 313.0 148.2 400 144.2 M 180 146.6 Q 313.0 150.6 400 146.6 M 180 149.0 Q 313.0 153.0 400 149.0 M 180 151.4 Q 313.0 155.4 400 151.4 M 180 153.8 Q 313.0 157.8 400 153.8 M 180 156.2 Q 313.0 160.2 400 156.2 M 180 158.6 Q 313.0 162.6 400 158.6" fill="none" stroke="#3a3a3a" stroke-width="0.45"/><path d="M 313.0 113.0 C 313.5 113.0 316.7 115.5 318.0 120.0 C 319.3 124.5 321.3 133.3 321.0 140.0 C 320.7 146.7 318.2 156.7 316.0 160.0 C 313.8 163.3 309.5 164.2 308.0 160.0 C 306.5 155.8 306.8 141.7 307.0 135.0 C 307.2 128.3 308.0 123.7 309.0 120.0 C 310.0 116.3 312.5 113.0 313.0 113.0 Z" fill="url(#lshade)"/></g>
<path d="M 313.0 113.0 C 313.5 113.0 316.7 115.5 318.0 120.0 C 319.3 124.5 321.3 133.3 321.0 140.0 C 320.7 146.7 318.2 156.7 316.0 160.0 C 313.8 163.3 309.5 164.2 308.0 160.0 C 306.5 155.8 306.8 141.7 307.0 135.0 C 307.2 128.3 308.0 123.7 309.0 120.0 C 310.0 116.3 312.5 113.0 313.0 113.0 Z" fill="none" stroke="#151515" stroke-width="0.8"/>
<clipPath id="lc3"><path d="M 250.0 115.0 C 250.7 114.5 254.0 116.7 255.0 120.0 C 256.0 123.3 256.8 128.3 256.0 135.0 C 255.2 141.7 252.3 155.0 250.0 160.0 C 247.7 165.0 243.8 166.7 242.0 165.0 C 240.2 163.3 238.8 156.2 239.0 150.0 C 239.2 143.8 241.2 133.8 243.0 128.0 C 244.8 122.2 249.3 115.5 250.0 115.0 Z"/></clipPath>
<path d="M 250.0 115.0 C 250.7 114.5 254.0 116.7 255.0 120.0 C 256.0 123.3 256.8 128.3 256.0 135.0 C 255.2 141.7 252.3 155.0 250.0 160.0 C 247.7 165.0 243.8 166.7 242.0 165.0 C 240.2 163.3 238.8 156.2 239.0 150.0 C 239.2 143.8 241.2 133.8 243.0 128.0 C 244.8 122.2 249.3 115.5 250.0 115.0 Z" fill="#f6f6f6"/>
<g clip-path="url(#lc3)"><path d="M 250.0 113.0 C 240.1 125.5 239.0 154.5 242.0 165.0 M 250.0 113.0 C 245.2 124.0 244.7 151.0 242.0 165.0 M 250.0 113.0 C 250.3 122.5 250.3 147.5 242.0 165.0 M 250.0 113.0 C 255.4 121.0 256.0 144.0 242.0 165.0 M 180 115.0 Q 250.0 119.0 400 115.0 M 180 117.4 Q 250.0 121.4 400 117.4 M 180 119.8 Q 250.0 123.8 400 119.8 M 180 122.2 Q 250.0 126.2 400 122.2 M 180 124.6 Q 250.0 128.6 400 124.6 M 180 127.0 Q 250.0 131.0 400 127.0 M 180 129.4 Q 250.0 133.4 400 129.4 M 180 131.8 Q 250.0 135.8 400 131.8 M 180 134.2 Q 250.0 138.2 400 134.2 M 180 136.6 Q 250.0 140.6 400 136.6 M 180 139.0 Q 250.0 143.0 400 139.0 M 180 141.4 Q 250.0 145.4 400 141.4 M 180 143.8 Q 250.0 147.8 400 143.8 M 180 146.2 Q 250.0 150.2 400 146.2 M 180 148.6 Q 250.0 152.6 400 148.6 M 180 151.0 Q 250.0 155.0 400 151.0 M 180 153.4 Q 250.0 157.4 400 153.4 M 180 155.8 Q 250.0 159.8 400 155.8 M 180 158.2 Q 250.0 162.2 400 158.2 M 180 160.6 Q 250.0 164.6 400 160.6 M 180 163.0 Q 250.0 167.0 400 163.0 M 180 165.4 Q 250.0 169.4 400 165.4" fill="none" stroke="#3a3a3a" stroke-width="0.45"/><path d="M 250.0 115.0 C 250.7 114.5 254.0 116.7 255.0 120.0 C 256.0 123.3 256.8 128.3 256.0 135.0 C 255.2 141.7 252.3 155.0 250.0 160.0 C 247.7 165.0 243.8 166.7 242.0 165.0 C 240.2 163.3 238.8 156.2 239.0 150.0 C 239.2 143.8 241.2 133.8 243.0 128.0 C 244.8 122.2 249.3 115.5 250.0 115.0 Z" fill="url(#lshade)"/></g>
<path d="M 250.0 115.0 C 250.7 114.5 254.0 116.7 255.0 120.0 C 256.0 123.3 256.8 128.3 256.0 135.0 C 255.2 141.7 252.3 155.0 250.0 160.0 C 247.7 165.0 243.8 166.7 242.0 165.0 C 240.2 163.3 238.8 156.2 239.0 150.0 C 239.2 143.8 241.2 133.8 243.0 128.0 C 244.8 122.2 249.3 115.5 250.0 115.0 Z" fill="none" stroke="#151515" stroke-width="0.8"/>
<clipPath id="lc4"><path d="M 230.6 117.6 C 231.7 117.5 237.4 125.4 240.0 130.8 C 242.6 136.2 244.3 141.8 246.0 150.0 C 247.7 158.2 249.0 169.2 250.0 180.0 C 251.0 190.8 252.3 206.3 252.0 215.0 C 251.7 223.7 251.3 229.2 248.0 232.0 C 244.7 234.8 236.8 234.5 232.0 232.0 C 227.2 229.5 222.7 222.7 219.4 217.0 C 216.1 211.3 213.6 204.9 212.0 198.0 C 210.4 191.1 209.8 183.3 210.0 175.8 C 210.2 168.3 211.2 160.2 213.0 153.0 C 214.8 145.8 218.1 138.5 221.0 132.6 C 223.9 126.7 229.5 117.7 230.6 117.6 Z"/></clipPath>
<path d="M 230.6 117.6 C 231.7 117.5 237.4 125.4 240.0 130.8 C 242.6 136.2 244.3 141.8 246.0 150.0 C 247.7 158.2 249.0 169.2 250.0 180.0 C 251.0 190.8 252.3 206.3 252.0 215.0 C 251.7 223.7 251.3 229.2 248.0 232.0 C 244.7 234.8 236.8 234.5 232.0 232.0 C 227.2 229.5 222.7 222.7 219.4 217.0 C 216.1 211.3 213.6 204.9 212.0 198.0 C 210.4 191.1 209.8 183.3 210.0 175.8 C 210.2 168.3 211.2 160.2 213.0 153.0 C 214.8 145.8 218.1 138.5 221.0 132.6 C 223.9 126.7 229.5 117.7 230.6 117.6 Z" fill="#f6f6f6"/>
<g clip-path="url(#lc4)"><path d="M 230.6 115.6 C 212.1 135.1 210.0 192.7 232.0 232.0 M 230.6 115.6 C 216.3 136.4 214.7 195.7 233.8 232.0 M 230.6 115.6 C 220.5 137.7 219.3 198.8 235.6 232.0 M 230.6 115.6 C 224.7 139.0 224.0 201.8 237.3 232.0 M 230.6 115.6 C 228.9 140.3 228.7 204.9 239.1 232.0 M 230.6 115.6 C 233.1 141.6 233.3 207.9 240.9 232.0 M 230.6 115.6 C 237.3 142.9 238.0 211.0 242.7 232.0 M 230.6 115.6 C 241.5 144.2 242.7 214.0 244.4 232.0 M 230.6 115.6 C 245.7 145.5 247.3 217.1 246.2 232.0 M 230.6 115.6 C 249.9 146.8 252.0 220.1 248.0 232.0 M 180 117.6 Q 230.6 121.6 400 117.6 M 180 121.2 Q 230.6 125.2 400 121.2 M 180 124.8 Q 230.6 128.8 400 124.8 M 180 128.4 Q 230.6 132.4 400 128.4 M 180 132.0 Q 230.6 136.0 400 132.0 M 180 135.6 Q 230.6 139.6 400 135.6 M 180 139.2 Q 230.6 143.2 400 139.2 M 180 142.8 Q 230.6 146.8 400 142.8 M 180 146.4 Q 230.6 150.4 400 146.4 M 180 150.0 Q 230.6 154.0 400 150.0 M 180 153.6 Q 230.6 157.6 400 153.6 M 180 157.2 Q 230.6 161.2 400 157.2 M 180 160.8 Q 230.6 164.8 400 160.8 M 180 164.4 Q 230.6 168.4 400 164.4 M 180 168.0 Q 230.6 172.0 400 168.0 M 180 171.6 Q 230.6 175.6 400 171.6 M 180 175.2 Q 230.6 179.2 400 175.2 M 180 178.8 Q 230.6 182.8 400 178.8 M 180 182.4 Q 230.6 186.4 400 182.4 M 180 186.0 Q 230.6 190.0 400 186.0 M 180 189.6 Q 230.6 193.6 400 189.6 M 180 193.2 Q 230.6 197.2 400 193.2 M 180 196.8 Q 230.6 200.8 400 196.8 M 180 200.4 Q 230.6 204.4 400 200.4 M 180 204.0 Q 230.6 208.0 400 204.0 M 180 207.6 Q 230.6 211.6 400 207.6 M 180 211.2 Q 230.6 215.2 400 211.2 M 180 214.8 Q 230.6 218.8 400 214.8 M 180 218.4 Q 230.6 222.4 400 218.4 M 180 222.0 Q 230.6 226.0 400 222.0 M 180 225.6 Q 230.6 229.6 400 225.6 M 180 229.2 Q 230.6 233.2 400 229.2 M 180 232.8 Q 230.6 236.8 400 232.8" fill="none" stroke="#3a3a3a" stroke-width="0.45"/><path d="M 230.6 117.6 C 231.7 117.5 237.4 125.4 240.0 130.8 C 242.6 136.2 244.3 141.8 246.0 150.0 C 247.7 158.2 249.0 169.2 250.0 180.0 C 251.0 190.8 252.3 206.3 252.0 215.0 C 251.7 223.7 251.3 229.2 248.0 232.0 C 244.7 234.8 236.8 234.5 232.0 232.0 C 227.2 229.5 222.7 222.7 219.4 217.0 C 216.1 211.3 213.6 204.9 212.0 198.0 C 210.4 191.1 209.8 183.3 210.0 175.8 C 210.2 168.3 211.2 160.2 213.0 153.0 C 214.8 145.8 218.1 138.5 221.0 132.6 C 223.9 126.7 229.5 117.7 230.6 117.6 Z" fill="url(#lshade)"/></g>
<path d="M 230.6 117.6 C 231.7 117.5 237.4 125.4 240.0 130.8 C 242.6 136.2 244.3 141.8 246.0 150.0 C 247.7 158.2 249.0 169.2 250.0 180.0 C 251.0 190.8 252.3 206.3 252.0 215.0 C 251.7 223.7 251.3 229.2 248.0 232.0 C 244.7 234.8 236.8 234.5 232.0 232.0 C 227.2 229.5 222.7 222.7 219.4 217.0 C 216.1 211.3 213.6 204.9 212.0 198.0 C 210.4 191.1 209.8 183.3 210.0 175.8 C 210.2 168.3 211.2 160.2 213.0 153.0 C 214.8 145.8 218.1 138.5 221.0 132.6 C 223.9 126.7 229.5 117.7 230.6 117.6 Z" fill="none" stroke="#151515" stroke-width="0.8"/>
<clipPath id="lc5"><path d="M 204.4 145.8 C 204.9 145.1 208.6 147.3 210.0 153.0 C 211.4 158.7 211.7 171.3 213.0 180.0 C 214.3 188.7 214.5 196.5 218.0 205.0 C 221.5 213.5 232.0 226.3 234.0 231.0 C 236.0 235.7 233.1 235.3 230.0 233.0 C 226.9 230.7 219.9 223.4 215.6 217.0 C 211.3 210.6 206.9 203.2 204.4 194.5 C 201.9 185.8 200.6 172.6 200.6 164.5 C 200.6 156.4 203.9 146.5 204.4 145.8 Z"/></clipPath>
<path d="M 204.4 145.8 C 204.9 145.1 208.6 147.3 210.0 153.0 C 211.4 158.7 211.7 171.3 213.0 180.0 C 214.3 188.7 214.5 196.5 218.0 205.0 C 221.5 213.5 232.0 226.3 234.0 231.0 C 236.0 235.7 233.1 235.3 230.0 233.0 C 226.9 230.7 219.9 223.4 215.6 217.0 C 211.3 210.6 206.9 203.2 204.4 194.5 C 201.9 185.8 200.6 172.6 200.6 164.5 C 200.6 156.4 203.9 146.5 204.4 145.8 Z" fill="#f6f6f6"/>
<g clip-path="url(#lc5)"><path d="M 204.4 143.8 C 201.0 151.4 200.6 185.1 230.0 233.0 M 204.4 143.8 C 211.0 158.1 211.7 200.6 231.3 233.0 M 204.4 143.8 C 221.0 164.7 222.9 216.1 232.7 233.0 M 204.4 143.8 C 231.0 171.4 234.0 231.6 234.0 233.0 M 180 145.8 Q 204.4 149.8 400 145.8 M 180 148.2 Q 204.4 152.2 400 148.2 M 180 150.6 Q 204.4 154.6 400 150.6 M 180 153.0 Q 204.4 157.0 400 153.0 M 180 155.4 Q 204.4 159.4 400 155.4 M 180 157.8 Q 204.4 161.8 400 157.8 M 180 160.2 Q 204.4 164.2 400 160.2 M 180 162.6 Q 204.4 166.6 400 162.6 M 180 165.0 Q 204.4 169.0 400 165.0 M 180 167.4 Q 204.4 171.4 400 167.4 M 180 169.8 Q 204.4 173.8 400 169.8 M 180 172.2 Q 204.4 176.2 400 172.2 M 180 174.6 Q 204.4 178.6 400 174.6 M 180 177.0 Q 204.4 181.0 400 177.0 M 180 179.4 Q 204.4 183.4 400 179.4 M 180 181.8 Q 204.4 185.8 400 181.8 M 180 184.2 Q 204.4 188.2 400 184.2 M 180 186.6 Q 204.4 190.6 400 186.6 M 180 189.0 Q 204.4 193.0 400 189.0 M 180 191.4 Q 204.4 195.4 400 191.4 M 180 193.8 Q 204.4 197.8 400 193.8 M 180 196.2 Q 204.4 200.2 400 196.2 M 180 198.6 Q 204.4 202.6 400 198.6 M 180 201.0 Q 204.4 205.0 400 201.0 M 180 203.4 Q 204.4 207.4 400 203.4 M 180 205.8 Q 204.4 209.8 400 205.8 M 180 208.2 Q 204.4 212.2 400 208.2 M 180 210.6 Q 204.4 214.6 400 210.6 M 180 213.0 Q 204.4 217.0 400 213.0 M 180 215.4 Q 204.4 219.4 400 215.4 M 180 217.8 Q 204.4 221.8 400 217.8 M 180 220.2 Q 204.4 224.2 400 220.2 M 180 222.6 Q 204.4 226.6 400 222.6 M 180 225.0 Q 204.4 229.0 400 225.0 M 180 227.4 Q 204.4 231.4 400 227.4 M 180 229.8 Q 204.4 233.8 400 229.8 M 180 232.2 Q 204.4 236.2 400 232.2" fill="none" stroke="#3a3a3a" stroke-width="0.45"/><path d="M 204.4 145.8 C 204.9 145.1 208.6 147.3 210.0 153.0 C 211.4 158.7 211.7 171.3 213.0 180.0 C 214.3 188.7 214.5 196.5 218.0 205.0 C 221.5 213.5 232.0 226.3 234.0 231.0 C 236.0 235.7 233.1 235.3 230.0 233.0 C 226.9 230.7 219.9 223.4 215.6 217.0 C 211.3 210.6 206.9 203.2 204.4 194.5 C 201.9 185.8 200.6 172.6 200.6 164.5 C 200.6 156.4 203.9 146.5 204.4 145.8 Z" fill="url(#lshade)"/></g>
<path d="M 204.4 145.8 C 204.9 145.1 208.6 147.3 210.0 153.0 C 211.4 158.7 211.7 171.3 213.0 180.0 C 214.3 188.7 214.5 196.5 218.0 205.0 C 221.5 213.5 232.0 226.3 234.0 231.0 C 236.0 235.7 233.1 235.3 230.0 233.0 C 226.9 230.7 219.9 223.4 215.6 217.0 C 211.3 210.6 206.9 203.2 204.4 194.5 C 201.9 185.8 200.6 172.6 200.6 164.5 C 200.6 156.4 203.9 146.5 204.4 145.8 Z" fill="none" stroke="#151515" stroke-width="0.8"/>
<clipPath id="lc6"><path d="M 324.4 113.9 C 325.9 113.7 333.7 120.5 337.5 127.0 C 341.3 133.5 344.8 144.2 347.0 153.0 C 349.2 161.8 350.9 170.7 350.6 179.5 C 350.3 188.3 348.1 198.1 345.0 205.8 C 341.9 213.6 336.5 221.5 332.0 226.0 C 327.5 230.5 323.3 231.8 318.0 233.0 C 312.7 234.2 304.2 238.2 300.0 233.0 C 295.8 227.8 293.4 210.9 292.5 202.0 C 291.6 193.1 293.1 187.0 294.4 179.5 C 295.6 172.0 297.2 165.1 300.0 157.0 C 302.8 148.9 306.9 138.0 311.0 130.8 C 315.1 123.6 322.9 114.1 324.4 113.9 Z"/></clipPath>
<path d="M 324.4 113.9 C 325.9 113.7 333.7 120.5 337.5 127.0 C 341.3 133.5 344.8 144.2 347.0 153.0 C 349.2 161.8 350.9 170.7 350.6 179.5 C 350.3 188.3 348.1 198.1 345.0 205.8 C 341.9 213.6 336.5 221.5 332.0 226.0 C 327.5 230.5 323.3 231.8 318.0 233.0 C 312.7 234.2 304.2 238.2 300.0 233.0 C 295.8 227.8 293.4 210.9 292.5 202.0 C 291.6 193.1 293.1 187.0 294.4 179.5 C 295.6 172.0 297.2 165.1 300.0 157.0 C 302.8 148.9 306.9 138.0 311.0 130.8 C 315.1 123.6 322.9 114.1 324.4 113.9 Z" fill="#f6f6f6"/>
<g clip-path="url(#lc6)"><path d="M 324.4 111.9 C 295.7 140.3 292.5 211.3 300.0 233.0 M 324.4 111.9 C 300.0 139.8 297.3 210.0 301.5 233.0 M 324.4 111.9 C 304.4 139.2 302.2 208.7 303.0 233.0 M 324.4 111.9 C 308.8 138.6 307.0 207.4 304.5 233.0 M 324.4 111.9 C 313.1 138.1 311.9 206.1 306.0 233.0 M 324.4 111.9 C 317.5 137.5 316.7 204.7 307.5 233.0 M 324.4 111.9 C 321.8 137.0 321.6 203.4 309.0 233.0 M 324.4 111.9 C 326.2 136.4 326.4 202.1 310.5 233.0 M 324.4 111.9 C 330.6 135.8 331.2 200.8 312.0 233.0 M 324.4 111.9 C 334.9 135.3 336.1 199.5 313.5 233.0 M 324.4 111.9 C 339.3 134.7 340.9 198.2 315.0 233.0 M 324.4 111.9 C 343.6 134.1 345.8 196.9 316.5 233.0 M 324.4 111.9 C 348.0 133.6 350.6 195.6 318.0 233.0 M 180 113.9 Q 324.4 117.9 400 113.9 M 180 117.5 Q 324.4 121.5 400 117.5 M 180 121.1 Q 324.4 125.1 400 121.1 M 180 124.7 Q 324.4 128.7 400 124.7 M 180 128.3 Q 324.4 132.3 400 128.3 M 180 131.9 Q 324.4 135.9 400 131.9 M 180 135.5 Q 324.4 139.5 400 135.5 M 180 139.1 Q 324.4 143.1 400 139.1 M 180 142.7 Q 324.4 146.7 400 142.7 M 180 146.3 Q 324.4 150.3 400 146.3 M 180 149.9 Q 324.4 153.9 400 149.9 M 180 153.5 Q 324.4 157.5 400 153.5 M 180 157.1 Q 324.4 161.1 400 157.1 M 180 160.7 Q 324.4 164.7 400 160.7 M 180 164.3 Q 324.4 168.3 400 164.3 M 180 167.9 Q 324.4 171.9 400 167.9 M 180 171.5 Q 324.4 175.5 400 171.5 M 180 175.1 Q 324.4 179.1 400 175.1 M 180 178.7 Q 324.4 182.7 400 178.7 M 180 182.3 Q 324.4 186.3 400 182.3 M 180 185.9 Q 324.4 189.9 400 185.9 M 180 189.5 Q 324.4 193.5 400 189.5 M 180 193.1 Q 324.4 197.1 400 193.1 M 180 196.7 Q 324.4 200.7 400 196.7 M 180 200.3 Q 324.4 204.3 400 200.3 M 180 203.9 Q 324.4 207.9 400 203.9 M 180 207.5 Q 324.4 211.5 400 207.5 M 180 211.1 Q 324.4 215.1 400 211.1 M 180 214.7 Q 324.4 218.7 400 214.7 M 180 218.3 Q 324.4 222.3 400 218.3 M 180 221.9 Q 324.4 225.9 400 221.9 M 180 225.5 Q 324.4 229.5 400 225.5 M 180 229.1 Q 324.4 233.1 400 229.1 M 180 232.7 Q 324.4 236.7 400 232.7" fill="none" stroke="#3a3a3a" stroke-width="0.45"/><path d="M 324.4 113.9 C 325.9 113.7 333.7 120.5 337.5 127.0 C 341.3 133.5 344.8 144.2 347.0 153.0 C 349.2 161.8 350.9 170.7 350.6 179.5 C 350.3 188.3 348.1 198.1 345.0 205.8 C 341.9 213.6 336.5 221.5 332.0 226.0 C 327.5 230.5 323.3 231.8 318.0 233.0 C 312.7 234.2 304.2 238.2 300.0 233.0 C 295.8 227.8 293.4 210.9 292.5 202.0 C 291.6 193.1 293.1 187.0 294.4 179.5 C 295.6 172.0 297.2 165.1 300.0 157.0 C 302.8 148.9 306.9 138.0 311.0 130.8 C 315.1 123.6 322.9 114.1 324.4 113.9 Z" fill="url(#lshade)"/></g>
<path d="M 324.4 113.9 C 325.9 113.7 333.7 120.5 337.5 127.0 C 341.3 133.5 344.8 144.2 347.0 153.0 C 349.2 161.8 350.9 170.7 350.6 179.5 C 350.3 188.3 348.1 198.1 345.0 205.8 C 341.9 213.6 336.5 221.5 332.0 226.0 C 327.5 230.5 323.3 231.8 318.0 233.0 C 312.7 234.2 304.2 238.2 300.0 233.0 C 295.8 227.8 293.4 210.9 292.5 202.0 C 291.6 193.1 293.1 187.0 294.4 179.5 C 295.6 172.0 297.2 165.1 300.0 157.0 C 302.8 148.9 306.9 138.0 311.0 130.8 C 315.1 123.6 322.9 114.1 324.4 113.9 Z" fill="none" stroke="#151515" stroke-width="0.8"/>
<clipPath id="lc7"><path d="M 360.0 136.4 C 360.8 136.7 364.4 142.3 365.6 147.6 C 366.9 152.9 367.5 160.8 367.5 168.0 C 367.5 175.2 367.5 183.3 365.6 190.8 C 363.7 198.3 359.9 206.6 356.0 213.0 C 352.1 219.4 346.3 225.7 342.0 229.0 C 337.7 232.3 335.0 232.3 330.0 233.0 C 325.0 233.7 313.9 236.3 312.0 233.0 C 310.1 229.7 315.2 220.7 318.8 213.0 C 322.4 205.3 329.4 195.7 333.8 187.0 C 338.2 178.3 341.9 168.3 345.0 160.8 C 348.1 153.3 350.0 146.1 352.5 142.0 C 355.0 137.9 359.2 136.1 360.0 136.4 Z"/></clipPath>
<path d="M 360.0 136.4 C 360.8 136.7 364.4 142.3 365.6 147.6 C 366.9 152.9 367.5 160.8 367.5 168.0 C 367.5 175.2 367.5 183.3 365.6 190.8 C 363.7 198.3 359.9 206.6 356.0 213.0 C 352.1 219.4 346.3 225.7 342.0 229.0 C 337.7 232.3 335.0 232.3 330.0 233.0 C 325.0 233.7 313.9 236.3 312.0 233.0 C 310.1 229.7 315.2 220.7 318.8 213.0 C 322.4 205.3 329.4 195.7 333.8 187.0 C 338.2 178.3 341.9 168.3 345.0 160.8 C 348.1 153.3 350.0 146.1 352.5 142.0 C 355.0 137.9 359.2 136.1 360.0 136.4 Z" fill="#f6f6f6"/>
<g clip-path="url(#lc7)"><path d="M 360.0 134.4 C 316.8 165.4 312.0 233.0 312.0 233.0 M 360.0 134.4 C 321.0 163.8 316.6 229.2 313.5 233.0 M 360.0 134.4 C 325.1 162.1 321.2 225.4 315.0 233.0 M 360.0 134.4 C 329.3 160.5 325.9 221.6 316.5 233.0 M 360.0 134.4 C 333.4 158.9 330.5 217.8 318.0 233.0 M 360.0 134.4 C 337.6 157.3 335.1 214.0 319.5 233.0 M 360.0 134.4 C 341.8 155.6 339.8 210.2 321.0 233.0 M 360.0 134.4 C 345.9 154.0 344.4 206.5 322.5 233.0 M 360.0 134.4 C 350.1 152.4 349.0 202.7 324.0 233.0 M 360.0 134.4 C 354.3 150.8 353.6 198.9 325.5 233.0 M 360.0 134.4 C 358.4 149.1 358.2 195.1 327.0 233.0 M 360.0 134.4 C 362.6 147.5 362.9 191.3 328.5 233.0 M 360.0 134.4 C 366.8 145.9 367.5 187.5 330.0 233.0 M 180 136.4 Q 360.0 140.4 400 136.4 M 180 140.0 Q 360.0 144.0 400 140.0 M 180 143.6 Q 360.0 147.6 400 143.6 M 180 147.2 Q 360.0 151.2 400 147.2 M 180 150.8 Q 360.0 154.8 400 150.8 M 180 154.4 Q 360.0 158.4 400 154.4 M 180 158.0 Q 360.0 162.0 400 158.0 M 180 161.6 Q 360.0 165.6 400 161.6 M 180 165.2 Q 360.0 169.2 400 165.2 M 180 168.8 Q 360.0 172.8 400 168.8 M 180 172.4 Q 360.0 176.4 400 172.4 M 180 176.0 Q 360.0 180.0 400 176.0 M 180 179.6 Q 360.0 183.6 400 179.6 M 180 183.2 Q 360.0 187.2 400 183.2 M 180 186.8 Q 360.0 190.8 400 186.8 M 180 190.4 Q 360.0 194.4 400 190.4 M 180 194.0 Q 360.0 198.0 400 194.0 M 180 197.6 Q 360.0 201.6 400 197.6 M 180 201.2 Q 360.0 205.2 400 201.2 M 180 204.8 Q 360.0 208.8 400 204.8 M 180 208.4 Q 360.0 212.4 400 208.4 M 180 212.0 Q 360.0 216.0 400 212.0 M 180 215.6 Q 360.0 219.6 400 215.6 M 180 219.2 Q 360.0 223.2 400 219.2 M 180 222.8 Q 360.0 226.8 400 222.8 M 180 226.4 Q 360.0 230.4 400 226.4 M 180 230.0 Q 360.0 234.0 400 230.0 M 180 233.6 Q 360.0 237.6 400 233.6" fill="none" stroke="#3a3a3a" stroke-width="0.45"/><path d="M 360.0 136.4 C 360.8 136.7 364.4 142.3 365.6 147.6 C 366.9 152.9 367.5 160.8 367.5 168.0 C 367.5 175.2 367.5 183.3 365.6 190.8 C 363.7 198.3 359.9 206.6 356.0 213.0 C 352.1 219.4 346.3 225.7 342.0 229.0 C 337.7 232.3 335.0 232.3 330.0 233.0 C 325.0 233.7 313.9 236.3 312.0 233.0 C 310.1 229.7 315.2 220.7 318.8 213.0 C 322.4 205.3 329.4 195.7 333.8 187.0 C 338.2 178.3 341.9 168.3 345.0 160.8 C 348.1 153.3 350.0 146.1 352.5 142.0 C 355.0 137.9 359.2 136.1 360.0 136.4 Z" fill="url(#lshade)"/></g>
<path d="M 360.0 136.4 C 360.8 136.7 364.4 142.3 365.6 147.6 C 366.9 152.9 367.5 160.8 367.5 168.0 C 367.5 175.2 367.5 183.3 365.6 190.8 C 363.7 198.3 359.9 206.6 356.0 213.0 C 352.1 219.4 346.3 225.7 342.0 229.0 C 337.7 232.3 335.0 232.3 330.0 233.0 C 325.0 233.7 313.9 236.3 312.0 233.0 C 310.1 229.7 315.2 220.7 318.8 213.0 C 322.4 205.3 329.4 195.7 333.8 187.0 C 338.2 178.3 341.9 168.3 345.0 160.8 C 348.1 153.3 350.0 146.1 352.5 142.0 C 355.0 137.9 359.2 136.1 360.0 136.4 Z" fill="none" stroke="#151515" stroke-width="0.8"/>
<clipPath id="lc8"><path d="M 262.5 130.7 C 263.9 130.5 269.1 136.4 273.8 142.0 C 278.5 147.6 286.2 156.4 290.6 164.5 C 295.0 172.6 297.8 182.4 300.0 190.8 C 302.2 199.2 303.5 207.8 304.0 215.0 C 304.5 222.2 307.8 230.7 303.0 234.0 C 298.2 237.3 284.7 235.0 275.0 235.0 C 265.3 235.0 250.8 235.8 245.0 234.0 C 239.2 232.2 241.8 228.6 240.0 224.5 C 238.2 220.4 235.6 215.1 234.4 209.5 C 233.2 203.9 232.4 197.7 233.0 190.8 C 233.6 183.9 235.3 175.5 238.0 168.0 C 240.7 160.5 245.3 152.0 249.4 145.8 C 253.5 139.6 261.1 130.9 262.5 130.7 Z"/></clipPath>
<path d="M 262.5 130.7 C 263.9 130.5 269.1 136.4 273.8 142.0 C 278.5 147.6 286.2 156.4 290.6 164.5 C 295.0 172.6 297.8 182.4 300.0 190.8 C 302.2 199.2 303.5 207.8 304.0 215.0 C 304.5 222.2 307.8 230.7 303.0 234.0 C 298.2 237.3 284.7 235.0 275.0 235.0 C 265.3 235.0 250.8 235.8 245.0 234.0 C 239.2 232.2 241.8 228.6 240.0 224.5 C 238.2 220.4 235.6 215.1 234.4 209.5 C 233.2 203.9 232.4 197.7 233.0 190.8 C 233.6 183.9 235.3 175.5 238.0 168.0 C 240.7 160.5 245.3 152.0 249.4 145.8 C 253.5 139.6 261.1 130.9 262.5 130.7 Z" fill="#f6f6f6"/>
<g clip-path="url(#lc8)"><path d="M 262.5 128.7 C 235.9 148.7 233.0 204.1 245.0 235.0 M 262.5 128.7 C 240.2 149.2 237.7 205.2 248.9 235.0 M 262.5 128.7 C 244.5 149.7 242.5 206.3 252.7 235.0 M 262.5 128.7 C 248.7 150.2 247.2 207.4 256.6 235.0 M 262.5 128.7 C 253.0 150.7 251.9 208.6 260.5 235.0 M 262.5 128.7 C 257.2 151.2 256.7 209.7 264.3 235.0 M 262.5 128.7 C 261.5 151.6 261.4 210.8 268.2 235.0 M 262.5 128.7 C 265.8 152.1 266.1 212.0 272.1 235.0 M 262.5 128.7 C 270.0 152.6 270.9 213.1 275.9 235.0 M 262.5 128.7 C 274.3 153.1 275.6 214.2 279.8 235.0 M 262.5 128.7 C 278.5 153.6 280.3 215.4 283.7 235.0 M 262.5 128.7 C 282.8 154.1 285.1 216.5 287.5 235.0 M 262.5 128.7 C 287.1 154.5 289.8 217.6 291.4 235.0 M 262.5 128.7 C 291.3 155.0 294.5 218.7 295.3 235.0 M 262.5 128.7 C 295.6 155.5 299.3 219.9 299.1 235.0 M 262.5 128.7 C 299.9 156.0 304.0 221.0 303.0 235.0 M 180 130.7 Q 262.5 134.7 400 130.7 M 180 134.3 Q 262.5 138.3 400 134.3 M 180 137.9 Q 262.5 141.9 400 137.9 M 180 141.5 Q 262.5 145.5 400 141.5 M 180 145.1 Q 262.5 149.1 400 145.1 M 180 148.7 Q 262.5 152.7 400 148.7 M 180 152.3 Q 262.5 156.3 400 152.3 M 180 155.9 Q 262.5 159.9 400 155.9 M 180 159.5 Q 262.5 163.5 400 159.5 M 180 163.1 Q 262.5 167.1 400 163.1 M 180 166.7 Q 262.5 170.7 400 166.7 M 180 170.3 Q 262.5 174.3 400 170.3 M 180 173.9 Q 262.5 177.9 400 173.9 M 180 177.5 Q 262.5 181.5 400 177.5 M 180 181.1 Q 262.5 185.1 400 181.1 M 180 184.7 Q 262.5 188.7 400 184.7 M 180 188.3 Q 262.5 192.3 400 188.3 M 180 191.9 Q 262.5 195.9 400 191.9 M 180 195.5 Q 262.5 199.5 400 195.5 M 180 199.1 Q 262.5 203.1 400 199.1 M 180 202.7 Q 262.5 206.7 400 202.7 M 180 206.3 Q 262.5 210.3 400 206.3 M 180 209.9 Q 262.5 213.9 400 209.9 M 180 213.5 Q 262.5 217.5 400 213.5 M 180 217.1 Q 262.5 221.1 400 217.1 M 180 220.7 Q 262.5 224.7 400 220.7 M 180 224.3 Q 262.5 228.3 400 224.3 M 180 227.9 Q 262.5 231.9 400 227.9 M 180 231.5 Q 262.5 235.5 400 231.5 M 180 235.1 Q 262.5 239.1 400 235.1" fill="none" stroke="#3a3a3a" stroke-width="0.45"/><path d="M 262.5 130.7 C 263.9 130.5 269.1 136.4 273.8 142.0 C 278.5 147.6 286.2 156.4 290.6 164.5 C 295.0 172.6 297.8 182.4 300.0 190.8 C 302.2 199.2 303.5 207.8 304.0 215.0 C 304.5 222.2 307.8 230.7 303.0 234.0 C 298.2 237.3 284.7 235.0 275.0 235.0 C 265.3 235.0 250.8 235.8 245.0 234.0 C 239.2 232.2 241.8 228.6 240.0 224.5 C 238.2 220.4 235.6 215.1 234.4 209.5 C 233.2 203.9 232.4 197.7 233.0 190.8 C 233.6 183.9 235.3 175.5 238.0 168.0 C 240.7 160.5 245.3 152.0 249.4 145.8 C 253.5 139.6 261.1 130.9 262.5 130.7 Z" fill="url(#lshade)"/></g>
<path d="M 262.5 130.7 C 263.9 130.5 269.1 136.4 273.8 142.0 C 278.5 147.6 286.2 156.4 290.6 164.5 C 295.0 172.6 297.8 182.4 300.0 190.8 C 302.2 199.2 303.5 207.8 304.0 215.0 C 304.5 222.2 307.8 230.7 303.0 234.0 C 298.2 237.3 284.7 235.0 275.0 235.0 C 265.3 235.0 250.8 235.8 245.0 234.0 C 239.2 232.2 241.8 228.6 240.0 224.5 C 238.2 220.4 235.6 215.1 234.4 209.5 C 233.2 203.9 232.4 197.7 233.0 190.8 C 233.6 183.9 235.3 175.5 238.0 168.0 C 240.7 160.5 245.3 152.0 249.4 145.8 C 253.5 139.6 261.1 130.9 262.5 130.7 Z" fill="none" stroke="#151515" stroke-width="0.8"/>
<!-- cage -->
<g fill="none" stroke="#f0f0f0" stroke-width="0.85">
<path d="M 200.7 97.6 L 238.8 88.4 L 271.6 81.2 L 285.9 80.1 L 327.9 85.1 L 366.0 93.0"/>
<path d="M 202.0 100.2 L 238.8 91.7 L 270.3 85.1 L 290.5 89.0 L 333.8 88.4 L 369.2 95.4"/>
<path d="M 200.7 97.6 L 209.3 105.5"/>
<path d="M 366.0 93.0 L 358.7 102.2"/>
<path d="M 209.3 105.5 L 258.5 98.2 L 286.0 95.6 L 323.3 98.2 L 358.7 102.2"/>
<path d="M 209.3 105.5 L 244.0 115.3 L 258.5 119.2"/>
<path d="M 358.7 102.2 L 336.4 116.6 L 310.2 118.0"/>
<path d="M 336.4 116.6 L 369.2 95.4"/>
<path d="M 335.0 118.5 L 366.0 93.7"/>
<path d="M 286.0 80.0 L 308.3 93.1"/>
<path d="M 286.0 80.0 L 289.7 99.7"/>
<path d="M 286.0 80.0 L 272.4 95.7"/>
<path d="M 286.0 80.0 L 264.7 89.9"/>
<path d="M 286.0 80.0 L 279.3 83.3"/>
<path d="M 286.0 80.0 L 303.6 84.3"/>
<path d="M 308.3 93.1 L 289.7 99.7"/>
<path d="M 308.3 93.1 L 323.4 111.6"/>
<path d="M 289.7 99.7 L 323.4 111.6"/>
<path d="M 323.4 111.6 L 270.1 113.5"/>
<path d="M 289.7 99.7 L 272.4 95.7"/>
<path d="M 289.7 99.7 L 270.1 113.5"/>
<path d="M 272.4 95.7 L 270.1 113.5"/>
<path d="M 270.1 113.5 L 238.7 105.9"/>
<path d="M 272.4 95.7 L 264.7 89.9"/>
<path d="M 272.4 95.7 L 238.7 105.9"/>
<path d="M 264.7 89.9 L 238.7 105.9"/>
<path d="M 238.7 105.9 L 248.6 89.4"/>
<path d="M 264.7 89.9 L 279.3 83.3"/>
<path d="M 264.7 89.9 L 248.6 89.4"/>
<path d="M 279.3 83.3 L 248.6 89.4"/>
<path d="M 248.6 89.4 L 301.9 83.5"/>
<path d="M 279.3 83.3 L 303.6 84.3"/>
<path d="M 279.3 83.3 L 301.9 83.5"/>
<path d="M 303.6 84.3 L 301.9 83.5"/>
<path d="M 301.9 83.5 L 334.3 97.1"/>
<path d="M 303.6 84.3 L 308.3 93.1"/>
<path d="M 303.6 84.3 L 334.3 97.1"/>
<path d="M 308.3 93.1 L 334.3 97.1"/>
<path d="M 334.3 97.1 L 323.4 111.6"/>
<path d="M 271.6 81.2 L 310.2 115.3"/>
<path d="M 327.9 85.1 L 262.0 117.0"/>
<path d="M 237.6 91.0 L 300.0 118.0"/>
<path d="M 333.4 88.4 L 272.0 118.0"/>
<path d="M 200.7 97.6 C 199.4 100.5 194.8 107.9 192.9 115.3 C 191.0 122.7 189.9 133.7 189.0 142.0 C 188.1 150.3 187.5 157.0 187.5 165.0 C 187.5 173.0 187.6 182.5 189.0 190.0 C 190.4 197.5 192.5 204.2 196.0 210.0 C 199.5 215.8 204.7 220.7 210.0 225.0 C 215.3 229.3 225.0 234.2 228.0 236.0 "/>
<path d="M 209.3 105.5 C 208.5 107.3 206.3 110.5 204.7 116.6 C 203.0 122.7 200.5 133.9 199.4 142.0 C 198.3 150.1 197.9 157.0 198.0 165.0 C 198.1 173.0 198.7 182.5 200.0 190.0 C 201.3 197.5 203.0 204.2 206.0 210.0 C 209.0 215.8 213.7 220.8 218.0 225.0 C 222.3 229.2 229.7 233.3 232.0 235.0 "/>
<path d="M 238.8 88.4 C 238.2 89.8 236.4 92.5 234.9 97.0 C 233.4 101.5 231.1 109.0 229.6 115.3 C 228.1 121.6 226.6 131.7 226.0 135.0 "/>
<path d="M 238.8 91.7 C 238.3 93.9 237.3 96.4 236.0 104.8 C 234.7 113.2 231.8 135.8 231.0 142.0 "/>
<path d="M 366.0 93.0 C 367.4 96.1 372.2 103.2 374.5 111.4 C 376.8 119.6 378.4 133.1 379.7 142.0 C 380.9 150.9 381.9 156.2 382.0 165.0 C 382.1 173.8 381.7 186.7 380.0 195.0 C 378.3 203.3 375.3 209.5 372.0 215.0 C 368.7 220.5 364.0 224.5 360.0 228.0 C 356.0 231.5 350.0 234.7 348.0 236.0 "/>
<path d="M 369.2 95.4 C 370.5 98.1 374.8 103.6 377.0 111.4 C 379.2 119.2 381.1 133.1 382.4 142.0 C 383.7 150.9 384.9 156.2 385.0 165.0 C 385.1 173.8 384.7 186.5 383.0 195.0 C 381.3 203.5 378.3 210.3 375.0 216.0 C 371.7 221.7 366.8 225.5 363.0 229.0 C 359.2 232.5 353.8 235.7 352.0 237.0 "/>
<path d="M 358.7 102.2 C 359.2 105.2 360.9 113.4 362.0 120.0 C 363.1 126.6 364.5 134.5 365.3 142.0 C 366.1 149.5 367.2 157.0 367.0 165.0 C 366.8 173.0 365.8 182.5 364.0 190.0 C 362.2 197.5 359.3 203.7 356.0 210.0 C 352.7 216.3 346.0 225.0 344.0 228.0 "/>
<path d="M 333.8 88.4 C 334.4 91.1 335.7 95.9 337.7 104.8 C 339.7 113.7 344.3 135.8 345.6 142.0 "/>
<path d="M 197.0 153.0 L 197.0 134.5 L 210.0 138.0 L 210.0 153.0"/>
<path d="M 226.0 215.0 L 236.0 233.0"/>
<path d="M 240.0 225.0 L 247.0 234.0"/>
<path d="M 262.0 222.0 L 266.0 234.0"/>
<path d="M 300.0 222.0 L 296.0 234.0"/>
<path d="M 322.0 224.0 L 318.0 234.0"/>
<path d="M 345.0 225.0 L 340.0 234.0"/>
</g>
<path d="M286 67 L286 107" stroke="#3a8a5a" stroke-width="0.8"/>
<!-- gizmo -->
<path d="M286 364 L286 400" stroke="#d8a040" stroke-width="0.8"/>
<circle cx="286" cy="364" r="1.5" fill="#f0a030"/>
<path d="M286 400 L286 467" stroke="#3ccf6a" stroke-width="0.8"/>
<path d="M282.5 407 L286 393 L289.5 407 Z" fill="#2fd06a"/>
<path d="M268 442 L268 420 L275 424" stroke="#d05050" fill="none" stroke-width="0.8"/>
<path d="M319 426 L339 426 L339 448 M331 426 L339 434" stroke="#4a7ad0" fill="none" stroke-width="0.8"/>
</svg>
</div>

<!-- Object manager -->
<div class="win" style="top:79px;height:168px">
  <div class="tb"><div class="c4d"></div><div class="t">对象</div>
    <svg class="abs" style="left:130px;top:0" width="66" height="13"><g fill="none" stroke="#666" stroke-width="0.8">
    <path d="M4.5 6.5 H10.5"/><rect x="28.5" y="3.5" width="5.5" height="5.5" rx="0.6"/><path d="M50.5 3.5 L56 9 M56 3.5 L50.5 9"/></g></svg>
  </div>
  <div class="mb" style="top:13px;height:9px">
    <div class="ham" style="top:2px"></div>
    <div class="txt" style="left:15px;top:1px">文件</div>
    <div class="txt" style="left:33px;top:1px">编辑</div>
    <div class="txt" style="left:51px;top:1px">查看</div>
    <div class="txt" style="left:69px;top:1px">对象</div>
    <div class="txt" style="left:87px;top:1px">标签</div>
    <div class="txt" style="left:105px;top:1px">书签</div>
  </div>
  <div class="abs" style="left:0;top:22px;width:196px;height:3px;background:#363636"></div>
  <div class="row" style="top:25px;background:#444"></div>
  <div class="row" style="top:35px;background:#3a3a3a"></div>
  <div class="row" style="top:45px;background:#444"></div>
  <div class="row" style="top:55px;background:#3a3a3a"></div>
  <div class="abs" style="left:48px;top:25px;width:1px;height:143px;background:#474747"></div>
  <div class="abs" style="left:68px;top:25px;width:1px;height:143px;background:#474747"></div>
  <div class="abs" style="left:4px;top:25px;width:1px;height:35px;background:#8a8a8a"></div>
  <div class="abs" style="left:4px;top:30px;width:5px;height:1px;background:#8a8a8a"></div>
  <svg class="abs" style="left:0;top:25px" width="70" height="40" viewBox="0 0 70 40">
    <path d="M9.5 6.5 L12.5 2 L15.5 6.5 L15.5 8 L9.5 8 Z" fill="#8fd0f0" stroke="#5aaad8" stroke-width="0.5"/>
    <g fill="none" stroke="#999" stroke-width="0.6">
      <rect x="1.5" y="12.5" width="5" height="5"/><path d="M2.5 15 H5.5 M4 13.5 V16.5"/>
      <rect x="1.5" y="22.5" width="5" height="5"/><path d="M2.5 25 H5.5 M4 23.5 V26.5"/>
      <rect x="1.5" y="32.5" width="5" height="5"/><path d="M2.5 35 H5.5 M4 33.5 V36.5"/>
    </g>
    <path d="M10 12 V17.5 H15" fill="none" stroke="#ddd" stroke-width="1"/>
    <circle cx="13.5" cy="13.5" r="2" fill="#bfe4fb"/>
    <circle cx="12.5" cy="25" r="2.6" fill="#3ad070"/>
    <path d="M10 32 V37.5 H15" fill="none" stroke="#ddd" stroke-width="1"/>
    <circle cx="13.5" cy="33.5" r="2" fill="#bfe4fb"/>
    <g fill="#6a6a6a" stroke="#8a8a8a" stroke-width="0.5">
      <rect x="50.5" y="1.5" width="6" height="6"/><rect x="50.5" y="11.5" width="6" height="6"/>
      <rect x="50.5" y="21.5" width="6" height="6"/><rect x="50.5" y="31.5" width="6" height="6"/>
    </g>
    <path d="M51.5 6.5 L55.5 2.5 M51.5 16.5 L55.5 12.5 M51.5 26.5 L55.5 22.5 M51.5 36.5 L55.5 32.5" stroke="#9a9a9a" stroke-width="0.6"/>
    <g fill="#aaa"><circle cx="59.5" cy="2.5" r="1.1"/><circle cx="59.5" cy="6.5" r="0.9"/>
    <circle cx="59.5" cy="12.5" r="0.9"/><circle cx="59.5" cy="16.5" r="0.9"/>
    <circle cx="59.5" cy="22.5" r="0.9"/><circle cx="59.5" cy="26.5" r="0.9"/>
    <circle cx="59.5" cy="32.5" r="0.9"/><circle cx="59.5" cy="36.5" r="0.9"/></g>
    <path d="M61.5 4.5 L63 6 L66.5 2.5 M61.5 24.5 L63 26 L66.5 22.5" fill="none" stroke="#3cc070" stroke-width="0.8"/>
  </svg>
  <div class="txt" style="left:18px;top:26px;color:#e8b838">地形</div>
  <div class="txt" style="left:18px;top:36px">屋顶</div>
  <div class="txt" style="left:18px;top:46px">房子主体</div>
  <div class="txt" style="left:18px;top:56px">设计师深海</div>
  <svg class="abs" style="left:69px;top:25px" width="12" height="35">
    <circle cx="3" cy="2.5" r="1.5" fill="#e08a30"/><circle cx="6" cy="6.5" r="1.6" fill="#d07020"/>
    <circle cx="5.5" cy="25" r="4.2" fill="#c8c8c8"/><circle cx="4.5" cy="24" r="2.5" fill="#f4f4f4"/>
  </svg>
  <svg class="abs" style="left:157px;top:13px" width="39" height="9" viewBox="0 0 39 9">
    <g fill="none" stroke="#bbb" stroke-width="0.6">
      <circle cx="3" cy="3.5" r="1.8"/><path d="M4.3 4.8 L6.3 7"/>
      <path d="M10 4.5 L13 1.5 L16 4.5 V8 H10 Z"/>
      <path d="M19 1.5 H25 L23 4.5 V8 L21 7 V4.5 Z"/>
      <rect x="29.5" y="1" width="5" height="7"/>
    </g>
  </svg>
</div>

<!-- Attribute manager -->
<div class="win" style="top:248px;height:213px;background:#404040">
  <div class="tb" style="height:14px"><div class="c4d" style="top:4px"></div><div class="t" style="top:3px;color:#777">属性</div>
    <svg class="abs" style="left:130px;top:0" width="66" height="14"><g fill="none" stroke="#999" stroke-width="0.8">
    <path d="M4.5 7 H10.5"/><rect x="28.5" y="4" width="5.5" height="5.5" rx="0.6"/><path d="M50.5 4 L56 9.5 M56 4 L50.5 9.5"/></g></svg>
  </div>
  <div class="mb" style="top:14px;height:11px;background:#3c3c3c">
    <div class="ham" style="top:3px"></div>
    <div class="txt" style="left:15px;top:2px">模式</div>
    <div class="txt" style="left:33px;top:2px">编辑</div>
    <div class="txt" style="left:51px;top:2px">用户数据</div>
    <svg class="abs" style="left:126px;top:1px" width="70" height="10" viewBox="0 0 70 10">
      <g fill="none" stroke="#bbb" stroke-width="0.7">
        <path d="M1 5 H9 M1 5 L4 2 M1 5 L4 8"/>
        <path d="M11 5 H19 M19 5 L16 2 M19 5 L16 8" stroke="#777"/>
        <path d="M25 9 V1 M25 1 L22 4 M25 1 L28 4"/>
        <circle cx="33" cy="3.5" r="2"/><path d="M34.5 5 L36.5 7.5"/>
        <rect x="40.5" y="4.5" width="5" height="4"/><path d="M41.5 4.5 V3 A1.5 1.5 0 0 1 44.5 3 V4.5"/>
        <circle cx="53" cy="5" r="3.6"/><path d="M51.5 5 H54.5"/>
        <rect x="61" y="1" width="5.5" height="8" rx="0.5"/><path d="M62.5 5 L64.5 3.5 V6.5 Z" fill="#ddd"/>
      </g>
    </svg>
  </div>
</div>
<svg class="abs" style="left:492px;top:276px" width="10" height="10"><path d="M1 6 L5 1.5 L9 6 V9.5 H1 Z" fill="#8fd0f0" stroke="#5aaad8" stroke-width="0.5"/></svg>
<div class="txt" style="left:505px;top:278px;color:#bbb">地形对象 [地形]</div>
<div class="tab" style="left:492px;width:46px">基本</div>
<div class="tab" style="left:538.6px;width:47.4px">坐标</div>
<div class="tab" style="left:586px;width:46px;background:#7ba3d8;color:#222">对象</div>
<div class="tab" style="left:632px;width:47px;background:#4c4c4c;color:#ddd;font-size:6px;letter-spacing:-0.2px">平滑着色(Phong)</div>
<div class="txt" style="left:492px;top:300px;color:#eee;font-weight:bold">对象属性</div>
<div class="eye" style="left:491.5px;top:311.7px"></div>
<div class="lbl" style="left:503.5px;top:311.4px">尺寸 . . . .</div>
<div class="fld" style="left:533.0px;top:311.4px;width:37.5px"><div class="v">5000 cm</div><svg class="abs" style="right:2px;top:1px" width="4" height="7"><path d="M0.6 2.6 L2 1.2 L3.4 2.6 M0.6 4.6 L2 6 L3.4 4.6" fill="none" stroke="#999" stroke-width="0.6"/></svg></div>
<div class="fld" style="left:573.5px;top:311.4px;width:37.0px"><div class="v">100 cm</div><svg class="abs" style="right:2px;top:1px" width="4" height="7"><path d="M0.6 2.6 L2 1.2 L3.4 2.6 M0.6 4.6 L2 6 L3.4 4.6" fill="none" stroke="#999" stroke-width="0.6"/></svg></div>
<div class="fld" style="left:613.5px;top:311.4px;width:37.0px"><div class="v">5000 cm</div><svg class="abs" style="right:2px;top:1px" width="4" height="7"><path d="M0.6 2.6 L2 1.2 L3.4 2.6 M0.6 4.6 L2 6 L3.4 4.6" fill="none" stroke="#999" stroke-width="0.6"/></svg></div>
<div class="eye" style="left:491.5px;top:322.7px"></div>
<div class="lbl" style="left:503.5px;top:322.4px">宽度分段 .</div>
<div class="fld" style="left:533.0px;top:322.4px;width:37.5px"><div class="v">700</div><svg class="abs" style="right:2px;top:1px" width="4" height="7"><path d="M0.6 2.6 L2 1.2 L3.4 2.6 M0.6 4.6 L2 6 L3.4 4.6" fill="none" stroke="#999" stroke-width="0.6"/></svg></div>
<div class="eye" style="left:491.5px;top:333.7px"></div>
<div class="lbl" style="left:503.5px;top:333.4px">深度分段 .</div>
<div class="fld" style="left:533.0px;top:333.4px;width:37.5px"><div class="v">700</div><svg class="abs" style="right:2px;top:1px" width="4" height="7"><path d="M0.6 2.6 L2 1.2 L3.4 2.6 M0.6 4.6 L2 6 L3.4 4.6" fill="none" stroke="#999" stroke-width="0.6"/></svg></div>
<div class="eye" style="left:491.5px;top:344.7px"></div>
<div class="lbl" style="left:503.5px;top:344.4px">粗糙褶皱 .</div>
<div class="fld" style="left:533.0px;top:344.4px;width:37.5px"><div class="v">100 %</div><svg class="abs" style="right:2px;top:1px" width="4" height="7"><path d="M0.6 2.6 L2 1.2 L3.4 2.6 M0.6 4.6 L2 6 L3.4 4.6" fill="none" stroke="#999" stroke-width="0.6"/></svg></div>
<div class="eye" style="left:491.5px;top:355.7px"></div>
<div class="lbl" style="left:503.5px;top:355.4px">精细褶皱 .</div>
<div class="fld" style="left:533.0px;top:355.4px;width:37.5px"><div class="v">100 %</div><svg class="abs" style="right:2px;top:1px" width="4" height="7"><path d="M0.6 2.6 L2 1.2 L3.4 2.6 M0.6 4.6 L2 6 L3.4 4.6" fill="none" stroke="#999" stroke-width="0.6"/></svg></div>
<div class="eye" style="left:491.5px;top:366.7px"></div>
<div class="lbl" style="left:503.5px;top:366.4px">缩放 . . . .</div>
<div class="fld" style="left:533.0px;top:366.4px;width:37.5px"><div class="v">1</div><svg class="abs" style="right:2px;top:1px" width="4" height="7"><path d="M0.6 2.6 L2 1.2 L3.4 2.6 M0.6 4.6 L2 6 L3.4 4.6" fill="none" stroke="#999" stroke-width="0.6"/></svg></div>
<div class="eye" style="left:491.5px;top:377.7px"></div>
<div class="lbl" style="left:503.5px;top:377.4px">海平面 . . .</div>
<div class="fld" style="left:533.0px;top:377.4px;width:37.5px"><div class="v">0 %</div><svg class="abs" style="right:2px;top:1px" width="4" height="7"><path d="M0.6 2.6 L2 1.2 L3.4 2.6 M0.6 4.6 L2 6 L3.4 4.6" fill="none" stroke="#999" stroke-width="0.6"/></svg></div>
<div class="eye" style="left:491.5px;top:388.7px"></div>
<div class="lbl" style="left:503.5px;top:388.4px">地平面 . . .</div>
<div class="fld" style="left:533.0px;top:388.4px;width:37.5px"><div class="v">100 %</div><svg class="abs" style="right:2px;top:1px" width="4" height="7"><path d="M0.6 2.6 L2 1.2 L3.4 2.6 M0.6 4.6 L2 6 L3.4 4.6" fill="none" stroke="#999" stroke-width="0.6"/></svg></div>
<div class="eye" style="left:491.5px;top:399.5px"></div>
<div class="lbl" style="left:503.5px;top:399.2px">方向 . . . .</div>
<div class="fld" style="left:533px;top:399.2px;width:150px;background:#555"><div class="v">+Y</div><svg class="abs" style="right:3px;top:2px" width="6" height="5"><path d="M1 1.2 L3 3.4 L5 1.2" fill="none" stroke="#ddd" stroke-width="0.9"/></svg></div>
<div class="eye" style="left:491.5px;top:409.8px"></div>
<div class="lbl" style="left:503.5px;top:409.5px">多重不规则</div>
<div class="chk" style="left:532.6px;top:410.0px"><svg width="7" height="7" style="position:absolute;left:0;top:0"><path d="M1.5 3.5 L3 5 L5.7 1.8" fill="none" stroke="#222" stroke-width="0.9"/></svg></div>
<div class="eye" style="left:491.5px;top:419.8px"></div>
<div class="lbl" style="left:503.5px;top:419.5px">随机 . . . .</div>
<div class="fld" style="left:533.0px;top:419.5px;width:37.5px"><div class="v">0</div><svg class="abs" style="right:2px;top:1px" width="4" height="7"><path d="M0.6 2.6 L2 1.2 L3.4 2.6 M0.6 4.6 L2 6 L3.4 4.6" fill="none" stroke="#999" stroke-width="0.6"/></svg></div>
<div class="eye" style="left:491.5px;top:430.3px"></div>
<div class="lbl" style="left:503.5px;top:430.0px">限于海平面</div>
<div class="chk" style="left:532.6px;top:430.5px"><svg width="7" height="7" style="position:absolute;left:0;top:0"><path d="M1.5 3.5 L3 5 L5.7 1.8" fill="none" stroke="#222" stroke-width="0.9"/></svg></div>
<div class="eye" style="left:491.5px;top:440.8px"></div>
<div class="lbl" style="left:503.5px;top:440.5px">球状 . . . .</div>
<div class="chk" style="left:532.6px;top:441.0px;background:none;border:1px solid #5e5e5e"></div>
</body></html>
